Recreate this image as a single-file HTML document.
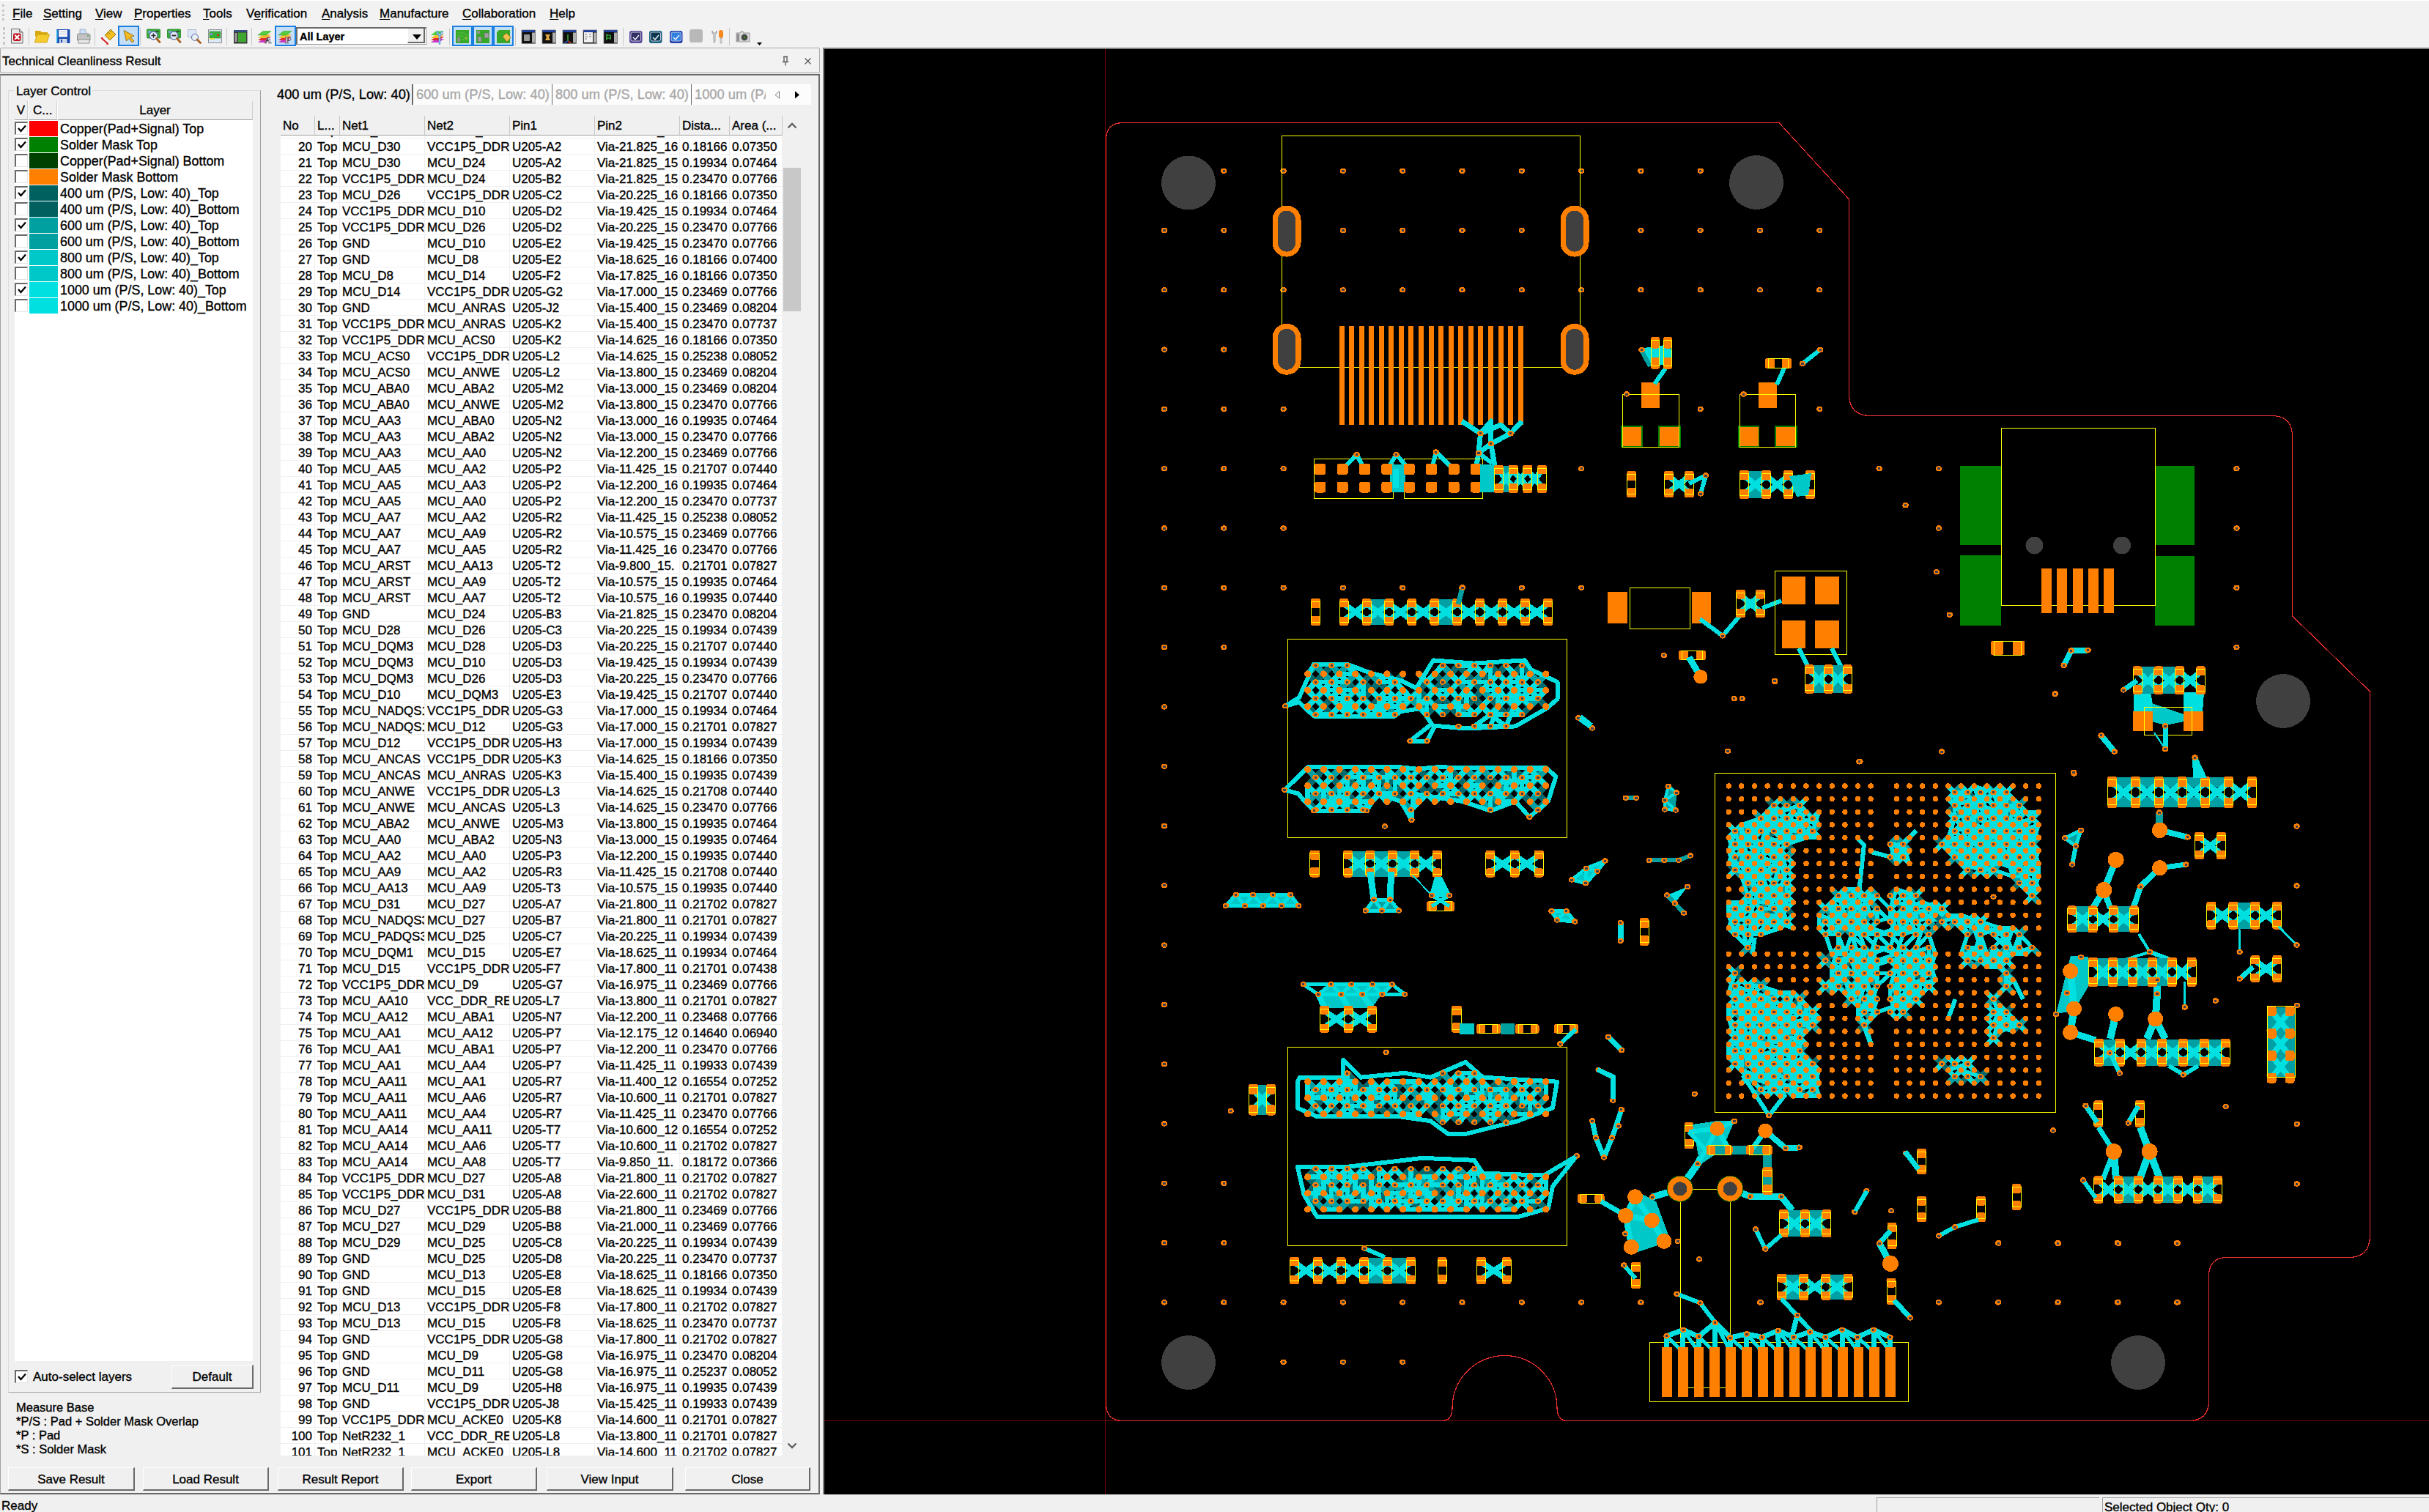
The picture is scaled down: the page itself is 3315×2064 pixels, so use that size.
<!DOCTYPE html>
<html><head><meta charset="utf-8"><style>
*{margin:0;padding:0}
html,body{width:3315px;height:2064px;overflow:hidden;background:#F0F0F0;font-family:"Liberation Sans",sans-serif;color:#000;position:relative;-webkit-text-stroke:0.35px currentColor}
#menubar{position:absolute;left:0;top:0;width:3315px;height:65px;background:#F2F2F2;border-top:1px solid #fff;box-sizing:border-box}
.menu{position:absolute;top:8px;font-size:17px;line-height:20px;white-space:nowrap}
.menu u{text-decoration:underline;text-underline-offset:2px}
.grip{position:absolute;width:3px;border-left:3px dotted #c8c8c8}
#toolbar{position:absolute;left:0;top:0;width:1120px;height:65px}
.tsep{position:absolute;top:38px;width:1px;height:24px;background:#c8c8c8}
.tsel{position:absolute;top:35px;height:24px;background:#C4DEF6;border:2px solid #1A7FE0}
svg text{-webkit-text-stroke:0}
#combo{position:absolute;left:404px;top:37px;width:175px;height:21px;background:#fff;border:1px solid #A0A0A0;border-top:2px solid #696969;border-left:2px solid #696969;font-weight:bold;font-size:14.5px;line-height:18px}
#cbtn{position:absolute;left:150px;top:0px;width:24px;height:20px;background:#F0F0F0;border-right:2px solid #696969;border-bottom:2px solid #696969;box-sizing:border-box;border-left:1px solid #fff}
#docktitle{position:absolute;left:0;top:65px;width:1117px;height:33px;border:1px solid #A8A8A8;border-radius:2px;font-size:17px;line-height:20px;background:#F2F2F2}
#dockbody{position:absolute;left:0;top:101px;width:1119px;height:1939px;border:1px solid #A0A0A0;border-top:2px solid #696969;box-sizing:border-box;border-bottom:2px solid #696969;border-right:2px solid #696969}
#grp{position:absolute;left:11px;top:123px;width:345px;height:1778px;border:1px solid #DCDCDC;box-sizing:border-box;border-right:1px solid #A0A0A0;border-bottom:1px solid #A0A0A0}
#grplabel{position:absolute;left:19px;top:115px;padding:0 3px;background:#F0F0F0;font-size:17px;line-height:20px}
#ltable{position:absolute;left:20px;top:138px;width:325px;height:1720px;background:#fff;font-size:17.5px}
.lhdr{position:absolute;top:0;height:26px;line-height:26px;background:#F0F0F0;border-right:1px solid #D0D0D0;border-bottom:1px solid #A0A0A0;box-sizing:border-box;font-size:17px}
.lcb{position:absolute;left:0;width:18px;height:18px;box-sizing:border-box;border:1px solid #fff;border-top:2px solid #696969;border-left:2px solid #696969;border-right:1px solid #E3E3E3;border-bottom:1px solid #E3E3E3;background:#fff}
#ltable .lcb{left:0}
.lsw{position:absolute;left:20px;width:39px;height:21px}
.ltx{position:absolute;left:62px;height:22px;line-height:22px;white-space:nowrap;font-size:17.9px}
.txt{position:absolute;font-size:17px;line-height:20px;white-space:nowrap}
.mb{font-size:16.5px}
.btn{position:absolute;box-sizing:border-box;border:1px solid #fff;border-right:2px solid #696969;border-bottom:2px solid #696969;background:#F0F0F0;text-align:center;font-size:17px}
#tabs{position:absolute;left:375px;top:115px;width:731px;height:28px;background:#FCFCFC;font-size:18.3px}
.tab{position:absolute;top:0;height:28px;line-height:28px;white-space:nowrap;color:#A8A8A8;padding-left:3px;box-sizing:border-box;border-right:1px solid #6A6A6A}
.tab.act{color:#000;background:#F0F0F0;border-right:2px solid #6A6A6A}
.tab:nth-child(4){border-right:none}
#mtable{position:absolute;left:382px;top:158px;width:686px;height:1829px;overflow:hidden}
.mh{position:absolute;top:0;height:27px;line-height:28px;background:#F0F0F0;border-right:1px solid #C8C8C8;border-bottom:1px solid #A0A0A0;font-size:17px;padding-left:3px;box-sizing:border-box;z-index:2;white-space:nowrap;overflow:hidden}
#mbody{position:absolute;left:0;top:27px;width:686px;height:1802px;overflow:hidden}
.mr{position:absolute;left:0;width:686px;height:22px}
.mc{position:absolute;top:0;height:22px;line-height:24px;white-space:nowrap;overflow:hidden;background:#fff;border-right:1px solid #F0F0F0;border-bottom:1px solid #F0F0F0;box-sizing:content-box;font-size:17px;padding-left:3px;box-sizing:border-box}
.mc.r{text-align:right;padding-right:3px;padding-left:0}
#sbar{position:absolute;left:1069px;top:158px;width:24px;height:1829px;background:#F0F0F0}
#sthumb{position:absolute;left:0;top:71px;width:24px;height:196px;background:#C8C8C8}
#status{position:absolute;left:0;top:2040px;width:3315px;height:24px;background:#F0F0F0;font-size:17px;line-height:24px}
.spanel{position:absolute;top:4px;height:20px;border-top:1px solid #A0A0A0;border-left:1px solid #A0A0A0;box-sizing:border-box}
#canvas{position:absolute;left:1123px;top:65px;width:2192px;height:1975px;background:#000;border-left:2px solid #808080;border-top:2px solid #808080;box-sizing:border-box;overflow:hidden}
</style></head><body>
<div id="menubar">
<div class="grip" style="left:3px;top:5px;height:22px"></div>
<span class="menu" style="left:17px"><u>F</u>ile</span>
<span class="menu" style="left:59px"><u>S</u>etting</span>
<span class="menu" style="left:130px"><u>V</u>iew</span>
<span class="menu" style="left:183px"><u>P</u>roperties</span>
<span class="menu" style="left:277px"><u>T</u>ools</span>
<span class="menu" style="left:336px">V<u>e</u>rification</span>
<span class="menu" style="left:439px"><u>A</u>nalysis</span>
<span class="menu" style="left:518px"><u>M</u>anufacture</span>
<span class="menu" style="left:631px"><u>C</u>ollaboration</span>
<span class="menu" style="left:750px"><u>H</u>elp</span>
</div>
<div id="toolbar">
<div class="grip" style="left:4px;top:37px;height:24px"></div>
<div class="tsel" style="left:161px;width:25px"></div>
<div class="tsel" style="left:375px;width:25px"></div>
<div class="tsel" style="left:617px;width:24px"></div>
<div class="tsel" style="left:645px;width:24px"></div>
<div class="tsel" style="left:673px;width:24px"></div>
<div class="tsep" style="left:39px"></div>
<div class="tsep" style="left:129px"></div>
<div class="tsep" style="left:191px"></div>
<div class="tsep" style="left:309px"></div>
<div class="tsep" style="left:343px"></div>
<div class="tsep" style="left:613px"></div>
<div class="tsep" style="left:703px"></div>
<div class="tsep" style="left:850px"></div>
<div class="tsep" style="left:995px"></div>
<svg style="position:absolute;left:0;top:0" width="1120" height="66"><g transform="translate(15,39)"><path d="M0.5 0.5h11l4.5 4.5v15h-15.5z" fill="#e8e8e8" stroke="#6a6a6a"/><path d="M11.5 0.5v4.5h4.5" fill="#c8c8c8" stroke="#6a6a6a"/><rect x="3" y="6.5" width="10.5" height="10.5" rx="2" fill="#c0101c"/><path d="M5.3 8.8l6 6M11.3 8.8l-6 6" stroke="#fff" stroke-width="2.2"/></g><g transform="translate(47,40)"><path d="M1 2h7l2 2h8v6h-17z" fill="#d8a810"/><path d="M0.5 18 L3.5 7h17l-3.5 11z" fill="#f4cc30" stroke="#c89808" stroke-width="0.8"/></g><g transform="translate(77,40)"><rect x="0" y="0" width="18.5" height="19" rx="1" fill="#1848b0"/><rect x="3" y="1" width="12" height="9.5" fill="#f4f4f8"/><path d="M4 3.5h10M4 6h10" stroke="#c0c8e0" stroke-width="0.8"/><rect x="4" y="13" width="10.5" height="6" fill="#d0d8e8"/><rect x="6" y="14" width="2" height="4" fill="#1848b0"/><rect x="0" y="1" width="1.5" height="17" fill="#30c0f0"/></g><g transform="translate(105,39)"><path d="M4 1h7l3 7h-10z" fill="#c8e0f8" stroke="#8090a0" stroke-width="0.6"/><path d="M0.5 9 Q0.5 7 3 7 h12 q3 0 3 2 v7 h-17.5z" fill="#c4c4c4" stroke="#7a7a7a" stroke-width="0.8"/><rect x="2" y="15" width="15" height="5" fill="#e8e8e8" stroke="#7a7a7a" stroke-width="0.8"/><circle cx="15" cy="10" r="0.9" fill="#30a030"/></g><g transform="translate(138,40)"><path d="M5 8 L13 0 L20 7 L12 15 Z" fill="#f0c020" stroke="#806010" stroke-width="0.8"/><path d="M8 6l2 2M10 4l2 2M12 2l2 2" stroke="#806010" stroke-width="0.8"/><path d="M0.5 12 L9.5 20" stroke="#d81818" stroke-width="1.8"/><path d="M0 11l3 0.5l-1.5 2.5zM10 21l-3-0.5l1.5-2.5z" fill="#d81818"/></g><g transform="translate(168,41)"><path d="M1 0.5 L15 8 L10 9.5 L15 15 L12.5 17 L8 11.5 L4.5 15 Z" fill="#f4b820" stroke="#806010" stroke-width="0.8"/></g><g transform="translate(200,39)"><rect x="0.5" y="1" width="18" height="12" rx="1" fill="#38b038" stroke="#208020" stroke-width="0.8"/><rect x="2" y="3" width="4" height="3" fill="#80a0e0"/><path d="M12 4h5" stroke="#303030" stroke-width="1.5"/><circle cx="9.5" cy="9.5" r="5.5" fill="#e4ecfc" stroke="#6070b0" stroke-width="1.3"/><path d="M6.5 9.5h6M9.5 6.5v6" stroke="#303030" stroke-width="1.6"/><path d="M13.5 13.5 L18 18.5" stroke="#a86020" stroke-width="2.8" stroke-linecap="round"/></g><g transform="translate(228,39)"><rect x="0.5" y="1" width="18" height="12" rx="1" fill="#38b038" stroke="#208020" stroke-width="0.8"/><rect x="2" y="3" width="4" height="3" fill="#80a0e0"/><path d="M12 4h5" stroke="#303030" stroke-width="1.5"/><circle cx="9.5" cy="9.5" r="5.5" fill="#e4ecfc" stroke="#6070b0" stroke-width="1.3"/><path d="M6.5 9.5h6" stroke="#303030" stroke-width="2"/><path d="M13.5 13.5 L18 18.5" stroke="#a86020" stroke-width="2.8" stroke-linecap="round"/></g><g transform="translate(256,40)"><rect x="0.5" y="0.5" width="11" height="10" fill="#dce8f8" stroke="#8898b0" stroke-dasharray="1.2 0.8"/><circle cx="10" cy="11" r="4.5" fill="#e8f0fc" stroke="#6878a8" stroke-width="1.2"/><path d="M13 14 L17.5 18.5" stroke="#a86020" stroke-width="2.8" stroke-linecap="round"/></g><g transform="translate(284,40)"><rect x="0.5" y="0.5" width="18" height="18" fill="#dce8f8" stroke="#505050" stroke-dasharray="1.2 0.8"/><rect x="2" y="3" width="15" height="9" fill="#38b038" stroke="#208020" stroke-width="0.6"/><rect x="3" y="5" width="3" height="3" fill="#8090d0"/><rect x="12" y="7" width="3" height="2" fill="#e02020"/><rect x="2" y="12" width="7" height="2" fill="#e0e040"/></g><g transform="translate(319,41)"><rect x="0" y="0" width="18.5" height="18.5" fill="#3a3a3a"/><rect x="0.5" y="0.5" width="17.5" height="1.5" fill="#3060c0"/><rect x="1.5" y="4" width="3" height="12" fill="#a0a0a0"/><rect x="6" y="3.5" width="11" height="13" fill="#40a830"/></g><g transform="translate(352,42)"><path d="M0 16 L11 16 L18 11 L7 11Z" fill="#c838c8"/><path d="M0 13 L11 13 L18 8 L7 8Z" fill="#e03030"/><path d="M0 10 L11 10 L18 5 L7 5Z" fill="#f0c030"/><path d="M0 6 L11 6 L18 0.5 L7 0.5Z" fill="#50d040" stroke="#309020" stroke-width="0.5"/><text x="9" y="17" font-family="Liberation Serif" font-weight="bold" font-size="13" fill="#fff" stroke="#404040" stroke-width="0.6">A</text></g><g transform="translate(380,42)"><path d="M0 16 L11 16 L18 11 L7 11Z" fill="#c838c8"/><path d="M0 13 L11 13 L18 8 L7 8Z" fill="#e03030"/><path d="M0 10 L11 10 L18 5 L7 5Z" fill="#f0c030"/><path d="M0 6 L11 6 L18 0.5 L7 0.5Z" fill="#50d040" stroke="#309020" stroke-width="0.5"/><text x="9" y="17" font-family="Liberation Serif" font-weight="bold" font-size="13" fill="#fff" stroke="#404040" stroke-width="0.6">P</text></g><g transform="translate(588,42)"><path d="M0 16 L11 16 L18 11 L7 11Z" fill="#c838c8"/><path d="M0 13 L11 13 L18 8 L7 8Z" fill="#e03030"/><path d="M0 10 L11 10 L18 5 L7 5Z" fill="#f0c030"/><path d="M0 6 L11 6 L18 0.5 L7 0.5Z" fill="#50d040"/><path d="M9 1.5 q0 4 3 4 q3 0 3 -4 M12 5.5 v12" stroke="#3a90e0" stroke-width="2.5" fill="none" stroke-linecap="round"/><path d="M9 1.5 q0 4 3 4 q3 0 3 -4 M12 5.5 v12" stroke="#e8f4ff" stroke-width="0.8" fill="none"/></g><g transform="translate(622,41)"><rect x="0" y="0" width="18" height="18" fill="#38a828"/><path d="M2 4h9l3 3h4M2 8h7l2 2h7M6 13h12" stroke="#70d060" stroke-width="0.6" fill="none"/><rect x="2" y="10" width="4" height="6" fill="#909090"/><circle cx="14" cy="11" r="1" fill="#f0c030"/></g><g transform="translate(650,41)"><rect x="0" y="0" width="18" height="18" fill="#38a828"/><rect x="1" y="1" width="4" height="4" fill="#909090"/><rect x="11" y="4" width="6" height="7" fill="#a0a0a0" stroke="#606060" stroke-width="0.5"/><rect x="2" y="9" width="5" height="7" fill="#a0a0a0" stroke="#606060" stroke-width="0.5"/></g><g transform="translate(678,41)"><path d="M3 0h15v18h-18v-15z" fill="#38a828"/><path d="M8 9 L13 4 L19 10 L14 16 Z" fill="#f0c050" stroke="#a07010" stroke-width="0.8"/></g><g transform="translate(712,41)"><rect x="0" y="0" width="18.5" height="18.5" fill="#101010" stroke="#808080" stroke-width="0.8"/><rect x="0.5" y="0.5" width="17.5" height="2" fill="#2050d0"/><rect x="3" y="6" width="8" height="9" rx="1" fill="#9a9a9a"/><rect x="14" y="3.5" width="4" height="14" fill="#b0b0b0"/></g><g transform="translate(740,41)"><rect x="0" y="0" width="18.5" height="18.5" fill="#101010" stroke="#808080" stroke-width="0.8"/><rect x="0.5" y="0.5" width="17.5" height="2" fill="#2050d0"/><path d="M4 6h7l-2 4l2 4h-7l2-4z" fill="#e0a840"/><rect x="14" y="3.5" width="4" height="14" fill="#b0b0b0"/></g><g transform="translate(768,41)"><rect x="0" y="0" width="18.5" height="18.5" fill="#101010" stroke="#808080" stroke-width="0.8"/><rect x="0.5" y="0.5" width="17.5" height="2" fill="#2050d0"/><path d="M7 15V6M7 15L2 18M7 15L12 18" stroke="#40c040" stroke-width="1.3"/><path d="M7 15L2 18" stroke="#2040e0" stroke-width="1.3"/><path d="M7 15L12 18" stroke="#e02020" stroke-width="1.3"/><rect x="14" y="3.5" width="4" height="14" fill="#b0b0b0"/></g><g transform="translate(796,41)"><rect x="0" y="0" width="18.5" height="18.5" fill="#101010" stroke="#808080" stroke-width="0.8"/><rect x="0.5" y="0.5" width="17.5" height="2" fill="#2050d0"/><rect x="1" y="3" width="12" height="14" fill="#f0f0f0"/><path d="M2 6h3M2 9h4M2 12h3M8 6h3M8 9h3" stroke="#606060" stroke-width="0.8"/><rect x="14" y="3.5" width="4" height="14" fill="#b0b0b0"/></g><g transform="translate(824,41)"><rect x="0" y="0" width="18.5" height="18.5" fill="#101010" stroke="#808080" stroke-width="0.8"/><rect x="0.5" y="0.5" width="17.5" height="2" fill="#2050d0"/><path d="M4 5v9M4 7h5M4 11h5M9 7v6" stroke="#40d040" stroke-width="1.2" fill="none"/><rect x="14" y="3.5" width="4" height="14" fill="#b0b0b0"/></g><g transform="translate(859,42)"><rect x="0" y="0" width="17.5" height="17" rx="3" fill="#5a4898"/><rect x="2" y="2" width="13.5" height="12" rx="2" fill="#303068" stroke="#d8d8e8" stroke-width="0.9"/><path d="M5 9l3 3l5-6" stroke="#fff" stroke-width="1.3" fill="none"/></g><g transform="translate(886,42)"><rect x="0" y="0" width="17.5" height="17" rx="3" fill="#1a6080"/><rect x="2" y="2" width="13.5" height="12" rx="2" fill="#0a3850" stroke="#d8d8e8" stroke-width="0.9"/><path d="M5 9l3 3l5-6" stroke="#fff" stroke-width="1.3" fill="none"/></g><g transform="translate(914,42)"><rect x="0" y="0" width="17.5" height="17" rx="3" fill="#2040b0"/><rect x="2" y="2" width="13.5" height="12" rx="2" fill="#3080e0" stroke="#d8d8e8" stroke-width="0.9"/><path d="M5 9l3 3l5-6" stroke="#fff" stroke-width="1.3" fill="none"/></g><g transform="translate(941,40)"><rect x="0" y="0" width="18" height="18" rx="3" fill="#b8b8b8"/></g><g transform="translate(970,41)"><path d="M2 1 q-1 4 2 5 v10 q0 3 2 0 v-10 q3 -1 2 -5 l-1 3 h-4z" fill="#e0e0e0" stroke="#909090" stroke-width="0.8"/><rect x="11" y="0" width="6" height="11" rx="3" fill="#f88820"/><rect x="13" y="11" width="2" height="7" fill="#e0e0e0" stroke="#909090" stroke-width="0.6"/></g><g transform="translate(1004,41)"><path d="M1 4 h5 l1-2 h3 l1 2 h8 v12 h-18z" fill="#d8d8d8" stroke="#808080" stroke-width="0.8"/><rect x="1.5" y="5" width="3.5" height="10" fill="#909090"/><circle cx="12" cy="10" r="4.5" fill="#404040" stroke="#b0b0b0" stroke-width="1.2"/><circle cx="12" cy="10" r="1.6" fill="#3a8a20"/></g><path d="M1033 58 h7 l-3.5 4z" fill="#000"/></svg>
<div id="combo"><span style="position:absolute;left:3px;top:2px">All Layer</span><div id="cbtn"><svg width="12" height="7" style="position:absolute;left:6px;top:8px"><path d="M0 0h12l-6 7z" fill="#000"/></svg></div></div>
</div>
<div id="docktitle"><span style="position:absolute;left:2px;top:8px">Technical Cleanliness Result</span>
<svg style="position:absolute;left:1064px;top:10px" width="14" height="14" viewBox="0 0 14 14"><path d="M4 1.5h6M5 1.5v7M9 1.5v7M3 8.5h8M7 8.5v5" stroke="#555" stroke-width="1.3" fill="none"/></svg>
<svg style="position:absolute;left:1097px;top:13px" width="9" height="9" viewBox="0 0 9 9"><path d="M0.5 0.5L8.5 8.5M8.5 0.5L0.5 8.5" stroke="#555" stroke-width="1.2"/></svg>
</div>
<div id="dockbody"></div>
<div id="grp"></div><div id="grplabel">Layer Control</div>
<div id="ltable">
<div class="lhdr" style="left:0;width:18px;text-align:center">V</div>
<div class="lhdr" style="left:19px;width:39px;padding-left:6px;box-sizing:border-box">C...</div>
<div class="lhdr" style="left:59px;width:266px;text-align:center">Layer</div>
<div class="lcb" style="top:28px"><svg width="12" height="11" viewBox="0 0 12 11" style="position:absolute;left:2px;top:2px"><path d="M1 5 L4.5 9 L11 1.5" stroke="#000" stroke-width="2.2" fill="none"/></svg></div>
<div class="lsw" style="top:27px;background:#FF0000"></div>
<div class="ltx" style="top:27px">Copper(Pad+Signal) Top</div>
<div class="lcb" style="top:50px"><svg width="12" height="11" viewBox="0 0 12 11" style="position:absolute;left:2px;top:2px"><path d="M1 5 L4.5 9 L11 1.5" stroke="#000" stroke-width="2.2" fill="none"/></svg></div>
<div class="lsw" style="top:49px;background:#008000"></div>
<div class="ltx" style="top:49px">Solder Mask Top</div>
<div class="lcb" style="top:72px"></div>
<div class="lsw" style="top:71px;background:#004000"></div>
<div class="ltx" style="top:71px">Copper(Pad+Signal) Bottom</div>
<div class="lcb" style="top:94px"></div>
<div class="lsw" style="top:93px;background:#FF8000"></div>
<div class="ltx" style="top:93px">Solder Mask Bottom</div>
<div class="lcb" style="top:116px"><svg width="12" height="11" viewBox="0 0 12 11" style="position:absolute;left:2px;top:2px"><path d="M1 5 L4.5 9 L11 1.5" stroke="#000" stroke-width="2.2" fill="none"/></svg></div>
<div class="lsw" style="top:115px;background:#006060"></div>
<div class="ltx" style="top:115px">400 um (P/S, Low: 40)_Top</div>
<div class="lcb" style="top:138px"></div>
<div class="lsw" style="top:137px;background:#006060"></div>
<div class="ltx" style="top:137px">400 um (P/S, Low: 40)_Bottom</div>
<div class="lcb" style="top:160px"><svg width="12" height="11" viewBox="0 0 12 11" style="position:absolute;left:2px;top:2px"><path d="M1 5 L4.5 9 L11 1.5" stroke="#000" stroke-width="2.2" fill="none"/></svg></div>
<div class="lsw" style="top:159px;background:#00A0A0"></div>
<div class="ltx" style="top:159px">600 um (P/S, Low: 40)_Top</div>
<div class="lcb" style="top:182px"></div>
<div class="lsw" style="top:181px;background:#00A0A0"></div>
<div class="ltx" style="top:181px">600 um (P/S, Low: 40)_Bottom</div>
<div class="lcb" style="top:204px"><svg width="12" height="11" viewBox="0 0 12 11" style="position:absolute;left:2px;top:2px"><path d="M1 5 L4.5 9 L11 1.5" stroke="#000" stroke-width="2.2" fill="none"/></svg></div>
<div class="lsw" style="top:203px;background:#00C8C8"></div>
<div class="ltx" style="top:203px">800 um (P/S, Low: 40)_Top</div>
<div class="lcb" style="top:226px"></div>
<div class="lsw" style="top:225px;background:#00C8C8"></div>
<div class="ltx" style="top:225px">800 um (P/S, Low: 40)_Bottom</div>
<div class="lcb" style="top:248px"><svg width="12" height="11" viewBox="0 0 12 11" style="position:absolute;left:2px;top:2px"><path d="M1 5 L4.5 9 L11 1.5" stroke="#000" stroke-width="2.2" fill="none"/></svg></div>
<div class="lsw" style="top:247px;background:#00E0E0"></div>
<div class="ltx" style="top:247px">1000 um (P/S, Low: 40)_Top</div>
<div class="lcb" style="top:270px"></div>
<div class="lsw" style="top:269px;background:#00E0E0"></div>
<div class="ltx" style="top:269px">1000 um (P/S, Low: 40)_Bottom</div>
</div>
<div class="lcb" style="left:20px;top:1870px"><svg width="12" height="11" viewBox="0 0 12 11" style="position:absolute;left:2px;top:2px"><path d="M1 5 L4.5 9 L11 1.5" stroke="#000" stroke-width="2.2" fill="none"/></svg></div>
<div class="txt" style="left:45px;top:1870px">Auto-select layers</div>
<div class="btn" style="left:234px;top:1863px;width:112px;height:33px;line-height:31px">Default</div>
<div class="txt mb" style="left:22px;top:1911px">Measure Base</div>
<div class="txt mb" style="left:22px;top:1930px">*P/S : Pad + Solder Mask Overlap</div>
<div class="txt mb" style="left:22px;top:1949px">*P : Pad</div>
<div class="txt mb" style="left:22px;top:1968px">*S : Solder Mask</div>
<div id="tabs">
<div class="tab act" style="left:0px;width:189px">400 um (P/S, Low: 40)</div>
<div class="tab" style="left:190px;width:189px">600 um (P/S, Low: 40)</div>
<div class="tab" style="left:380px;width:189px">800 um (P/S, Low: 40)</div>
<div class="tab" style="left:570px;width:100px;overflow:hidden">1000 um (P/S, Low: 40)</div>
<div style="position:absolute;left:675px;top:0;width:57px;height:28px;background:#FCFCFC"></div>
<svg style="position:absolute;left:682px;top:9px" width="8" height="11"><path d="M6.5 0.8 L1 5.5 L6.5 10.2 Z" fill="none" stroke="#777" stroke-width="1"/></svg>
<svg style="position:absolute;left:709px;top:9px" width="8" height="11"><path d="M1 0.5 L7 5.5 L1 10.5 Z" fill="#000"/></svg>
</div>
<div id="mtable">
<div class="mh" style="left:1px;width:47px">No</div>
<div class="mh" style="left:48px;width:34px">L...</div>
<div class="mh" style="left:82px;width:116px">Net1</div>
<div class="mh" style="left:198px;width:116px">Net2</div>
<div class="mh" style="left:314px;width:116px">Pin1</div>
<div class="mh" style="left:430px;width:116px">Pin2</div>
<div class="mh" style="left:546px;width:68px">Dista...</div>
<div class="mh" style="left:614px;width:72px">Area (...</div>
<div id="mbody">
<div class="mr" style="top:-18.5px">
<div class="mc r" style="left:1px;width:47px">19</div>
<div class="mc" style="left:48px;width:34px">Top</div>
<div class="mc" style="left:82px;width:116px">MCU_D28</div>
<div class="mc" style="left:198px;width:116px">VCC1P5_DDR</div>
<div class="mc" style="left:314px;width:116px">U205-A1</div>
<div class="mc" style="left:430px;width:116px">Via-21.825_16</div>
<div class="mc" style="left:546px;width:68px">0.18166</div>
<div class="mc" style="left:614px;width:72px">0.07350</div>
</div>
<div class="mr" style="top:3.5px">
<div class="mc r" style="left:1px;width:47px">20</div>
<div class="mc" style="left:48px;width:34px">Top</div>
<div class="mc" style="left:82px;width:116px">MCU_D30</div>
<div class="mc" style="left:198px;width:116px">VCC1P5_DDR</div>
<div class="mc" style="left:314px;width:116px">U205-A2</div>
<div class="mc" style="left:430px;width:116px">Via-21.825_16</div>
<div class="mc" style="left:546px;width:68px">0.18166</div>
<div class="mc" style="left:614px;width:72px">0.07350</div>
</div>
<div class="mr" style="top:25.5px">
<div class="mc r" style="left:1px;width:47px">21</div>
<div class="mc" style="left:48px;width:34px">Top</div>
<div class="mc" style="left:82px;width:116px">MCU_D30</div>
<div class="mc" style="left:198px;width:116px">MCU_D24</div>
<div class="mc" style="left:314px;width:116px">U205-A2</div>
<div class="mc" style="left:430px;width:116px">Via-21.825_15</div>
<div class="mc" style="left:546px;width:68px">0.19934</div>
<div class="mc" style="left:614px;width:72px">0.07464</div>
</div>
<div class="mr" style="top:47.5px">
<div class="mc r" style="left:1px;width:47px">22</div>
<div class="mc" style="left:48px;width:34px">Top</div>
<div class="mc" style="left:82px;width:116px">VCC1P5_DDR</div>
<div class="mc" style="left:198px;width:116px">MCU_D24</div>
<div class="mc" style="left:314px;width:116px">U205-B2</div>
<div class="mc" style="left:430px;width:116px">Via-21.825_15</div>
<div class="mc" style="left:546px;width:68px">0.23470</div>
<div class="mc" style="left:614px;width:72px">0.07766</div>
</div>
<div class="mr" style="top:69.5px">
<div class="mc r" style="left:1px;width:47px">23</div>
<div class="mc" style="left:48px;width:34px">Top</div>
<div class="mc" style="left:82px;width:116px">MCU_D26</div>
<div class="mc" style="left:198px;width:116px">VCC1P5_DDR</div>
<div class="mc" style="left:314px;width:116px">U205-C2</div>
<div class="mc" style="left:430px;width:116px">Via-20.225_16</div>
<div class="mc" style="left:546px;width:68px">0.18166</div>
<div class="mc" style="left:614px;width:72px">0.07350</div>
</div>
<div class="mr" style="top:91.5px">
<div class="mc r" style="left:1px;width:47px">24</div>
<div class="mc" style="left:48px;width:34px">Top</div>
<div class="mc" style="left:82px;width:116px">VCC1P5_DDR</div>
<div class="mc" style="left:198px;width:116px">MCU_D10</div>
<div class="mc" style="left:314px;width:116px">U205-D2</div>
<div class="mc" style="left:430px;width:116px">Via-19.425_15</div>
<div class="mc" style="left:546px;width:68px">0.19934</div>
<div class="mc" style="left:614px;width:72px">0.07464</div>
</div>
<div class="mr" style="top:113.5px">
<div class="mc r" style="left:1px;width:47px">25</div>
<div class="mc" style="left:48px;width:34px">Top</div>
<div class="mc" style="left:82px;width:116px">VCC1P5_DDR</div>
<div class="mc" style="left:198px;width:116px">MCU_D26</div>
<div class="mc" style="left:314px;width:116px">U205-D2</div>
<div class="mc" style="left:430px;width:116px">Via-20.225_15</div>
<div class="mc" style="left:546px;width:68px">0.23470</div>
<div class="mc" style="left:614px;width:72px">0.07766</div>
</div>
<div class="mr" style="top:135.5px">
<div class="mc r" style="left:1px;width:47px">26</div>
<div class="mc" style="left:48px;width:34px">Top</div>
<div class="mc" style="left:82px;width:116px">GND</div>
<div class="mc" style="left:198px;width:116px">MCU_D10</div>
<div class="mc" style="left:314px;width:116px">U205-E2</div>
<div class="mc" style="left:430px;width:116px">Via-19.425_15</div>
<div class="mc" style="left:546px;width:68px">0.23470</div>
<div class="mc" style="left:614px;width:72px">0.07766</div>
</div>
<div class="mr" style="top:157.5px">
<div class="mc r" style="left:1px;width:47px">27</div>
<div class="mc" style="left:48px;width:34px">Top</div>
<div class="mc" style="left:82px;width:116px">GND</div>
<div class="mc" style="left:198px;width:116px">MCU_D8</div>
<div class="mc" style="left:314px;width:116px">U205-E2</div>
<div class="mc" style="left:430px;width:116px">Via-18.625_16</div>
<div class="mc" style="left:546px;width:68px">0.18166</div>
<div class="mc" style="left:614px;width:72px">0.07400</div>
</div>
<div class="mr" style="top:179.5px">
<div class="mc r" style="left:1px;width:47px">28</div>
<div class="mc" style="left:48px;width:34px">Top</div>
<div class="mc" style="left:82px;width:116px">MCU_D8</div>
<div class="mc" style="left:198px;width:116px">MCU_D14</div>
<div class="mc" style="left:314px;width:116px">U205-F2</div>
<div class="mc" style="left:430px;width:116px">Via-17.825_16</div>
<div class="mc" style="left:546px;width:68px">0.18166</div>
<div class="mc" style="left:614px;width:72px">0.07350</div>
</div>
<div class="mr" style="top:201.5px">
<div class="mc r" style="left:1px;width:47px">29</div>
<div class="mc" style="left:48px;width:34px">Top</div>
<div class="mc" style="left:82px;width:116px">MCU_D14</div>
<div class="mc" style="left:198px;width:116px">VCC1P5_DDR</div>
<div class="mc" style="left:314px;width:116px">U205-G2</div>
<div class="mc" style="left:430px;width:116px">Via-17.000_15</div>
<div class="mc" style="left:546px;width:68px">0.23469</div>
<div class="mc" style="left:614px;width:72px">0.07766</div>
</div>
<div class="mr" style="top:223.5px">
<div class="mc r" style="left:1px;width:47px">30</div>
<div class="mc" style="left:48px;width:34px">Top</div>
<div class="mc" style="left:82px;width:116px">GND</div>
<div class="mc" style="left:198px;width:116px">MCU_ANRAS</div>
<div class="mc" style="left:314px;width:116px">U205-J2</div>
<div class="mc" style="left:430px;width:116px">Via-15.400_15</div>
<div class="mc" style="left:546px;width:68px">0.23469</div>
<div class="mc" style="left:614px;width:72px">0.08204</div>
</div>
<div class="mr" style="top:245.5px">
<div class="mc r" style="left:1px;width:47px">31</div>
<div class="mc" style="left:48px;width:34px">Top</div>
<div class="mc" style="left:82px;width:116px">VCC1P5_DDR</div>
<div class="mc" style="left:198px;width:116px">MCU_ANRAS</div>
<div class="mc" style="left:314px;width:116px">U205-K2</div>
<div class="mc" style="left:430px;width:116px">Via-15.400_15</div>
<div class="mc" style="left:546px;width:68px">0.23470</div>
<div class="mc" style="left:614px;width:72px">0.07737</div>
</div>
<div class="mr" style="top:267.5px">
<div class="mc r" style="left:1px;width:47px">32</div>
<div class="mc" style="left:48px;width:34px">Top</div>
<div class="mc" style="left:82px;width:116px">VCC1P5_DDR</div>
<div class="mc" style="left:198px;width:116px">MCU_ACS0</div>
<div class="mc" style="left:314px;width:116px">U205-K2</div>
<div class="mc" style="left:430px;width:116px">Via-14.625_16</div>
<div class="mc" style="left:546px;width:68px">0.18166</div>
<div class="mc" style="left:614px;width:72px">0.07350</div>
</div>
<div class="mr" style="top:289.5px">
<div class="mc r" style="left:1px;width:47px">33</div>
<div class="mc" style="left:48px;width:34px">Top</div>
<div class="mc" style="left:82px;width:116px">MCU_ACS0</div>
<div class="mc" style="left:198px;width:116px">VCC1P5_DDR</div>
<div class="mc" style="left:314px;width:116px">U205-L2</div>
<div class="mc" style="left:430px;width:116px">Via-14.625_15</div>
<div class="mc" style="left:546px;width:68px">0.25238</div>
<div class="mc" style="left:614px;width:72px">0.08052</div>
</div>
<div class="mr" style="top:311.5px">
<div class="mc r" style="left:1px;width:47px">34</div>
<div class="mc" style="left:48px;width:34px">Top</div>
<div class="mc" style="left:82px;width:116px">MCU_ACS0</div>
<div class="mc" style="left:198px;width:116px">MCU_ANWE</div>
<div class="mc" style="left:314px;width:116px">U205-L2</div>
<div class="mc" style="left:430px;width:116px">Via-13.800_15</div>
<div class="mc" style="left:546px;width:68px">0.23469</div>
<div class="mc" style="left:614px;width:72px">0.08204</div>
</div>
<div class="mr" style="top:333.5px">
<div class="mc r" style="left:1px;width:47px">35</div>
<div class="mc" style="left:48px;width:34px">Top</div>
<div class="mc" style="left:82px;width:116px">MCU_ABA0</div>
<div class="mc" style="left:198px;width:116px">MCU_ABA2</div>
<div class="mc" style="left:314px;width:116px">U205-M2</div>
<div class="mc" style="left:430px;width:116px">Via-13.000_15</div>
<div class="mc" style="left:546px;width:68px">0.23469</div>
<div class="mc" style="left:614px;width:72px">0.08204</div>
</div>
<div class="mr" style="top:355.5px">
<div class="mc r" style="left:1px;width:47px">36</div>
<div class="mc" style="left:48px;width:34px">Top</div>
<div class="mc" style="left:82px;width:116px">MCU_ABA0</div>
<div class="mc" style="left:198px;width:116px">MCU_ANWE</div>
<div class="mc" style="left:314px;width:116px">U205-M2</div>
<div class="mc" style="left:430px;width:116px">Via-13.800_15</div>
<div class="mc" style="left:546px;width:68px">0.23470</div>
<div class="mc" style="left:614px;width:72px">0.07766</div>
</div>
<div class="mr" style="top:377.5px">
<div class="mc r" style="left:1px;width:47px">37</div>
<div class="mc" style="left:48px;width:34px">Top</div>
<div class="mc" style="left:82px;width:116px">MCU_AA3</div>
<div class="mc" style="left:198px;width:116px">MCU_ABA0</div>
<div class="mc" style="left:314px;width:116px">U205-N2</div>
<div class="mc" style="left:430px;width:116px">Via-13.000_16</div>
<div class="mc" style="left:546px;width:68px">0.19935</div>
<div class="mc" style="left:614px;width:72px">0.07464</div>
</div>
<div class="mr" style="top:399.5px">
<div class="mc r" style="left:1px;width:47px">38</div>
<div class="mc" style="left:48px;width:34px">Top</div>
<div class="mc" style="left:82px;width:116px">MCU_AA3</div>
<div class="mc" style="left:198px;width:116px">MCU_ABA2</div>
<div class="mc" style="left:314px;width:116px">U205-N2</div>
<div class="mc" style="left:430px;width:116px">Via-13.000_15</div>
<div class="mc" style="left:546px;width:68px">0.23470</div>
<div class="mc" style="left:614px;width:72px">0.07766</div>
</div>
<div class="mr" style="top:421.5px">
<div class="mc r" style="left:1px;width:47px">39</div>
<div class="mc" style="left:48px;width:34px">Top</div>
<div class="mc" style="left:82px;width:116px">MCU_AA3</div>
<div class="mc" style="left:198px;width:116px">MCU_AA0</div>
<div class="mc" style="left:314px;width:116px">U205-N2</div>
<div class="mc" style="left:430px;width:116px">Via-12.200_15</div>
<div class="mc" style="left:546px;width:68px">0.23469</div>
<div class="mc" style="left:614px;width:72px">0.07766</div>
</div>
<div class="mr" style="top:443.5px">
<div class="mc r" style="left:1px;width:47px">40</div>
<div class="mc" style="left:48px;width:34px">Top</div>
<div class="mc" style="left:82px;width:116px">MCU_AA5</div>
<div class="mc" style="left:198px;width:116px">MCU_AA2</div>
<div class="mc" style="left:314px;width:116px">U205-P2</div>
<div class="mc" style="left:430px;width:116px">Via-11.425_15</div>
<div class="mc" style="left:546px;width:68px">0.21707</div>
<div class="mc" style="left:614px;width:72px">0.07440</div>
</div>
<div class="mr" style="top:465.5px">
<div class="mc r" style="left:1px;width:47px">41</div>
<div class="mc" style="left:48px;width:34px">Top</div>
<div class="mc" style="left:82px;width:116px">MCU_AA5</div>
<div class="mc" style="left:198px;width:116px">MCU_AA3</div>
<div class="mc" style="left:314px;width:116px">U205-P2</div>
<div class="mc" style="left:430px;width:116px">Via-12.200_16</div>
<div class="mc" style="left:546px;width:68px">0.19935</div>
<div class="mc" style="left:614px;width:72px">0.07464</div>
</div>
<div class="mr" style="top:487.5px">
<div class="mc r" style="left:1px;width:47px">42</div>
<div class="mc" style="left:48px;width:34px">Top</div>
<div class="mc" style="left:82px;width:116px">MCU_AA5</div>
<div class="mc" style="left:198px;width:116px">MCU_AA0</div>
<div class="mc" style="left:314px;width:116px">U205-P2</div>
<div class="mc" style="left:430px;width:116px">Via-12.200_15</div>
<div class="mc" style="left:546px;width:68px">0.23470</div>
<div class="mc" style="left:614px;width:72px">0.07737</div>
</div>
<div class="mr" style="top:509.5px">
<div class="mc r" style="left:1px;width:47px">43</div>
<div class="mc" style="left:48px;width:34px">Top</div>
<div class="mc" style="left:82px;width:116px">MCU_AA7</div>
<div class="mc" style="left:198px;width:116px">MCU_AA2</div>
<div class="mc" style="left:314px;width:116px">U205-R2</div>
<div class="mc" style="left:430px;width:116px">Via-11.425_15</div>
<div class="mc" style="left:546px;width:68px">0.25238</div>
<div class="mc" style="left:614px;width:72px">0.08052</div>
</div>
<div class="mr" style="top:531.5px">
<div class="mc r" style="left:1px;width:47px">44</div>
<div class="mc" style="left:48px;width:34px">Top</div>
<div class="mc" style="left:82px;width:116px">MCU_AA7</div>
<div class="mc" style="left:198px;width:116px">MCU_AA9</div>
<div class="mc" style="left:314px;width:116px">U205-R2</div>
<div class="mc" style="left:430px;width:116px">Via-10.575_15</div>
<div class="mc" style="left:546px;width:68px">0.23469</div>
<div class="mc" style="left:614px;width:72px">0.07766</div>
</div>
<div class="mr" style="top:553.5px">
<div class="mc r" style="left:1px;width:47px">45</div>
<div class="mc" style="left:48px;width:34px">Top</div>
<div class="mc" style="left:82px;width:116px">MCU_AA7</div>
<div class="mc" style="left:198px;width:116px">MCU_AA5</div>
<div class="mc" style="left:314px;width:116px">U205-R2</div>
<div class="mc" style="left:430px;width:116px">Via-11.425_16</div>
<div class="mc" style="left:546px;width:68px">0.23470</div>
<div class="mc" style="left:614px;width:72px">0.07766</div>
</div>
<div class="mr" style="top:575.5px">
<div class="mc r" style="left:1px;width:47px">46</div>
<div class="mc" style="left:48px;width:34px">Top</div>
<div class="mc" style="left:82px;width:116px">MCU_ARST</div>
<div class="mc" style="left:198px;width:116px">MCU_AA13</div>
<div class="mc" style="left:314px;width:116px">U205-T2</div>
<div class="mc" style="left:430px;width:116px">Via-9.800_15.</div>
<div class="mc" style="left:546px;width:68px">0.21701</div>
<div class="mc" style="left:614px;width:72px">0.07827</div>
</div>
<div class="mr" style="top:597.5px">
<div class="mc r" style="left:1px;width:47px">47</div>
<div class="mc" style="left:48px;width:34px">Top</div>
<div class="mc" style="left:82px;width:116px">MCU_ARST</div>
<div class="mc" style="left:198px;width:116px">MCU_AA9</div>
<div class="mc" style="left:314px;width:116px">U205-T2</div>
<div class="mc" style="left:430px;width:116px">Via-10.575_15</div>
<div class="mc" style="left:546px;width:68px">0.19935</div>
<div class="mc" style="left:614px;width:72px">0.07464</div>
</div>
<div class="mr" style="top:619.5px">
<div class="mc r" style="left:1px;width:47px">48</div>
<div class="mc" style="left:48px;width:34px">Top</div>
<div class="mc" style="left:82px;width:116px">MCU_ARST</div>
<div class="mc" style="left:198px;width:116px">MCU_AA7</div>
<div class="mc" style="left:314px;width:116px">U205-T2</div>
<div class="mc" style="left:430px;width:116px">Via-10.575_16</div>
<div class="mc" style="left:546px;width:68px">0.19935</div>
<div class="mc" style="left:614px;width:72px">0.07440</div>
</div>
<div class="mr" style="top:641.5px">
<div class="mc r" style="left:1px;width:47px">49</div>
<div class="mc" style="left:48px;width:34px">Top</div>
<div class="mc" style="left:82px;width:116px">GND</div>
<div class="mc" style="left:198px;width:116px">MCU_D24</div>
<div class="mc" style="left:314px;width:116px">U205-B3</div>
<div class="mc" style="left:430px;width:116px">Via-21.825_15</div>
<div class="mc" style="left:546px;width:68px">0.23470</div>
<div class="mc" style="left:614px;width:72px">0.08204</div>
</div>
<div class="mr" style="top:663.5px">
<div class="mc r" style="left:1px;width:47px">50</div>
<div class="mc" style="left:48px;width:34px">Top</div>
<div class="mc" style="left:82px;width:116px">MCU_D28</div>
<div class="mc" style="left:198px;width:116px">MCU_D26</div>
<div class="mc" style="left:314px;width:116px">U205-C3</div>
<div class="mc" style="left:430px;width:116px">Via-20.225_15</div>
<div class="mc" style="left:546px;width:68px">0.19934</div>
<div class="mc" style="left:614px;width:72px">0.07439</div>
</div>
<div class="mr" style="top:685.5px">
<div class="mc r" style="left:1px;width:47px">51</div>
<div class="mc" style="left:48px;width:34px">Top</div>
<div class="mc" style="left:82px;width:116px">MCU_DQM3</div>
<div class="mc" style="left:198px;width:116px">MCU_D28</div>
<div class="mc" style="left:314px;width:116px">U205-D3</div>
<div class="mc" style="left:430px;width:116px">Via-20.225_15</div>
<div class="mc" style="left:546px;width:68px">0.21707</div>
<div class="mc" style="left:614px;width:72px">0.07440</div>
</div>
<div class="mr" style="top:707.5px">
<div class="mc r" style="left:1px;width:47px">52</div>
<div class="mc" style="left:48px;width:34px">Top</div>
<div class="mc" style="left:82px;width:116px">MCU_DQM3</div>
<div class="mc" style="left:198px;width:116px">MCU_D10</div>
<div class="mc" style="left:314px;width:116px">U205-D3</div>
<div class="mc" style="left:430px;width:116px">Via-19.425_15</div>
<div class="mc" style="left:546px;width:68px">0.19934</div>
<div class="mc" style="left:614px;width:72px">0.07439</div>
</div>
<div class="mr" style="top:729.5px">
<div class="mc r" style="left:1px;width:47px">53</div>
<div class="mc" style="left:48px;width:34px">Top</div>
<div class="mc" style="left:82px;width:116px">MCU_DQM3</div>
<div class="mc" style="left:198px;width:116px">MCU_D26</div>
<div class="mc" style="left:314px;width:116px">U205-D3</div>
<div class="mc" style="left:430px;width:116px">Via-20.225_15</div>
<div class="mc" style="left:546px;width:68px">0.23470</div>
<div class="mc" style="left:614px;width:72px">0.07766</div>
</div>
<div class="mr" style="top:751.5px">
<div class="mc r" style="left:1px;width:47px">54</div>
<div class="mc" style="left:48px;width:34px">Top</div>
<div class="mc" style="left:82px;width:116px">MCU_D10</div>
<div class="mc" style="left:198px;width:116px">MCU_DQM3</div>
<div class="mc" style="left:314px;width:116px">U205-E3</div>
<div class="mc" style="left:430px;width:116px">Via-19.425_15</div>
<div class="mc" style="left:546px;width:68px">0.21707</div>
<div class="mc" style="left:614px;width:72px">0.07440</div>
</div>
<div class="mr" style="top:773.5px">
<div class="mc r" style="left:1px;width:47px">55</div>
<div class="mc" style="left:48px;width:34px">Top</div>
<div class="mc" style="left:82px;width:116px">MCU_NADQS1</div>
<div class="mc" style="left:198px;width:116px">VCC1P5_DDR</div>
<div class="mc" style="left:314px;width:116px">U205-G3</div>
<div class="mc" style="left:430px;width:116px">Via-17.000_15</div>
<div class="mc" style="left:546px;width:68px">0.19934</div>
<div class="mc" style="left:614px;width:72px">0.07464</div>
</div>
<div class="mr" style="top:795.5px">
<div class="mc r" style="left:1px;width:47px">56</div>
<div class="mc" style="left:48px;width:34px">Top</div>
<div class="mc" style="left:82px;width:116px">MCU_NADQS1</div>
<div class="mc" style="left:198px;width:116px">MCU_D12</div>
<div class="mc" style="left:314px;width:116px">U205-G3</div>
<div class="mc" style="left:430px;width:116px">Via-17.000_15</div>
<div class="mc" style="left:546px;width:68px">0.21701</div>
<div class="mc" style="left:614px;width:72px">0.07827</div>
</div>
<div class="mr" style="top:817.5px">
<div class="mc r" style="left:1px;width:47px">57</div>
<div class="mc" style="left:48px;width:34px">Top</div>
<div class="mc" style="left:82px;width:116px">MCU_D12</div>
<div class="mc" style="left:198px;width:116px">VCC1P5_DDR</div>
<div class="mc" style="left:314px;width:116px">U205-H3</div>
<div class="mc" style="left:430px;width:116px">Via-17.000_15</div>
<div class="mc" style="left:546px;width:68px">0.19934</div>
<div class="mc" style="left:614px;width:72px">0.07439</div>
</div>
<div class="mr" style="top:839.5px">
<div class="mc r" style="left:1px;width:47px">58</div>
<div class="mc" style="left:48px;width:34px">Top</div>
<div class="mc" style="left:82px;width:116px">MCU_ANCAS</div>
<div class="mc" style="left:198px;width:116px">VCC1P5_DDR</div>
<div class="mc" style="left:314px;width:116px">U205-K3</div>
<div class="mc" style="left:430px;width:116px">Via-14.625_15</div>
<div class="mc" style="left:546px;width:68px">0.18166</div>
<div class="mc" style="left:614px;width:72px">0.07350</div>
</div>
<div class="mr" style="top:861.5px">
<div class="mc r" style="left:1px;width:47px">59</div>
<div class="mc" style="left:48px;width:34px">Top</div>
<div class="mc" style="left:82px;width:116px">MCU_ANCAS</div>
<div class="mc" style="left:198px;width:116px">MCU_ANRAS</div>
<div class="mc" style="left:314px;width:116px">U205-K3</div>
<div class="mc" style="left:430px;width:116px">Via-15.400_15</div>
<div class="mc" style="left:546px;width:68px">0.19935</div>
<div class="mc" style="left:614px;width:72px">0.07439</div>
</div>
<div class="mr" style="top:883.5px">
<div class="mc r" style="left:1px;width:47px">60</div>
<div class="mc" style="left:48px;width:34px">Top</div>
<div class="mc" style="left:82px;width:116px">MCU_ANWE</div>
<div class="mc" style="left:198px;width:116px">VCC1P5_DDR</div>
<div class="mc" style="left:314px;width:116px">U205-L3</div>
<div class="mc" style="left:430px;width:116px">Via-14.625_15</div>
<div class="mc" style="left:546px;width:68px">0.21708</div>
<div class="mc" style="left:614px;width:72px">0.07440</div>
</div>
<div class="mr" style="top:905.5px">
<div class="mc r" style="left:1px;width:47px">61</div>
<div class="mc" style="left:48px;width:34px">Top</div>
<div class="mc" style="left:82px;width:116px">MCU_ANWE</div>
<div class="mc" style="left:198px;width:116px">MCU_ANCAS</div>
<div class="mc" style="left:314px;width:116px">U205-L3</div>
<div class="mc" style="left:430px;width:116px">Via-14.625_15</div>
<div class="mc" style="left:546px;width:68px">0.23470</div>
<div class="mc" style="left:614px;width:72px">0.07766</div>
</div>
<div class="mr" style="top:927.5px">
<div class="mc r" style="left:1px;width:47px">62</div>
<div class="mc" style="left:48px;width:34px">Top</div>
<div class="mc" style="left:82px;width:116px">MCU_ABA2</div>
<div class="mc" style="left:198px;width:116px">MCU_ANWE</div>
<div class="mc" style="left:314px;width:116px">U205-M3</div>
<div class="mc" style="left:430px;width:116px">Via-13.800_15</div>
<div class="mc" style="left:546px;width:68px">0.19935</div>
<div class="mc" style="left:614px;width:72px">0.07464</div>
</div>
<div class="mr" style="top:949.5px">
<div class="mc r" style="left:1px;width:47px">63</div>
<div class="mc" style="left:48px;width:34px">Top</div>
<div class="mc" style="left:82px;width:116px">MCU_AA0</div>
<div class="mc" style="left:198px;width:116px">MCU_ABA2</div>
<div class="mc" style="left:314px;width:116px">U205-N3</div>
<div class="mc" style="left:430px;width:116px">Via-13.000_15</div>
<div class="mc" style="left:546px;width:68px">0.19935</div>
<div class="mc" style="left:614px;width:72px">0.07464</div>
</div>
<div class="mr" style="top:971.5px">
<div class="mc r" style="left:1px;width:47px">64</div>
<div class="mc" style="left:48px;width:34px">Top</div>
<div class="mc" style="left:82px;width:116px">MCU_AA2</div>
<div class="mc" style="left:198px;width:116px">MCU_AA0</div>
<div class="mc" style="left:314px;width:116px">U205-P3</div>
<div class="mc" style="left:430px;width:116px">Via-12.200_15</div>
<div class="mc" style="left:546px;width:68px">0.19935</div>
<div class="mc" style="left:614px;width:72px">0.07440</div>
</div>
<div class="mr" style="top:993.5px">
<div class="mc r" style="left:1px;width:47px">65</div>
<div class="mc" style="left:48px;width:34px">Top</div>
<div class="mc" style="left:82px;width:116px">MCU_AA9</div>
<div class="mc" style="left:198px;width:116px">MCU_AA2</div>
<div class="mc" style="left:314px;width:116px">U205-R3</div>
<div class="mc" style="left:430px;width:116px">Via-11.425_15</div>
<div class="mc" style="left:546px;width:68px">0.21708</div>
<div class="mc" style="left:614px;width:72px">0.07440</div>
</div>
<div class="mr" style="top:1015.5px">
<div class="mc r" style="left:1px;width:47px">66</div>
<div class="mc" style="left:48px;width:34px">Top</div>
<div class="mc" style="left:82px;width:116px">MCU_AA13</div>
<div class="mc" style="left:198px;width:116px">MCU_AA9</div>
<div class="mc" style="left:314px;width:116px">U205-T3</div>
<div class="mc" style="left:430px;width:116px">Via-10.575_15</div>
<div class="mc" style="left:546px;width:68px">0.19935</div>
<div class="mc" style="left:614px;width:72px">0.07440</div>
</div>
<div class="mr" style="top:1037.5px">
<div class="mc r" style="left:1px;width:47px">67</div>
<div class="mc" style="left:48px;width:34px">Top</div>
<div class="mc" style="left:82px;width:116px">MCU_D31</div>
<div class="mc" style="left:198px;width:116px">MCU_D27</div>
<div class="mc" style="left:314px;width:116px">U205-A7</div>
<div class="mc" style="left:430px;width:116px">Via-21.800_11</div>
<div class="mc" style="left:546px;width:68px">0.21702</div>
<div class="mc" style="left:614px;width:72px">0.07827</div>
</div>
<div class="mr" style="top:1059.5px">
<div class="mc r" style="left:1px;width:47px">68</div>
<div class="mc" style="left:48px;width:34px">Top</div>
<div class="mc" style="left:82px;width:116px">MCU_NADQS3</div>
<div class="mc" style="left:198px;width:116px">MCU_D27</div>
<div class="mc" style="left:314px;width:116px">U205-B7</div>
<div class="mc" style="left:430px;width:116px">Via-21.800_11</div>
<div class="mc" style="left:546px;width:68px">0.21701</div>
<div class="mc" style="left:614px;width:72px">0.07827</div>
</div>
<div class="mr" style="top:1081.5px">
<div class="mc r" style="left:1px;width:47px">69</div>
<div class="mc" style="left:48px;width:34px">Top</div>
<div class="mc" style="left:82px;width:116px">MCU_PADQS3</div>
<div class="mc" style="left:198px;width:116px">MCU_D25</div>
<div class="mc" style="left:314px;width:116px">U205-C7</div>
<div class="mc" style="left:430px;width:116px">Via-20.225_11</div>
<div class="mc" style="left:546px;width:68px">0.19934</div>
<div class="mc" style="left:614px;width:72px">0.07439</div>
</div>
<div class="mr" style="top:1103.5px">
<div class="mc r" style="left:1px;width:47px">70</div>
<div class="mc" style="left:48px;width:34px">Top</div>
<div class="mc" style="left:82px;width:116px">MCU_DQM1</div>
<div class="mc" style="left:198px;width:116px">MCU_D15</div>
<div class="mc" style="left:314px;width:116px">U205-E7</div>
<div class="mc" style="left:430px;width:116px">Via-18.625_11</div>
<div class="mc" style="left:546px;width:68px">0.19934</div>
<div class="mc" style="left:614px;width:72px">0.07464</div>
</div>
<div class="mr" style="top:1125.5px">
<div class="mc r" style="left:1px;width:47px">71</div>
<div class="mc" style="left:48px;width:34px">Top</div>
<div class="mc" style="left:82px;width:116px">MCU_D15</div>
<div class="mc" style="left:198px;width:116px">VCC1P5_DDR</div>
<div class="mc" style="left:314px;width:116px">U205-F7</div>
<div class="mc" style="left:430px;width:116px">Via-17.800_11</div>
<div class="mc" style="left:546px;width:68px">0.21701</div>
<div class="mc" style="left:614px;width:72px">0.07438</div>
</div>
<div class="mr" style="top:1147.5px">
<div class="mc r" style="left:1px;width:47px">72</div>
<div class="mc" style="left:48px;width:34px">Top</div>
<div class="mc" style="left:82px;width:116px">VCC1P5_DDR</div>
<div class="mc" style="left:198px;width:116px">MCU_D9</div>
<div class="mc" style="left:314px;width:116px">U205-G7</div>
<div class="mc" style="left:430px;width:116px">Via-16.975_11</div>
<div class="mc" style="left:546px;width:68px">0.23469</div>
<div class="mc" style="left:614px;width:72px">0.07766</div>
</div>
<div class="mr" style="top:1169.5px">
<div class="mc r" style="left:1px;width:47px">73</div>
<div class="mc" style="left:48px;width:34px">Top</div>
<div class="mc" style="left:82px;width:116px">MCU_AA10</div>
<div class="mc" style="left:198px;width:116px">VCC_DDR_REF</div>
<div class="mc" style="left:314px;width:116px">U205-L7</div>
<div class="mc" style="left:430px;width:116px">Via-13.800_11</div>
<div class="mc" style="left:546px;width:68px">0.21701</div>
<div class="mc" style="left:614px;width:72px">0.07827</div>
</div>
<div class="mr" style="top:1191.5px">
<div class="mc r" style="left:1px;width:47px">74</div>
<div class="mc" style="left:48px;width:34px">Top</div>
<div class="mc" style="left:82px;width:116px">MCU_AA12</div>
<div class="mc" style="left:198px;width:116px">MCU_ABA1</div>
<div class="mc" style="left:314px;width:116px">U205-N7</div>
<div class="mc" style="left:430px;width:116px">Via-12.200_11</div>
<div class="mc" style="left:546px;width:68px">0.23468</div>
<div class="mc" style="left:614px;width:72px">0.07766</div>
</div>
<div class="mr" style="top:1213.5px">
<div class="mc r" style="left:1px;width:47px">75</div>
<div class="mc" style="left:48px;width:34px">Top</div>
<div class="mc" style="left:82px;width:116px">MCU_AA1</div>
<div class="mc" style="left:198px;width:116px">MCU_AA12</div>
<div class="mc" style="left:314px;width:116px">U205-P7</div>
<div class="mc" style="left:430px;width:116px">Via-12.175_12</div>
<div class="mc" style="left:546px;width:68px">0.14640</div>
<div class="mc" style="left:614px;width:72px">0.06940</div>
</div>
<div class="mr" style="top:1235.5px">
<div class="mc r" style="left:1px;width:47px">76</div>
<div class="mc" style="left:48px;width:34px">Top</div>
<div class="mc" style="left:82px;width:116px">MCU_AA1</div>
<div class="mc" style="left:198px;width:116px">MCU_ABA1</div>
<div class="mc" style="left:314px;width:116px">U205-P7</div>
<div class="mc" style="left:430px;width:116px">Via-12.200_11</div>
<div class="mc" style="left:546px;width:68px">0.23470</div>
<div class="mc" style="left:614px;width:72px">0.07766</div>
</div>
<div class="mr" style="top:1257.5px">
<div class="mc r" style="left:1px;width:47px">77</div>
<div class="mc" style="left:48px;width:34px">Top</div>
<div class="mc" style="left:82px;width:116px">MCU_AA1</div>
<div class="mc" style="left:198px;width:116px">MCU_AA4</div>
<div class="mc" style="left:314px;width:116px">U205-P7</div>
<div class="mc" style="left:430px;width:116px">Via-11.425_11</div>
<div class="mc" style="left:546px;width:68px">0.19933</div>
<div class="mc" style="left:614px;width:72px">0.07439</div>
</div>
<div class="mr" style="top:1279.5px">
<div class="mc r" style="left:1px;width:47px">78</div>
<div class="mc" style="left:48px;width:34px">Top</div>
<div class="mc" style="left:82px;width:116px">MCU_AA11</div>
<div class="mc" style="left:198px;width:116px">MCU_AA1</div>
<div class="mc" style="left:314px;width:116px">U205-R7</div>
<div class="mc" style="left:430px;width:116px">Via-11.400_12</div>
<div class="mc" style="left:546px;width:68px">0.16554</div>
<div class="mc" style="left:614px;width:72px">0.07252</div>
</div>
<div class="mr" style="top:1301.5px">
<div class="mc r" style="left:1px;width:47px">79</div>
<div class="mc" style="left:48px;width:34px">Top</div>
<div class="mc" style="left:82px;width:116px">MCU_AA11</div>
<div class="mc" style="left:198px;width:116px">MCU_AA6</div>
<div class="mc" style="left:314px;width:116px">U205-R7</div>
<div class="mc" style="left:430px;width:116px">Via-10.600_11</div>
<div class="mc" style="left:546px;width:68px">0.21701</div>
<div class="mc" style="left:614px;width:72px">0.07827</div>
</div>
<div class="mr" style="top:1323.5px">
<div class="mc r" style="left:1px;width:47px">80</div>
<div class="mc" style="left:48px;width:34px">Top</div>
<div class="mc" style="left:82px;width:116px">MCU_AA11</div>
<div class="mc" style="left:198px;width:116px">MCU_AA4</div>
<div class="mc" style="left:314px;width:116px">U205-R7</div>
<div class="mc" style="left:430px;width:116px">Via-11.425_11</div>
<div class="mc" style="left:546px;width:68px">0.23470</div>
<div class="mc" style="left:614px;width:72px">0.07766</div>
</div>
<div class="mr" style="top:1345.5px">
<div class="mc r" style="left:1px;width:47px">81</div>
<div class="mc" style="left:48px;width:34px">Top</div>
<div class="mc" style="left:82px;width:116px">MCU_AA14</div>
<div class="mc" style="left:198px;width:116px">MCU_AA11</div>
<div class="mc" style="left:314px;width:116px">U205-T7</div>
<div class="mc" style="left:430px;width:116px">Via-10.600_12</div>
<div class="mc" style="left:546px;width:68px">0.16554</div>
<div class="mc" style="left:614px;width:72px">0.07252</div>
</div>
<div class="mr" style="top:1367.5px">
<div class="mc r" style="left:1px;width:47px">82</div>
<div class="mc" style="left:48px;width:34px">Top</div>
<div class="mc" style="left:82px;width:116px">MCU_AA14</div>
<div class="mc" style="left:198px;width:116px">MCU_AA6</div>
<div class="mc" style="left:314px;width:116px">U205-T7</div>
<div class="mc" style="left:430px;width:116px">Via-10.600_11</div>
<div class="mc" style="left:546px;width:68px">0.21702</div>
<div class="mc" style="left:614px;width:72px">0.07827</div>
</div>
<div class="mr" style="top:1389.5px">
<div class="mc r" style="left:1px;width:47px">83</div>
<div class="mc" style="left:48px;width:34px">Top</div>
<div class="mc" style="left:82px;width:116px">MCU_AA14</div>
<div class="mc" style="left:198px;width:116px">MCU_AA8</div>
<div class="mc" style="left:314px;width:116px">U205-T7</div>
<div class="mc" style="left:430px;width:116px">Via-9.850_11.</div>
<div class="mc" style="left:546px;width:68px">0.18172</div>
<div class="mc" style="left:614px;width:72px">0.07366</div>
</div>
<div class="mr" style="top:1411.5px">
<div class="mc r" style="left:1px;width:47px">84</div>
<div class="mc" style="left:48px;width:34px">Top</div>
<div class="mc" style="left:82px;width:116px">VCC1P5_DDR</div>
<div class="mc" style="left:198px;width:116px">MCU_D27</div>
<div class="mc" style="left:314px;width:116px">U205-A8</div>
<div class="mc" style="left:430px;width:116px">Via-21.800_11</div>
<div class="mc" style="left:546px;width:68px">0.21702</div>
<div class="mc" style="left:614px;width:72px">0.07827</div>
</div>
<div class="mr" style="top:1433.5px">
<div class="mc r" style="left:1px;width:47px">85</div>
<div class="mc" style="left:48px;width:34px">Top</div>
<div class="mc" style="left:82px;width:116px">VCC1P5_DDR</div>
<div class="mc" style="left:198px;width:116px">MCU_D31</div>
<div class="mc" style="left:314px;width:116px">U205-A8</div>
<div class="mc" style="left:430px;width:116px">Via-22.600_11</div>
<div class="mc" style="left:546px;width:68px">0.21702</div>
<div class="mc" style="left:614px;width:72px">0.07827</div>
</div>
<div class="mr" style="top:1455.5px">
<div class="mc r" style="left:1px;width:47px">86</div>
<div class="mc" style="left:48px;width:34px">Top</div>
<div class="mc" style="left:82px;width:116px">MCU_D27</div>
<div class="mc" style="left:198px;width:116px">VCC1P5_DDR</div>
<div class="mc" style="left:314px;width:116px">U205-B8</div>
<div class="mc" style="left:430px;width:116px">Via-21.800_11</div>
<div class="mc" style="left:546px;width:68px">0.23469</div>
<div class="mc" style="left:614px;width:72px">0.07766</div>
</div>
<div class="mr" style="top:1477.5px">
<div class="mc r" style="left:1px;width:47px">87</div>
<div class="mc" style="left:48px;width:34px">Top</div>
<div class="mc" style="left:82px;width:116px">MCU_D27</div>
<div class="mc" style="left:198px;width:116px">MCU_D29</div>
<div class="mc" style="left:314px;width:116px">U205-B8</div>
<div class="mc" style="left:430px;width:116px">Via-21.000_11</div>
<div class="mc" style="left:546px;width:68px">0.23469</div>
<div class="mc" style="left:614px;width:72px">0.07766</div>
</div>
<div class="mr" style="top:1499.5px">
<div class="mc r" style="left:1px;width:47px">88</div>
<div class="mc" style="left:48px;width:34px">Top</div>
<div class="mc" style="left:82px;width:116px">MCU_D29</div>
<div class="mc" style="left:198px;width:116px">MCU_D25</div>
<div class="mc" style="left:314px;width:116px">U205-C8</div>
<div class="mc" style="left:430px;width:116px">Via-20.225_11</div>
<div class="mc" style="left:546px;width:68px">0.19934</div>
<div class="mc" style="left:614px;width:72px">0.07439</div>
</div>
<div class="mr" style="top:1521.5px">
<div class="mc r" style="left:1px;width:47px">89</div>
<div class="mc" style="left:48px;width:34px">Top</div>
<div class="mc" style="left:82px;width:116px">GND</div>
<div class="mc" style="left:198px;width:116px">MCU_D25</div>
<div class="mc" style="left:314px;width:116px">U205-D8</div>
<div class="mc" style="left:430px;width:116px">Via-20.225_11</div>
<div class="mc" style="left:546px;width:68px">0.23470</div>
<div class="mc" style="left:614px;width:72px">0.07737</div>
</div>
<div class="mr" style="top:1543.5px">
<div class="mc r" style="left:1px;width:47px">90</div>
<div class="mc" style="left:48px;width:34px">Top</div>
<div class="mc" style="left:82px;width:116px">GND</div>
<div class="mc" style="left:198px;width:116px">MCU_D13</div>
<div class="mc" style="left:314px;width:116px">U205-E8</div>
<div class="mc" style="left:430px;width:116px">Via-18.625_11</div>
<div class="mc" style="left:546px;width:68px">0.18166</div>
<div class="mc" style="left:614px;width:72px">0.07350</div>
</div>
<div class="mr" style="top:1565.5px">
<div class="mc r" style="left:1px;width:47px">91</div>
<div class="mc" style="left:48px;width:34px">Top</div>
<div class="mc" style="left:82px;width:116px">GND</div>
<div class="mc" style="left:198px;width:116px">MCU_D15</div>
<div class="mc" style="left:314px;width:116px">U205-E8</div>
<div class="mc" style="left:430px;width:116px">Via-18.625_11</div>
<div class="mc" style="left:546px;width:68px">0.19934</div>
<div class="mc" style="left:614px;width:72px">0.07439</div>
</div>
<div class="mr" style="top:1587.5px">
<div class="mc r" style="left:1px;width:47px">92</div>
<div class="mc" style="left:48px;width:34px">Top</div>
<div class="mc" style="left:82px;width:116px">MCU_D13</div>
<div class="mc" style="left:198px;width:116px">VCC1P5_DDR</div>
<div class="mc" style="left:314px;width:116px">U205-F8</div>
<div class="mc" style="left:430px;width:116px">Via-17.800_11</div>
<div class="mc" style="left:546px;width:68px">0.21702</div>
<div class="mc" style="left:614px;width:72px">0.07827</div>
</div>
<div class="mr" style="top:1609.5px">
<div class="mc r" style="left:1px;width:47px">93</div>
<div class="mc" style="left:48px;width:34px">Top</div>
<div class="mc" style="left:82px;width:116px">MCU_D13</div>
<div class="mc" style="left:198px;width:116px">MCU_D15</div>
<div class="mc" style="left:314px;width:116px">U205-F8</div>
<div class="mc" style="left:430px;width:116px">Via-18.625_11</div>
<div class="mc" style="left:546px;width:68px">0.23470</div>
<div class="mc" style="left:614px;width:72px">0.07737</div>
</div>
<div class="mr" style="top:1631.5px">
<div class="mc r" style="left:1px;width:47px">94</div>
<div class="mc" style="left:48px;width:34px">Top</div>
<div class="mc" style="left:82px;width:116px">GND</div>
<div class="mc" style="left:198px;width:116px">VCC1P5_DDR</div>
<div class="mc" style="left:314px;width:116px">U205-G8</div>
<div class="mc" style="left:430px;width:116px">Via-17.800_11</div>
<div class="mc" style="left:546px;width:68px">0.21702</div>
<div class="mc" style="left:614px;width:72px">0.07827</div>
</div>
<div class="mr" style="top:1653.5px">
<div class="mc r" style="left:1px;width:47px">95</div>
<div class="mc" style="left:48px;width:34px">Top</div>
<div class="mc" style="left:82px;width:116px">GND</div>
<div class="mc" style="left:198px;width:116px">MCU_D9</div>
<div class="mc" style="left:314px;width:116px">U205-G8</div>
<div class="mc" style="left:430px;width:116px">Via-16.975_11</div>
<div class="mc" style="left:546px;width:68px">0.23470</div>
<div class="mc" style="left:614px;width:72px">0.08204</div>
</div>
<div class="mr" style="top:1675.5px">
<div class="mc r" style="left:1px;width:47px">96</div>
<div class="mc" style="left:48px;width:34px">Top</div>
<div class="mc" style="left:82px;width:116px">GND</div>
<div class="mc" style="left:198px;width:116px">MCU_D11</div>
<div class="mc" style="left:314px;width:116px">U205-G8</div>
<div class="mc" style="left:430px;width:116px">Via-16.975_11</div>
<div class="mc" style="left:546px;width:68px">0.25237</div>
<div class="mc" style="left:614px;width:72px">0.08052</div>
</div>
<div class="mr" style="top:1697.5px">
<div class="mc r" style="left:1px;width:47px">97</div>
<div class="mc" style="left:48px;width:34px">Top</div>
<div class="mc" style="left:82px;width:116px">MCU_D11</div>
<div class="mc" style="left:198px;width:116px">MCU_D9</div>
<div class="mc" style="left:314px;width:116px">U205-H8</div>
<div class="mc" style="left:430px;width:116px">Via-16.975_11</div>
<div class="mc" style="left:546px;width:68px">0.19935</div>
<div class="mc" style="left:614px;width:72px">0.07439</div>
</div>
<div class="mr" style="top:1719.5px">
<div class="mc r" style="left:1px;width:47px">98</div>
<div class="mc" style="left:48px;width:34px">Top</div>
<div class="mc" style="left:82px;width:116px">GND</div>
<div class="mc" style="left:198px;width:116px">VCC1P5_DDR</div>
<div class="mc" style="left:314px;width:116px">U205-J8</div>
<div class="mc" style="left:430px;width:116px">Via-15.425_11</div>
<div class="mc" style="left:546px;width:68px">0.19933</div>
<div class="mc" style="left:614px;width:72px">0.07439</div>
</div>
<div class="mr" style="top:1741.5px">
<div class="mc r" style="left:1px;width:47px">99</div>
<div class="mc" style="left:48px;width:34px">Top</div>
<div class="mc" style="left:82px;width:116px">VCC1P5_DDR</div>
<div class="mc" style="left:198px;width:116px">MCU_ACKE0</div>
<div class="mc" style="left:314px;width:116px">U205-K8</div>
<div class="mc" style="left:430px;width:116px">Via-14.600_11</div>
<div class="mc" style="left:546px;width:68px">0.21701</div>
<div class="mc" style="left:614px;width:72px">0.07827</div>
</div>
<div class="mr" style="top:1763.5px">
<div class="mc r" style="left:1px;width:47px">100</div>
<div class="mc" style="left:48px;width:34px">Top</div>
<div class="mc" style="left:82px;width:116px">NetR232_1</div>
<div class="mc" style="left:198px;width:116px">VCC_DDR_REF</div>
<div class="mc" style="left:314px;width:116px">U205-L8</div>
<div class="mc" style="left:430px;width:116px">Via-13.800_11</div>
<div class="mc" style="left:546px;width:68px">0.21701</div>
<div class="mc" style="left:614px;width:72px">0.07827</div>
</div>
<div class="mr" style="top:1785.5px">
<div class="mc r" style="left:1px;width:47px">101</div>
<div class="mc" style="left:48px;width:34px">Top</div>
<div class="mc" style="left:82px;width:116px">NetR232_1</div>
<div class="mc" style="left:198px;width:116px">MCU_ACKE0</div>
<div class="mc" style="left:314px;width:116px">U205-L8</div>
<div class="mc" style="left:430px;width:116px">Via-14.600_11</div>
<div class="mc" style="left:546px;width:68px">0.21702</div>
<div class="mc" style="left:614px;width:72px">0.07827</div>
</div>
<div class="mr" style="top:1807.5px">
<div class="mc r" style="left:1px;width:47px">102</div>
<div class="mc" style="left:48px;width:34px">Top</div>
<div class="mc" style="left:82px;width:116px">GND</div>
<div class="mc" style="left:198px;width:116px">MCU_D9</div>
<div class="mc" style="left:314px;width:116px">U205-L8</div>
<div class="mc" style="left:430px;width:116px">Via-14.600_11</div>
<div class="mc" style="left:546px;width:68px">0.21702</div>
<div class="mc" style="left:614px;width:72px">0.07827</div>
</div>
</div>
</div>
<div id="sbar"><div id="sthumb"></div>
<svg style="position:absolute;left:5px;top:9px" width="14" height="9"><path d="M1.5 7.5 L7 2 L12.5 7.5" stroke="#606060" stroke-width="2.4" fill="none"/></svg>
<svg style="position:absolute;left:5px;top:1811px" width="14" height="9"><path d="M1.5 1.5 L7 7 L12.5 1.5" stroke="#606060" stroke-width="2.4" fill="none"/></svg>
</div>
<div class="btn" style="left:11px;top:2003px;width:173px;height:32px;line-height:31px">Save Result</div>
<div class="btn" style="left:195px;top:2003px;width:172px;height:32px;line-height:31px">Load Result</div>
<div class="btn" style="left:379px;top:2003px;width:172px;height:32px;line-height:31px">Result Report</div>
<div class="btn" style="left:561px;top:2003px;width:172px;height:32px;line-height:31px">Export</div>
<div class="btn" style="left:746px;top:2003px;width:173px;height:32px;line-height:31px">View Input</div>
<div class="btn" style="left:935px;top:2003px;width:171px;height:32px;line-height:31px">Close</div>
<div id="status"><span style="position:absolute;left:2px;top:4px">Ready</span>
<div class="spanel" style="left:2561px;width:304px"></div><div class="spanel" style="left:2869px;width:446px"><span style="position:absolute;left:2px;top:1px">Selected Object Qty: 0</span></div>
</div>
<div id="canvas"><svg style="position:absolute;left:0;top:0" width="2190" height="1973" viewBox="1125 67 2190 1973" shape-rendering="crispEdges">
<path d="M1508.5 60 V2045 M1120 1939.5 H3320" stroke="#700000" stroke-width="1" fill="none"/>
<path d="M1509.5 191 Q1509.5 167.5 1533 167.5 L2428 167.5 L2523.5 272 L2523.5 538 Q2523.5 567.5 2553 567.5 L3100 567.5 Q3128.5 567.5 3128.5 596 L3128.5 841 L3234.5 944 L3234.5 1686 Q3234.5 1716.5 3206 1716.5 L3040 1716.5 Q3014.5 1716.5 3014.5 1742 L3014.5 1912 Q3014.5 1939.5 2987 1939.5 L2140 1939.5 Q2125 1939.5 2125 1922 A71.5 71.5 0 0 0 1982 1922 Q1982 1939.5 1967 1939.5 L1533 1939.5 Q1509.5 1939.5 1509.5 1916 Z" fill="none" stroke="#F03030" stroke-width="1.2"/>
<circle cx="1622.0" cy="249.5" r="37.0" fill="#404040"/>
<circle cx="2397.0" cy="249.0" r="37.0" fill="#404040"/>
<circle cx="3116.0" cy="957.0" r="37.0" fill="#404040"/>
<circle cx="1622.0" cy="1860.0" r="37.0" fill="#404040"/>
<circle cx="2918.0" cy="1860.0" r="37.0" fill="#404040"/>
<ellipse cx="1670.3" cy="233.2" rx="4.2" ry="3.7" fill="#FF8000"/><rect x="1668.7" y="231.7" width="3.2" height="3" fill="#3a4050"/>
<ellipse cx="1751.6" cy="233.2" rx="4.2" ry="3.7" fill="#FF8000"/><rect x="1750.0" y="231.7" width="3.2" height="3" fill="#3a4050"/>
<ellipse cx="1832.9" cy="233.2" rx="4.2" ry="3.7" fill="#FF8000"/><rect x="1831.3" y="231.7" width="3.2" height="3" fill="#3a4050"/>
<ellipse cx="1914.2" cy="233.2" rx="4.2" ry="3.7" fill="#FF8000"/><rect x="1912.6" y="231.7" width="3.2" height="3" fill="#3a4050"/>
<ellipse cx="1995.5" cy="233.2" rx="4.2" ry="3.7" fill="#FF8000"/><rect x="1993.9" y="231.7" width="3.2" height="3" fill="#3a4050"/>
<ellipse cx="2076.8" cy="233.2" rx="4.2" ry="3.7" fill="#FF8000"/><rect x="2075.2" y="231.7" width="3.2" height="3" fill="#3a4050"/>
<ellipse cx="2158.1" cy="233.2" rx="4.2" ry="3.7" fill="#FF8000"/><rect x="2156.5" y="231.7" width="3.2" height="3" fill="#3a4050"/>
<ellipse cx="2239.4" cy="233.2" rx="4.2" ry="3.7" fill="#FF8000"/><rect x="2237.8" y="231.7" width="3.2" height="3" fill="#3a4050"/>
<ellipse cx="2320.7" cy="233.2" rx="4.2" ry="3.7" fill="#FF8000"/><rect x="2319.1" y="231.7" width="3.2" height="3" fill="#3a4050"/>
<ellipse cx="1589.0" cy="314.5" rx="4.2" ry="3.7" fill="#FF8000"/><rect x="1587.4" y="313.0" width="3.2" height="3" fill="#3a4050"/>
<ellipse cx="1670.3" cy="314.5" rx="4.2" ry="3.7" fill="#FF8000"/><rect x="1668.7" y="313.0" width="3.2" height="3" fill="#3a4050"/>
<ellipse cx="1832.9" cy="314.5" rx="4.2" ry="3.7" fill="#FF8000"/><rect x="1831.3" y="313.0" width="3.2" height="3" fill="#3a4050"/>
<ellipse cx="1914.2" cy="314.5" rx="4.2" ry="3.7" fill="#FF8000"/><rect x="1912.6" y="313.0" width="3.2" height="3" fill="#3a4050"/>
<ellipse cx="1995.5" cy="314.5" rx="4.2" ry="3.7" fill="#FF8000"/><rect x="1993.9" y="313.0" width="3.2" height="3" fill="#3a4050"/>
<ellipse cx="2076.8" cy="314.5" rx="4.2" ry="3.7" fill="#FF8000"/><rect x="2075.2" y="313.0" width="3.2" height="3" fill="#3a4050"/>
<ellipse cx="2239.4" cy="314.5" rx="4.2" ry="3.7" fill="#FF8000"/><rect x="2237.8" y="313.0" width="3.2" height="3" fill="#3a4050"/>
<ellipse cx="2320.7" cy="314.5" rx="4.2" ry="3.7" fill="#FF8000"/><rect x="2319.1" y="313.0" width="3.2" height="3" fill="#3a4050"/>
<ellipse cx="2402.0" cy="314.5" rx="4.2" ry="3.7" fill="#FF8000"/><rect x="2400.4" y="313.0" width="3.2" height="3" fill="#3a4050"/>
<ellipse cx="2483.3" cy="314.5" rx="4.2" ry="3.7" fill="#FF8000"/><rect x="2481.7" y="313.0" width="3.2" height="3" fill="#3a4050"/>
<ellipse cx="1589.0" cy="395.8" rx="4.2" ry="3.7" fill="#FF8000"/><rect x="1587.4" y="394.3" width="3.2" height="3" fill="#3a4050"/>
<ellipse cx="1670.3" cy="395.8" rx="4.2" ry="3.7" fill="#FF8000"/><rect x="1668.7" y="394.3" width="3.2" height="3" fill="#3a4050"/>
<ellipse cx="1751.6" cy="395.8" rx="4.2" ry="3.7" fill="#FF8000"/><rect x="1750.0" y="394.3" width="3.2" height="3" fill="#3a4050"/>
<ellipse cx="1832.9" cy="395.8" rx="4.2" ry="3.7" fill="#FF8000"/><rect x="1831.3" y="394.3" width="3.2" height="3" fill="#3a4050"/>
<ellipse cx="1914.2" cy="395.8" rx="4.2" ry="3.7" fill="#FF8000"/><rect x="1912.6" y="394.3" width="3.2" height="3" fill="#3a4050"/>
<ellipse cx="1995.5" cy="395.8" rx="4.2" ry="3.7" fill="#FF8000"/><rect x="1993.9" y="394.3" width="3.2" height="3" fill="#3a4050"/>
<ellipse cx="2076.8" cy="395.8" rx="4.2" ry="3.7" fill="#FF8000"/><rect x="2075.2" y="394.3" width="3.2" height="3" fill="#3a4050"/>
<ellipse cx="2158.1" cy="395.8" rx="4.2" ry="3.7" fill="#FF8000"/><rect x="2156.5" y="394.3" width="3.2" height="3" fill="#3a4050"/>
<ellipse cx="2239.4" cy="395.8" rx="4.2" ry="3.7" fill="#FF8000"/><rect x="2237.8" y="394.3" width="3.2" height="3" fill="#3a4050"/>
<ellipse cx="2320.7" cy="395.8" rx="4.2" ry="3.7" fill="#FF8000"/><rect x="2319.1" y="394.3" width="3.2" height="3" fill="#3a4050"/>
<ellipse cx="2402.0" cy="395.8" rx="4.2" ry="3.7" fill="#FF8000"/><rect x="2400.4" y="394.3" width="3.2" height="3" fill="#3a4050"/>
<ellipse cx="2483.3" cy="395.8" rx="4.2" ry="3.7" fill="#FF8000"/><rect x="2481.7" y="394.3" width="3.2" height="3" fill="#3a4050"/>
<ellipse cx="1589.0" cy="477.1" rx="4.2" ry="3.7" fill="#FF8000"/><rect x="1587.4" y="475.6" width="3.2" height="3" fill="#3a4050"/>
<ellipse cx="1670.3" cy="477.1" rx="4.2" ry="3.7" fill="#FF8000"/><rect x="1668.7" y="475.6" width="3.2" height="3" fill="#3a4050"/>
<ellipse cx="1589.0" cy="558.4" rx="4.2" ry="3.7" fill="#FF8000"/><rect x="1587.4" y="556.9" width="3.2" height="3" fill="#3a4050"/>
<ellipse cx="1670.3" cy="558.4" rx="4.2" ry="3.7" fill="#FF8000"/><rect x="1668.7" y="556.9" width="3.2" height="3" fill="#3a4050"/>
<ellipse cx="1751.6" cy="558.4" rx="4.2" ry="3.7" fill="#FF8000"/><rect x="1750.0" y="556.9" width="3.2" height="3" fill="#3a4050"/>
<ellipse cx="2320.7" cy="558.4" rx="4.2" ry="3.7" fill="#FF8000"/><rect x="2319.1" y="556.9" width="3.2" height="3" fill="#3a4050"/>
<ellipse cx="2483.3" cy="558.4" rx="4.2" ry="3.7" fill="#FF8000"/><rect x="2481.7" y="556.9" width="3.2" height="3" fill="#3a4050"/>
<ellipse cx="1589.0" cy="639.7" rx="4.2" ry="3.7" fill="#FF8000"/><rect x="1587.4" y="638.2" width="3.2" height="3" fill="#3a4050"/>
<ellipse cx="1670.3" cy="639.7" rx="4.2" ry="3.7" fill="#FF8000"/><rect x="1668.7" y="638.2" width="3.2" height="3" fill="#3a4050"/>
<ellipse cx="1751.6" cy="639.7" rx="4.2" ry="3.7" fill="#FF8000"/><rect x="1750.0" y="638.2" width="3.2" height="3" fill="#3a4050"/>
<ellipse cx="2158.1" cy="639.7" rx="4.2" ry="3.7" fill="#FF8000"/><rect x="2156.5" y="638.2" width="3.2" height="3" fill="#3a4050"/>
<ellipse cx="2564.6" cy="639.7" rx="4.2" ry="3.7" fill="#FF8000"/><rect x="2563.0" y="638.2" width="3.2" height="3" fill="#3a4050"/>
<ellipse cx="2645.9" cy="639.7" rx="4.2" ry="3.7" fill="#FF8000"/><rect x="2644.3" y="638.2" width="3.2" height="3" fill="#3a4050"/>
<ellipse cx="3052.4" cy="639.7" rx="4.2" ry="3.7" fill="#FF8000"/><rect x="3050.8" y="638.2" width="3.2" height="3" fill="#3a4050"/>
<ellipse cx="1589.0" cy="721.0" rx="4.2" ry="3.7" fill="#FF8000"/><rect x="1587.4" y="719.5" width="3.2" height="3" fill="#3a4050"/>
<ellipse cx="1670.3" cy="721.0" rx="4.2" ry="3.7" fill="#FF8000"/><rect x="1668.7" y="719.5" width="3.2" height="3" fill="#3a4050"/>
<ellipse cx="1751.6" cy="721.0" rx="4.2" ry="3.7" fill="#FF8000"/><rect x="1750.0" y="719.5" width="3.2" height="3" fill="#3a4050"/>
<ellipse cx="2645.9" cy="721.0" rx="4.2" ry="3.7" fill="#FF8000"/><rect x="2644.3" y="719.5" width="3.2" height="3" fill="#3a4050"/>
<ellipse cx="3052.4" cy="721.0" rx="4.2" ry="3.7" fill="#FF8000"/><rect x="3050.8" y="719.5" width="3.2" height="3" fill="#3a4050"/>
<ellipse cx="1589.0" cy="802.3" rx="4.2" ry="3.7" fill="#FF8000"/><rect x="1587.4" y="800.8" width="3.2" height="3" fill="#3a4050"/>
<ellipse cx="1670.3" cy="802.3" rx="4.2" ry="3.7" fill="#FF8000"/><rect x="1668.7" y="800.8" width="3.2" height="3" fill="#3a4050"/>
<ellipse cx="1751.6" cy="802.3" rx="4.2" ry="3.7" fill="#FF8000"/><rect x="1750.0" y="800.8" width="3.2" height="3" fill="#3a4050"/>
<ellipse cx="1832.9" cy="802.3" rx="4.2" ry="3.7" fill="#FF8000"/><rect x="1831.3" y="800.8" width="3.2" height="3" fill="#3a4050"/>
<ellipse cx="1914.2" cy="802.3" rx="4.2" ry="3.7" fill="#FF8000"/><rect x="1912.6" y="800.8" width="3.2" height="3" fill="#3a4050"/>
<ellipse cx="1995.5" cy="802.3" rx="4.2" ry="3.7" fill="#FF8000"/><rect x="1993.9" y="800.8" width="3.2" height="3" fill="#3a4050"/>
<ellipse cx="2076.8" cy="802.3" rx="4.2" ry="3.7" fill="#FF8000"/><rect x="2075.2" y="800.8" width="3.2" height="3" fill="#3a4050"/>
<ellipse cx="2158.1" cy="802.3" rx="4.2" ry="3.7" fill="#FF8000"/><rect x="2156.5" y="800.8" width="3.2" height="3" fill="#3a4050"/>
<ellipse cx="3052.4" cy="802.3" rx="4.2" ry="3.7" fill="#FF8000"/><rect x="3050.8" y="800.8" width="3.2" height="3" fill="#3a4050"/>
<ellipse cx="1589.0" cy="883.6" rx="4.2" ry="3.7" fill="#FF8000"/><rect x="1587.4" y="882.1" width="3.2" height="3" fill="#3a4050"/>
<ellipse cx="1670.3" cy="883.6" rx="4.2" ry="3.7" fill="#FF8000"/><rect x="1668.7" y="882.1" width="3.2" height="3" fill="#3a4050"/>
<ellipse cx="3052.4" cy="883.6" rx="4.2" ry="3.7" fill="#FF8000"/><rect x="3050.8" y="882.1" width="3.2" height="3" fill="#3a4050"/>
<ellipse cx="1589.0" cy="964.9" rx="4.2" ry="3.7" fill="#FF8000"/><rect x="1587.4" y="963.4" width="3.2" height="3" fill="#3a4050"/>
<ellipse cx="1589.0" cy="1046.2" rx="4.2" ry="3.7" fill="#FF8000"/><rect x="1587.4" y="1044.7" width="3.2" height="3" fill="#3a4050"/>
<ellipse cx="1589.0" cy="1127.5" rx="4.2" ry="3.7" fill="#FF8000"/><rect x="1587.4" y="1126.0" width="3.2" height="3" fill="#3a4050"/>
<ellipse cx="1589.0" cy="1208.8" rx="4.2" ry="3.7" fill="#FF8000"/><rect x="1587.4" y="1207.3" width="3.2" height="3" fill="#3a4050"/>
<ellipse cx="1589.0" cy="1290.1" rx="4.2" ry="3.7" fill="#FF8000"/><rect x="1587.4" y="1288.6" width="3.2" height="3" fill="#3a4050"/>
<ellipse cx="1589.0" cy="1371.4" rx="4.2" ry="3.7" fill="#FF8000"/><rect x="1587.4" y="1369.9" width="3.2" height="3" fill="#3a4050"/>
<ellipse cx="1589.0" cy="1452.7" rx="4.2" ry="3.7" fill="#FF8000"/><rect x="1587.4" y="1451.2" width="3.2" height="3" fill="#3a4050"/>
<ellipse cx="1589.0" cy="1534.0" rx="4.2" ry="3.7" fill="#FF8000"/><rect x="1587.4" y="1532.5" width="3.2" height="3" fill="#3a4050"/>
<ellipse cx="1589.0" cy="1615.3" rx="4.2" ry="3.7" fill="#FF8000"/><rect x="1587.4" y="1613.8" width="3.2" height="3" fill="#3a4050"/>
<ellipse cx="1670.3" cy="1615.3" rx="4.2" ry="3.7" fill="#FF8000"/><rect x="1668.7" y="1613.8" width="3.2" height="3" fill="#3a4050"/>
<ellipse cx="1589.0" cy="1696.6" rx="4.2" ry="3.7" fill="#FF8000"/><rect x="1587.4" y="1695.1" width="3.2" height="3" fill="#3a4050"/>
<ellipse cx="1670.3" cy="1696.6" rx="4.2" ry="3.7" fill="#FF8000"/><rect x="1668.7" y="1695.1" width="3.2" height="3" fill="#3a4050"/>
<ellipse cx="2727.2" cy="1696.6" rx="4.2" ry="3.7" fill="#FF8000"/><rect x="2725.6" y="1695.1" width="3.2" height="3" fill="#3a4050"/>
<ellipse cx="2808.5" cy="1696.6" rx="4.2" ry="3.7" fill="#FF8000"/><rect x="2806.9" y="1695.1" width="3.2" height="3" fill="#3a4050"/>
<ellipse cx="2889.8" cy="1696.6" rx="4.2" ry="3.7" fill="#FF8000"/><rect x="2888.2" y="1695.1" width="3.2" height="3" fill="#3a4050"/>
<ellipse cx="2971.1" cy="1696.6" rx="4.2" ry="3.7" fill="#FF8000"/><rect x="2969.5" y="1695.1" width="3.2" height="3" fill="#3a4050"/>
<ellipse cx="1589.0" cy="1777.9" rx="4.2" ry="3.7" fill="#FF8000"/><rect x="1587.4" y="1776.4" width="3.2" height="3" fill="#3a4050"/>
<ellipse cx="1670.3" cy="1777.9" rx="4.2" ry="3.7" fill="#FF8000"/><rect x="1668.7" y="1776.4" width="3.2" height="3" fill="#3a4050"/>
<ellipse cx="1751.6" cy="1777.9" rx="4.2" ry="3.7" fill="#FF8000"/><rect x="1750.0" y="1776.4" width="3.2" height="3" fill="#3a4050"/>
<ellipse cx="1832.9" cy="1777.9" rx="4.2" ry="3.7" fill="#FF8000"/><rect x="1831.3" y="1776.4" width="3.2" height="3" fill="#3a4050"/>
<ellipse cx="1914.2" cy="1777.9" rx="4.2" ry="3.7" fill="#FF8000"/><rect x="1912.6" y="1776.4" width="3.2" height="3" fill="#3a4050"/>
<ellipse cx="1995.5" cy="1777.9" rx="4.2" ry="3.7" fill="#FF8000"/><rect x="1993.9" y="1776.4" width="3.2" height="3" fill="#3a4050"/>
<ellipse cx="2076.8" cy="1777.9" rx="4.2" ry="3.7" fill="#FF8000"/><rect x="2075.2" y="1776.4" width="3.2" height="3" fill="#3a4050"/>
<ellipse cx="2158.1" cy="1777.9" rx="4.2" ry="3.7" fill="#FF8000"/><rect x="2156.5" y="1776.4" width="3.2" height="3" fill="#3a4050"/>
<ellipse cx="2239.4" cy="1777.9" rx="4.2" ry="3.7" fill="#FF8000"/><rect x="2237.8" y="1776.4" width="3.2" height="3" fill="#3a4050"/>
<ellipse cx="2402.0" cy="1777.9" rx="4.2" ry="3.7" fill="#FF8000"/><rect x="2400.4" y="1776.4" width="3.2" height="3" fill="#3a4050"/>
<ellipse cx="2645.9" cy="1777.9" rx="4.2" ry="3.7" fill="#FF8000"/><rect x="2644.3" y="1776.4" width="3.2" height="3" fill="#3a4050"/>
<ellipse cx="2727.2" cy="1777.9" rx="4.2" ry="3.7" fill="#FF8000"/><rect x="2725.6" y="1776.4" width="3.2" height="3" fill="#3a4050"/>
<ellipse cx="2808.5" cy="1777.9" rx="4.2" ry="3.7" fill="#FF8000"/><rect x="2806.9" y="1776.4" width="3.2" height="3" fill="#3a4050"/>
<ellipse cx="2889.8" cy="1777.9" rx="4.2" ry="3.7" fill="#FF8000"/><rect x="2888.2" y="1776.4" width="3.2" height="3" fill="#3a4050"/>
<ellipse cx="2971.1" cy="1777.9" rx="4.2" ry="3.7" fill="#FF8000"/><rect x="2969.5" y="1776.4" width="3.2" height="3" fill="#3a4050"/>
<ellipse cx="1751.6" cy="1859.2" rx="4.2" ry="3.7" fill="#FF8000"/><rect x="1750.0" y="1857.7" width="3.2" height="3" fill="#3a4050"/>
<ellipse cx="1832.9" cy="1859.2" rx="4.2" ry="3.7" fill="#FF8000"/><rect x="1831.3" y="1857.7" width="3.2" height="3" fill="#3a4050"/>
<ellipse cx="1914.2" cy="1859.2" rx="4.2" ry="3.7" fill="#FF8000"/><rect x="1912.6" y="1857.7" width="3.2" height="3" fill="#3a4050"/>
<rect x="1749.5" y="185.1" width="407.0" height="316.7" fill="none" stroke="#FFFF00" stroke-width="1"/>
<rect x="1736.5" y="280.6" width="39.0" height="70.0" rx="19.5" fill="#FF8000"/>
<rect x="1744.0" y="287.6" width="24.0" height="56.0" rx="12.0" fill="#404040"/>
<rect x="1736.5" y="441.7" width="39.0" height="70.0" rx="19.5" fill="#FF8000"/>
<rect x="1744.0" y="448.7" width="24.0" height="56.0" rx="12.0" fill="#404040"/>
<rect x="2129.5" y="280.6" width="39.0" height="70.0" rx="19.5" fill="#FF8000"/>
<rect x="2137.0" y="287.6" width="24.0" height="56.0" rx="12.0" fill="#404040"/>
<rect x="2129.5" y="441.7" width="39.0" height="70.0" rx="19.5" fill="#FF8000"/>
<rect x="2137.0" y="448.7" width="24.0" height="56.0" rx="12.0" fill="#404040"/>
<rect x="1827.5" y="445.0" width="7.0" height="135.0" fill="#FF8000"/>
<rect x="1841.1" y="445.0" width="7.0" height="135.0" fill="#FF8000"/>
<rect x="1854.6" y="445.0" width="7.0" height="135.0" fill="#FF8000"/>
<rect x="1868.2" y="445.0" width="7.0" height="135.0" fill="#FF8000"/>
<rect x="1881.7" y="445.0" width="7.0" height="135.0" fill="#FF8000"/>
<rect x="1895.3" y="445.0" width="7.0" height="135.0" fill="#FF8000"/>
<rect x="1908.9" y="445.0" width="7.0" height="135.0" fill="#FF8000"/>
<rect x="1922.4" y="445.0" width="7.0" height="135.0" fill="#FF8000"/>
<rect x="1936.0" y="445.0" width="7.0" height="135.0" fill="#FF8000"/>
<rect x="1949.5" y="445.0" width="7.0" height="135.0" fill="#FF8000"/>
<rect x="1963.1" y="445.0" width="7.0" height="135.0" fill="#FF8000"/>
<rect x="1976.7" y="445.0" width="7.0" height="135.0" fill="#FF8000"/>
<rect x="1990.2" y="445.0" width="7.0" height="135.0" fill="#FF8000"/>
<rect x="2003.8" y="445.0" width="7.0" height="135.0" fill="#FF8000"/>
<rect x="2017.3" y="445.0" width="7.0" height="135.0" fill="#FF8000"/>
<rect x="2030.9" y="445.0" width="7.0" height="135.0" fill="#FF8000"/>
<rect x="2044.5" y="445.0" width="7.0" height="135.0" fill="#FF8000"/>
<rect x="2058.0" y="445.0" width="7.0" height="135.0" fill="#FF8000"/>
<rect x="2071.6" y="445.0" width="7.0" height="135.0" fill="#FF8000"/>
<path d="M1995.0 575.0 L2020.5 591.7" stroke="#00E0E0" stroke-width="7" fill="none" stroke-linecap="butt" stroke-linejoin="round"/>
<path d="M2020.5 591.7 L2035.0 575.0 L2034.8 605.8" stroke="#00E0E0" stroke-width="7" fill="none" stroke-linecap="butt" stroke-linejoin="round"/>
<path d="M2020.5 591.7 L2048.0 580.0 L2061.6 591.7 L2077.0 575.0" stroke="#00E0E0" stroke-width="7" fill="none" stroke-linecap="butt" stroke-linejoin="round"/>
<path d="M2034.8 605.8 L2061.6 591.7" stroke="#00E0E0" stroke-width="7" fill="none" stroke-linecap="butt" stroke-linejoin="round"/>
<path d="M2020.5 591.7 L2018.0 618.6 L2034.8 605.8 L2042.0 648.0" stroke="#00E0E0" stroke-width="7" fill="none" stroke-linecap="butt" stroke-linejoin="round"/>
<path d="M2018.0 618.6 L2014.0 640.0" stroke="#00E0E0" stroke-width="7" fill="none" stroke-linecap="butt" stroke-linejoin="round"/>
<path d="M2018.0 618.6 L2036.0 632.0" stroke="#00E0E0" stroke-width="6" fill="none" stroke-linecap="butt" stroke-linejoin="round"/>
<ellipse cx="2020.5" cy="591.7" rx="4.2" ry="3.7" fill="#FF8000"/><rect x="2018.9" y="590.2" width="3.2" height="3" fill="#3a4050"/>
<ellipse cx="2061.6" cy="591.7" rx="4.2" ry="3.7" fill="#FF8000"/><rect x="2060.0" y="590.2" width="3.2" height="3" fill="#3a4050"/>
<ellipse cx="2034.8" cy="605.8" rx="4.2" ry="3.7" fill="#FF8000"/><rect x="2033.2" y="604.3" width="3.2" height="3" fill="#3a4050"/>
<ellipse cx="2018.0" cy="618.6" rx="4.2" ry="3.7" fill="#FF8000"/><rect x="2016.4" y="617.1" width="3.2" height="3" fill="#3a4050"/>
<rect x="1793.9" y="626.5" width="107.5" height="54.4" fill="none" stroke="#FFFF00" stroke-width="1"/>
<rect x="1916.2" y="626.5" width="107.3" height="54.4" fill="none" stroke="#FFFF00" stroke-width="1"/>
<path d="M1832.1 641.0 L1851.5 620.5 L1862.5 641.0" stroke="#00E0E0" stroke-width="6" fill="none" stroke-linecap="butt" stroke-linejoin="round"/>
<path d="M1892.9 641.0 L1905.7 620.5 L1923.3 641.0" stroke="#00E0E0" stroke-width="6" fill="none" stroke-linecap="butt" stroke-linejoin="round"/>
<path d="M1953.7 641.0 L1959.8 617.0 L1984.1 641.0" stroke="#00E0E0" stroke-width="6" fill="none" stroke-linecap="butt" stroke-linejoin="round"/>
<rect x="1897.0" y="634.0" width="21.0" height="38.0" fill="#00C8C8"/>
<path d="M1905.0 640.0 L1905.0 666.0" stroke="#00E0E0" stroke-width="8" fill="none" stroke-linecap="butt" stroke-linejoin="round"/>
<rect x="1794.2" y="633.0" width="15" height="15" rx="3" fill="#FF8000"/>
<rect x="1794.2" y="657.5" width="15" height="15" rx="3" fill="#FF8000"/>
<rect x="1824.6" y="633.0" width="15" height="15" rx="3" fill="#FF8000"/>
<rect x="1824.6" y="657.5" width="15" height="15" rx="3" fill="#FF8000"/>
<rect x="1855.0" y="633.0" width="15" height="15" rx="3" fill="#FF8000"/>
<rect x="1855.0" y="657.5" width="15" height="15" rx="3" fill="#FF8000"/>
<rect x="1885.4" y="633.0" width="15" height="15" rx="3" fill="#FF8000"/>
<rect x="1885.4" y="657.5" width="15" height="15" rx="3" fill="#FF8000"/>
<rect x="1915.8" y="633.0" width="15" height="15" rx="3" fill="#FF8000"/>
<rect x="1915.8" y="657.5" width="15" height="15" rx="3" fill="#FF8000"/>
<rect x="1946.2" y="633.0" width="15" height="15" rx="3" fill="#FF8000"/>
<rect x="1946.2" y="657.5" width="15" height="15" rx="3" fill="#FF8000"/>
<rect x="1976.6" y="633.0" width="15" height="15" rx="3" fill="#FF8000"/>
<rect x="1976.6" y="657.5" width="15" height="15" rx="3" fill="#FF8000"/>
<rect x="2007.0" y="633.0" width="15" height="15" rx="3" fill="#FF8000"/>
<rect x="2007.0" y="657.5" width="15" height="15" rx="3" fill="#FF8000"/>
<ellipse cx="1851.5" cy="620.5" rx="4.2" ry="3.7" fill="#FF8000"/><rect x="1849.9" y="619.0" width="3.2" height="3" fill="#3a4050"/>
<ellipse cx="1905.7" cy="620.5" rx="4.2" ry="3.7" fill="#FF8000"/><rect x="1904.1" y="619.0" width="3.2" height="3" fill="#3a4050"/>
<ellipse cx="1959.8" cy="617.0" rx="4.2" ry="3.7" fill="#FF8000"/><rect x="1958.2" y="615.5" width="3.2" height="3" fill="#3a4050"/>
<rect x="2020.0" y="634.0" width="20.0" height="38.0" fill="#00C8C8"/>
<rect x="2045.5" y="635.5" width="19.7" height="12.7" fill="#00A0A4"/>
<rect x="2045.5" y="659.3" width="19.7" height="12.7" fill="#00A0A4"/>
<path d="M2045.5 642.1L2065.2 665.4M2045.5 665.4L2065.2 642.1" stroke="#00E0E0" stroke-width="8" fill="none"/>
<path d="M2065.2 642.1L2084.8 665.4M2065.2 665.4L2084.8 642.1" stroke="#00E0E0" stroke-width="8" fill="none"/>
<path d="M2084.8 642.1L2104.5 665.4M2084.8 665.4L2104.5 642.1" stroke="#00E0E0" stroke-width="8" fill="none"/>
<rect x="2039.0" y="634.5" width="13" height="12.7" rx="3" fill="#FF8000"/>
<rect x="2039.0" y="660.3" width="13" height="12.7" rx="3" fill="#FF8000"/>
<rect x="2039.5" y="639.0" width="12.0" height="29.5" fill="none" stroke="#FFFF00" stroke-width="1"/>
<rect x="2058.7" y="634.5" width="13" height="12.7" rx="3" fill="#FF8000"/>
<rect x="2058.7" y="660.3" width="13" height="12.7" rx="3" fill="#FF8000"/>
<rect x="2059.2" y="639.0" width="12.0" height="29.5" fill="none" stroke="#FFFF00" stroke-width="1"/>
<rect x="2078.3" y="634.5" width="13" height="12.7" rx="3" fill="#FF8000"/>
<rect x="2078.3" y="660.3" width="13" height="12.7" rx="3" fill="#FF8000"/>
<rect x="2078.8" y="639.0" width="12.0" height="29.5" fill="none" stroke="#FFFF00" stroke-width="1"/>
<rect x="2098.0" y="634.5" width="13" height="12.7" rx="3" fill="#FF8000"/>
<rect x="2098.0" y="660.3" width="13" height="12.7" rx="3" fill="#FF8000"/>
<rect x="2098.5" y="639.0" width="12.0" height="29.5" fill="none" stroke="#FFFF00" stroke-width="1"/>
<rect x="2214.9" y="538.7" width="76.3" height="71.6" fill="none" stroke="#FFFF00" stroke-width="1"/>
<rect x="2240.4" y="522.0" width="24.5" height="35.0" fill="#FF8000"/>
<rect x="2212.0" y="581.0" width="29.5" height="30.0" fill="#008000"/>
<rect x="2262.5" y="581.0" width="31.0" height="30.0" fill="#008000"/>
<rect x="2214.0" y="583.0" width="26.0" height="26.0" fill="#FF8000"/>
<rect x="2264.5" y="583.0" width="27.0" height="26.0" fill="#FF8000"/>
<rect x="2214.9" y="538.7" width="76.3" height="71.6" fill="none" stroke="#FFFF00" stroke-width="1"/>
<ellipse cx="2220.0" cy="538.0" rx="4.2" ry="3.7" fill="#FF8000"/><rect x="2218.4" y="536.5" width="3.2" height="3" fill="#3a4050"/>
<rect x="2374.5" y="538.7" width="76.3" height="71.6" fill="none" stroke="#FFFF00" stroke-width="1"/>
<rect x="2400.0" y="522.0" width="24.5" height="35.0" fill="#FF8000"/>
<rect x="2371.6" y="581.0" width="29.5" height="30.0" fill="#008000"/>
<rect x="2422.1" y="581.0" width="31.0" height="30.0" fill="#008000"/>
<rect x="2373.6" y="583.0" width="26.0" height="26.0" fill="#FF8000"/>
<rect x="2424.1" y="583.0" width="27.0" height="26.0" fill="#FF8000"/>
<rect x="2374.5" y="538.7" width="76.3" height="71.6" fill="none" stroke="#FFFF00" stroke-width="1"/>
<ellipse cx="2379.6" cy="538.0" rx="4.2" ry="3.7" fill="#FF8000"/><rect x="2378.0" y="536.5" width="3.2" height="3" fill="#3a4050"/>
<path d="M2275.0 500.0 L2258.0 524.0" stroke="#00E0E0" stroke-width="6" fill="none" stroke-linecap="butt" stroke-linejoin="round"/>
<path d="M2243.0 475.0 L2280.0 470.0 L2282.0 497.0 L2250.0 500.0Z" fill="#00E0E0"/>
<path d="M2240.0 478.0 L2252.0 500.0" stroke="#00A0A0" stroke-width="6" fill="none" stroke-linecap="butt" stroke-linejoin="round"/>
<rect x="2253.0" y="459.6" width="12.0" height="15.9" rx="3" fill="#FF8000"/>
<rect x="2253.0" y="487.9" width="12.0" height="15.9" rx="3" fill="#FF8000"/>
<rect x="2253.5" y="464.1" width="11.0" height="35.2" fill="none" stroke="#FFFF00" stroke-width="1"/>
<rect x="2270.0" y="459.6" width="12.0" height="15.9" rx="3" fill="#FF8000"/>
<rect x="2270.0" y="487.9" width="12.0" height="15.9" rx="3" fill="#FF8000"/>
<rect x="2270.5" y="464.1" width="11.0" height="35.2" fill="none" stroke="#FFFF00" stroke-width="1"/>
<ellipse cx="2240.5" cy="477.5" rx="4.2" ry="3.7" fill="#FF8000"/><rect x="2238.9" y="476.0" width="3.2" height="3" fill="#3a4050"/>
<path d="M2436.0 500.0 L2425.0 525.0" stroke="#00E0E0" stroke-width="6" fill="none" stroke-linecap="butt" stroke-linejoin="round"/>
<rect x="2409.0" y="489.0" width="13.0" height="14.0" rx="3" fill="#FF8000"/>
<rect x="2432.0" y="489.0" width="13.0" height="14.0" rx="3" fill="#FF8000"/>
<rect x="2413.5" y="489.5" width="27.0" height="13.0" fill="none" stroke="#FFFF00" stroke-width="1"/>
<path d="M2460.0 496.3 L2484.3 477.3" stroke="#00E0E0" stroke-width="6" fill="none" stroke-linecap="butt" stroke-linejoin="round"/>
<ellipse cx="2460.0" cy="496.3" rx="4.2" ry="3.7" fill="#FF8000"/><rect x="2458.4" y="494.8" width="3.2" height="3" fill="#3a4050"/>
<ellipse cx="2484.3" cy="477.3" rx="4.2" ry="3.7" fill="#FF8000"/><rect x="2482.7" y="475.8" width="3.2" height="3" fill="#3a4050"/>
<rect x="2220.3" y="643.0" width="13.0" height="13.1" rx="3" fill="#FF8000"/>
<rect x="2220.3" y="666.2" width="13.0" height="13.1" rx="3" fill="#FF8000"/>
<rect x="2220.8" y="647.5" width="12.0" height="27.3" fill="none" stroke="#FFFF00" stroke-width="1"/>
<path d="M2277.5 650.2L2305.2 672.1M2277.5 672.1L2305.2 650.2" stroke="#00E0E0" stroke-width="8" fill="none"/>
<rect x="2271.0" y="643.0" width="13" height="12.0" rx="3" fill="#FF8000"/>
<rect x="2271.0" y="667.3" width="13" height="12.0" rx="3" fill="#FF8000"/>
<rect x="2271.5" y="647.5" width="12.0" height="27.3" fill="none" stroke="#FFFF00" stroke-width="1"/>
<rect x="2298.7" y="643.0" width="13" height="12.0" rx="3" fill="#FF8000"/>
<rect x="2298.7" y="667.3" width="13" height="12.0" rx="3" fill="#FF8000"/>
<rect x="2299.2" y="647.5" width="12.0" height="27.3" fill="none" stroke="#FFFF00" stroke-width="1"/>
<path d="M2305.0 660.0 L2328.0 649.0 L2321.0 674.0" stroke="#00E0E0" stroke-width="6" fill="none" stroke-linecap="butt" stroke-linejoin="round"/>
<ellipse cx="2328.0" cy="649.0" rx="4.2" ry="3.7" fill="#FF8000"/><rect x="2326.4" y="647.5" width="3.2" height="3" fill="#3a4050"/>
<ellipse cx="2321.0" cy="674.0" rx="4.2" ry="3.7" fill="#FF8000"/><rect x="2319.4" y="672.5" width="3.2" height="3" fill="#3a4050"/>
<rect x="2380.5" y="643.0" width="30.0" height="12.9" fill="#00A0A4"/>
<rect x="2380.5" y="667.1" width="30.0" height="12.9" fill="#00A0A4"/>
<path d="M2380.5 649.7L2410.5 673.3M2380.5 673.3L2410.5 649.7" stroke="#00E0E0" stroke-width="8" fill="none"/>
<path d="M2410.5 649.7L2440.5 673.3M2410.5 673.3L2440.5 649.7" stroke="#00E0E0" stroke-width="8" fill="none"/>
<path d="M2440.5 649.7L2470.5 673.3M2440.5 673.3L2470.5 649.7" stroke="#00E0E0" stroke-width="8" fill="none"/>
<rect x="2374.0" y="642.0" width="13" height="12.9" rx="3" fill="#FF8000"/>
<rect x="2374.0" y="668.1" width="13" height="12.9" rx="3" fill="#FF8000"/>
<rect x="2374.5" y="646.5" width="12.0" height="30.0" fill="none" stroke="#FFFF00" stroke-width="1"/>
<rect x="2404.0" y="642.0" width="13" height="12.9" rx="3" fill="#FF8000"/>
<rect x="2404.0" y="668.1" width="13" height="12.9" rx="3" fill="#FF8000"/>
<rect x="2404.5" y="646.5" width="12.0" height="30.0" fill="none" stroke="#FFFF00" stroke-width="1"/>
<rect x="2434.0" y="642.0" width="13" height="12.9" rx="3" fill="#FF8000"/>
<rect x="2434.0" y="668.1" width="13" height="12.9" rx="3" fill="#FF8000"/>
<rect x="2434.5" y="646.5" width="12.0" height="30.0" fill="none" stroke="#FFFF00" stroke-width="1"/>
<rect x="2464.0" y="642.0" width="13" height="12.9" rx="3" fill="#FF8000"/>
<rect x="2464.0" y="668.1" width="13" height="12.9" rx="3" fill="#FF8000"/>
<rect x="2464.5" y="646.5" width="12.0" height="30.0" fill="none" stroke="#FFFF00" stroke-width="1"/>
<path d="M2442.0 650.0 L2472.0 646.0 L2468.0 676.0 L2452.0 678.0Z" fill="#00C8C8"/>
<rect x="1789.1" y="817.0" width="13.0" height="13.3" rx="3" fill="#FF8000"/>
<rect x="1789.1" y="840.7" width="13.0" height="13.3" rx="3" fill="#FF8000"/>
<rect x="1789.6" y="821.5" width="12.0" height="28.0" fill="none" stroke="#FFFF00" stroke-width="1"/>
<rect x="1865.0" y="818.0" width="31.0" height="12.2" fill="#00A0A4"/>
<rect x="1865.0" y="840.8" width="31.0" height="12.2" fill="#00A0A4"/>
<rect x="1957.9" y="818.0" width="31.0" height="12.2" fill="#00A0A4"/>
<rect x="1957.9" y="840.8" width="31.0" height="12.2" fill="#00A0A4"/>
<path d="M1834.0 824.3L1865.0 846.7M1834.0 846.7L1865.0 824.3" stroke="#00E0E0" stroke-width="8" fill="none"/>
<path d="M1865.0 824.3L1895.9 846.7M1865.0 846.7L1895.9 824.3" stroke="#00E0E0" stroke-width="8" fill="none"/>
<path d="M1895.9 824.3L1926.9 846.7M1895.9 846.7L1926.9 824.3" stroke="#00E0E0" stroke-width="8" fill="none"/>
<path d="M1926.9 824.3L1957.9 846.7M1926.9 846.7L1957.9 824.3" stroke="#00E0E0" stroke-width="8" fill="none"/>
<path d="M1957.9 824.3L1988.8 846.7M1957.9 846.7L1988.8 824.3" stroke="#00E0E0" stroke-width="8" fill="none"/>
<path d="M1988.8 824.3L2019.8 846.7M1988.8 846.7L2019.8 824.3" stroke="#00E0E0" stroke-width="8" fill="none"/>
<path d="M2019.8 824.3L2050.8 846.7M2019.8 846.7L2050.8 824.3" stroke="#00E0E0" stroke-width="8" fill="none"/>
<path d="M2050.8 824.3L2081.7 846.7M2050.8 846.7L2081.7 824.3" stroke="#00E0E0" stroke-width="8" fill="none"/>
<path d="M2081.7 824.3L2112.7 846.7M2081.7 846.7L2112.7 824.3" stroke="#00E0E0" stroke-width="8" fill="none"/>
<rect x="1827.5" y="817.0" width="13" height="12.2" rx="3" fill="#FF8000"/>
<rect x="1827.5" y="841.8" width="13" height="12.2" rx="3" fill="#FF8000"/>
<rect x="1828.0" y="821.5" width="12.0" height="28.0" fill="none" stroke="#FFFF00" stroke-width="1"/>
<rect x="1858.5" y="817.0" width="13" height="12.2" rx="3" fill="#FF8000"/>
<rect x="1858.5" y="841.8" width="13" height="12.2" rx="3" fill="#FF8000"/>
<rect x="1859.0" y="821.5" width="12.0" height="28.0" fill="none" stroke="#FFFF00" stroke-width="1"/>
<rect x="1889.4" y="817.0" width="13" height="12.2" rx="3" fill="#FF8000"/>
<rect x="1889.4" y="841.8" width="13" height="12.2" rx="3" fill="#FF8000"/>
<rect x="1889.9" y="821.5" width="12.0" height="28.0" fill="none" stroke="#FFFF00" stroke-width="1"/>
<rect x="1920.4" y="817.0" width="13" height="12.2" rx="3" fill="#FF8000"/>
<rect x="1920.4" y="841.8" width="13" height="12.2" rx="3" fill="#FF8000"/>
<rect x="1920.9" y="821.5" width="12.0" height="28.0" fill="none" stroke="#FFFF00" stroke-width="1"/>
<rect x="1951.4" y="817.0" width="13" height="12.2" rx="3" fill="#FF8000"/>
<rect x="1951.4" y="841.8" width="13" height="12.2" rx="3" fill="#FF8000"/>
<rect x="1951.9" y="821.5" width="12.0" height="28.0" fill="none" stroke="#FFFF00" stroke-width="1"/>
<rect x="1982.3" y="817.0" width="13" height="12.2" rx="3" fill="#FF8000"/>
<rect x="1982.3" y="841.8" width="13" height="12.2" rx="3" fill="#FF8000"/>
<rect x="1982.8" y="821.5" width="12.0" height="28.0" fill="none" stroke="#FFFF00" stroke-width="1"/>
<rect x="2013.3" y="817.0" width="13" height="12.2" rx="3" fill="#FF8000"/>
<rect x="2013.3" y="841.8" width="13" height="12.2" rx="3" fill="#FF8000"/>
<rect x="2013.8" y="821.5" width="12.0" height="28.0" fill="none" stroke="#FFFF00" stroke-width="1"/>
<rect x="2044.3" y="817.0" width="13" height="12.2" rx="3" fill="#FF8000"/>
<rect x="2044.3" y="841.8" width="13" height="12.2" rx="3" fill="#FF8000"/>
<rect x="2044.8" y="821.5" width="12.0" height="28.0" fill="none" stroke="#FFFF00" stroke-width="1"/>
<rect x="2075.2" y="817.0" width="13" height="12.2" rx="3" fill="#FF8000"/>
<rect x="2075.2" y="841.8" width="13" height="12.2" rx="3" fill="#FF8000"/>
<rect x="2075.7" y="821.5" width="12.0" height="28.0" fill="none" stroke="#FFFF00" stroke-width="1"/>
<rect x="2106.2" y="817.0" width="13" height="12.2" rx="3" fill="#FF8000"/>
<rect x="2106.2" y="841.8" width="13" height="12.2" rx="3" fill="#FF8000"/>
<rect x="2106.7" y="821.5" width="12.0" height="28.0" fill="none" stroke="#FFFF00" stroke-width="1"/>
<path d="M1996.0 802.0 L1990.0 825.0" stroke="#00A0A0" stroke-width="7" fill="none" stroke-linecap="butt" stroke-linejoin="round"/>
<ellipse cx="1996.0" cy="802.0" rx="4.2" ry="3.7" fill="#FF8000"/><rect x="1994.4" y="800.5" width="3.2" height="3" fill="#3a4050"/>
<rect x="2194.0" y="808.0" width="26.5" height="42.7" fill="#FF8000"/>
<rect x="2308.7" y="808.0" width="26.3" height="42.7" fill="#FF8000"/>
<rect x="2224.5" y="802.5" width="81.7" height="55.6" fill="none" stroke="#FFFF00" stroke-width="1"/>
<path d="M2320.0 845.0 L2351.0 868.0 L2375.0 840.0" stroke="#00E0E0" stroke-width="6" fill="none" stroke-linecap="butt" stroke-linejoin="round"/>
<ellipse cx="2351.0" cy="868.0" rx="4.2" ry="3.7" fill="#FF8000"/><rect x="2349.4" y="866.5" width="3.2" height="3" fill="#3a4050"/>
<path d="M2375.5 812.5L2402.5 835.5M2375.5 835.5L2402.5 812.5" stroke="#00E0E0" stroke-width="8" fill="none"/>
<rect x="2369.0" y="805.0" width="13" height="12.5" rx="3" fill="#FF8000"/>
<rect x="2369.0" y="830.5" width="13" height="12.5" rx="3" fill="#FF8000"/>
<rect x="2369.5" y="809.5" width="12.0" height="29.0" fill="none" stroke="#FFFF00" stroke-width="1"/>
<rect x="2396.0" y="805.0" width="13" height="12.5" rx="3" fill="#FF8000"/>
<rect x="2396.0" y="830.5" width="13" height="12.5" rx="3" fill="#FF8000"/>
<rect x="2396.5" y="809.5" width="12.0" height="29.0" fill="none" stroke="#FFFF00" stroke-width="1"/>
<path d="M2405.0 830.0 L2431.0 820.0" stroke="#00E0E0" stroke-width="6" fill="none" stroke-linecap="butt" stroke-linejoin="round"/>
<rect x="2422.5" y="779.5" width="97.6" height="114.4" fill="none" stroke="#FFFF00" stroke-width="1"/>
<rect x="2431.5" y="787.0" width="32.5" height="37.5" fill="#FF8000"/>
<rect x="2431.5" y="846.7" width="32.5" height="38.0" fill="#FF8000"/>
<rect x="2477.0" y="787.0" width="33.0" height="37.5" fill="#FF8000"/>
<rect x="2477.0" y="846.7" width="33.0" height="38.0" fill="#FF8000"/>
<path d="M2455.0 885.0 L2470.0 915.0" stroke="#00E0E0" stroke-width="6" fill="none" stroke-linecap="butt" stroke-linejoin="round"/>
<path d="M2500.0 885.0 L2515.0 915.0" stroke="#00E0E0" stroke-width="6" fill="none" stroke-linecap="butt" stroke-linejoin="round"/>
<rect x="2469.5" y="908.4" width="26.0" height="13.0" fill="#00A0A4"/>
<rect x="2469.5" y="932.7" width="26.0" height="13.0" fill="#00A0A4"/>
<rect x="2495.5" y="908.4" width="26.0" height="13.0" fill="#00A0A4"/>
<rect x="2495.5" y="932.7" width="26.0" height="13.0" fill="#00A0A4"/>
<path d="M2469.5 915.2L2495.5 938.9M2469.5 938.9L2495.5 915.2" stroke="#00E0E0" stroke-width="8" fill="none"/>
<path d="M2495.5 915.2L2521.5 938.9M2495.5 938.9L2521.5 915.2" stroke="#00E0E0" stroke-width="8" fill="none"/>
<rect x="2463.0" y="907.4" width="13" height="13.0" rx="3" fill="#FF8000"/>
<rect x="2463.0" y="933.7" width="13" height="13.0" rx="3" fill="#FF8000"/>
<rect x="2463.5" y="911.9" width="12.0" height="30.3" fill="none" stroke="#FFFF00" stroke-width="1"/>
<rect x="2489.0" y="907.4" width="13" height="13.0" rx="3" fill="#FF8000"/>
<rect x="2489.0" y="933.7" width="13" height="13.0" rx="3" fill="#FF8000"/>
<rect x="2489.5" y="911.9" width="12.0" height="30.3" fill="none" stroke="#FFFF00" stroke-width="1"/>
<rect x="2515.0" y="907.4" width="13" height="13.0" rx="3" fill="#FF8000"/>
<rect x="2515.0" y="933.7" width="13" height="13.0" rx="3" fill="#FF8000"/>
<rect x="2515.5" y="911.9" width="12.0" height="30.3" fill="none" stroke="#FFFF00" stroke-width="1"/>
<rect x="2291.0" y="888.0" width="13.3" height="13.0" rx="3" fill="#FF8000"/>
<rect x="2314.7" y="888.0" width="13.3" height="13.0" rx="3" fill="#FF8000"/>
<rect x="2295.5" y="888.5" width="28.0" height="12.0" fill="none" stroke="#FFFF00" stroke-width="1"/>
<path d="M2305.0 897.0 L2321.0 924.0" stroke="#00E0E0" stroke-width="9" fill="none" stroke-linecap="butt" stroke-linejoin="round"/>
<circle cx="2321.0" cy="924.0" r="9.6" fill="#FF8000"/>
<ellipse cx="2270.7" cy="894.8" rx="4.2" ry="3.7" fill="#FF8000"/><rect x="2269.1" y="893.3" width="3.2" height="3" fill="#3a4050"/>
<ellipse cx="2422.3" cy="930.6" rx="4.2" ry="3.7" fill="#FF8000"/><rect x="2420.7" y="929.1" width="3.2" height="3" fill="#3a4050"/>
<ellipse cx="2366.8" cy="953.7" rx="4.2" ry="3.7" fill="#FF8000"/><rect x="2365.2" y="952.2" width="3.2" height="3" fill="#3a4050"/>
<ellipse cx="2377.7" cy="953.7" rx="4.2" ry="3.7" fill="#FF8000"/><rect x="2376.1" y="952.2" width="3.2" height="3" fill="#3a4050"/>
<ellipse cx="2358.0" cy="1025.3" rx="4.2" ry="3.7" fill="#FF8000"/><rect x="2356.4" y="1023.8" width="3.2" height="3" fill="#3a4050"/>
<ellipse cx="2538.4" cy="1039.7" rx="4.2" ry="3.7" fill="#FF8000"/><rect x="2536.8" y="1038.2" width="3.2" height="3" fill="#3a4050"/>
<path d="M2154.0 980.0 L2173.0 994.0" stroke="#00E0E0" stroke-width="6" fill="none" stroke-linecap="butt" stroke-linejoin="round"/>
<ellipse cx="2154.0" cy="980.0" rx="4.2" ry="3.7" fill="#FF8000"/><rect x="2152.4" y="978.5" width="3.2" height="3" fill="#3a4050"/>
<ellipse cx="2173.0" cy="994.0" rx="4.2" ry="3.7" fill="#FF8000"/><rect x="2171.4" y="992.5" width="3.2" height="3" fill="#3a4050"/>
<rect x="1757.5" y="872.5" width="381.0" height="271.0" fill="none" stroke="#FFFF00" stroke-width="1"/>
<path d="M1817.2 908.5L1806.4 920.0M1990.5 908.5L1979.7 920.0M1990.5 908.5L2001.4 920.0M2033.9 908.5L2044.7 920.0M2055.5 908.5L2044.7 920.0M2077.2 908.5L2066.4 920.0M2077.2 908.5L2088.1 920.0M1795.5 931.0L1784.7 920.0M1795.5 931.0L1806.4 920.0M1838.8 931.0L1849.7 942.2M1860.5 931.0L1871.4 920.0M1860.5 931.0L1871.4 942.2M1882.2 931.0L1871.4 942.2M1882.2 931.0L1893.0 942.2M1903.8 931.0L1893.0 920.0M1903.8 931.0L1914.7 920.0M1947.2 931.0L1936.4 942.2M1968.9 931.0L1958.1 920.0M1968.9 931.0L1958.1 942.2M1968.9 931.0L1979.7 942.2M1990.5 931.0L1979.7 942.2M2012.2 931.0L2001.4 920.0M2012.2 931.0L2023.1 942.2M2033.9 931.0L2023.1 920.0M2055.5 931.0L2044.7 920.0M2055.5 931.0L2066.4 920.0M2077.2 931.0L2066.4 942.2M2098.9 931.0L2109.8 942.2M1795.5 953.3L1806.4 942.2M1817.2 953.3L1806.4 964.3M1817.2 953.3L1828.0 964.3M1838.8 953.3L1849.7 942.2M1860.5 953.3L1849.7 942.2M1860.5 953.3L1871.4 942.2M1860.5 953.3L1871.4 964.3M1882.2 953.3L1871.4 964.3M1925.5 953.3L1936.4 942.2M1947.2 953.3L1936.4 942.2M1947.2 953.3L1958.1 964.3M1968.9 953.3L1958.1 964.3M1968.9 953.3L1979.7 964.3M1990.5 953.3L1979.7 964.3M1990.5 953.3L2001.4 964.3M2012.2 953.3L2023.1 942.2M2012.2 953.3L2001.4 964.3M2012.2 953.3L2023.1 964.3M2033.9 953.3L2044.7 964.3M2055.5 953.3L2066.4 942.2M2055.5 953.3L2066.4 964.3M2077.2 953.3L2088.1 964.3M2098.9 953.3L2109.8 964.3M1795.5 975.5L1784.7 964.3M1817.2 975.5L1806.4 964.3M1947.2 975.5L1958.1 964.3M1968.9 975.5L1958.1 964.3M1968.9 975.5L1979.7 964.3M1990.5 975.5L1979.7 964.3M2033.9 975.5L2044.7 964.3M2055.5 975.5L2044.7 964.3M2055.5 975.5L2066.4 964.3M2077.2 975.5L2088.1 964.3" stroke="#006A6E" stroke-width="9" fill="none"/>
<path d="M1795.5 908.5L1784.7 920.0M1795.5 908.5L1806.4 920.0M1817.2 908.5L1828.0 920.0M1838.8 908.5L1828.0 920.0M1838.8 908.5L1849.7 920.0M1968.9 908.5L1979.7 920.0M1817.2 931.0L1806.4 920.0M1838.8 931.0L1849.7 920.0M1838.8 931.0L1828.0 942.2M1860.5 931.0L1849.7 920.0M1860.5 931.0L1849.7 942.2M1882.2 931.0L1871.4 920.0M1947.2 931.0L1958.1 942.2M1968.9 931.0L1979.7 920.0M1990.5 931.0L2001.4 942.2M2012.2 931.0L2023.1 920.0M2098.9 931.0L2088.1 920.0M2098.9 931.0L2109.8 920.0M1795.5 953.3L1806.4 964.3M1838.8 953.3L1849.7 964.3M1903.8 953.3L1914.7 964.3M1925.5 953.3L1914.7 964.3M1925.5 953.3L1936.4 964.3M1947.2 953.3L1958.1 942.2M1947.2 953.3L1936.4 964.3M2033.9 953.3L2023.1 942.2M2077.2 953.3L2066.4 942.2M2098.9 953.3L2088.1 964.3M1860.5 975.5L1849.7 964.3M1882.2 975.5L1893.0 964.3M1903.8 975.5L1893.0 964.3M1947.2 975.5L1936.4 964.3M1990.5 975.5L2001.4 964.3" stroke="#00A0A4" stroke-width="9" fill="none"/>
<path d="M1828.0 920.0L1849.7 920.0M2001.4 920.0L1979.7 942.2M2044.7 920.0L2066.4 942.2M2066.4 920.0L2044.7 942.2M2088.1 920.0L2066.4 942.2M1784.7 942.2L1806.4 964.3M1806.4 942.2L1828.0 942.2M1806.4 942.2L1828.0 964.3M1828.0 942.2L1849.7 942.2M1849.7 942.2L1871.4 964.3M1893.0 942.2L1914.7 964.3M1936.4 942.2L1914.7 964.3M1936.4 942.2L1936.4 964.3M1958.1 942.2L1979.7 942.2M1958.1 942.2L1936.4 964.3M2001.4 942.2L1979.7 964.3M2001.4 942.2L2001.4 964.3M2023.1 942.2L2044.7 942.2M2044.7 942.2L2023.1 964.3M2044.7 942.2L2044.7 964.3M2066.4 942.2L2088.1 942.2M2066.4 942.2L2066.4 964.3M2066.4 942.2L2088.1 964.3M2088.1 942.2L2109.8 942.2M1828.0 964.3L1849.7 964.3M1871.4 964.3L1893.0 964.3M1893.0 964.3L1914.7 964.3M1958.1 964.3L1979.7 964.3M1979.7 964.3L2001.4 964.3M2044.7 964.3L2033.9 991.4M2066.4 964.3L2055.5 991.4M1838.8 908.5L1860.5 931.0M1990.5 908.5L2012.2 908.5M2033.9 908.5L2033.9 931.0M2055.5 908.5L2077.2 931.0M2077.2 908.5L2077.2 931.0M1795.5 931.0L1817.2 931.0M1817.2 931.0L1838.8 931.0M1817.2 931.0L1795.5 953.3M1860.5 931.0L1838.8 953.3M1860.5 931.0L1860.5 953.3M1882.2 931.0L1903.8 931.0M1947.2 931.0L1968.9 953.3M1990.5 931.0L2012.2 931.0M2012.2 931.0L2033.9 931.0M2055.5 931.0L2077.2 931.0M2077.2 931.0L2055.5 953.3M2077.2 931.0L2098.9 953.3M1817.2 953.3L1838.8 953.3M1817.2 953.3L1838.8 975.5M1838.8 953.3L1817.2 975.5M1838.8 953.3L1838.8 975.5M1838.8 953.3L1860.5 975.5M1882.2 953.3L1903.8 953.3M1882.2 953.3L1882.2 975.5M1903.8 953.3L1925.5 953.3M1903.8 953.3L1882.2 975.5M1947.2 953.3L1947.2 975.5M1947.2 953.3L1968.9 975.5M1990.5 953.3L1990.5 975.5M2033.9 953.3L2012.2 975.5M2055.5 953.3L2077.2 953.3M2055.5 953.3L2033.9 975.5M2055.5 953.3L2077.2 975.5M2077.2 953.3L2098.9 953.3M1795.5 975.5L1817.2 975.5M1860.5 975.5L1882.2 975.5M1882.2 975.5L1903.8 975.5M1990.5 975.5L2012.2 975.5M2033.9 975.5L2055.5 975.5M2033.9 975.5L2012.2 991.4M2033.9 975.5L2055.5 991.4M2055.5 975.5L2077.2 975.5M2012.2 991.4L2033.9 991.4M2033.9 991.4L2055.5 991.4" stroke="#00E0E0" stroke-width="6.5" fill="none"/>
<path d="M1968.9 908.5L1958.1 920.0M2012.2 908.5L2001.4 920.0M2012.2 908.5L2023.1 920.0M2033.9 908.5L2023.1 920.0M2055.5 908.5L2066.4 920.0M1795.5 931.0L1784.7 942.2M1795.5 931.0L1806.4 942.2M1817.2 931.0L1828.0 920.0M1817.2 931.0L1806.4 942.2M1817.2 931.0L1828.0 942.2M1838.8 931.0L1828.0 920.0M1882.2 931.0L1893.0 920.0M1903.8 931.0L1893.0 942.2M1903.8 931.0L1914.7 942.2M1947.2 931.0L1936.4 920.0M1947.2 931.0L1958.1 920.0M1990.5 931.0L1979.7 920.0M1990.5 931.0L2001.4 920.0M2012.2 931.0L2001.4 942.2M2033.9 931.0L2044.7 920.0M2033.9 931.0L2023.1 942.2M2033.9 931.0L2044.7 942.2M2055.5 931.0L2044.7 942.2M2055.5 931.0L2066.4 942.2M2077.2 931.0L2066.4 920.0M2077.2 931.0L2088.1 920.0M2077.2 931.0L2088.1 942.2M2098.9 931.0L2088.1 942.2M1795.5 953.3L1784.7 942.2M1795.5 953.3L1784.7 964.3M1817.2 953.3L1806.4 942.2M1817.2 953.3L1828.0 942.2M1838.8 953.3L1828.0 942.2M1838.8 953.3L1828.0 964.3M1860.5 953.3L1849.7 964.3M1882.2 953.3L1871.4 942.2M1882.2 953.3L1893.0 942.2M1882.2 953.3L1893.0 964.3M1903.8 953.3L1893.0 942.2M1903.8 953.3L1914.7 942.2M1903.8 953.3L1893.0 964.3M1925.5 953.3L1914.7 942.2M1968.9 953.3L1958.1 942.2M1968.9 953.3L1979.7 942.2M1990.5 953.3L1979.7 942.2M1990.5 953.3L2001.4 942.2M2012.2 953.3L2001.4 942.2M2033.9 953.3L2044.7 942.2M2033.9 953.3L2023.1 964.3M2055.5 953.3L2044.7 942.2M2055.5 953.3L2044.7 964.3M2077.2 953.3L2088.1 942.2M2077.2 953.3L2066.4 964.3M2098.9 953.3L2088.1 942.2M2098.9 953.3L2109.8 942.2M1795.5 975.5L1806.4 964.3M1817.2 975.5L1828.0 964.3M1838.8 975.5L1828.0 964.3M1838.8 975.5L1849.7 964.3M1860.5 975.5L1871.4 964.3M1882.2 975.5L1871.4 964.3M1903.8 975.5L1914.7 964.3M2012.2 975.5L2001.4 964.3M2012.2 975.5L2023.1 964.3M2033.9 975.5L2023.1 964.3M2077.2 975.5L2066.4 964.3" stroke="#00E0E0" stroke-width="8" fill="none"/>
<path d="M1754.0 963.8 L1773.0 952.2 L1793.1 906.7 L1838.7 906.7 L1869.3 918.3 L1911.7 928.9 L1932.9 939.5 L1956.1 901.4 L2011.2 905.6 L2081.0 901.4 L2089.5 914.1 L2125.5 931.0 L2125.5 954.3 L2110.7 967.0 L2068.3 991.4 L2000.6 994.5 L1958.3 990.7 L1947.7 1011.5 L1924.4 1011.5 L1954.0 988.2 L1939.2 967.0 L1911.7 971.2 L1903.2 977.6 L1793.1 977.6 L1773.0 958.5Z" stroke="#00E0E0" stroke-width="6" fill="none" stroke-linejoin="round"/>
<path d="M1795.5 1061.2L1806.4 1050.2M1795.5 1061.2L1784.7 1072.4M1817.2 1061.2L1828.0 1072.4M1838.8 1061.2L1828.0 1050.2M1838.8 1061.2L1849.7 1050.2M1838.8 1061.2L1849.7 1072.4M1860.5 1061.2L1871.4 1072.4M1882.2 1061.2L1893.0 1050.2M1882.2 1061.2L1893.0 1072.4M1903.8 1061.2L1893.0 1072.4M1925.5 1061.2L1936.4 1050.2M1947.2 1061.2L1936.4 1050.2M1947.2 1061.2L1958.1 1050.2M1968.9 1061.2L1958.1 1072.4M1990.5 1061.2L1979.7 1050.2M1990.5 1061.2L2001.4 1072.4M2033.9 1061.2L2023.1 1072.4M2033.9 1061.2L2044.7 1072.4M2055.5 1061.2L2044.7 1050.2M2055.5 1061.2L2066.4 1050.2M2077.2 1061.2L2066.4 1050.2M2077.2 1061.2L2088.1 1050.2M2098.9 1061.2L2088.1 1072.4M1795.5 1083.4L1806.4 1072.4M1817.2 1083.4L1828.0 1094.4M1838.8 1083.4L1849.7 1094.4M1860.5 1083.4L1871.4 1094.4M1903.8 1083.4L1914.7 1072.4M1903.8 1083.4L1914.7 1094.4M1925.5 1083.4L1936.4 1072.4M1947.2 1083.4L1936.4 1072.4M1947.2 1083.4L1958.1 1072.4M1968.9 1083.4L1958.1 1072.4M1990.5 1083.4L2001.4 1072.4M1990.5 1083.4L1979.7 1094.4M1990.5 1083.4L2001.4 1094.4M2012.2 1083.4L2023.1 1094.4M2033.9 1083.4L2023.1 1072.4M2033.9 1083.4L2044.7 1072.4M2055.5 1083.4L2066.4 1072.4M2055.5 1083.4L2066.4 1094.4M2077.2 1083.4L2066.4 1072.4M2077.2 1083.4L2088.1 1094.4M2098.9 1083.4L2109.8 1072.4M2098.9 1083.4L2109.8 1094.4M1795.5 1105.5L1784.7 1094.4M1838.8 1105.5L1828.0 1094.4M1838.8 1105.5L1849.7 1094.4M1860.5 1105.5L1871.4 1094.4M2033.9 1105.5L2044.7 1094.4M2098.9 1105.5L2109.8 1094.4" stroke="#006A6E" stroke-width="9" fill="none"/>
<path d="M1795.5 1061.2L1784.7 1050.2M1817.2 1061.2L1828.0 1050.2M1838.8 1061.2L1828.0 1072.4M1860.5 1061.2L1871.4 1050.2M1903.8 1061.2L1914.7 1050.2M1925.5 1061.2L1914.7 1072.4M1947.2 1061.2L1958.1 1072.4M2012.2 1061.2L2001.4 1050.2M2012.2 1061.2L2023.1 1050.2M2012.2 1061.2L2001.4 1072.4M2012.2 1061.2L2023.1 1072.4M2033.9 1061.2L2023.1 1050.2M2055.5 1061.2L2044.7 1072.4M2055.5 1061.2L2066.4 1072.4M2098.9 1061.2L2088.1 1050.2M2098.9 1061.2L2109.8 1050.2M2098.9 1061.2L2109.8 1072.4M1795.5 1083.4L1784.7 1094.4M1795.5 1083.4L1806.4 1094.4M1817.2 1083.4L1828.0 1072.4M1817.2 1083.4L1806.4 1094.4M1838.8 1083.4L1849.7 1072.4M1882.2 1083.4L1893.0 1072.4M1903.8 1083.4L1893.0 1072.4M1903.8 1083.4L1893.0 1094.4M1925.5 1083.4L1914.7 1094.4M2012.2 1083.4L2001.4 1072.4M2033.9 1083.4L2044.7 1094.4M2055.5 1083.4L2044.7 1072.4M2098.9 1083.4L2088.1 1094.4M1925.5 1105.5L1914.7 1094.4M2033.9 1105.5L2023.1 1094.4M2098.9 1105.5L2088.1 1094.4" stroke="#00A0A4" stroke-width="9" fill="none"/>
<path d="M1849.7 1050.2L1828.0 1072.4M1893.0 1050.2L1893.0 1072.4M1936.4 1050.2L1914.7 1072.4M1958.1 1050.2L1936.4 1072.4M1979.7 1050.2L1958.1 1072.4M1979.7 1050.2L1979.7 1072.4M2023.1 1050.2L2001.4 1072.4M2044.7 1050.2L2066.4 1050.2M2044.7 1050.2L2066.4 1072.4M2066.4 1050.2L2066.4 1072.4M2088.1 1050.2L2109.8 1050.2M2088.1 1050.2L2066.4 1072.4M2088.1 1050.2L2109.8 1072.4M1784.7 1072.4L1784.7 1094.4M1806.4 1072.4L1806.4 1094.4M1828.0 1072.4L1828.0 1094.4M1936.4 1072.4L1914.7 1094.4M1958.1 1072.4L1979.7 1072.4M1979.7 1072.4L2001.4 1094.4M2001.4 1072.4L2023.1 1072.4M2001.4 1072.4L2023.1 1094.4M2044.7 1072.4L2044.7 1094.4M2088.1 1072.4L2066.4 1094.4M1806.4 1094.4L1828.0 1094.4M1828.0 1094.4L1849.7 1094.4M1849.7 1094.4L1871.4 1094.4M2044.7 1094.4L2066.4 1094.4M1817.2 1061.2L1795.5 1083.4M1838.8 1061.2L1860.5 1061.2M1838.8 1061.2L1838.8 1083.4M1860.5 1061.2L1882.2 1061.2M1860.5 1061.2L1838.8 1083.4M1860.5 1061.2L1860.5 1083.4M1882.2 1061.2L1903.8 1061.2M1882.2 1061.2L1860.5 1083.4M1882.2 1061.2L1882.2 1083.4M1903.8 1061.2L1903.8 1083.4M1990.5 1061.2L1968.9 1083.4M2055.5 1061.2L2033.9 1083.4M2055.5 1061.2L2055.5 1083.4M2055.5 1061.2L2077.2 1083.4M2077.2 1061.2L2098.9 1061.2M2077.2 1061.2L2055.5 1083.4M2077.2 1061.2L2077.2 1083.4M2077.2 1061.2L2098.9 1083.4M2098.9 1061.2L2077.2 1083.4M1817.2 1083.4L1817.2 1105.5M1817.2 1083.4L1838.8 1105.5M1838.8 1083.4L1838.8 1105.5M1882.2 1083.4L1903.8 1083.4M1882.2 1083.4L1860.5 1105.5M1968.9 1083.4L1990.5 1083.4M2033.9 1083.4L2055.5 1083.4M2033.9 1083.4L2033.9 1105.5" stroke="#00E0E0" stroke-width="6.5" fill="none"/>
<path d="M1795.5 1061.2L1806.4 1072.4M1817.2 1061.2L1806.4 1050.2M1817.2 1061.2L1806.4 1072.4M1860.5 1061.2L1849.7 1050.2M1860.5 1061.2L1849.7 1072.4M1882.2 1061.2L1871.4 1050.2M1882.2 1061.2L1871.4 1072.4M1903.8 1061.2L1893.0 1050.2M1903.8 1061.2L1914.7 1072.4M1925.5 1061.2L1914.7 1050.2M1925.5 1061.2L1936.4 1072.4M1947.2 1061.2L1936.4 1072.4M1968.9 1061.2L1958.1 1050.2M1968.9 1061.2L1979.7 1050.2M1968.9 1061.2L1979.7 1072.4M1990.5 1061.2L2001.4 1050.2M1990.5 1061.2L1979.7 1072.4M2033.9 1061.2L2044.7 1050.2M2077.2 1061.2L2066.4 1072.4M2077.2 1061.2L2088.1 1072.4M1795.5 1083.4L1784.7 1072.4M1817.2 1083.4L1806.4 1072.4M1838.8 1083.4L1828.0 1072.4M1838.8 1083.4L1828.0 1094.4M1860.5 1083.4L1849.7 1072.4M1860.5 1083.4L1871.4 1072.4M1860.5 1083.4L1849.7 1094.4M1882.2 1083.4L1871.4 1072.4M1882.2 1083.4L1871.4 1094.4M1882.2 1083.4L1893.0 1094.4M1925.5 1083.4L1914.7 1072.4M1925.5 1083.4L1936.4 1094.4M1947.2 1083.4L1936.4 1094.4M1947.2 1083.4L1958.1 1094.4M1968.9 1083.4L1979.7 1072.4M1968.9 1083.4L1958.1 1094.4M1968.9 1083.4L1979.7 1094.4M1990.5 1083.4L1979.7 1072.4M2012.2 1083.4L2023.1 1072.4M2012.2 1083.4L2001.4 1094.4M2033.9 1083.4L2023.1 1094.4M2055.5 1083.4L2044.7 1094.4M2077.2 1083.4L2088.1 1072.4M2077.2 1083.4L2066.4 1094.4M2098.9 1083.4L2088.1 1072.4M1795.5 1105.5L1806.4 1094.4M1817.2 1105.5L1806.4 1094.4M1817.2 1105.5L1828.0 1094.4M1860.5 1105.5L1849.7 1094.4M1925.5 1105.5L1936.4 1094.4" stroke="#00E0E0" stroke-width="8" fill="none"/>
<path d="M1753.0 1078.2 L1772.0 1060.2 L1784.7 1047.4 L1911.7 1047.4 L1932.9 1049.6 L1960.4 1047.4 L2110.7 1048.5 L2123.4 1060.2 L2112.8 1094.0 L2087.4 1115.2 L2068.3 1094.0 L2034.5 1106.7 L1996.4 1094.0 L1928.6 1083.4 L1926.5 1119.4 L1911.7 1094.0 L1879.9 1083.4 L1865.1 1106.7 L1793.1 1106.7 L1780.4 1094.0 L1772.0 1083.4Z" stroke="#00E0E0" stroke-width="6" fill="none" stroke-linejoin="round"/>
<circle cx="1784.7" cy="920.0" r="4.6" fill="#FF8000"/>
<circle cx="1806.4" cy="920.0" r="4.6" fill="#FF8000"/>
<circle cx="1828.0" cy="920.0" r="4.6" fill="#FF8000"/>
<circle cx="1849.7" cy="920.0" r="4.6" fill="#FF8000"/>
<circle cx="1871.4" cy="920.0" r="4.6" fill="#FF8000"/>
<circle cx="1893.0" cy="920.0" r="4.6" fill="#FF8000"/>
<circle cx="1914.7" cy="920.0" r="4.6" fill="#FF8000"/>
<circle cx="1936.4" cy="920.0" r="4.6" fill="#FF8000"/>
<circle cx="1958.1" cy="920.0" r="4.6" fill="#FF8000"/>
<circle cx="1979.7" cy="920.0" r="4.6" fill="#FF8000"/>
<circle cx="2001.4" cy="920.0" r="4.6" fill="#FF8000"/>
<circle cx="2023.1" cy="920.0" r="4.6" fill="#FF8000"/>
<circle cx="2044.7" cy="920.0" r="4.6" fill="#FF8000"/>
<circle cx="2066.4" cy="920.0" r="4.6" fill="#FF8000"/>
<circle cx="2088.1" cy="920.0" r="4.6" fill="#FF8000"/>
<circle cx="2109.8" cy="920.0" r="4.6" fill="#FF8000"/>
<circle cx="1784.7" cy="942.2" r="4.6" fill="#FF8000"/>
<circle cx="1806.4" cy="942.2" r="4.6" fill="#FF8000"/>
<circle cx="1828.0" cy="942.2" r="4.6" fill="#FF8000"/>
<circle cx="1849.7" cy="942.2" r="4.6" fill="#FF8000"/>
<circle cx="1871.4" cy="942.2" r="4.6" fill="#FF8000"/>
<circle cx="1893.0" cy="942.2" r="4.6" fill="#FF8000"/>
<circle cx="1914.7" cy="942.2" r="4.6" fill="#FF8000"/>
<circle cx="1936.4" cy="942.2" r="4.6" fill="#FF8000"/>
<circle cx="1958.1" cy="942.2" r="4.6" fill="#FF8000"/>
<circle cx="1979.7" cy="942.2" r="4.6" fill="#FF8000"/>
<circle cx="2001.4" cy="942.2" r="4.6" fill="#FF8000"/>
<circle cx="2023.1" cy="942.2" r="4.6" fill="#FF8000"/>
<circle cx="2044.7" cy="942.2" r="4.6" fill="#FF8000"/>
<circle cx="2066.4" cy="942.2" r="4.6" fill="#FF8000"/>
<circle cx="2088.1" cy="942.2" r="4.6" fill="#FF8000"/>
<circle cx="2109.8" cy="942.2" r="4.6" fill="#FF8000"/>
<circle cx="1784.7" cy="964.3" r="4.6" fill="#FF8000"/>
<circle cx="1806.4" cy="964.3" r="4.6" fill="#FF8000"/>
<circle cx="1828.0" cy="964.3" r="4.6" fill="#FF8000"/>
<circle cx="1849.7" cy="964.3" r="4.6" fill="#FF8000"/>
<circle cx="1871.4" cy="964.3" r="4.6" fill="#FF8000"/>
<circle cx="1893.0" cy="964.3" r="4.6" fill="#FF8000"/>
<circle cx="1914.7" cy="964.3" r="4.6" fill="#FF8000"/>
<circle cx="1936.4" cy="964.3" r="4.6" fill="#FF8000"/>
<circle cx="1958.1" cy="964.3" r="4.6" fill="#FF8000"/>
<circle cx="1979.7" cy="964.3" r="4.6" fill="#FF8000"/>
<circle cx="2001.4" cy="964.3" r="4.6" fill="#FF8000"/>
<circle cx="2023.1" cy="964.3" r="4.6" fill="#FF8000"/>
<circle cx="2044.7" cy="964.3" r="4.6" fill="#FF8000"/>
<circle cx="2066.4" cy="964.3" r="4.6" fill="#FF8000"/>
<circle cx="2088.1" cy="964.3" r="4.6" fill="#FF8000"/>
<circle cx="2109.8" cy="964.3" r="4.6" fill="#FF8000"/>
<circle cx="1784.7" cy="1050.2" r="4.6" fill="#FF8000"/>
<circle cx="1806.4" cy="1050.2" r="4.6" fill="#FF8000"/>
<circle cx="1828.0" cy="1050.2" r="4.6" fill="#FF8000"/>
<circle cx="1849.7" cy="1050.2" r="4.6" fill="#FF8000"/>
<circle cx="1871.4" cy="1050.2" r="4.6" fill="#FF8000"/>
<circle cx="1893.0" cy="1050.2" r="4.6" fill="#FF8000"/>
<circle cx="1914.7" cy="1050.2" r="4.6" fill="#FF8000"/>
<circle cx="1936.4" cy="1050.2" r="4.6" fill="#FF8000"/>
<circle cx="1958.1" cy="1050.2" r="4.6" fill="#FF8000"/>
<circle cx="1979.7" cy="1050.2" r="4.6" fill="#FF8000"/>
<circle cx="2001.4" cy="1050.2" r="4.6" fill="#FF8000"/>
<circle cx="2023.1" cy="1050.2" r="4.6" fill="#FF8000"/>
<circle cx="2044.7" cy="1050.2" r="4.6" fill="#FF8000"/>
<circle cx="2066.4" cy="1050.2" r="4.6" fill="#FF8000"/>
<circle cx="2088.1" cy="1050.2" r="4.6" fill="#FF8000"/>
<circle cx="2109.8" cy="1050.2" r="4.6" fill="#FF8000"/>
<circle cx="1784.7" cy="1072.4" r="4.6" fill="#FF8000"/>
<circle cx="1806.4" cy="1072.4" r="4.6" fill="#FF8000"/>
<circle cx="1828.0" cy="1072.4" r="4.6" fill="#FF8000"/>
<circle cx="1849.7" cy="1072.4" r="4.6" fill="#FF8000"/>
<circle cx="1871.4" cy="1072.4" r="4.6" fill="#FF8000"/>
<circle cx="1893.0" cy="1072.4" r="4.6" fill="#FF8000"/>
<circle cx="1914.7" cy="1072.4" r="4.6" fill="#FF8000"/>
<circle cx="1936.4" cy="1072.4" r="4.6" fill="#FF8000"/>
<circle cx="1958.1" cy="1072.4" r="4.6" fill="#FF8000"/>
<circle cx="1979.7" cy="1072.4" r="4.6" fill="#FF8000"/>
<circle cx="2001.4" cy="1072.4" r="4.6" fill="#FF8000"/>
<circle cx="2023.1" cy="1072.4" r="4.6" fill="#FF8000"/>
<circle cx="2044.7" cy="1072.4" r="4.6" fill="#FF8000"/>
<circle cx="2066.4" cy="1072.4" r="4.6" fill="#FF8000"/>
<circle cx="2088.1" cy="1072.4" r="4.6" fill="#FF8000"/>
<circle cx="2109.8" cy="1072.4" r="4.6" fill="#FF8000"/>
<circle cx="1784.7" cy="1094.4" r="4.6" fill="#FF8000"/>
<circle cx="1806.4" cy="1094.4" r="4.6" fill="#FF8000"/>
<circle cx="1828.0" cy="1094.4" r="4.6" fill="#FF8000"/>
<circle cx="1849.7" cy="1094.4" r="4.6" fill="#FF8000"/>
<circle cx="1871.4" cy="1094.4" r="4.6" fill="#FF8000"/>
<circle cx="1893.0" cy="1094.4" r="4.6" fill="#FF8000"/>
<circle cx="1914.7" cy="1094.4" r="4.6" fill="#FF8000"/>
<circle cx="1936.4" cy="1094.4" r="4.6" fill="#FF8000"/>
<circle cx="1958.1" cy="1094.4" r="4.6" fill="#FF8000"/>
<circle cx="1979.7" cy="1094.4" r="4.6" fill="#FF8000"/>
<circle cx="2001.4" cy="1094.4" r="4.6" fill="#FF8000"/>
<circle cx="2023.1" cy="1094.4" r="4.6" fill="#FF8000"/>
<circle cx="2044.7" cy="1094.4" r="4.6" fill="#FF8000"/>
<circle cx="2066.4" cy="1094.4" r="4.6" fill="#FF8000"/>
<circle cx="2088.1" cy="1094.4" r="4.6" fill="#FF8000"/>
<circle cx="2109.8" cy="1094.4" r="4.6" fill="#FF8000"/>
<ellipse cx="1795.5" cy="908.5" rx="4.2" ry="3.7" fill="#FF8000"/><rect x="1793.9" y="907.0" width="3.2" height="3" fill="#3a4050"/>
<ellipse cx="1817.2" cy="908.5" rx="4.2" ry="3.7" fill="#FF8000"/><rect x="1815.6" y="907.0" width="3.2" height="3" fill="#3a4050"/>
<ellipse cx="1838.8" cy="908.5" rx="4.2" ry="3.7" fill="#FF8000"/><rect x="1837.2" y="907.0" width="3.2" height="3" fill="#3a4050"/>
<ellipse cx="1968.9" cy="908.5" rx="4.2" ry="3.7" fill="#FF8000"/><rect x="1967.3" y="907.0" width="3.2" height="3" fill="#3a4050"/>
<ellipse cx="1990.5" cy="908.5" rx="4.2" ry="3.7" fill="#FF8000"/><rect x="1988.9" y="907.0" width="3.2" height="3" fill="#3a4050"/>
<ellipse cx="2012.2" cy="908.5" rx="4.2" ry="3.7" fill="#FF8000"/><rect x="2010.6" y="907.0" width="3.2" height="3" fill="#3a4050"/>
<ellipse cx="2033.9" cy="908.5" rx="4.2" ry="3.7" fill="#FF8000"/><rect x="2032.3" y="907.0" width="3.2" height="3" fill="#3a4050"/>
<ellipse cx="2055.5" cy="908.5" rx="4.2" ry="3.7" fill="#FF8000"/><rect x="2053.9" y="907.0" width="3.2" height="3" fill="#3a4050"/>
<ellipse cx="2077.2" cy="908.5" rx="4.2" ry="3.7" fill="#FF8000"/><rect x="2075.6" y="907.0" width="3.2" height="3" fill="#3a4050"/>
<ellipse cx="1795.5" cy="931.0" rx="4.2" ry="3.7" fill="#FF8000"/><rect x="1793.9" y="929.5" width="3.2" height="3" fill="#3a4050"/>
<ellipse cx="1817.2" cy="931.0" rx="4.2" ry="3.7" fill="#FF8000"/><rect x="1815.6" y="929.5" width="3.2" height="3" fill="#3a4050"/>
<ellipse cx="1838.8" cy="931.0" rx="4.2" ry="3.7" fill="#FF8000"/><rect x="1837.2" y="929.5" width="3.2" height="3" fill="#3a4050"/>
<ellipse cx="1860.5" cy="931.0" rx="4.2" ry="3.7" fill="#FF8000"/><rect x="1858.9" y="929.5" width="3.2" height="3" fill="#3a4050"/>
<ellipse cx="1882.2" cy="931.0" rx="4.2" ry="3.7" fill="#FF8000"/><rect x="1880.6" y="929.5" width="3.2" height="3" fill="#3a4050"/>
<ellipse cx="1903.8" cy="931.0" rx="4.2" ry="3.7" fill="#FF8000"/><rect x="1902.2" y="929.5" width="3.2" height="3" fill="#3a4050"/>
<ellipse cx="1947.2" cy="931.0" rx="4.2" ry="3.7" fill="#FF8000"/><rect x="1945.6" y="929.5" width="3.2" height="3" fill="#3a4050"/>
<ellipse cx="1968.9" cy="931.0" rx="4.2" ry="3.7" fill="#FF8000"/><rect x="1967.3" y="929.5" width="3.2" height="3" fill="#3a4050"/>
<ellipse cx="1990.5" cy="931.0" rx="4.2" ry="3.7" fill="#FF8000"/><rect x="1988.9" y="929.5" width="3.2" height="3" fill="#3a4050"/>
<ellipse cx="2012.2" cy="931.0" rx="4.2" ry="3.7" fill="#FF8000"/><rect x="2010.6" y="929.5" width="3.2" height="3" fill="#3a4050"/>
<ellipse cx="2033.9" cy="931.0" rx="4.2" ry="3.7" fill="#FF8000"/><rect x="2032.3" y="929.5" width="3.2" height="3" fill="#3a4050"/>
<ellipse cx="2055.5" cy="931.0" rx="4.2" ry="3.7" fill="#FF8000"/><rect x="2053.9" y="929.5" width="3.2" height="3" fill="#3a4050"/>
<ellipse cx="2077.2" cy="931.0" rx="4.2" ry="3.7" fill="#FF8000"/><rect x="2075.6" y="929.5" width="3.2" height="3" fill="#3a4050"/>
<ellipse cx="2098.9" cy="931.0" rx="4.2" ry="3.7" fill="#FF8000"/><rect x="2097.3" y="929.5" width="3.2" height="3" fill="#3a4050"/>
<ellipse cx="1795.5" cy="953.3" rx="4.2" ry="3.7" fill="#FF8000"/><rect x="1793.9" y="951.8" width="3.2" height="3" fill="#3a4050"/>
<ellipse cx="1817.2" cy="953.3" rx="4.2" ry="3.7" fill="#FF8000"/><rect x="1815.6" y="951.8" width="3.2" height="3" fill="#3a4050"/>
<ellipse cx="1838.8" cy="953.3" rx="4.2" ry="3.7" fill="#FF8000"/><rect x="1837.2" y="951.8" width="3.2" height="3" fill="#3a4050"/>
<ellipse cx="1860.5" cy="953.3" rx="4.2" ry="3.7" fill="#FF8000"/><rect x="1858.9" y="951.8" width="3.2" height="3" fill="#3a4050"/>
<ellipse cx="1882.2" cy="953.3" rx="4.2" ry="3.7" fill="#FF8000"/><rect x="1880.6" y="951.8" width="3.2" height="3" fill="#3a4050"/>
<ellipse cx="1903.8" cy="953.3" rx="4.2" ry="3.7" fill="#FF8000"/><rect x="1902.2" y="951.8" width="3.2" height="3" fill="#3a4050"/>
<ellipse cx="1925.5" cy="953.3" rx="4.2" ry="3.7" fill="#FF8000"/><rect x="1923.9" y="951.8" width="3.2" height="3" fill="#3a4050"/>
<ellipse cx="1947.2" cy="953.3" rx="4.2" ry="3.7" fill="#FF8000"/><rect x="1945.6" y="951.8" width="3.2" height="3" fill="#3a4050"/>
<ellipse cx="1968.9" cy="953.3" rx="4.2" ry="3.7" fill="#FF8000"/><rect x="1967.3" y="951.8" width="3.2" height="3" fill="#3a4050"/>
<ellipse cx="1990.5" cy="953.3" rx="4.2" ry="3.7" fill="#FF8000"/><rect x="1988.9" y="951.8" width="3.2" height="3" fill="#3a4050"/>
<ellipse cx="2012.2" cy="953.3" rx="4.2" ry="3.7" fill="#FF8000"/><rect x="2010.6" y="951.8" width="3.2" height="3" fill="#3a4050"/>
<ellipse cx="2033.9" cy="953.3" rx="4.2" ry="3.7" fill="#FF8000"/><rect x="2032.3" y="951.8" width="3.2" height="3" fill="#3a4050"/>
<ellipse cx="2055.5" cy="953.3" rx="4.2" ry="3.7" fill="#FF8000"/><rect x="2053.9" y="951.8" width="3.2" height="3" fill="#3a4050"/>
<ellipse cx="2077.2" cy="953.3" rx="4.2" ry="3.7" fill="#FF8000"/><rect x="2075.6" y="951.8" width="3.2" height="3" fill="#3a4050"/>
<ellipse cx="2098.9" cy="953.3" rx="4.2" ry="3.7" fill="#FF8000"/><rect x="2097.3" y="951.8" width="3.2" height="3" fill="#3a4050"/>
<ellipse cx="1795.5" cy="975.5" rx="4.2" ry="3.7" fill="#FF8000"/><rect x="1793.9" y="974.0" width="3.2" height="3" fill="#3a4050"/>
<ellipse cx="1817.2" cy="975.5" rx="4.2" ry="3.7" fill="#FF8000"/><rect x="1815.6" y="974.0" width="3.2" height="3" fill="#3a4050"/>
<ellipse cx="1838.8" cy="975.5" rx="4.2" ry="3.7" fill="#FF8000"/><rect x="1837.2" y="974.0" width="3.2" height="3" fill="#3a4050"/>
<ellipse cx="1860.5" cy="975.5" rx="4.2" ry="3.7" fill="#FF8000"/><rect x="1858.9" y="974.0" width="3.2" height="3" fill="#3a4050"/>
<ellipse cx="1882.2" cy="975.5" rx="4.2" ry="3.7" fill="#FF8000"/><rect x="1880.6" y="974.0" width="3.2" height="3" fill="#3a4050"/>
<ellipse cx="1903.8" cy="975.5" rx="4.2" ry="3.7" fill="#FF8000"/><rect x="1902.2" y="974.0" width="3.2" height="3" fill="#3a4050"/>
<ellipse cx="1947.2" cy="975.5" rx="4.2" ry="3.7" fill="#FF8000"/><rect x="1945.6" y="974.0" width="3.2" height="3" fill="#3a4050"/>
<ellipse cx="1968.9" cy="975.5" rx="4.2" ry="3.7" fill="#FF8000"/><rect x="1967.3" y="974.0" width="3.2" height="3" fill="#3a4050"/>
<ellipse cx="1990.5" cy="975.5" rx="4.2" ry="3.7" fill="#FF8000"/><rect x="1988.9" y="974.0" width="3.2" height="3" fill="#3a4050"/>
<ellipse cx="2012.2" cy="975.5" rx="4.2" ry="3.7" fill="#FF8000"/><rect x="2010.6" y="974.0" width="3.2" height="3" fill="#3a4050"/>
<ellipse cx="2033.9" cy="975.5" rx="4.2" ry="3.7" fill="#FF8000"/><rect x="2032.3" y="974.0" width="3.2" height="3" fill="#3a4050"/>
<ellipse cx="2055.5" cy="975.5" rx="4.2" ry="3.7" fill="#FF8000"/><rect x="2053.9" y="974.0" width="3.2" height="3" fill="#3a4050"/>
<ellipse cx="2077.2" cy="975.5" rx="4.2" ry="3.7" fill="#FF8000"/><rect x="2075.6" y="974.0" width="3.2" height="3" fill="#3a4050"/>
<ellipse cx="1990.5" cy="991.4" rx="4.2" ry="3.7" fill="#FF8000"/><rect x="1988.9" y="989.9" width="3.2" height="3" fill="#3a4050"/>
<ellipse cx="2012.2" cy="991.4" rx="4.2" ry="3.7" fill="#FF8000"/><rect x="2010.6" y="989.9" width="3.2" height="3" fill="#3a4050"/>
<ellipse cx="2033.9" cy="991.4" rx="4.2" ry="3.7" fill="#FF8000"/><rect x="2032.3" y="989.9" width="3.2" height="3" fill="#3a4050"/>
<ellipse cx="2055.5" cy="991.4" rx="4.2" ry="3.7" fill="#FF8000"/><rect x="2053.9" y="989.9" width="3.2" height="3" fill="#3a4050"/>
<ellipse cx="1795.5" cy="1061.2" rx="4.2" ry="3.7" fill="#FF8000"/><rect x="1793.9" y="1059.7" width="3.2" height="3" fill="#3a4050"/>
<ellipse cx="1817.2" cy="1061.2" rx="4.2" ry="3.7" fill="#FF8000"/><rect x="1815.6" y="1059.7" width="3.2" height="3" fill="#3a4050"/>
<ellipse cx="1838.8" cy="1061.2" rx="4.2" ry="3.7" fill="#FF8000"/><rect x="1837.2" y="1059.7" width="3.2" height="3" fill="#3a4050"/>
<ellipse cx="1860.5" cy="1061.2" rx="4.2" ry="3.7" fill="#FF8000"/><rect x="1858.9" y="1059.7" width="3.2" height="3" fill="#3a4050"/>
<ellipse cx="1882.2" cy="1061.2" rx="4.2" ry="3.7" fill="#FF8000"/><rect x="1880.6" y="1059.7" width="3.2" height="3" fill="#3a4050"/>
<ellipse cx="1903.8" cy="1061.2" rx="4.2" ry="3.7" fill="#FF8000"/><rect x="1902.2" y="1059.7" width="3.2" height="3" fill="#3a4050"/>
<ellipse cx="1925.5" cy="1061.2" rx="4.2" ry="3.7" fill="#FF8000"/><rect x="1923.9" y="1059.7" width="3.2" height="3" fill="#3a4050"/>
<ellipse cx="1947.2" cy="1061.2" rx="4.2" ry="3.7" fill="#FF8000"/><rect x="1945.6" y="1059.7" width="3.2" height="3" fill="#3a4050"/>
<ellipse cx="1968.9" cy="1061.2" rx="4.2" ry="3.7" fill="#FF8000"/><rect x="1967.3" y="1059.7" width="3.2" height="3" fill="#3a4050"/>
<ellipse cx="1990.5" cy="1061.2" rx="4.2" ry="3.7" fill="#FF8000"/><rect x="1988.9" y="1059.7" width="3.2" height="3" fill="#3a4050"/>
<ellipse cx="2012.2" cy="1061.2" rx="4.2" ry="3.7" fill="#FF8000"/><rect x="2010.6" y="1059.7" width="3.2" height="3" fill="#3a4050"/>
<ellipse cx="2033.9" cy="1061.2" rx="4.2" ry="3.7" fill="#FF8000"/><rect x="2032.3" y="1059.7" width="3.2" height="3" fill="#3a4050"/>
<ellipse cx="2055.5" cy="1061.2" rx="4.2" ry="3.7" fill="#FF8000"/><rect x="2053.9" y="1059.7" width="3.2" height="3" fill="#3a4050"/>
<ellipse cx="2077.2" cy="1061.2" rx="4.2" ry="3.7" fill="#FF8000"/><rect x="2075.6" y="1059.7" width="3.2" height="3" fill="#3a4050"/>
<ellipse cx="2098.9" cy="1061.2" rx="4.2" ry="3.7" fill="#FF8000"/><rect x="2097.3" y="1059.7" width="3.2" height="3" fill="#3a4050"/>
<ellipse cx="1795.5" cy="1083.4" rx="4.2" ry="3.7" fill="#FF8000"/><rect x="1793.9" y="1081.9" width="3.2" height="3" fill="#3a4050"/>
<ellipse cx="1817.2" cy="1083.4" rx="4.2" ry="3.7" fill="#FF8000"/><rect x="1815.6" y="1081.9" width="3.2" height="3" fill="#3a4050"/>
<ellipse cx="1838.8" cy="1083.4" rx="4.2" ry="3.7" fill="#FF8000"/><rect x="1837.2" y="1081.9" width="3.2" height="3" fill="#3a4050"/>
<ellipse cx="1860.5" cy="1083.4" rx="4.2" ry="3.7" fill="#FF8000"/><rect x="1858.9" y="1081.9" width="3.2" height="3" fill="#3a4050"/>
<ellipse cx="1882.2" cy="1083.4" rx="4.2" ry="3.7" fill="#FF8000"/><rect x="1880.6" y="1081.9" width="3.2" height="3" fill="#3a4050"/>
<ellipse cx="1903.8" cy="1083.4" rx="4.2" ry="3.7" fill="#FF8000"/><rect x="1902.2" y="1081.9" width="3.2" height="3" fill="#3a4050"/>
<ellipse cx="1925.5" cy="1083.4" rx="4.2" ry="3.7" fill="#FF8000"/><rect x="1923.9" y="1081.9" width="3.2" height="3" fill="#3a4050"/>
<ellipse cx="1947.2" cy="1083.4" rx="4.2" ry="3.7" fill="#FF8000"/><rect x="1945.6" y="1081.9" width="3.2" height="3" fill="#3a4050"/>
<ellipse cx="1968.9" cy="1083.4" rx="4.2" ry="3.7" fill="#FF8000"/><rect x="1967.3" y="1081.9" width="3.2" height="3" fill="#3a4050"/>
<ellipse cx="1990.5" cy="1083.4" rx="4.2" ry="3.7" fill="#FF8000"/><rect x="1988.9" y="1081.9" width="3.2" height="3" fill="#3a4050"/>
<ellipse cx="2012.2" cy="1083.4" rx="4.2" ry="3.7" fill="#FF8000"/><rect x="2010.6" y="1081.9" width="3.2" height="3" fill="#3a4050"/>
<ellipse cx="2033.9" cy="1083.4" rx="4.2" ry="3.7" fill="#FF8000"/><rect x="2032.3" y="1081.9" width="3.2" height="3" fill="#3a4050"/>
<ellipse cx="2055.5" cy="1083.4" rx="4.2" ry="3.7" fill="#FF8000"/><rect x="2053.9" y="1081.9" width="3.2" height="3" fill="#3a4050"/>
<ellipse cx="2077.2" cy="1083.4" rx="4.2" ry="3.7" fill="#FF8000"/><rect x="2075.6" y="1081.9" width="3.2" height="3" fill="#3a4050"/>
<ellipse cx="2098.9" cy="1083.4" rx="4.2" ry="3.7" fill="#FF8000"/><rect x="2097.3" y="1081.9" width="3.2" height="3" fill="#3a4050"/>
<ellipse cx="1795.5" cy="1105.5" rx="4.2" ry="3.7" fill="#FF8000"/><rect x="1793.9" y="1104.0" width="3.2" height="3" fill="#3a4050"/>
<ellipse cx="1817.2" cy="1105.5" rx="4.2" ry="3.7" fill="#FF8000"/><rect x="1815.6" y="1104.0" width="3.2" height="3" fill="#3a4050"/>
<ellipse cx="1838.8" cy="1105.5" rx="4.2" ry="3.7" fill="#FF8000"/><rect x="1837.2" y="1104.0" width="3.2" height="3" fill="#3a4050"/>
<ellipse cx="1860.5" cy="1105.5" rx="4.2" ry="3.7" fill="#FF8000"/><rect x="1858.9" y="1104.0" width="3.2" height="3" fill="#3a4050"/>
<ellipse cx="1925.5" cy="1105.5" rx="4.2" ry="3.7" fill="#FF8000"/><rect x="1923.9" y="1104.0" width="3.2" height="3" fill="#3a4050"/>
<ellipse cx="2033.9" cy="1105.5" rx="4.2" ry="3.7" fill="#FF8000"/><rect x="2032.3" y="1104.0" width="3.2" height="3" fill="#3a4050"/>
<ellipse cx="2098.9" cy="1105.5" rx="4.2" ry="3.7" fill="#FF8000"/><rect x="2097.3" y="1104.0" width="3.2" height="3" fill="#3a4050"/>
<ellipse cx="1754.0" cy="963.8" rx="4.2" ry="3.7" fill="#FF8000"/><rect x="1752.4" y="962.3" width="3.2" height="3" fill="#3a4050"/>
<ellipse cx="1753.0" cy="1078.2" rx="4.2" ry="3.7" fill="#FF8000"/><rect x="1751.4" y="1076.7" width="3.2" height="3" fill="#3a4050"/>
<ellipse cx="1924.4" cy="1011.5" rx="4.2" ry="3.7" fill="#FF8000"/><rect x="1922.8" y="1010.0" width="3.2" height="3" fill="#3a4050"/>
<ellipse cx="1947.7" cy="1011.5" rx="4.2" ry="3.7" fill="#FF8000"/><rect x="1946.1" y="1010.0" width="3.2" height="3" fill="#3a4050"/>
<ellipse cx="1926.5" cy="1119.4" rx="4.2" ry="3.7" fill="#FF8000"/><rect x="1924.9" y="1117.9" width="3.2" height="3" fill="#3a4050"/>
<ellipse cx="2087.4" cy="1115.2" rx="4.2" ry="3.7" fill="#FF8000"/><rect x="2085.8" y="1113.7" width="3.2" height="3" fill="#3a4050"/>
<ellipse cx="1865.1" cy="1106.7" rx="4.2" ry="3.7" fill="#FF8000"/><rect x="1863.5" y="1105.2" width="3.2" height="3" fill="#3a4050"/>
<ellipse cx="1793.1" cy="1106.7" rx="4.2" ry="3.7" fill="#FF8000"/><rect x="1791.5" y="1105.2" width="3.2" height="3" fill="#3a4050"/>
<ellipse cx="1890.0" cy="1128.0" rx="4.2" ry="3.7" fill="#FF8000"/><rect x="1888.4" y="1126.5" width="3.2" height="3" fill="#3a4050"/>
<path d="M2157.0 978.0 L2172.0 990.0" stroke="#00E0E0" stroke-width="6" fill="none" stroke-linecap="butt" stroke-linejoin="round"/>
<rect x="1787.4" y="1160.6" width="14.0" height="13.3" rx="3" fill="#FF8000"/>
<rect x="1787.4" y="1184.3" width="14.0" height="13.3" rx="3" fill="#FF8000"/>
<rect x="1787.9" y="1165.1" width="13.0" height="28.0" fill="none" stroke="#FFFF00" stroke-width="1"/>
<rect x="1839.5" y="1161.6" width="30.4" height="12.2" fill="#00A0A4"/>
<rect x="1839.5" y="1184.4" width="30.4" height="12.2" fill="#00A0A4"/>
<rect x="1869.9" y="1161.6" width="30.4" height="12.2" fill="#00A0A4"/>
<rect x="1869.9" y="1184.4" width="30.4" height="12.2" fill="#00A0A4"/>
<rect x="1900.3" y="1161.6" width="30.4" height="12.2" fill="#00A0A4"/>
<rect x="1900.3" y="1184.4" width="30.4" height="12.2" fill="#00A0A4"/>
<path d="M1839.5 1167.9L1869.9 1190.3M1839.5 1190.3L1869.9 1167.9" stroke="#00E0E0" stroke-width="8" fill="none"/>
<path d="M1869.9 1167.9L1900.3 1190.3M1869.9 1190.3L1900.3 1167.9" stroke="#00E0E0" stroke-width="8" fill="none"/>
<path d="M1900.3 1167.9L1930.8 1190.3M1900.3 1190.3L1930.8 1167.9" stroke="#00E0E0" stroke-width="8" fill="none"/>
<path d="M1930.8 1167.9L1961.2 1190.3M1930.8 1190.3L1961.2 1167.9" stroke="#00E0E0" stroke-width="8" fill="none"/>
<rect x="1833.0" y="1160.6" width="13" height="12.2" rx="3" fill="#FF8000"/>
<rect x="1833.0" y="1185.4" width="13" height="12.2" rx="3" fill="#FF8000"/>
<rect x="1833.5" y="1165.1" width="12.0" height="28.0" fill="none" stroke="#FFFF00" stroke-width="1"/>
<rect x="1863.4" y="1160.6" width="13" height="12.2" rx="3" fill="#FF8000"/>
<rect x="1863.4" y="1185.4" width="13" height="12.2" rx="3" fill="#FF8000"/>
<rect x="1863.9" y="1165.1" width="12.0" height="28.0" fill="none" stroke="#FFFF00" stroke-width="1"/>
<rect x="1893.8" y="1160.6" width="13" height="12.2" rx="3" fill="#FF8000"/>
<rect x="1893.8" y="1185.4" width="13" height="12.2" rx="3" fill="#FF8000"/>
<rect x="1894.3" y="1165.1" width="12.0" height="28.0" fill="none" stroke="#FFFF00" stroke-width="1"/>
<rect x="1924.3" y="1160.6" width="13" height="12.2" rx="3" fill="#FF8000"/>
<rect x="1924.3" y="1185.4" width="13" height="12.2" rx="3" fill="#FF8000"/>
<rect x="1924.8" y="1165.1" width="12.0" height="28.0" fill="none" stroke="#FFFF00" stroke-width="1"/>
<rect x="1954.7" y="1160.6" width="13" height="12.2" rx="3" fill="#FF8000"/>
<rect x="1954.7" y="1185.4" width="13" height="12.2" rx="3" fill="#FF8000"/>
<rect x="1955.2" y="1165.1" width="12.0" height="28.0" fill="none" stroke="#FFFF00" stroke-width="1"/>
<path d="M1870.0 1190.0 L1875.0 1228.0" stroke="#00E0E0" stroke-width="9" fill="none" stroke-linecap="butt" stroke-linejoin="round"/>
<path d="M1898.8 1190.0 L1897.0 1228.0" stroke="#00E0E0" stroke-width="9" fill="none" stroke-linecap="butt" stroke-linejoin="round"/>
<path d="M1928.0 1195.0 L1954.0 1222.0" stroke="#00E0E0" stroke-width="2" fill="none" stroke-linecap="butt" stroke-linejoin="round"/>
<path d="M1958.0 1197.0 L1968.0 1197.0 L1982.0 1225.0 L1950.0 1225.0Z" fill="#00E0E0"/>
<path d="M2033.9 1167.9L2067.1 1190.3M2033.9 1190.3L2067.1 1167.9" stroke="#00E0E0" stroke-width="8" fill="none"/>
<path d="M2067.1 1167.9L2100.2 1190.3M2067.1 1190.3L2100.2 1167.9" stroke="#00E0E0" stroke-width="8" fill="none"/>
<rect x="2027.4" y="1160.6" width="13" height="12.2" rx="3" fill="#FF8000"/>
<rect x="2027.4" y="1185.4" width="13" height="12.2" rx="3" fill="#FF8000"/>
<rect x="2027.9" y="1165.1" width="12.0" height="28.0" fill="none" stroke="#FFFF00" stroke-width="1"/>
<rect x="2060.6" y="1160.6" width="13" height="12.2" rx="3" fill="#FF8000"/>
<rect x="2060.6" y="1185.4" width="13" height="12.2" rx="3" fill="#FF8000"/>
<rect x="2061.1" y="1165.1" width="12.0" height="28.0" fill="none" stroke="#FFFF00" stroke-width="1"/>
<rect x="2093.7" y="1160.6" width="13" height="12.2" rx="3" fill="#FF8000"/>
<rect x="2093.7" y="1185.4" width="13" height="12.2" rx="3" fill="#FF8000"/>
<rect x="2094.2" y="1165.1" width="12.0" height="28.0" fill="none" stroke="#FFFF00" stroke-width="1"/>
<path d="M1686.8 1219.0 L1761.3 1219.0 L1775.0 1239.0 L1670.0 1239.0Z" fill="#00C8C8"/>
<path d="M1686.8 1221.3L1710.0 1221.3M1686.8 1221.3L1672.8 1236.3M1686.8 1221.3L1699.0 1236.3M1710.0 1221.3L1699.0 1236.3M1710.0 1221.3L1723.8 1236.3M1737.2 1221.3L1761.3 1221.3M1737.2 1221.3L1723.8 1236.3M1737.2 1221.3L1749.0 1236.3M1761.3 1221.3L1749.0 1236.3M1761.3 1221.3L1772.2 1236.3M1672.8 1236.3L1699.0 1236.3M1699.0 1236.3L1723.8 1236.3M1723.8 1236.3L1749.0 1236.3M1749.0 1236.3L1772.2 1236.3" stroke="#00E0E0" stroke-width="5" fill="none"/>
<ellipse cx="1686.8" cy="1221.3" rx="4.2" ry="3.7" fill="#FF8000"/><rect x="1685.2" y="1219.8" width="3.2" height="3" fill="#3a4050"/>
<ellipse cx="1710.0" cy="1221.3" rx="4.2" ry="3.7" fill="#FF8000"/><rect x="1708.4" y="1219.8" width="3.2" height="3" fill="#3a4050"/>
<ellipse cx="1737.2" cy="1221.3" rx="4.2" ry="3.7" fill="#FF8000"/><rect x="1735.6" y="1219.8" width="3.2" height="3" fill="#3a4050"/>
<ellipse cx="1761.3" cy="1221.3" rx="4.2" ry="3.7" fill="#FF8000"/><rect x="1759.7" y="1219.8" width="3.2" height="3" fill="#3a4050"/>
<ellipse cx="1672.8" cy="1236.3" rx="4.2" ry="3.7" fill="#FF8000"/><rect x="1671.2" y="1234.8" width="3.2" height="3" fill="#3a4050"/>
<ellipse cx="1699.0" cy="1236.3" rx="4.2" ry="3.7" fill="#FF8000"/><rect x="1697.4" y="1234.8" width="3.2" height="3" fill="#3a4050"/>
<ellipse cx="1723.8" cy="1236.3" rx="4.2" ry="3.7" fill="#FF8000"/><rect x="1722.2" y="1234.8" width="3.2" height="3" fill="#3a4050"/>
<ellipse cx="1749.0" cy="1236.3" rx="4.2" ry="3.7" fill="#FF8000"/><rect x="1747.4" y="1234.8" width="3.2" height="3" fill="#3a4050"/>
<ellipse cx="1772.2" cy="1236.3" rx="4.2" ry="3.7" fill="#FF8000"/><rect x="1770.6" y="1234.8" width="3.2" height="3" fill="#3a4050"/>
<path d="M1875.0 1226.0 L1897.0 1226.0 L1911.0 1245.0 L1862.0 1245.0Z" fill="#00A0A0"/>
<path d="M1875.0 1228.0L1897.1 1228.0M1875.0 1228.0L1863.8 1243.0M1875.0 1228.0L1886.0 1243.0M1897.1 1228.0L1886.0 1243.0M1897.1 1228.0L1909.0 1243.0M1863.8 1243.0L1886.0 1243.0M1886.0 1243.0L1909.0 1243.0" stroke="#00E0E0" stroke-width="5" fill="none"/>
<ellipse cx="1875.0" cy="1228.0" rx="4.2" ry="3.7" fill="#FF8000"/><rect x="1873.4" y="1226.5" width="3.2" height="3" fill="#3a4050"/>
<ellipse cx="1897.1" cy="1228.0" rx="4.2" ry="3.7" fill="#FF8000"/><rect x="1895.5" y="1226.5" width="3.2" height="3" fill="#3a4050"/>
<ellipse cx="1863.8" cy="1243.0" rx="4.2" ry="3.7" fill="#FF8000"/><rect x="1862.2" y="1241.5" width="3.2" height="3" fill="#3a4050"/>
<ellipse cx="1886.0" cy="1243.0" rx="4.2" ry="3.7" fill="#FF8000"/><rect x="1884.4" y="1241.5" width="3.2" height="3" fill="#3a4050"/>
<ellipse cx="1909.0" cy="1243.0" rx="4.2" ry="3.7" fill="#FF8000"/><rect x="1907.4" y="1241.5" width="3.2" height="3" fill="#3a4050"/>
<rect x="1947.0" y="1230.3" width="13.6" height="14.0" rx="3" fill="#FF8000"/>
<rect x="1971.2" y="1230.3" width="13.6" height="14.0" rx="3" fill="#FF8000"/>
<rect x="1951.5" y="1230.8" width="28.8" height="13.0" fill="none" stroke="#FFFF00" stroke-width="1"/>
<path d="M1954.0 1222.3 L1978.0 1237.0" stroke="#00E0E0" stroke-width="5" fill="none" stroke-linecap="butt" stroke-linejoin="round"/>
<path d="M1978.0 1222.3 L1954.0 1237.0" stroke="#00E0E0" stroke-width="5" fill="none" stroke-linecap="butt" stroke-linejoin="round"/>
<ellipse cx="1954.0" cy="1222.3" rx="4.2" ry="3.7" fill="#FF8000"/><rect x="1952.4" y="1220.8" width="3.2" height="3" fill="#3a4050"/>
<ellipse cx="1978.0" cy="1222.3" rx="4.2" ry="3.7" fill="#FF8000"/><rect x="1976.4" y="1220.8" width="3.2" height="3" fill="#3a4050"/>
<path d="M1799.0 1357.0 L1816.0 1343.0 L1900.0 1343.0 L1886.0 1357.0 L1872.0 1376.0 L1808.0 1376.0Z" fill="#00C8C8"/>
<path d="M1778.8 1343.8L1816.4 1343.8M1778.8 1343.8L1799.0 1357.2M1816.4 1343.8L1844.2 1343.8M1816.4 1343.8L1799.0 1357.2M1816.4 1343.8L1830.4 1357.2M1844.2 1343.8L1873.0 1343.8M1844.2 1343.8L1830.4 1357.2M1844.2 1343.8L1859.3 1357.2M1873.0 1343.8L1899.8 1343.8M1873.0 1343.8L1859.3 1357.2M1873.0 1343.8L1886.4 1357.2M1899.8 1343.8L1886.4 1357.2M1899.8 1343.8L1917.3 1357.2M1799.0 1357.2L1830.4 1357.2M1830.4 1357.2L1859.3 1357.2M1859.3 1357.2L1886.4 1357.2M1886.4 1357.2L1917.3 1357.2" stroke="#00E0E0" stroke-width="5" fill="none"/>
<path d="M1799.0 1357.0 L1808.0 1376.0" stroke="#00E0E0" stroke-width="8" fill="none" stroke-linecap="butt" stroke-linejoin="round"/>
<path d="M1830.0 1357.0 L1840.0 1376.0" stroke="#00E0E0" stroke-width="8" fill="none" stroke-linecap="butt" stroke-linejoin="round"/>
<path d="M1859.0 1357.0 L1872.0 1376.0" stroke="#00E0E0" stroke-width="8" fill="none" stroke-linecap="butt" stroke-linejoin="round"/>
<path d="M1807.5 1379.9L1840.0 1402.4M1807.5 1402.4L1840.0 1379.9" stroke="#00E0E0" stroke-width="8" fill="none"/>
<path d="M1840.0 1379.9L1872.5 1402.4M1840.0 1402.4L1872.5 1379.9" stroke="#00E0E0" stroke-width="8" fill="none"/>
<rect x="1801.0" y="1372.6" width="13" height="12.2" rx="3" fill="#FF8000"/>
<rect x="1801.0" y="1397.5" width="13" height="12.2" rx="3" fill="#FF8000"/>
<rect x="1801.5" y="1377.1" width="12.0" height="28.1" fill="none" stroke="#FFFF00" stroke-width="1"/>
<rect x="1833.5" y="1372.6" width="13" height="12.2" rx="3" fill="#FF8000"/>
<rect x="1833.5" y="1397.5" width="13" height="12.2" rx="3" fill="#FF8000"/>
<rect x="1834.0" y="1377.1" width="12.0" height="28.1" fill="none" stroke="#FFFF00" stroke-width="1"/>
<rect x="1866.0" y="1372.6" width="13" height="12.2" rx="3" fill="#FF8000"/>
<rect x="1866.0" y="1397.5" width="13" height="12.2" rx="3" fill="#FF8000"/>
<rect x="1866.5" y="1377.1" width="12.0" height="28.1" fill="none" stroke="#FFFF00" stroke-width="1"/>
<ellipse cx="1778.8" cy="1343.8" rx="4.2" ry="3.7" fill="#FF8000"/><rect x="1777.2" y="1342.3" width="3.2" height="3" fill="#3a4050"/>
<ellipse cx="1816.4" cy="1343.8" rx="4.2" ry="3.7" fill="#FF8000"/><rect x="1814.8" y="1342.3" width="3.2" height="3" fill="#3a4050"/>
<ellipse cx="1844.2" cy="1343.8" rx="4.2" ry="3.7" fill="#FF8000"/><rect x="1842.6" y="1342.3" width="3.2" height="3" fill="#3a4050"/>
<ellipse cx="1873.0" cy="1343.8" rx="4.2" ry="3.7" fill="#FF8000"/><rect x="1871.4" y="1342.3" width="3.2" height="3" fill="#3a4050"/>
<ellipse cx="1899.8" cy="1343.8" rx="4.2" ry="3.7" fill="#FF8000"/><rect x="1898.2" y="1342.3" width="3.2" height="3" fill="#3a4050"/>
<ellipse cx="1799.0" cy="1357.2" rx="4.2" ry="3.7" fill="#FF8000"/><rect x="1797.4" y="1355.7" width="3.2" height="3" fill="#3a4050"/>
<ellipse cx="1830.4" cy="1357.2" rx="4.2" ry="3.7" fill="#FF8000"/><rect x="1828.8" y="1355.7" width="3.2" height="3" fill="#3a4050"/>
<ellipse cx="1859.3" cy="1357.2" rx="4.2" ry="3.7" fill="#FF8000"/><rect x="1857.7" y="1355.7" width="3.2" height="3" fill="#3a4050"/>
<ellipse cx="1886.4" cy="1357.2" rx="4.2" ry="3.7" fill="#FF8000"/><rect x="1884.8" y="1355.7" width="3.2" height="3" fill="#3a4050"/>
<ellipse cx="1917.3" cy="1357.2" rx="4.2" ry="3.7" fill="#FF8000"/><rect x="1915.7" y="1355.7" width="3.2" height="3" fill="#3a4050"/>
<rect x="1981.0" y="1372.6" width="14.0" height="13.4" rx="3" fill="#FF8000"/>
<rect x="1981.0" y="1396.3" width="14.0" height="13.4" rx="3" fill="#FF8000"/>
<rect x="1981.5" y="1377.1" width="13.0" height="28.1" fill="none" stroke="#FFFF00" stroke-width="1"/>
<rect x="1992.0" y="1397.0" width="20.0" height="15.0" fill="#00C8C8"/>
<rect x="2015.0" y="1398.0" width="11.9" height="13.0" rx="3" fill="#FF8000"/>
<rect x="2036.1" y="1398.0" width="11.9" height="13.0" rx="3" fill="#FF8000"/>
<rect x="2019.5" y="1398.5" width="24.0" height="12.0" fill="none" stroke="#FFFF00" stroke-width="1"/>
<rect x="2048.0" y="1397.0" width="19.0" height="15.0" fill="#00A0A0"/>
<rect x="2067.6" y="1398.0" width="11.8" height="13.0" rx="3" fill="#FF8000"/>
<rect x="2088.7" y="1398.0" width="11.8" height="13.0" rx="3" fill="#FF8000"/>
<rect x="2072.1" y="1398.5" width="23.9" height="12.0" fill="none" stroke="#FFFF00" stroke-width="1"/>
<rect x="2121.0" y="1397.8" width="11.9" height="13.0" rx="3" fill="#FF8000"/>
<rect x="2142.1" y="1397.8" width="11.9" height="13.0" rx="3" fill="#FF8000"/>
<rect x="2125.5" y="1398.3" width="24.0" height="12.0" fill="none" stroke="#FFFF00" stroke-width="1"/>
<path d="M2150.5 1405.0 L2129.2 1425.0" stroke="#00E0E0" stroke-width="6" fill="none" stroke-linecap="butt" stroke-linejoin="round"/>
<ellipse cx="2129.2" cy="1425.0" rx="4.2" ry="3.7" fill="#FF8000"/><rect x="2127.6" y="1423.5" width="3.2" height="3" fill="#3a4050"/>
<path d="M2117.5 1243.8 L2137.8 1243.8 L2149.2 1258.0 L2125.0 1256.0Z" fill="#00C8C8"/>
<path d="M2117.5 1243.8L2137.8 1243.8M2117.5 1243.8L2125.0 1256.0M2137.8 1243.8L2125.0 1256.0M2137.8 1243.8L2149.2 1258.0M2125.0 1256.0L2149.2 1258.0" stroke="#00E0E0" stroke-width="5" fill="none"/>
<ellipse cx="2117.5" cy="1243.8" rx="4.2" ry="3.7" fill="#FF8000"/><rect x="2115.9" y="1242.3" width="3.2" height="3" fill="#3a4050"/>
<ellipse cx="2137.8" cy="1243.8" rx="4.2" ry="3.7" fill="#FF8000"/><rect x="2136.2" y="1242.3" width="3.2" height="3" fill="#3a4050"/>
<ellipse cx="2125.0" cy="1256.0" rx="4.2" ry="3.7" fill="#FF8000"/><rect x="2123.4" y="1254.5" width="3.2" height="3" fill="#3a4050"/>
<ellipse cx="2149.2" cy="1258.0" rx="4.2" ry="3.7" fill="#FF8000"/><rect x="2147.6" y="1256.5" width="3.2" height="3" fill="#3a4050"/>
<path d="M2145.0 1201.0 L2190.5 1175.0 L2180.0 1189.2 L2164.0 1205.7Z" fill="#00C8C8"/>
<path d="M2145.0 1201.0L2165.0 1185.4M2145.0 1201.0L2164.0 1205.7M2165.0 1185.4L2180.0 1189.2M2165.0 1185.4L2190.5 1175.0M2165.0 1185.4L2164.0 1205.7M2180.0 1189.2L2190.5 1175.0M2180.0 1189.2L2164.0 1205.7" stroke="#00E0E0" stroke-width="5" fill="none"/>
<ellipse cx="2145.0" cy="1201.0" rx="4.2" ry="3.7" fill="#FF8000"/><rect x="2143.4" y="1199.5" width="3.2" height="3" fill="#3a4050"/>
<ellipse cx="2165.0" cy="1185.4" rx="4.2" ry="3.7" fill="#FF8000"/><rect x="2163.4" y="1183.9" width="3.2" height="3" fill="#3a4050"/>
<ellipse cx="2180.0" cy="1189.2" rx="4.2" ry="3.7" fill="#FF8000"/><rect x="2178.4" y="1187.7" width="3.2" height="3" fill="#3a4050"/>
<ellipse cx="2190.5" cy="1175.0" rx="4.2" ry="3.7" fill="#FF8000"/><rect x="2188.9" y="1173.5" width="3.2" height="3" fill="#3a4050"/>
<ellipse cx="2164.0" cy="1205.7" rx="4.2" ry="3.7" fill="#FF8000"/><rect x="2162.4" y="1204.2" width="3.2" height="3" fill="#3a4050"/>
<path d="M2218.7 1089.2 L2233.0 1089.2" stroke="#00A0A0" stroke-width="6" fill="none" stroke-linecap="butt" stroke-linejoin="round"/>
<ellipse cx="2218.7" cy="1089.2" rx="4.2" ry="3.7" fill="#FF8000"/><rect x="2217.1" y="1087.7" width="3.2" height="3" fill="#3a4050"/>
<ellipse cx="2233.0" cy="1089.2" rx="4.2" ry="3.7" fill="#FF8000"/><rect x="2231.4" y="1087.7" width="3.2" height="3" fill="#3a4050"/>
<path d="M2276.8 1073.3 L2288.0 1082.0 L2287.0 1106.0 L2272.0 1105.0 L2272.0 1092.4Z" fill="#00A0A0"/>
<path d="M2276.8 1073.3L2288.0 1082.0M2276.8 1073.3L2272.0 1092.4M2288.0 1082.0L2272.0 1092.4M2272.0 1092.4L2272.0 1105.0M2272.0 1092.4L2287.0 1106.0M2272.0 1105.0L2287.0 1106.0" stroke="#00E0E0" stroke-width="4" fill="none"/>
<ellipse cx="2276.8" cy="1073.3" rx="4.2" ry="3.7" fill="#FF8000"/><rect x="2275.2" y="1071.8" width="3.2" height="3" fill="#3a4050"/>
<ellipse cx="2288.0" cy="1082.0" rx="4.2" ry="3.7" fill="#FF8000"/><rect x="2286.4" y="1080.5" width="3.2" height="3" fill="#3a4050"/>
<ellipse cx="2272.0" cy="1092.4" rx="4.2" ry="3.7" fill="#FF8000"/><rect x="2270.4" y="1090.9" width="3.2" height="3" fill="#3a4050"/>
<ellipse cx="2272.0" cy="1105.0" rx="4.2" ry="3.7" fill="#FF8000"/><rect x="2270.4" y="1103.5" width="3.2" height="3" fill="#3a4050"/>
<ellipse cx="2287.0" cy="1106.0" rx="4.2" ry="3.7" fill="#FF8000"/><rect x="2285.4" y="1104.5" width="3.2" height="3" fill="#3a4050"/>
<path d="M2250.8 1174.3 L2271.4 1174.3 L2291.0 1174.3 L2307.0 1168.0" stroke="#00A0A0" stroke-width="6" fill="none" stroke-linecap="butt" stroke-linejoin="round"/>
<ellipse cx="2250.8" cy="1174.3" rx="4.2" ry="3.7" fill="#FF8000"/><rect x="2249.2" y="1172.8" width="3.2" height="3" fill="#3a4050"/>
<ellipse cx="2271.4" cy="1174.3" rx="4.2" ry="3.7" fill="#FF8000"/><rect x="2269.8" y="1172.8" width="3.2" height="3" fill="#3a4050"/>
<ellipse cx="2291.0" cy="1174.3" rx="4.2" ry="3.7" fill="#FF8000"/><rect x="2289.4" y="1172.8" width="3.2" height="3" fill="#3a4050"/>
<ellipse cx="2307.0" cy="1168.0" rx="4.2" ry="3.7" fill="#FF8000"/><rect x="2305.4" y="1166.5" width="3.2" height="3" fill="#3a4050"/>
<path d="M2303.0 1210.5 L2275.0 1222.0 L2285.7 1233.0Z" fill="#00E0E0"/>
<path d="M2275.0 1222.0 L2285.7 1233.0 L2298.0 1246.3" stroke="#00A0A0" stroke-width="6" fill="none" stroke-linecap="butt" stroke-linejoin="round"/>
<ellipse cx="2303.0" cy="1210.5" rx="4.2" ry="3.7" fill="#FF8000"/><rect x="2301.4" y="1209.0" width="3.2" height="3" fill="#3a4050"/>
<ellipse cx="2275.0" cy="1222.0" rx="4.2" ry="3.7" fill="#FF8000"/><rect x="2273.4" y="1220.5" width="3.2" height="3" fill="#3a4050"/>
<ellipse cx="2285.7" cy="1233.0" rx="4.2" ry="3.7" fill="#FF8000"/><rect x="2284.1" y="1231.5" width="3.2" height="3" fill="#3a4050"/>
<ellipse cx="2298.0" cy="1246.3" rx="4.2" ry="3.7" fill="#FF8000"/><rect x="2296.4" y="1244.8" width="3.2" height="3" fill="#3a4050"/>
<path d="M2211.7 1259.7 L2211.7 1284.4" stroke="#00E0E0" stroke-width="8" fill="none" stroke-linecap="butt" stroke-linejoin="round"/>
<ellipse cx="2211.7" cy="1259.7" rx="4.2" ry="3.7" fill="#FF8000"/><rect x="2210.1" y="1258.2" width="3.2" height="3" fill="#3a4050"/>
<ellipse cx="2211.7" cy="1284.4" rx="4.2" ry="3.7" fill="#FF8000"/><rect x="2210.1" y="1282.9" width="3.2" height="3" fill="#3a4050"/>
<rect x="2237.5" y="1253.3" width="13.0" height="13.5" rx="3" fill="#FF8000"/>
<rect x="2237.5" y="1277.3" width="13.0" height="13.5" rx="3" fill="#FF8000"/>
<rect x="2238.0" y="1257.8" width="12.0" height="28.5" fill="none" stroke="#FFFF00" stroke-width="1"/>
<path d="M2195.0 1415.6 L2213.3 1433.7" stroke="#00E0E0" stroke-width="7" fill="none" stroke-linecap="butt" stroke-linejoin="round"/>
<ellipse cx="2195.0" cy="1415.6" rx="4.2" ry="3.7" fill="#FF8000"/><rect x="2193.4" y="1414.1" width="3.2" height="3" fill="#3a4050"/>
<ellipse cx="2213.3" cy="1433.7" rx="4.2" ry="3.7" fill="#FF8000"/><rect x="2211.7" y="1432.2" width="3.2" height="3" fill="#3a4050"/>
<path d="M2181.6 1460.6 L2201.3 1470.2 L2201.3 1502.0" stroke="#00E0E0" stroke-width="7" fill="none" stroke-linecap="butt" stroke-linejoin="round"/>
<ellipse cx="2181.6" cy="1460.6" rx="4.2" ry="3.7" fill="#FF8000"/><rect x="2180.0" y="1459.1" width="3.2" height="3" fill="#3a4050"/>
<ellipse cx="2201.3" cy="1470.2" rx="4.2" ry="3.7" fill="#FF8000"/><rect x="2199.7" y="1468.7" width="3.2" height="3" fill="#3a4050"/>
<ellipse cx="2201.3" cy="1502.0" rx="4.2" ry="3.7" fill="#FF8000"/><rect x="2199.7" y="1500.5" width="3.2" height="3" fill="#3a4050"/>
<ellipse cx="2213.3" cy="1515.0" rx="4.2" ry="3.7" fill="#FF8000"/><rect x="2211.7" y="1513.5" width="3.2" height="3" fill="#3a4050"/>
<ellipse cx="2312.7" cy="1493.3" rx="4.2" ry="3.7" fill="#FF8000"/><rect x="2311.1" y="1491.8" width="3.2" height="3" fill="#3a4050"/>
<rect x="1757.5" y="1429.0" width="381.0" height="271.0" fill="none" stroke="#FFFF00" stroke-width="1"/>
<path d="M1838.8 1465.0L1849.7 1476.5M1968.9 1465.0L1958.1 1476.5M1990.5 1465.0L2001.4 1476.5M2012.2 1465.0L2001.4 1476.5M1817.2 1487.5L1806.4 1498.7M1838.8 1487.5L1828.0 1498.7M1838.8 1487.5L1849.7 1498.7M1860.5 1487.5L1849.7 1476.5M1860.5 1487.5L1871.4 1476.5M1882.2 1487.5L1871.4 1498.7M1903.8 1487.5L1914.7 1476.5M1903.8 1487.5L1914.7 1498.7M1947.2 1487.5L1936.4 1498.7M1968.9 1487.5L1958.1 1476.5M1968.9 1487.5L1958.1 1498.7M1968.9 1487.5L1979.7 1498.7M1990.5 1487.5L1979.7 1476.5M1990.5 1487.5L2001.4 1476.5M1990.5 1487.5L2001.4 1498.7M2012.2 1487.5L2001.4 1498.7M2033.9 1487.5L2023.1 1476.5M2033.9 1487.5L2044.7 1476.5M2055.5 1487.5L2044.7 1498.7M2077.2 1487.5L2066.4 1498.7M2077.2 1487.5L2088.1 1498.7M2098.9 1487.5L2109.8 1498.7M1795.5 1509.8L1806.4 1498.7M1795.5 1509.8L1806.4 1520.8M1817.2 1509.8L1828.0 1520.8M1860.5 1509.8L1871.4 1498.7M1860.5 1509.8L1849.7 1520.8M1882.2 1509.8L1871.4 1498.7M1882.2 1509.8L1893.0 1498.7M1882.2 1509.8L1871.4 1520.8M1882.2 1509.8L1893.0 1520.8M1903.8 1509.8L1914.7 1498.7M1903.8 1509.8L1893.0 1520.8M1925.5 1509.8L1914.7 1498.7M1947.2 1509.8L1936.4 1498.7M1947.2 1509.8L1958.1 1520.8M1968.9 1509.8L1958.1 1498.7M1968.9 1509.8L1958.1 1520.8M2012.2 1509.8L2001.4 1520.8M2012.2 1509.8L2023.1 1520.8M2033.9 1509.8L2023.1 1498.7M2033.9 1509.8L2044.7 1520.8M2055.5 1509.8L2066.4 1498.7M2077.2 1509.8L2066.4 1498.7M2077.2 1509.8L2088.1 1498.7M2077.2 1509.8L2066.4 1520.8M2077.2 1509.8L2088.1 1520.8M2098.9 1509.8L2088.1 1520.8M1990.5 1532.0L1979.7 1520.8M2012.2 1532.0L2001.4 1520.8M2012.2 1532.0L2023.1 1520.8M2055.5 1532.0L2044.7 1520.8M2055.5 1532.0L2066.4 1520.8" stroke="#006A6E" stroke-width="9" fill="none"/>
<path d="M1968.9 1465.0L1979.7 1476.5M2012.2 1465.0L2023.1 1476.5M1795.5 1487.5L1784.7 1476.5M1795.5 1487.5L1806.4 1498.7M1817.2 1487.5L1806.4 1476.5M1882.2 1487.5L1871.4 1476.5M1882.2 1487.5L1893.0 1498.7M1925.5 1487.5L1914.7 1476.5M1925.5 1487.5L1936.4 1476.5M1925.5 1487.5L1936.4 1498.7M1990.5 1487.5L1979.7 1498.7M2012.2 1487.5L2023.1 1476.5M2033.9 1487.5L2023.1 1498.7M2033.9 1487.5L2044.7 1498.7M2055.5 1487.5L2044.7 1476.5M2055.5 1487.5L2066.4 1476.5M2055.5 1487.5L2066.4 1498.7M2098.9 1487.5L2088.1 1476.5M2098.9 1487.5L2109.8 1476.5M2098.9 1487.5L2088.1 1498.7M1795.5 1509.8L1784.7 1520.8M1838.8 1509.8L1849.7 1498.7M1860.5 1509.8L1871.4 1520.8M1903.8 1509.8L1893.0 1498.7M1903.8 1509.8L1914.7 1520.8M1925.5 1509.8L1936.4 1498.7M1925.5 1509.8L1914.7 1520.8M1968.9 1509.8L1979.7 1498.7M1990.5 1509.8L1979.7 1520.8M2033.9 1509.8L2044.7 1498.7M2055.5 1509.8L2044.7 1498.7M2098.9 1509.8L2088.1 1498.7M2098.9 1509.8L2109.8 1498.7M1968.9 1532.0L1958.1 1520.8M2033.9 1532.0L2044.7 1520.8" stroke="#00A0A4" stroke-width="9" fill="none"/>
<path d="M1784.7 1476.5L1784.7 1498.7M1806.4 1476.5L1806.4 1498.7M1806.4 1476.5L1828.0 1498.7M1828.0 1476.5L1849.7 1476.5M1828.0 1476.5L1806.4 1498.7M1828.0 1476.5L1849.7 1498.7M1849.7 1476.5L1849.7 1498.7M1871.4 1476.5L1871.4 1498.7M1871.4 1476.5L1893.0 1498.7M1893.0 1476.5L1914.7 1476.5M1914.7 1476.5L1936.4 1476.5M1936.4 1476.5L1914.7 1498.7M1936.4 1476.5L1958.1 1498.7M1958.1 1476.5L1936.4 1498.7M1958.1 1476.5L1979.7 1498.7M1979.7 1476.5L1979.7 1498.7M2001.4 1476.5L2001.4 1498.7M2023.1 1476.5L2023.1 1498.7M2066.4 1476.5L2088.1 1498.7M2109.8 1476.5L2109.8 1498.7M1784.7 1498.7L1806.4 1498.7M1784.7 1498.7L1806.4 1520.8M1828.0 1498.7L1806.4 1520.8M1849.7 1498.7L1871.4 1520.8M1871.4 1498.7L1893.0 1498.7M1871.4 1498.7L1871.4 1520.8M1893.0 1498.7L1914.7 1520.8M1936.4 1498.7L1958.1 1498.7M2001.4 1498.7L2023.1 1498.7M2023.1 1498.7L2044.7 1520.8M2044.7 1498.7L2066.4 1520.8M2066.4 1498.7L2044.7 1520.8M2088.1 1498.7L2088.1 1520.8M1828.0 1520.8L1849.7 1520.8M1914.7 1520.8L1936.4 1520.8M1979.7 1520.8L2001.4 1520.8M2023.1 1520.8L2044.7 1520.8M2066.4 1520.8L2088.1 1520.8M1838.8 1465.0L1838.8 1487.5M1990.5 1465.0L2012.2 1465.0M1990.5 1465.0L1968.9 1487.5M1990.5 1465.0L2012.2 1487.5M2012.2 1465.0L1990.5 1487.5M2012.2 1465.0L2033.9 1487.5M1817.2 1487.5L1838.8 1487.5M1817.2 1487.5L1817.2 1509.8M1838.8 1487.5L1817.2 1509.8M1838.8 1487.5L1838.8 1509.8M1860.5 1487.5L1882.2 1487.5M1882.2 1487.5L1860.5 1509.8M1903.8 1487.5L1882.2 1509.8M1903.8 1487.5L1903.8 1509.8M1925.5 1487.5L1903.8 1509.8M1947.2 1487.5L1947.2 1509.8M1968.9 1487.5L1990.5 1487.5M1990.5 1487.5L2012.2 1487.5M1990.5 1487.5L1968.9 1509.8M2033.9 1487.5L2055.5 1487.5M2033.9 1487.5L2033.9 1509.8M2055.5 1487.5L2033.9 1509.8M2055.5 1487.5L2055.5 1509.8M2077.2 1487.5L2055.5 1509.8M2077.2 1487.5L2077.2 1509.8M2077.2 1487.5L2098.9 1509.8M2098.9 1487.5L2077.2 1509.8M1838.8 1509.8L1860.5 1509.8M1860.5 1509.8L1882.2 1509.8M1968.9 1509.8L1968.9 1532.0M1990.5 1509.8L2012.2 1509.8M1990.5 1509.8L1968.9 1532.0M2012.2 1509.8L1990.5 1532.0M2033.9 1509.8L2055.5 1509.8M2055.5 1509.8L2033.9 1532.0" stroke="#00E0E0" stroke-width="6.5" fill="none"/>
<path d="M1838.8 1465.0L1828.0 1476.5M1990.5 1465.0L1979.7 1476.5M1795.5 1487.5L1806.4 1476.5M1795.5 1487.5L1784.7 1498.7M1817.2 1487.5L1828.0 1476.5M1817.2 1487.5L1828.0 1498.7M1838.8 1487.5L1828.0 1476.5M1838.8 1487.5L1849.7 1476.5M1860.5 1487.5L1849.7 1498.7M1860.5 1487.5L1871.4 1498.7M1882.2 1487.5L1893.0 1476.5M1903.8 1487.5L1893.0 1476.5M1903.8 1487.5L1893.0 1498.7M1925.5 1487.5L1914.7 1498.7M1947.2 1487.5L1936.4 1476.5M1947.2 1487.5L1958.1 1476.5M1947.2 1487.5L1958.1 1498.7M1968.9 1487.5L1979.7 1476.5M2012.2 1487.5L2001.4 1476.5M2012.2 1487.5L2023.1 1498.7M2077.2 1487.5L2066.4 1476.5M2077.2 1487.5L2088.1 1476.5M1795.5 1509.8L1784.7 1498.7M1817.2 1509.8L1806.4 1498.7M1817.2 1509.8L1828.0 1498.7M1817.2 1509.8L1806.4 1520.8M1838.8 1509.8L1828.0 1498.7M1838.8 1509.8L1828.0 1520.8M1838.8 1509.8L1849.7 1520.8M1860.5 1509.8L1849.7 1498.7M1925.5 1509.8L1936.4 1520.8M1947.2 1509.8L1958.1 1498.7M1947.2 1509.8L1936.4 1520.8M1968.9 1509.8L1979.7 1520.8M1990.5 1509.8L1979.7 1498.7M1990.5 1509.8L2001.4 1498.7M1990.5 1509.8L2001.4 1520.8M2012.2 1509.8L2001.4 1498.7M2012.2 1509.8L2023.1 1498.7M2033.9 1509.8L2023.1 1520.8M2055.5 1509.8L2044.7 1520.8M2055.5 1509.8L2066.4 1520.8M2098.9 1509.8L2109.8 1520.8M1968.9 1532.0L1979.7 1520.8M1990.5 1532.0L2001.4 1520.8M2033.9 1532.0L2023.1 1520.8" stroke="#00E0E0" stroke-width="8" fill="none"/>
<path d="M1770.8 1476.7 L1773.8 1470.7 L1833.3 1470.7 L1833.3 1446.9 L1857.1 1470.7 L1916.7 1464.8 L1952.4 1470.7 L2000.0 1449.9 L2023.8 1470.7 L2125.0 1476.7 L2119.0 1512.4 L2071.4 1530.2 L2000.0 1548.0 L1976.2 1548.0 L1952.4 1530.2 L1910.7 1524.3 L1797.6 1524.3 L1770.8 1512.4Z" stroke="#00E0E0" stroke-width="6" fill="none" stroke-linejoin="round"/>
<path d="M1795.5 1595.5L1784.7 1606.7M1817.2 1595.5L1828.0 1606.7M1860.5 1595.5L1849.7 1606.7M1882.2 1595.5L1871.4 1606.7M1903.8 1595.5L1893.0 1606.7M1925.5 1595.5L1914.7 1606.7M1925.5 1595.5L1936.4 1606.7M1947.2 1595.5L1936.4 1606.7M1947.2 1595.5L1958.1 1606.7M1968.9 1595.5L1958.1 1606.7M1990.5 1595.5L1979.7 1606.7M1795.5 1617.7L1784.7 1606.7M1795.5 1617.7L1784.7 1628.9M1795.5 1617.7L1806.4 1628.9M1817.2 1617.7L1806.4 1606.7M1817.2 1617.7L1806.4 1628.9M1817.2 1617.7L1828.0 1628.9M1838.8 1617.7L1849.7 1606.7M1838.8 1617.7L1849.7 1628.9M1860.5 1617.7L1849.7 1606.7M1860.5 1617.7L1871.4 1606.7M1860.5 1617.7L1871.4 1628.9M1882.2 1617.7L1871.4 1606.7M1903.8 1617.7L1914.7 1606.7M1925.5 1617.7L1936.4 1606.7M1925.5 1617.7L1914.7 1628.9M1968.9 1617.7L1958.1 1628.9M1990.5 1617.7L2001.4 1606.7M2012.2 1617.7L2023.1 1606.7M2012.2 1617.7L2001.4 1628.9M2033.9 1617.7L2023.1 1628.9M2077.2 1617.7L2088.1 1628.9M2098.9 1617.7L2088.1 1606.7M2098.9 1617.7L2088.1 1628.9M1795.5 1639.9L1806.4 1628.9M1795.5 1639.9L1784.7 1650.9M1817.2 1639.9L1806.4 1628.9M1838.8 1639.9L1828.0 1628.9M1838.8 1639.9L1849.7 1628.9M1838.8 1639.9L1849.7 1650.9M1860.5 1639.9L1849.7 1628.9M1860.5 1639.9L1849.7 1650.9M1860.5 1639.9L1871.4 1650.9M1882.2 1639.9L1871.4 1628.9M1882.2 1639.9L1893.0 1628.9M1903.8 1639.9L1893.0 1628.9M1903.8 1639.9L1914.7 1650.9M1925.5 1639.9L1936.4 1650.9M1968.9 1639.9L1958.1 1628.9M1990.5 1639.9L2001.4 1650.9M2012.2 1639.9L2001.4 1628.9M2012.2 1639.9L2023.1 1628.9M2033.9 1639.9L2023.1 1628.9M2055.5 1639.9L2066.4 1628.9M2055.5 1639.9L2044.7 1650.9M2098.9 1639.9L2088.1 1628.9M2098.9 1639.9L2088.1 1650.9M2098.9 1639.9L2109.8 1650.9" stroke="#006A6E" stroke-width="9" fill="none"/>
<path d="M1990.5 1595.5L2001.4 1606.7M1795.5 1617.7L1806.4 1606.7M1817.2 1617.7L1828.0 1606.7M1882.2 1617.7L1893.0 1628.9M1903.8 1617.7L1893.0 1628.9M1903.8 1617.7L1914.7 1628.9M1925.5 1617.7L1914.7 1606.7M1947.2 1617.7L1936.4 1606.7M1947.2 1617.7L1958.1 1606.7M1947.2 1617.7L1958.1 1628.9M1968.9 1617.7L1958.1 1606.7M1968.9 1617.7L1979.7 1606.7M1968.9 1617.7L1979.7 1628.9M1990.5 1617.7L1979.7 1628.9M1990.5 1617.7L2001.4 1628.9M2012.2 1617.7L2001.4 1606.7M2012.2 1617.7L2023.1 1628.9M2033.9 1617.7L2023.1 1606.7M2055.5 1617.7L2044.7 1606.7M2055.5 1617.7L2066.4 1628.9M2077.2 1617.7L2066.4 1628.9M1795.5 1639.9L1784.7 1628.9M1795.5 1639.9L1806.4 1650.9M1817.2 1639.9L1828.0 1628.9M1817.2 1639.9L1806.4 1650.9M1817.2 1639.9L1828.0 1650.9M1838.8 1639.9L1828.0 1650.9M1860.5 1639.9L1871.4 1628.9M1882.2 1639.9L1893.0 1650.9M1925.5 1639.9L1914.7 1628.9M1947.2 1639.9L1936.4 1628.9M1990.5 1639.9L1979.7 1628.9M2012.2 1639.9L2023.1 1650.9M2033.9 1639.9L2044.7 1650.9M2055.5 1639.9L2044.7 1628.9M2055.5 1639.9L2066.4 1650.9" stroke="#00A0A4" stroke-width="9" fill="none"/>
<path d="M1784.7 1606.7L1806.4 1606.7M1806.4 1606.7L1828.0 1606.7M1806.4 1606.7L1806.4 1628.9M1828.0 1606.7L1849.7 1606.7M1849.7 1606.7L1871.4 1606.7M1849.7 1606.7L1849.7 1628.9M1871.4 1606.7L1871.4 1628.9M1893.0 1606.7L1871.4 1628.9M1936.4 1606.7L1958.1 1606.7M1936.4 1606.7L1914.7 1628.9M1936.4 1606.7L1936.4 1628.9M1979.7 1606.7L2001.4 1606.7M2001.4 1606.7L2001.4 1628.9M2001.4 1606.7L2023.1 1628.9M2023.1 1606.7L2044.7 1606.7M2023.1 1606.7L2023.1 1628.9M2044.7 1606.7L2023.1 1628.9M2066.4 1606.7L2088.1 1628.9M2109.8 1606.7L2088.1 1628.9M2109.8 1606.7L2109.8 1628.9M1784.7 1628.9L1806.4 1628.9M1871.4 1628.9L1871.4 1650.9M1871.4 1628.9L1893.0 1650.9M1893.0 1628.9L1914.7 1628.9M1893.0 1628.9L1893.0 1650.9M1893.0 1628.9L1914.7 1650.9M1914.7 1628.9L1893.0 1650.9M1936.4 1628.9L1958.1 1628.9M1979.7 1628.9L1979.7 1650.9M2001.4 1628.9L1979.7 1650.9M2001.4 1628.9L2001.4 1650.9M2001.4 1628.9L2023.1 1650.9M2023.1 1628.9L2001.4 1650.9M2023.1 1628.9L2023.1 1650.9M2044.7 1628.9L2023.1 1650.9M2066.4 1628.9L2044.7 1650.9M1806.4 1650.9L1828.0 1650.9M1914.7 1650.9L1936.4 1650.9M1936.4 1650.9L1958.1 1650.9M1958.1 1650.9L1979.7 1650.9M1979.7 1650.9L2001.4 1650.9M2044.7 1650.9L2066.4 1650.9M1795.5 1595.5L1817.2 1617.7M1817.2 1595.5L1838.8 1617.7M1860.5 1595.5L1838.8 1617.7M1882.2 1595.5L1882.2 1617.7M1903.8 1595.5L1882.2 1617.7M1925.5 1595.5L1925.5 1617.7M1968.9 1595.5L1947.2 1617.7M1968.9 1595.5L1990.5 1617.7M1990.5 1595.5L1968.9 1617.7M2012.2 1595.5L2012.2 1617.7M1795.5 1617.7L1795.5 1639.9M1795.5 1617.7L1817.2 1639.9M1817.2 1617.7L1817.2 1639.9M1817.2 1617.7L1838.8 1639.9M1838.8 1617.7L1838.8 1639.9M1860.5 1617.7L1838.8 1639.9M1860.5 1617.7L1860.5 1639.9M1882.2 1617.7L1860.5 1639.9M1882.2 1617.7L1882.2 1639.9M1903.8 1617.7L1925.5 1617.7M1925.5 1617.7L1903.8 1639.9M1925.5 1617.7L1925.5 1639.9M1947.2 1617.7L1968.9 1617.7M1947.2 1617.7L1925.5 1639.9M1947.2 1617.7L1947.2 1639.9M1990.5 1617.7L1990.5 1639.9M2012.2 1617.7L1990.5 1639.9M2033.9 1617.7L2055.5 1617.7M2055.5 1617.7L2077.2 1639.9M2098.9 1617.7L2077.2 1639.9M1838.8 1639.9L1860.5 1639.9M1903.8 1639.9L1925.5 1639.9M1925.5 1639.9L1947.2 1639.9M1968.9 1639.9L1990.5 1639.9M2077.2 1639.9L2098.9 1639.9" stroke="#00E0E0" stroke-width="6.5" fill="none"/>
<path d="M1795.5 1595.5L1806.4 1606.7M1817.2 1595.5L1806.4 1606.7M1838.8 1595.5L1828.0 1606.7M1838.8 1595.5L1849.7 1606.7M1860.5 1595.5L1871.4 1606.7M1882.2 1595.5L1893.0 1606.7M1903.8 1595.5L1914.7 1606.7M1968.9 1595.5L1979.7 1606.7M2012.2 1595.5L2001.4 1606.7M2012.2 1595.5L2023.1 1606.7M1838.8 1617.7L1828.0 1606.7M1838.8 1617.7L1828.0 1628.9M1860.5 1617.7L1849.7 1628.9M1882.2 1617.7L1893.0 1606.7M1882.2 1617.7L1871.4 1628.9M1903.8 1617.7L1893.0 1606.7M1925.5 1617.7L1936.4 1628.9M1947.2 1617.7L1936.4 1628.9M1990.5 1617.7L1979.7 1606.7M2033.9 1617.7L2044.7 1606.7M2033.9 1617.7L2044.7 1628.9M2055.5 1617.7L2066.4 1606.7M2055.5 1617.7L2044.7 1628.9M2077.2 1617.7L2066.4 1606.7M2077.2 1617.7L2088.1 1606.7M2098.9 1617.7L2109.8 1606.7M2098.9 1617.7L2109.8 1628.9M1882.2 1639.9L1871.4 1650.9M1903.8 1639.9L1914.7 1628.9M1903.8 1639.9L1893.0 1650.9M1925.5 1639.9L1936.4 1628.9M1925.5 1639.9L1914.7 1650.9M1947.2 1639.9L1958.1 1628.9M1947.2 1639.9L1936.4 1650.9M1947.2 1639.9L1958.1 1650.9M1968.9 1639.9L1979.7 1628.9M1968.9 1639.9L1958.1 1650.9M1968.9 1639.9L1979.7 1650.9M1990.5 1639.9L2001.4 1628.9M1990.5 1639.9L1979.7 1650.9M2012.2 1639.9L2001.4 1650.9M2033.9 1639.9L2044.7 1628.9M2033.9 1639.9L2023.1 1650.9M2077.2 1639.9L2066.4 1628.9M2077.2 1639.9L2088.1 1628.9M2077.2 1639.9L2066.4 1650.9M2077.2 1639.9L2088.1 1650.9M2098.9 1639.9L2109.8 1628.9" stroke="#00E0E0" stroke-width="8" fill="none"/>
<path d="M1770.8 1592.7 L1839.3 1592.7 L1916.7 1583.8 L1940.5 1580.8 L2011.9 1583.8 L2023.8 1601.7 L2107.1 1604.6 L2151.8 1577.9 L2119.0 1619.5 L2113.1 1649.3 L2071.4 1661.2 L1928.6 1661.2 L1797.6 1661.2 L1779.8 1631.4Z" stroke="#00E0E0" stroke-width="6" fill="none" stroke-linejoin="round"/>
<circle cx="1784.7" cy="1476.5" r="4.6" fill="#FF8000"/>
<circle cx="1806.4" cy="1476.5" r="4.6" fill="#FF8000"/>
<circle cx="1828.0" cy="1476.5" r="4.6" fill="#FF8000"/>
<circle cx="1849.7" cy="1476.5" r="4.6" fill="#FF8000"/>
<circle cx="1871.4" cy="1476.5" r="4.6" fill="#FF8000"/>
<circle cx="1893.0" cy="1476.5" r="4.6" fill="#FF8000"/>
<circle cx="1914.7" cy="1476.5" r="4.6" fill="#FF8000"/>
<circle cx="1936.4" cy="1476.5" r="4.6" fill="#FF8000"/>
<circle cx="1958.1" cy="1476.5" r="4.6" fill="#FF8000"/>
<circle cx="1979.7" cy="1476.5" r="4.6" fill="#FF8000"/>
<circle cx="2001.4" cy="1476.5" r="4.6" fill="#FF8000"/>
<circle cx="2023.1" cy="1476.5" r="4.6" fill="#FF8000"/>
<circle cx="2044.7" cy="1476.5" r="4.6" fill="#FF8000"/>
<circle cx="2066.4" cy="1476.5" r="4.6" fill="#FF8000"/>
<circle cx="2088.1" cy="1476.5" r="4.6" fill="#FF8000"/>
<circle cx="2109.8" cy="1476.5" r="4.6" fill="#FF8000"/>
<circle cx="1784.7" cy="1498.7" r="4.6" fill="#FF8000"/>
<circle cx="1806.4" cy="1498.7" r="4.6" fill="#FF8000"/>
<circle cx="1828.0" cy="1498.7" r="4.6" fill="#FF8000"/>
<circle cx="1849.7" cy="1498.7" r="4.6" fill="#FF8000"/>
<circle cx="1871.4" cy="1498.7" r="4.6" fill="#FF8000"/>
<circle cx="1893.0" cy="1498.7" r="4.6" fill="#FF8000"/>
<circle cx="1914.7" cy="1498.7" r="4.6" fill="#FF8000"/>
<circle cx="1936.4" cy="1498.7" r="4.6" fill="#FF8000"/>
<circle cx="1958.1" cy="1498.7" r="4.6" fill="#FF8000"/>
<circle cx="1979.7" cy="1498.7" r="4.6" fill="#FF8000"/>
<circle cx="2001.4" cy="1498.7" r="4.6" fill="#FF8000"/>
<circle cx="2023.1" cy="1498.7" r="4.6" fill="#FF8000"/>
<circle cx="2044.7" cy="1498.7" r="4.6" fill="#FF8000"/>
<circle cx="2066.4" cy="1498.7" r="4.6" fill="#FF8000"/>
<circle cx="2088.1" cy="1498.7" r="4.6" fill="#FF8000"/>
<circle cx="2109.8" cy="1498.7" r="4.6" fill="#FF8000"/>
<circle cx="1784.7" cy="1520.8" r="4.6" fill="#FF8000"/>
<circle cx="1806.4" cy="1520.8" r="4.6" fill="#FF8000"/>
<circle cx="1828.0" cy="1520.8" r="4.6" fill="#FF8000"/>
<circle cx="1849.7" cy="1520.8" r="4.6" fill="#FF8000"/>
<circle cx="1871.4" cy="1520.8" r="4.6" fill="#FF8000"/>
<circle cx="1893.0" cy="1520.8" r="4.6" fill="#FF8000"/>
<circle cx="1914.7" cy="1520.8" r="4.6" fill="#FF8000"/>
<circle cx="1936.4" cy="1520.8" r="4.6" fill="#FF8000"/>
<circle cx="1958.1" cy="1520.8" r="4.6" fill="#FF8000"/>
<circle cx="1979.7" cy="1520.8" r="4.6" fill="#FF8000"/>
<circle cx="2001.4" cy="1520.8" r="4.6" fill="#FF8000"/>
<circle cx="2023.1" cy="1520.8" r="4.6" fill="#FF8000"/>
<circle cx="2044.7" cy="1520.8" r="4.6" fill="#FF8000"/>
<circle cx="2066.4" cy="1520.8" r="4.6" fill="#FF8000"/>
<circle cx="2088.1" cy="1520.8" r="4.6" fill="#FF8000"/>
<circle cx="2109.8" cy="1520.8" r="4.6" fill="#FF8000"/>
<circle cx="1784.7" cy="1606.7" r="4.6" fill="#FF8000"/>
<circle cx="1806.4" cy="1606.7" r="4.6" fill="#FF8000"/>
<circle cx="1828.0" cy="1606.7" r="4.6" fill="#FF8000"/>
<circle cx="1849.7" cy="1606.7" r="4.6" fill="#FF8000"/>
<circle cx="1871.4" cy="1606.7" r="4.6" fill="#FF8000"/>
<circle cx="1893.0" cy="1606.7" r="4.6" fill="#FF8000"/>
<circle cx="1914.7" cy="1606.7" r="4.6" fill="#FF8000"/>
<circle cx="1936.4" cy="1606.7" r="4.6" fill="#FF8000"/>
<circle cx="1958.1" cy="1606.7" r="4.6" fill="#FF8000"/>
<circle cx="1979.7" cy="1606.7" r="4.6" fill="#FF8000"/>
<circle cx="2001.4" cy="1606.7" r="4.6" fill="#FF8000"/>
<circle cx="2023.1" cy="1606.7" r="4.6" fill="#FF8000"/>
<circle cx="2044.7" cy="1606.7" r="4.6" fill="#FF8000"/>
<circle cx="2066.4" cy="1606.7" r="4.6" fill="#FF8000"/>
<circle cx="2088.1" cy="1606.7" r="4.6" fill="#FF8000"/>
<circle cx="2109.8" cy="1606.7" r="4.6" fill="#FF8000"/>
<circle cx="1784.7" cy="1628.9" r="4.6" fill="#FF8000"/>
<circle cx="1806.4" cy="1628.9" r="4.6" fill="#FF8000"/>
<circle cx="1828.0" cy="1628.9" r="4.6" fill="#FF8000"/>
<circle cx="1849.7" cy="1628.9" r="4.6" fill="#FF8000"/>
<circle cx="1871.4" cy="1628.9" r="4.6" fill="#FF8000"/>
<circle cx="1893.0" cy="1628.9" r="4.6" fill="#FF8000"/>
<circle cx="1914.7" cy="1628.9" r="4.6" fill="#FF8000"/>
<circle cx="1936.4" cy="1628.9" r="4.6" fill="#FF8000"/>
<circle cx="1958.1" cy="1628.9" r="4.6" fill="#FF8000"/>
<circle cx="1979.7" cy="1628.9" r="4.6" fill="#FF8000"/>
<circle cx="2001.4" cy="1628.9" r="4.6" fill="#FF8000"/>
<circle cx="2023.1" cy="1628.9" r="4.6" fill="#FF8000"/>
<circle cx="2044.7" cy="1628.9" r="4.6" fill="#FF8000"/>
<circle cx="2066.4" cy="1628.9" r="4.6" fill="#FF8000"/>
<circle cx="2088.1" cy="1628.9" r="4.6" fill="#FF8000"/>
<circle cx="2109.8" cy="1628.9" r="4.6" fill="#FF8000"/>
<circle cx="1784.7" cy="1650.9" r="4.6" fill="#FF8000"/>
<circle cx="1806.4" cy="1650.9" r="4.6" fill="#FF8000"/>
<circle cx="1828.0" cy="1650.9" r="4.6" fill="#FF8000"/>
<circle cx="1849.7" cy="1650.9" r="4.6" fill="#FF8000"/>
<circle cx="1871.4" cy="1650.9" r="4.6" fill="#FF8000"/>
<circle cx="1893.0" cy="1650.9" r="4.6" fill="#FF8000"/>
<circle cx="1914.7" cy="1650.9" r="4.6" fill="#FF8000"/>
<circle cx="1936.4" cy="1650.9" r="4.6" fill="#FF8000"/>
<circle cx="1958.1" cy="1650.9" r="4.6" fill="#FF8000"/>
<circle cx="1979.7" cy="1650.9" r="4.6" fill="#FF8000"/>
<circle cx="2001.4" cy="1650.9" r="4.6" fill="#FF8000"/>
<circle cx="2023.1" cy="1650.9" r="4.6" fill="#FF8000"/>
<circle cx="2044.7" cy="1650.9" r="4.6" fill="#FF8000"/>
<circle cx="2066.4" cy="1650.9" r="4.6" fill="#FF8000"/>
<circle cx="2088.1" cy="1650.9" r="4.6" fill="#FF8000"/>
<circle cx="2109.8" cy="1650.9" r="4.6" fill="#FF8000"/>
<ellipse cx="1838.8" cy="1465.0" rx="4.2" ry="3.7" fill="#FF8000"/><rect x="1837.2" y="1463.5" width="3.2" height="3" fill="#3a4050"/>
<ellipse cx="1968.9" cy="1465.0" rx="4.2" ry="3.7" fill="#FF8000"/><rect x="1967.3" y="1463.5" width="3.2" height="3" fill="#3a4050"/>
<ellipse cx="1990.5" cy="1465.0" rx="4.2" ry="3.7" fill="#FF8000"/><rect x="1988.9" y="1463.5" width="3.2" height="3" fill="#3a4050"/>
<ellipse cx="2012.2" cy="1465.0" rx="4.2" ry="3.7" fill="#FF8000"/><rect x="2010.6" y="1463.5" width="3.2" height="3" fill="#3a4050"/>
<ellipse cx="1795.5" cy="1487.5" rx="4.2" ry="3.7" fill="#FF8000"/><rect x="1793.9" y="1486.0" width="3.2" height="3" fill="#3a4050"/>
<ellipse cx="1817.2" cy="1487.5" rx="4.2" ry="3.7" fill="#FF8000"/><rect x="1815.6" y="1486.0" width="3.2" height="3" fill="#3a4050"/>
<ellipse cx="1838.8" cy="1487.5" rx="4.2" ry="3.7" fill="#FF8000"/><rect x="1837.2" y="1486.0" width="3.2" height="3" fill="#3a4050"/>
<ellipse cx="1860.5" cy="1487.5" rx="4.2" ry="3.7" fill="#FF8000"/><rect x="1858.9" y="1486.0" width="3.2" height="3" fill="#3a4050"/>
<ellipse cx="1882.2" cy="1487.5" rx="4.2" ry="3.7" fill="#FF8000"/><rect x="1880.6" y="1486.0" width="3.2" height="3" fill="#3a4050"/>
<ellipse cx="1903.8" cy="1487.5" rx="4.2" ry="3.7" fill="#FF8000"/><rect x="1902.2" y="1486.0" width="3.2" height="3" fill="#3a4050"/>
<ellipse cx="1925.5" cy="1487.5" rx="4.2" ry="3.7" fill="#FF8000"/><rect x="1923.9" y="1486.0" width="3.2" height="3" fill="#3a4050"/>
<ellipse cx="1947.2" cy="1487.5" rx="4.2" ry="3.7" fill="#FF8000"/><rect x="1945.6" y="1486.0" width="3.2" height="3" fill="#3a4050"/>
<ellipse cx="1968.9" cy="1487.5" rx="4.2" ry="3.7" fill="#FF8000"/><rect x="1967.3" y="1486.0" width="3.2" height="3" fill="#3a4050"/>
<ellipse cx="1990.5" cy="1487.5" rx="4.2" ry="3.7" fill="#FF8000"/><rect x="1988.9" y="1486.0" width="3.2" height="3" fill="#3a4050"/>
<ellipse cx="2012.2" cy="1487.5" rx="4.2" ry="3.7" fill="#FF8000"/><rect x="2010.6" y="1486.0" width="3.2" height="3" fill="#3a4050"/>
<ellipse cx="2033.9" cy="1487.5" rx="4.2" ry="3.7" fill="#FF8000"/><rect x="2032.3" y="1486.0" width="3.2" height="3" fill="#3a4050"/>
<ellipse cx="2055.5" cy="1487.5" rx="4.2" ry="3.7" fill="#FF8000"/><rect x="2053.9" y="1486.0" width="3.2" height="3" fill="#3a4050"/>
<ellipse cx="2077.2" cy="1487.5" rx="4.2" ry="3.7" fill="#FF8000"/><rect x="2075.6" y="1486.0" width="3.2" height="3" fill="#3a4050"/>
<ellipse cx="2098.9" cy="1487.5" rx="4.2" ry="3.7" fill="#FF8000"/><rect x="2097.3" y="1486.0" width="3.2" height="3" fill="#3a4050"/>
<ellipse cx="1795.5" cy="1509.8" rx="4.2" ry="3.7" fill="#FF8000"/><rect x="1793.9" y="1508.3" width="3.2" height="3" fill="#3a4050"/>
<ellipse cx="1817.2" cy="1509.8" rx="4.2" ry="3.7" fill="#FF8000"/><rect x="1815.6" y="1508.3" width="3.2" height="3" fill="#3a4050"/>
<ellipse cx="1838.8" cy="1509.8" rx="4.2" ry="3.7" fill="#FF8000"/><rect x="1837.2" y="1508.3" width="3.2" height="3" fill="#3a4050"/>
<ellipse cx="1860.5" cy="1509.8" rx="4.2" ry="3.7" fill="#FF8000"/><rect x="1858.9" y="1508.3" width="3.2" height="3" fill="#3a4050"/>
<ellipse cx="1882.2" cy="1509.8" rx="4.2" ry="3.7" fill="#FF8000"/><rect x="1880.6" y="1508.3" width="3.2" height="3" fill="#3a4050"/>
<ellipse cx="1903.8" cy="1509.8" rx="4.2" ry="3.7" fill="#FF8000"/><rect x="1902.2" y="1508.3" width="3.2" height="3" fill="#3a4050"/>
<ellipse cx="1925.5" cy="1509.8" rx="4.2" ry="3.7" fill="#FF8000"/><rect x="1923.9" y="1508.3" width="3.2" height="3" fill="#3a4050"/>
<ellipse cx="1947.2" cy="1509.8" rx="4.2" ry="3.7" fill="#FF8000"/><rect x="1945.6" y="1508.3" width="3.2" height="3" fill="#3a4050"/>
<ellipse cx="1968.9" cy="1509.8" rx="4.2" ry="3.7" fill="#FF8000"/><rect x="1967.3" y="1508.3" width="3.2" height="3" fill="#3a4050"/>
<ellipse cx="1990.5" cy="1509.8" rx="4.2" ry="3.7" fill="#FF8000"/><rect x="1988.9" y="1508.3" width="3.2" height="3" fill="#3a4050"/>
<ellipse cx="2012.2" cy="1509.8" rx="4.2" ry="3.7" fill="#FF8000"/><rect x="2010.6" y="1508.3" width="3.2" height="3" fill="#3a4050"/>
<ellipse cx="2033.9" cy="1509.8" rx="4.2" ry="3.7" fill="#FF8000"/><rect x="2032.3" y="1508.3" width="3.2" height="3" fill="#3a4050"/>
<ellipse cx="2055.5" cy="1509.8" rx="4.2" ry="3.7" fill="#FF8000"/><rect x="2053.9" y="1508.3" width="3.2" height="3" fill="#3a4050"/>
<ellipse cx="2077.2" cy="1509.8" rx="4.2" ry="3.7" fill="#FF8000"/><rect x="2075.6" y="1508.3" width="3.2" height="3" fill="#3a4050"/>
<ellipse cx="2098.9" cy="1509.8" rx="4.2" ry="3.7" fill="#FF8000"/><rect x="2097.3" y="1508.3" width="3.2" height="3" fill="#3a4050"/>
<ellipse cx="1968.9" cy="1532.0" rx="4.2" ry="3.7" fill="#FF8000"/><rect x="1967.3" y="1530.5" width="3.2" height="3" fill="#3a4050"/>
<ellipse cx="1990.5" cy="1532.0" rx="4.2" ry="3.7" fill="#FF8000"/><rect x="1988.9" y="1530.5" width="3.2" height="3" fill="#3a4050"/>
<ellipse cx="2012.2" cy="1532.0" rx="4.2" ry="3.7" fill="#FF8000"/><rect x="2010.6" y="1530.5" width="3.2" height="3" fill="#3a4050"/>
<ellipse cx="2033.9" cy="1532.0" rx="4.2" ry="3.7" fill="#FF8000"/><rect x="2032.3" y="1530.5" width="3.2" height="3" fill="#3a4050"/>
<ellipse cx="2055.5" cy="1532.0" rx="4.2" ry="3.7" fill="#FF8000"/><rect x="2053.9" y="1530.5" width="3.2" height="3" fill="#3a4050"/>
<ellipse cx="1795.5" cy="1595.5" rx="4.2" ry="3.7" fill="#FF8000"/><rect x="1793.9" y="1594.0" width="3.2" height="3" fill="#3a4050"/>
<ellipse cx="1817.2" cy="1595.5" rx="4.2" ry="3.7" fill="#FF8000"/><rect x="1815.6" y="1594.0" width="3.2" height="3" fill="#3a4050"/>
<ellipse cx="1838.8" cy="1595.5" rx="4.2" ry="3.7" fill="#FF8000"/><rect x="1837.2" y="1594.0" width="3.2" height="3" fill="#3a4050"/>
<ellipse cx="1860.5" cy="1595.5" rx="4.2" ry="3.7" fill="#FF8000"/><rect x="1858.9" y="1594.0" width="3.2" height="3" fill="#3a4050"/>
<ellipse cx="1882.2" cy="1595.5" rx="4.2" ry="3.7" fill="#FF8000"/><rect x="1880.6" y="1594.0" width="3.2" height="3" fill="#3a4050"/>
<ellipse cx="1903.8" cy="1595.5" rx="4.2" ry="3.7" fill="#FF8000"/><rect x="1902.2" y="1594.0" width="3.2" height="3" fill="#3a4050"/>
<ellipse cx="1925.5" cy="1595.5" rx="4.2" ry="3.7" fill="#FF8000"/><rect x="1923.9" y="1594.0" width="3.2" height="3" fill="#3a4050"/>
<ellipse cx="1947.2" cy="1595.5" rx="4.2" ry="3.7" fill="#FF8000"/><rect x="1945.6" y="1594.0" width="3.2" height="3" fill="#3a4050"/>
<ellipse cx="1968.9" cy="1595.5" rx="4.2" ry="3.7" fill="#FF8000"/><rect x="1967.3" y="1594.0" width="3.2" height="3" fill="#3a4050"/>
<ellipse cx="1990.5" cy="1595.5" rx="4.2" ry="3.7" fill="#FF8000"/><rect x="1988.9" y="1594.0" width="3.2" height="3" fill="#3a4050"/>
<ellipse cx="2012.2" cy="1595.5" rx="4.2" ry="3.7" fill="#FF8000"/><rect x="2010.6" y="1594.0" width="3.2" height="3" fill="#3a4050"/>
<ellipse cx="1795.5" cy="1617.7" rx="4.2" ry="3.7" fill="#FF8000"/><rect x="1793.9" y="1616.2" width="3.2" height="3" fill="#3a4050"/>
<ellipse cx="1817.2" cy="1617.7" rx="4.2" ry="3.7" fill="#FF8000"/><rect x="1815.6" y="1616.2" width="3.2" height="3" fill="#3a4050"/>
<ellipse cx="1838.8" cy="1617.7" rx="4.2" ry="3.7" fill="#FF8000"/><rect x="1837.2" y="1616.2" width="3.2" height="3" fill="#3a4050"/>
<ellipse cx="1860.5" cy="1617.7" rx="4.2" ry="3.7" fill="#FF8000"/><rect x="1858.9" y="1616.2" width="3.2" height="3" fill="#3a4050"/>
<ellipse cx="1882.2" cy="1617.7" rx="4.2" ry="3.7" fill="#FF8000"/><rect x="1880.6" y="1616.2" width="3.2" height="3" fill="#3a4050"/>
<ellipse cx="1903.8" cy="1617.7" rx="4.2" ry="3.7" fill="#FF8000"/><rect x="1902.2" y="1616.2" width="3.2" height="3" fill="#3a4050"/>
<ellipse cx="1925.5" cy="1617.7" rx="4.2" ry="3.7" fill="#FF8000"/><rect x="1923.9" y="1616.2" width="3.2" height="3" fill="#3a4050"/>
<ellipse cx="1947.2" cy="1617.7" rx="4.2" ry="3.7" fill="#FF8000"/><rect x="1945.6" y="1616.2" width="3.2" height="3" fill="#3a4050"/>
<ellipse cx="1968.9" cy="1617.7" rx="4.2" ry="3.7" fill="#FF8000"/><rect x="1967.3" y="1616.2" width="3.2" height="3" fill="#3a4050"/>
<ellipse cx="1990.5" cy="1617.7" rx="4.2" ry="3.7" fill="#FF8000"/><rect x="1988.9" y="1616.2" width="3.2" height="3" fill="#3a4050"/>
<ellipse cx="2012.2" cy="1617.7" rx="4.2" ry="3.7" fill="#FF8000"/><rect x="2010.6" y="1616.2" width="3.2" height="3" fill="#3a4050"/>
<ellipse cx="2033.9" cy="1617.7" rx="4.2" ry="3.7" fill="#FF8000"/><rect x="2032.3" y="1616.2" width="3.2" height="3" fill="#3a4050"/>
<ellipse cx="2055.5" cy="1617.7" rx="4.2" ry="3.7" fill="#FF8000"/><rect x="2053.9" y="1616.2" width="3.2" height="3" fill="#3a4050"/>
<ellipse cx="2077.2" cy="1617.7" rx="4.2" ry="3.7" fill="#FF8000"/><rect x="2075.6" y="1616.2" width="3.2" height="3" fill="#3a4050"/>
<ellipse cx="2098.9" cy="1617.7" rx="4.2" ry="3.7" fill="#FF8000"/><rect x="2097.3" y="1616.2" width="3.2" height="3" fill="#3a4050"/>
<ellipse cx="1795.5" cy="1639.9" rx="4.2" ry="3.7" fill="#FF8000"/><rect x="1793.9" y="1638.4" width="3.2" height="3" fill="#3a4050"/>
<ellipse cx="1817.2" cy="1639.9" rx="4.2" ry="3.7" fill="#FF8000"/><rect x="1815.6" y="1638.4" width="3.2" height="3" fill="#3a4050"/>
<ellipse cx="1838.8" cy="1639.9" rx="4.2" ry="3.7" fill="#FF8000"/><rect x="1837.2" y="1638.4" width="3.2" height="3" fill="#3a4050"/>
<ellipse cx="1860.5" cy="1639.9" rx="4.2" ry="3.7" fill="#FF8000"/><rect x="1858.9" y="1638.4" width="3.2" height="3" fill="#3a4050"/>
<ellipse cx="1882.2" cy="1639.9" rx="4.2" ry="3.7" fill="#FF8000"/><rect x="1880.6" y="1638.4" width="3.2" height="3" fill="#3a4050"/>
<ellipse cx="1903.8" cy="1639.9" rx="4.2" ry="3.7" fill="#FF8000"/><rect x="1902.2" y="1638.4" width="3.2" height="3" fill="#3a4050"/>
<ellipse cx="1925.5" cy="1639.9" rx="4.2" ry="3.7" fill="#FF8000"/><rect x="1923.9" y="1638.4" width="3.2" height="3" fill="#3a4050"/>
<ellipse cx="1947.2" cy="1639.9" rx="4.2" ry="3.7" fill="#FF8000"/><rect x="1945.6" y="1638.4" width="3.2" height="3" fill="#3a4050"/>
<ellipse cx="1968.9" cy="1639.9" rx="4.2" ry="3.7" fill="#FF8000"/><rect x="1967.3" y="1638.4" width="3.2" height="3" fill="#3a4050"/>
<ellipse cx="1990.5" cy="1639.9" rx="4.2" ry="3.7" fill="#FF8000"/><rect x="1988.9" y="1638.4" width="3.2" height="3" fill="#3a4050"/>
<ellipse cx="2012.2" cy="1639.9" rx="4.2" ry="3.7" fill="#FF8000"/><rect x="2010.6" y="1638.4" width="3.2" height="3" fill="#3a4050"/>
<ellipse cx="2033.9" cy="1639.9" rx="4.2" ry="3.7" fill="#FF8000"/><rect x="2032.3" y="1638.4" width="3.2" height="3" fill="#3a4050"/>
<ellipse cx="2055.5" cy="1639.9" rx="4.2" ry="3.7" fill="#FF8000"/><rect x="2053.9" y="1638.4" width="3.2" height="3" fill="#3a4050"/>
<ellipse cx="2077.2" cy="1639.9" rx="4.2" ry="3.7" fill="#FF8000"/><rect x="2075.6" y="1638.4" width="3.2" height="3" fill="#3a4050"/>
<ellipse cx="2098.9" cy="1639.9" rx="4.2" ry="3.7" fill="#FF8000"/><rect x="2097.3" y="1638.4" width="3.2" height="3" fill="#3a4050"/>
<ellipse cx="1891.6" cy="1436.4" rx="4.2" ry="3.7" fill="#FF8000"/><rect x="1890.0" y="1434.9" width="3.2" height="3" fill="#3a4050"/>
<ellipse cx="2151.8" cy="1577.9" rx="4.2" ry="3.7" fill="#FF8000"/><rect x="2150.2" y="1576.4" width="3.2" height="3" fill="#3a4050"/>
<rect x="1710.5" y="1480.6" width="24.0" height="14.2" fill="#00A0A4"/>
<rect x="1710.5" y="1507.3" width="24.0" height="14.2" fill="#00A0A4"/>
<path d="M1710.5 1488.1L1734.5 1514.0M1710.5 1514.0L1734.5 1488.1" stroke="#00E0E0" stroke-width="8" fill="none"/>
<rect x="1704.0" y="1479.6" width="13" height="14.2" rx="3" fill="#FF8000"/>
<rect x="1704.0" y="1508.3" width="13" height="14.2" rx="3" fill="#FF8000"/>
<rect x="1704.5" y="1484.1" width="12.0" height="33.9" fill="none" stroke="#FFFF00" stroke-width="1"/>
<rect x="1728.0" y="1479.6" width="13" height="14.2" rx="3" fill="#FF8000"/>
<rect x="1728.0" y="1508.3" width="13" height="14.2" rx="3" fill="#FF8000"/>
<rect x="1728.5" y="1484.1" width="12.0" height="33.9" fill="none" stroke="#FFFF00" stroke-width="1"/>
<ellipse cx="1679.8" cy="1516.5" rx="4.2" ry="3.7" fill="#FF8000"/><rect x="1678.2" y="1515.0" width="3.2" height="3" fill="#3a4050"/>
<rect x="1861.9" y="1717.0" width="31.8" height="12.2" fill="#00A0A4"/>
<rect x="1861.9" y="1739.8" width="31.8" height="12.2" fill="#00A0A4"/>
<rect x="1893.7" y="1717.0" width="31.8" height="12.2" fill="#00A0A4"/>
<rect x="1893.7" y="1739.8" width="31.8" height="12.2" fill="#00A0A4"/>
<path d="M1766.5 1723.3L1798.3 1745.7M1766.5 1745.7L1798.3 1723.3" stroke="#00E0E0" stroke-width="8" fill="none"/>
<path d="M1798.3 1723.3L1830.1 1745.7M1798.3 1745.7L1830.1 1723.3" stroke="#00E0E0" stroke-width="8" fill="none"/>
<path d="M1830.1 1723.3L1861.9 1745.7M1830.1 1745.7L1861.9 1723.3" stroke="#00E0E0" stroke-width="8" fill="none"/>
<path d="M1861.9 1723.3L1893.7 1745.7M1861.9 1745.7L1893.7 1723.3" stroke="#00E0E0" stroke-width="8" fill="none"/>
<path d="M1893.7 1723.3L1925.5 1745.7M1893.7 1745.7L1925.5 1723.3" stroke="#00E0E0" stroke-width="8" fill="none"/>
<rect x="1760.0" y="1716.0" width="13" height="12.2" rx="3" fill="#FF8000"/>
<rect x="1760.0" y="1740.8" width="13" height="12.2" rx="3" fill="#FF8000"/>
<rect x="1760.5" y="1720.5" width="12.0" height="28.0" fill="none" stroke="#FFFF00" stroke-width="1"/>
<rect x="1791.8" y="1716.0" width="13" height="12.2" rx="3" fill="#FF8000"/>
<rect x="1791.8" y="1740.8" width="13" height="12.2" rx="3" fill="#FF8000"/>
<rect x="1792.3" y="1720.5" width="12.0" height="28.0" fill="none" stroke="#FFFF00" stroke-width="1"/>
<rect x="1823.6" y="1716.0" width="13" height="12.2" rx="3" fill="#FF8000"/>
<rect x="1823.6" y="1740.8" width="13" height="12.2" rx="3" fill="#FF8000"/>
<rect x="1824.1" y="1720.5" width="12.0" height="28.0" fill="none" stroke="#FFFF00" stroke-width="1"/>
<rect x="1855.4" y="1716.0" width="13" height="12.2" rx="3" fill="#FF8000"/>
<rect x="1855.4" y="1740.8" width="13" height="12.2" rx="3" fill="#FF8000"/>
<rect x="1855.9" y="1720.5" width="12.0" height="28.0" fill="none" stroke="#FFFF00" stroke-width="1"/>
<rect x="1887.2" y="1716.0" width="13" height="12.2" rx="3" fill="#FF8000"/>
<rect x="1887.2" y="1740.8" width="13" height="12.2" rx="3" fill="#FF8000"/>
<rect x="1887.7" y="1720.5" width="12.0" height="28.0" fill="none" stroke="#FFFF00" stroke-width="1"/>
<rect x="1919.0" y="1716.0" width="13" height="12.2" rx="3" fill="#FF8000"/>
<rect x="1919.0" y="1740.8" width="13" height="12.2" rx="3" fill="#FF8000"/>
<rect x="1919.5" y="1720.5" width="12.0" height="28.0" fill="none" stroke="#FFFF00" stroke-width="1"/>
<path d="M1862.0 1704.0 L1890.0 1716.0" stroke="#00E0E0" stroke-width="6" fill="none" stroke-linecap="butt" stroke-linejoin="round"/>
<ellipse cx="1862.0" cy="1704.0" rx="4.2" ry="3.7" fill="#FF8000"/><rect x="1860.4" y="1702.5" width="3.2" height="3" fill="#3a4050"/>
<rect x="1961.5" y="1716.0" width="13.0" height="13.3" rx="3" fill="#FF8000"/>
<rect x="1961.5" y="1739.7" width="13.0" height="13.3" rx="3" fill="#FF8000"/>
<rect x="1962.0" y="1720.5" width="12.0" height="28.0" fill="none" stroke="#FFFF00" stroke-width="1"/>
<path d="M2021.5 1723.3L2056.0 1745.7M2021.5 1745.7L2056.0 1723.3" stroke="#00E0E0" stroke-width="8" fill="none"/>
<rect x="2015.0" y="1716.0" width="13" height="12.2" rx="3" fill="#FF8000"/>
<rect x="2015.0" y="1740.8" width="13" height="12.2" rx="3" fill="#FF8000"/>
<rect x="2015.5" y="1720.5" width="12.0" height="28.0" fill="none" stroke="#FFFF00" stroke-width="1"/>
<rect x="2049.5" y="1716.0" width="13" height="12.2" rx="3" fill="#FF8000"/>
<rect x="2049.5" y="1740.8" width="13" height="12.2" rx="3" fill="#FF8000"/>
<rect x="2050.0" y="1720.5" width="12.0" height="28.0" fill="none" stroke="#FFFF00" stroke-width="1"/>
<path d="M2180.0 1460.0 L2202.0 1470.0 L2202.0 1500.0" stroke="#00E0E0" stroke-width="6" fill="none" stroke-linecap="butt" stroke-linejoin="round"/>
<path d="M2173.0 1530.0 L2178.0 1553.0 L2189.0 1580.0 L2200.0 1553.0 L2213.0 1515.0" stroke="#00E0E0" stroke-width="7" fill="none" stroke-linecap="butt" stroke-linejoin="round"/>
<ellipse cx="2173.0" cy="1530.0" rx="4.2" ry="3.7" fill="#FF8000"/><rect x="2171.4" y="1528.5" width="3.2" height="3" fill="#3a4050"/>
<ellipse cx="2178.0" cy="1553.0" rx="4.2" ry="3.7" fill="#FF8000"/><rect x="2176.4" y="1551.5" width="3.2" height="3" fill="#3a4050"/>
<ellipse cx="2189.0" cy="1580.0" rx="4.2" ry="3.7" fill="#FF8000"/><rect x="2187.4" y="1578.5" width="3.2" height="3" fill="#3a4050"/>
<ellipse cx="2200.0" cy="1553.0" rx="4.2" ry="3.7" fill="#FF8000"/><rect x="2198.4" y="1551.5" width="3.2" height="3" fill="#3a4050"/>
<ellipse cx="2209.0" cy="1537.0" rx="4.2" ry="3.7" fill="#FF8000"/><rect x="2207.4" y="1535.5" width="3.2" height="3" fill="#3a4050"/>
<ellipse cx="2212.8" cy="1514.6" rx="4.2" ry="3.7" fill="#FF8000"/><rect x="2211.2" y="1513.1" width="3.2" height="3" fill="#3a4050"/>
<path d="M2150.0 1578.6 L2140.0 1588.8" stroke="#00E0E0" stroke-width="6" fill="none" stroke-linecap="butt" stroke-linejoin="round"/>
<rect x="2153.0" y="1629.5" width="13.1" height="13.0" rx="3" fill="#FF8000"/>
<rect x="2176.4" y="1629.5" width="13.1" height="13.0" rx="3" fill="#FF8000"/>
<rect x="2157.5" y="1630.0" width="27.5" height="12.0" fill="none" stroke="#FFFF00" stroke-width="1"/>
<path d="M2185.0 1640.0 L2220.0 1660.0" stroke="#00E0E0" stroke-width="7" fill="none" stroke-linecap="butt" stroke-linejoin="round"/>
<path d="M2231.7 1625.0 L2260.0 1640.0 L2280.0 1694.0 L2226.0 1712.0 L2215.0 1660.0Z" fill="#00C8C8"/>
<path d="M2231.7 1633.9L2218.6 1659.5M2231.7 1633.9L2254.4 1666.0M2218.6 1659.5L2254.4 1666.0M2218.6 1659.5L2226.4 1702.3M2254.4 1666.0L2271.0 1694.4" stroke="#00E0E0" stroke-width="8" fill="none"/>
<path d="M2255.0 1634.0 L2292.8 1622.8" stroke="#00E0E0" stroke-width="9" fill="none" stroke-linecap="butt" stroke-linejoin="round"/>
<circle cx="2231.7" cy="1633.9" r="10.5" fill="#FF8000"/>
<circle cx="2218.6" cy="1659.5" r="10.5" fill="#FF8000"/>
<circle cx="2254.4" cy="1666.0" r="10.5" fill="#FF8000"/>
<circle cx="2271.0" cy="1694.4" r="10.5" fill="#FF8000"/>
<circle cx="2226.4" cy="1702.3" r="10.5" fill="#FF8000"/>
<ellipse cx="2255.0" cy="1634.0" rx="4.2" ry="3.7" fill="#FF8000"/><rect x="2253.4" y="1632.5" width="3.2" height="3" fill="#3a4050"/>
<ellipse cx="2218.0" cy="1684.0" rx="4.2" ry="3.7" fill="#FF8000"/><rect x="2216.4" y="1682.5" width="3.2" height="3" fill="#3a4050"/>
<rect x="2226.2" y="1722.6" width="13.0" height="13.1" rx="3" fill="#FF8000"/>
<rect x="2226.2" y="1745.9" width="13.0" height="13.1" rx="3" fill="#FF8000"/>
<rect x="2226.7" y="1727.1" width="12.0" height="27.4" fill="none" stroke="#FFFF00" stroke-width="1"/>
<path d="M2216.3 1727.0 L2232.0 1745.0" stroke="#00E0E0" stroke-width="6" fill="none" stroke-linecap="butt" stroke-linejoin="round"/>
<ellipse cx="2216.3" cy="1727.0" rx="4.2" ry="3.7" fill="#FF8000"/><rect x="2214.7" y="1725.5" width="3.2" height="3" fill="#3a4050"/>
<ellipse cx="2290.0" cy="1694.4" rx="4.2" ry="3.7" fill="#FF8000"/><rect x="2288.4" y="1692.9" width="3.2" height="3" fill="#3a4050"/>
<ellipse cx="2319.0" cy="1718.9" rx="4.2" ry="3.7" fill="#FF8000"/><rect x="2317.4" y="1717.4" width="3.2" height="3" fill="#3a4050"/>
<rect x="2293.3" y="1623.3" width="68.4" height="271.6" fill="none" stroke="#FFFF00" stroke-width="1"/>
<path d="M2292.8 1622.8 L2317.0 1588.8 L2343.7 1540.7" stroke="#00E0E0" stroke-width="10" fill="none" stroke-linecap="butt" stroke-linejoin="round"/>
<path d="M2361.2 1622.8 L2388.8 1633.3 L2431.0 1633.3 L2446.0 1652.0" stroke="#00E0E0" stroke-width="9" fill="none" stroke-linecap="butt" stroke-linejoin="round"/>
<circle cx="2292.8" cy="1622.8" r="17.5" fill="#FF8000" stroke="#006000" stroke-width="1"/>
<circle cx="2292.8" cy="1622.8" r="9.6" fill="#404040"/>
<circle cx="2361.2" cy="1622.8" r="17.5" fill="#FF8000" stroke="#006000" stroke-width="1"/>
<circle cx="2361.2" cy="1622.8" r="9.6" fill="#404040"/>
<rect x="2298.5" y="1532.0" width="13.0" height="13.1" rx="3" fill="#FF8000"/>
<rect x="2298.5" y="1555.3" width="13.0" height="13.1" rx="3" fill="#FF8000"/>
<rect x="2299.0" y="1536.5" width="12.0" height="27.4" fill="none" stroke="#FFFF00" stroke-width="1"/>
<path d="M2310.0 1535.0 L2343.7 1530.0 L2367.0 1530.6 L2350.0 1570.0 L2320.0 1590.0Z" fill="#00C8C8"/>
<path d="M2305.0 1545.0L2343.7 1540.7M2305.0 1545.0L2328.0 1570.0M2343.7 1540.7L2367.0 1530.6M2343.7 1540.7L2328.0 1570.0M2317.0 1588.8L2328.0 1570.0" stroke="#00E0E0" stroke-width="6" fill="none"/>
<path d="M2409.2 1543.7 L2436.9 1567.5 L2455.8 1566.4" stroke="#00E0E0" stroke-width="8" fill="none" stroke-linecap="butt" stroke-linejoin="round"/>
<path d="M2412.0 1570.0 L2412.0 1630.0" stroke="#00A0A0" stroke-width="12" fill="none" stroke-linecap="butt" stroke-linejoin="round"/>
<rect x="2334.0" y="1564.0" width="78.0" height="12.0" fill="#00A0A0"/>
<path d="M2343.7 1540.7 L2360.0 1570.0" stroke="#00E0E0" stroke-width="7" fill="none" stroke-linecap="butt" stroke-linejoin="round"/>
<path d="M2409.2 1543.7 L2390.0 1570.0" stroke="#00E0E0" stroke-width="7" fill="none" stroke-linecap="butt" stroke-linejoin="round"/>
<rect x="2328.6" y="1563.4" width="12.400000000000091" height="13" rx="3" fill="#FF8000"/>
<rect x="2354" y="1563.4" width="10.5" height="13" rx="3" fill="#FF8000"/>
<rect x="2383" y="1563.4" width="10.5" height="13" rx="3" fill="#FF8000"/>
<rect x="2405.4" y="1563.4" width="13.599999999999909" height="13" rx="3" fill="#FF8000"/>
<rect x="2332.5" y="1563.9" width="29.0" height="12.6" fill="none" stroke="#FFFF00" stroke-width="1"/>
<rect x="2387.5" y="1563.9" width="28.0" height="12.6" fill="none" stroke="#FFFF00" stroke-width="1"/>
<rect x="2405.4" y="1593.0" width="14.0" height="13.7" rx="3" fill="#FF8000"/>
<rect x="2405.4" y="1617.3" width="14.0" height="13.7" rx="3" fill="#FF8000"/>
<rect x="2405.9" y="1597.5" width="13.0" height="29.0" fill="none" stroke="#FFFF00" stroke-width="1"/>
<circle cx="2343.7" cy="1540.7" r="10" fill="#FF8000"/>
<circle cx="2409.2" cy="1543.7" r="10" fill="#FF8000"/>
<ellipse cx="2367.0" cy="1530.6" rx="4.2" ry="3.7" fill="#FF8000"/><rect x="2365.4" y="1529.1" width="3.2" height="3" fill="#3a4050"/>
<ellipse cx="2317.0" cy="1588.8" rx="4.2" ry="3.7" fill="#FF8000"/><rect x="2315.4" y="1587.3" width="3.2" height="3" fill="#3a4050"/>
<ellipse cx="2436.9" cy="1567.5" rx="4.2" ry="3.7" fill="#FF8000"/><rect x="2435.3" y="1566.0" width="3.2" height="3" fill="#3a4050"/>
<ellipse cx="2455.8" cy="1566.4" rx="4.2" ry="3.7" fill="#FF8000"/><rect x="2454.2" y="1564.9" width="3.2" height="3" fill="#3a4050"/>
<ellipse cx="2388.8" cy="1633.3" rx="4.2" ry="3.7" fill="#FF8000"/><rect x="2387.2" y="1631.8" width="3.2" height="3" fill="#3a4050"/>
<ellipse cx="2431.0" cy="1633.3" rx="4.2" ry="3.7" fill="#FF8000"/><rect x="2429.4" y="1631.8" width="3.2" height="3" fill="#3a4050"/>
<rect x="2434.0" y="1652.3" width="29.4" height="12.5" fill="#00A0A4"/>
<rect x="2434.0" y="1675.7" width="29.4" height="12.5" fill="#00A0A4"/>
<rect x="2463.4" y="1652.3" width="29.5" height="12.5" fill="#00A0A4"/>
<rect x="2463.4" y="1675.7" width="29.5" height="12.5" fill="#00A0A4"/>
<path d="M2434.0 1658.8L2463.4 1681.7M2434.0 1681.7L2463.4 1658.8" stroke="#00E0E0" stroke-width="8" fill="none"/>
<path d="M2463.4 1658.8L2492.9 1681.7M2463.4 1681.7L2492.9 1658.8" stroke="#00E0E0" stroke-width="8" fill="none"/>
<rect x="2427.5" y="1651.3" width="13" height="12.5" rx="3" fill="#FF8000"/>
<rect x="2427.5" y="1676.7" width="13" height="12.5" rx="3" fill="#FF8000"/>
<rect x="2428.0" y="1655.8" width="12.0" height="28.9" fill="none" stroke="#FFFF00" stroke-width="1"/>
<rect x="2456.9" y="1651.3" width="13" height="12.5" rx="3" fill="#FF8000"/>
<rect x="2456.9" y="1676.7" width="13" height="12.5" rx="3" fill="#FF8000"/>
<rect x="2457.4" y="1655.8" width="12.0" height="28.9" fill="none" stroke="#FFFF00" stroke-width="1"/>
<rect x="2486.4" y="1651.3" width="13" height="12.5" rx="3" fill="#FF8000"/>
<rect x="2486.4" y="1676.7" width="13" height="12.5" rx="3" fill="#FF8000"/>
<rect x="2486.9" y="1655.8" width="12.0" height="28.9" fill="none" stroke="#FFFF00" stroke-width="1"/>
<path d="M2396.0 1678.0 L2409.2 1705.0 L2431.0 1686.0" stroke="#00E0E0" stroke-width="6" fill="none" stroke-linecap="butt" stroke-linejoin="round"/>
<ellipse cx="2396.0" cy="1678.0" rx="4.2" ry="3.7" fill="#FF8000"/><rect x="2394.4" y="1676.5" width="3.2" height="3" fill="#3a4050"/>
<ellipse cx="2409.2" cy="1705.0" rx="4.2" ry="3.7" fill="#FF8000"/><rect x="2407.6" y="1703.5" width="3.2" height="3" fill="#3a4050"/>
<rect x="2431.7" y="1739.6" width="30.1" height="12.0" fill="#00A0A4"/>
<rect x="2431.7" y="1762.0" width="30.1" height="12.0" fill="#00A0A4"/>
<rect x="2491.9" y="1739.6" width="30.1" height="12.0" fill="#00A0A4"/>
<rect x="2491.9" y="1762.0" width="30.1" height="12.0" fill="#00A0A4"/>
<path d="M2431.7 1745.8L2461.8 1767.8M2431.7 1767.8L2461.8 1745.8" stroke="#00E0E0" stroke-width="8" fill="none"/>
<path d="M2461.8 1745.8L2491.9 1767.8M2461.8 1767.8L2491.9 1745.8" stroke="#00E0E0" stroke-width="8" fill="none"/>
<path d="M2491.9 1745.8L2522.0 1767.8M2491.9 1767.8L2522.0 1745.8" stroke="#00E0E0" stroke-width="8" fill="none"/>
<rect x="2425.2" y="1738.6" width="13" height="12.0" rx="3" fill="#FF8000"/>
<rect x="2425.2" y="1763.0" width="13" height="12.0" rx="3" fill="#FF8000"/>
<rect x="2425.7" y="1743.1" width="12.0" height="27.4" fill="none" stroke="#FFFF00" stroke-width="1"/>
<rect x="2455.3" y="1738.6" width="13" height="12.0" rx="3" fill="#FF8000"/>
<rect x="2455.3" y="1763.0" width="13" height="12.0" rx="3" fill="#FF8000"/>
<rect x="2455.8" y="1743.1" width="12.0" height="27.4" fill="none" stroke="#FFFF00" stroke-width="1"/>
<rect x="2485.4" y="1738.6" width="13" height="12.0" rx="3" fill="#FF8000"/>
<rect x="2485.4" y="1763.0" width="13" height="12.0" rx="3" fill="#FF8000"/>
<rect x="2485.9" y="1743.1" width="12.0" height="27.4" fill="none" stroke="#FFFF00" stroke-width="1"/>
<rect x="2515.5" y="1738.6" width="13" height="12.0" rx="3" fill="#FF8000"/>
<rect x="2515.5" y="1763.0" width="13" height="12.0" rx="3" fill="#FF8000"/>
<rect x="2516.0" y="1743.1" width="12.0" height="27.4" fill="none" stroke="#FFFF00" stroke-width="1"/>
<rect x="2251.7" y="1832.3" width="352.4" height="81.5" fill="none" stroke="#FFFF00" stroke-width="1"/>
<path d="M2274.5 1823.9 L2297.2 1815.2 L2318.1 1824.5 L2340.8 1805.6 L2361.2 1826.0 L2383.9 1821.0 L2404.8 1825.4 L2426.7 1816.4 L2447.9 1825.4 L2470.3 1818.1 L2491.3 1825.4 L2514.0 1815.2 L2534.9 1825.4 L2556.8 1815.2 L2579.5 1825.4" stroke="#00E0E0" stroke-width="7" fill="none" stroke-linecap="butt" stroke-linejoin="round"/>
<path d="M2274.5 1823.9 L2274.8 1846.0" stroke="#00E0E0" stroke-width="7" fill="none" stroke-linecap="butt" stroke-linejoin="round"/>
<path d="M2274.5 1823.9 L2296.7 1846.0" stroke="#00E0E0" stroke-width="5" fill="none" stroke-linecap="butt" stroke-linejoin="round"/>
<path d="M2297.2 1815.2 L2296.7 1846.0" stroke="#00E0E0" stroke-width="7" fill="none" stroke-linecap="butt" stroke-linejoin="round"/>
<path d="M2297.2 1815.2 L2318.5 1846.0" stroke="#00E0E0" stroke-width="5" fill="none" stroke-linecap="butt" stroke-linejoin="round"/>
<path d="M2318.1 1824.5 L2318.4 1846.0" stroke="#00E0E0" stroke-width="7" fill="none" stroke-linecap="butt" stroke-linejoin="round"/>
<path d="M2318.1 1824.5 L2340.2 1846.0" stroke="#00E0E0" stroke-width="5" fill="none" stroke-linecap="butt" stroke-linejoin="round"/>
<path d="M2340.8 1805.6 L2340.2 1846.0" stroke="#00E0E0" stroke-width="7" fill="none" stroke-linecap="butt" stroke-linejoin="round"/>
<path d="M2340.8 1805.6 L2362.1 1846.0" stroke="#00E0E0" stroke-width="5" fill="none" stroke-linecap="butt" stroke-linejoin="round"/>
<path d="M2361.2 1826.0 L2362.0 1846.0" stroke="#00E0E0" stroke-width="7" fill="none" stroke-linecap="butt" stroke-linejoin="round"/>
<path d="M2361.2 1826.0 L2383.8 1846.0" stroke="#00E0E0" stroke-width="5" fill="none" stroke-linecap="butt" stroke-linejoin="round"/>
<path d="M2383.9 1821.0 L2383.8 1846.0" stroke="#00E0E0" stroke-width="7" fill="none" stroke-linecap="butt" stroke-linejoin="round"/>
<path d="M2383.9 1821.0 L2405.7 1846.0" stroke="#00E0E0" stroke-width="5" fill="none" stroke-linecap="butt" stroke-linejoin="round"/>
<path d="M2404.8 1825.4 L2405.7 1846.0" stroke="#00E0E0" stroke-width="7" fill="none" stroke-linecap="butt" stroke-linejoin="round"/>
<path d="M2404.8 1825.4 L2427.5 1846.0" stroke="#00E0E0" stroke-width="5" fill="none" stroke-linecap="butt" stroke-linejoin="round"/>
<path d="M2426.7 1816.4 L2427.4 1846.0" stroke="#00E0E0" stroke-width="7" fill="none" stroke-linecap="butt" stroke-linejoin="round"/>
<path d="M2426.7 1816.4 L2449.2 1846.0" stroke="#00E0E0" stroke-width="5" fill="none" stroke-linecap="butt" stroke-linejoin="round"/>
<path d="M2447.9 1825.4 L2449.2 1846.0" stroke="#00E0E0" stroke-width="7" fill="none" stroke-linecap="butt" stroke-linejoin="round"/>
<path d="M2447.9 1825.4 L2471.1 1846.0" stroke="#00E0E0" stroke-width="5" fill="none" stroke-linecap="butt" stroke-linejoin="round"/>
<path d="M2470.3 1818.1 L2471.0 1846.0" stroke="#00E0E0" stroke-width="7" fill="none" stroke-linecap="butt" stroke-linejoin="round"/>
<path d="M2470.3 1818.1 L2492.8 1846.0" stroke="#00E0E0" stroke-width="5" fill="none" stroke-linecap="butt" stroke-linejoin="round"/>
<path d="M2491.3 1825.4 L2492.8 1846.0" stroke="#00E0E0" stroke-width="7" fill="none" stroke-linecap="butt" stroke-linejoin="round"/>
<path d="M2491.3 1825.4 L2514.7 1846.0" stroke="#00E0E0" stroke-width="5" fill="none" stroke-linecap="butt" stroke-linejoin="round"/>
<path d="M2514.0 1815.2 L2514.7 1846.0" stroke="#00E0E0" stroke-width="7" fill="none" stroke-linecap="butt" stroke-linejoin="round"/>
<path d="M2514.0 1815.2 L2536.5 1846.0" stroke="#00E0E0" stroke-width="5" fill="none" stroke-linecap="butt" stroke-linejoin="round"/>
<path d="M2534.9 1825.4 L2536.4 1846.0" stroke="#00E0E0" stroke-width="7" fill="none" stroke-linecap="butt" stroke-linejoin="round"/>
<path d="M2534.9 1825.4 L2558.2 1846.0" stroke="#00E0E0" stroke-width="5" fill="none" stroke-linecap="butt" stroke-linejoin="round"/>
<path d="M2556.8 1815.2 L2558.2 1846.0" stroke="#00E0E0" stroke-width="7" fill="none" stroke-linecap="butt" stroke-linejoin="round"/>
<path d="M2556.8 1815.2 L2580.1 1846.0" stroke="#00E0E0" stroke-width="5" fill="none" stroke-linecap="butt" stroke-linejoin="round"/>
<path d="M2579.5 1825.4 L2580.0 1846.0" stroke="#00E0E0" stroke-width="7" fill="none" stroke-linecap="butt" stroke-linejoin="round"/>
<path d="M2288.4 1766.3 L2320.4 1778.5 L2340.8 1805.5 L2361.0 1826.0" stroke="#00E0E0" stroke-width="6" fill="none" stroke-linecap="butt" stroke-linejoin="round"/>
<path d="M2452.9 1795.4 L2447.0 1818.0 L2445.0 1830.0" stroke="#00E0E0" stroke-width="7" fill="none" stroke-linecap="butt" stroke-linejoin="round"/>
<path d="M2452.9 1795.4 L2433.0 1775.0 L2475.0 1820.0" stroke="#00E0E0" stroke-width="6" fill="none" stroke-linecap="butt" stroke-linejoin="round"/>
<rect x="2268.0" y="1839.0" width="13.7" height="67.6" fill="#FF8000"/>
<rect x="2289.8" y="1839.0" width="13.7" height="67.6" fill="#FF8000"/>
<rect x="2311.6" y="1839.0" width="13.7" height="67.6" fill="#FF8000"/>
<rect x="2333.4" y="1839.0" width="13.7" height="67.6" fill="#FF8000"/>
<rect x="2355.2" y="1839.0" width="13.7" height="67.6" fill="#FF8000"/>
<rect x="2377.0" y="1839.0" width="13.7" height="67.6" fill="#FF8000"/>
<rect x="2398.8" y="1839.0" width="13.7" height="67.6" fill="#FF8000"/>
<rect x="2420.6" y="1839.0" width="13.7" height="67.6" fill="#FF8000"/>
<rect x="2442.4" y="1839.0" width="13.7" height="67.6" fill="#FF8000"/>
<rect x="2464.2" y="1839.0" width="13.7" height="67.6" fill="#FF8000"/>
<rect x="2486.0" y="1839.0" width="13.7" height="67.6" fill="#FF8000"/>
<rect x="2507.8" y="1839.0" width="13.7" height="67.6" fill="#FF8000"/>
<rect x="2529.6" y="1839.0" width="13.7" height="67.6" fill="#FF8000"/>
<rect x="2551.4" y="1839.0" width="13.7" height="67.6" fill="#FF8000"/>
<rect x="2573.2" y="1839.0" width="13.7" height="67.6" fill="#FF8000"/>
<ellipse cx="2274.5" cy="1823.9" rx="4.2" ry="3.7" fill="#FF8000"/><rect x="2272.9" y="1822.4" width="3.2" height="3" fill="#3a4050"/>
<ellipse cx="2297.2" cy="1815.2" rx="4.2" ry="3.7" fill="#FF8000"/><rect x="2295.6" y="1813.7" width="3.2" height="3" fill="#3a4050"/>
<ellipse cx="2318.1" cy="1824.5" rx="4.2" ry="3.7" fill="#FF8000"/><rect x="2316.5" y="1823.0" width="3.2" height="3" fill="#3a4050"/>
<ellipse cx="2340.8" cy="1805.6" rx="4.2" ry="3.7" fill="#FF8000"/><rect x="2339.2" y="1804.1" width="3.2" height="3" fill="#3a4050"/>
<ellipse cx="2361.2" cy="1826.0" rx="4.2" ry="3.7" fill="#FF8000"/><rect x="2359.6" y="1824.5" width="3.2" height="3" fill="#3a4050"/>
<ellipse cx="2383.9" cy="1821.0" rx="4.2" ry="3.7" fill="#FF8000"/><rect x="2382.3" y="1819.5" width="3.2" height="3" fill="#3a4050"/>
<ellipse cx="2404.8" cy="1825.4" rx="4.2" ry="3.7" fill="#FF8000"/><rect x="2403.2" y="1823.9" width="3.2" height="3" fill="#3a4050"/>
<ellipse cx="2426.7" cy="1816.4" rx="4.2" ry="3.7" fill="#FF8000"/><rect x="2425.1" y="1814.9" width="3.2" height="3" fill="#3a4050"/>
<ellipse cx="2447.9" cy="1825.4" rx="4.2" ry="3.7" fill="#FF8000"/><rect x="2446.3" y="1823.9" width="3.2" height="3" fill="#3a4050"/>
<ellipse cx="2470.3" cy="1818.1" rx="4.2" ry="3.7" fill="#FF8000"/><rect x="2468.7" y="1816.6" width="3.2" height="3" fill="#3a4050"/>
<ellipse cx="2491.3" cy="1825.4" rx="4.2" ry="3.7" fill="#FF8000"/><rect x="2489.7" y="1823.9" width="3.2" height="3" fill="#3a4050"/>
<ellipse cx="2514.0" cy="1815.2" rx="4.2" ry="3.7" fill="#FF8000"/><rect x="2512.4" y="1813.7" width="3.2" height="3" fill="#3a4050"/>
<ellipse cx="2534.9" cy="1825.4" rx="4.2" ry="3.7" fill="#FF8000"/><rect x="2533.3" y="1823.9" width="3.2" height="3" fill="#3a4050"/>
<ellipse cx="2556.8" cy="1815.2" rx="4.2" ry="3.7" fill="#FF8000"/><rect x="2555.2" y="1813.7" width="3.2" height="3" fill="#3a4050"/>
<ellipse cx="2579.5" cy="1825.4" rx="4.2" ry="3.7" fill="#FF8000"/><rect x="2577.9" y="1823.9" width="3.2" height="3" fill="#3a4050"/>
<ellipse cx="2288.4" cy="1766.3" rx="4.2" ry="3.7" fill="#FF8000"/><rect x="2286.8" y="1764.8" width="3.2" height="3" fill="#3a4050"/>
<ellipse cx="2320.4" cy="1778.5" rx="4.2" ry="3.7" fill="#FF8000"/><rect x="2318.8" y="1777.0" width="3.2" height="3" fill="#3a4050"/>
<ellipse cx="2452.9" cy="1795.4" rx="4.2" ry="3.7" fill="#FF8000"/><rect x="2451.3" y="1793.9" width="3.2" height="3" fill="#3a4050"/>
<path d="M2531.4 1654.2 L2547.4 1625.7" stroke="#00E0E0" stroke-width="6" fill="none" stroke-linecap="butt" stroke-linejoin="round"/>
<ellipse cx="2531.4" cy="1654.2" rx="4.2" ry="3.7" fill="#FF8000"/><rect x="2529.8" y="1652.7" width="3.2" height="3" fill="#3a4050"/>
<ellipse cx="2547.4" cy="1625.7" rx="4.2" ry="3.7" fill="#FF8000"/><rect x="2545.8" y="1624.2" width="3.2" height="3" fill="#3a4050"/>
<rect x="2615.9" y="1568.4" width="13.0" height="12.6" rx="3" fill="#FF8000"/>
<rect x="2615.9" y="1590.7" width="13.0" height="12.6" rx="3" fill="#FF8000"/>
<rect x="2616.4" y="1572.9" width="12.0" height="25.9" fill="none" stroke="#FFFF00" stroke-width="1"/>
<path d="M2601.3 1574.2 L2620.0 1598.0" stroke="#00E0E0" stroke-width="7" fill="none" stroke-linecap="butt" stroke-linejoin="round"/>
<ellipse cx="2601.3" cy="1574.2" rx="4.2" ry="3.7" fill="#FF8000"/><rect x="2599.7" y="1572.7" width="3.2" height="3" fill="#3a4050"/>
<rect x="2575.5" y="1668.8" width="13.0" height="13.1" rx="3" fill="#FF8000"/>
<rect x="2575.5" y="1692.1" width="13.0" height="13.1" rx="3" fill="#FF8000"/>
<rect x="2576.0" y="1673.3" width="12.0" height="27.4" fill="none" stroke="#FFFF00" stroke-width="1"/>
<path d="M2565.0 1697.0 L2580.0 1680.0" stroke="#00E0E0" stroke-width="7" fill="none" stroke-linecap="butt" stroke-linejoin="round"/>
<path d="M2565.0 1697.0 L2580.0 1725.0" stroke="#00E0E0" stroke-width="9" fill="none" stroke-linecap="butt" stroke-linejoin="round"/>
<ellipse cx="2565.0" cy="1697.0" rx="4.2" ry="3.7" fill="#FF8000"/><rect x="2563.4" y="1695.5" width="3.2" height="3" fill="#3a4050"/>
<circle cx="2580.0" cy="1725.0" r="11" fill="#FF8000"/>
<rect x="2574.5" y="1744.5" width="13.0" height="13.1" rx="3" fill="#FF8000"/>
<rect x="2574.5" y="1767.7" width="13.0" height="13.1" rx="3" fill="#FF8000"/>
<rect x="2575.0" y="1749.0" width="12.0" height="27.3" fill="none" stroke="#FFFF00" stroke-width="1"/>
<path d="M2585.0 1775.0 L2607.0 1799.0" stroke="#00E0E0" stroke-width="7" fill="none" stroke-linecap="butt" stroke-linejoin="round"/>
<ellipse cx="2607.0" cy="1799.0" rx="4.2" ry="3.7" fill="#FF8000"/><rect x="2605.4" y="1797.5" width="3.2" height="3" fill="#3a4050"/>
<ellipse cx="2581.0" cy="1652.8" rx="4.2" ry="3.7" fill="#FF8000"/><rect x="2579.4" y="1651.3" width="3.2" height="3" fill="#3a4050"/>
<rect x="2615.9" y="1633.0" width="13.0" height="12.6" rx="3" fill="#FF8000"/>
<rect x="2615.9" y="1655.4" width="13.0" height="12.6" rx="3" fill="#FF8000"/>
<rect x="2616.4" y="1637.5" width="12.0" height="26.0" fill="none" stroke="#FFFF00" stroke-width="1"/>
<rect x="2697.0" y="1633.0" width="13.0" height="12.6" rx="3" fill="#FF8000"/>
<rect x="2697.0" y="1655.4" width="13.0" height="12.6" rx="3" fill="#FF8000"/>
<rect x="2697.5" y="1637.5" width="12.0" height="26.0" fill="none" stroke="#FFFF00" stroke-width="1"/>
<rect x="2745.5" y="1616.0" width="13.0" height="13.0" rx="3" fill="#FF8000"/>
<rect x="2745.5" y="1639.0" width="13.0" height="13.0" rx="3" fill="#FF8000"/>
<rect x="2746.0" y="1620.5" width="12.0" height="27.0" fill="none" stroke="#FFFF00" stroke-width="1"/>
<path d="M2646.0 1687.0 L2668.0 1675.0 L2700.0 1665.0" stroke="#00E0E0" stroke-width="6" fill="none" stroke-linecap="butt" stroke-linejoin="round"/>
<ellipse cx="2646.0" cy="1687.0" rx="4.2" ry="3.7" fill="#FF8000"/><rect x="2644.4" y="1685.5" width="3.2" height="3" fill="#3a4050"/>
<ellipse cx="2668.0" cy="1675.0" rx="4.2" ry="3.7" fill="#FF8000"/><rect x="2666.4" y="1673.5" width="3.2" height="3" fill="#3a4050"/>
<path d="M2532.0 1653.0 L2548.0 1626.0" stroke="#00E0E0" stroke-width="6" fill="none" stroke-linecap="butt" stroke-linejoin="round"/>
<rect x="2616.0" y="1568.0" width="13.0" height="12.6" rx="3" fill="#FF8000"/>
<rect x="2616.0" y="1590.4" width="13.0" height="12.6" rx="3" fill="#FF8000"/>
<rect x="2616.5" y="1572.5" width="12.0" height="26.0" fill="none" stroke="#FFFF00" stroke-width="1"/>
<path d="M2600.0 1572.0 L2618.0 1596.0" stroke="#00E0E0" stroke-width="7" fill="none" stroke-linecap="butt" stroke-linejoin="round"/>
<rect x="2340.9" y="1055.7" width="464.3" height="462.8" fill="none" stroke="#FFFF00" stroke-width="1"/>
<path d="M2368.0 1170.0L2376.8 1178.8M2368.0 1187.6L2359.2 1178.8M2368.0 1258.1L2359.2 1266.9M2368.0 1258.1L2376.8 1266.9M2368.0 1275.7L2376.8 1266.9M2385.6 1170.0L2394.5 1161.2M2385.6 1187.6L2394.5 1178.8M2385.6 1205.2L2376.8 1214.0M2385.6 1240.5L2394.5 1231.7M2385.6 1258.1L2394.5 1266.9M2385.6 1293.4L2394.5 1302.2M2403.3 1134.7L2412.1 1143.5M2403.3 1240.5L2394.5 1231.7M2420.9 1099.4L2412.1 1090.6M2420.9 1134.7L2412.1 1143.5M2420.9 1187.6L2412.1 1196.4M2420.9 1187.6L2429.7 1196.4M2420.9 1222.8L2412.1 1214.0M2420.9 1240.5L2412.1 1249.3M2420.9 1240.5L2429.7 1231.7M2438.5 1099.4L2447.3 1090.6M2438.5 1134.7L2429.7 1143.5M2438.5 1152.3L2447.3 1161.2M2438.5 1240.5L2447.3 1249.3M2456.2 1099.4L2447.3 1108.3M2473.8 1117.1L2465.0 1108.3M2473.8 1134.7L2465.0 1143.5" stroke="#006A6E" stroke-width="8" fill="none"/>
<path d="M2368.0 1134.7L2376.8 1125.9M2368.0 1134.7L2376.8 1143.5M2368.0 1152.3L2359.2 1143.5M2368.0 1152.3L2376.8 1143.5M2368.0 1187.6L2376.8 1196.4M2368.0 1258.1L2359.2 1249.3M2385.6 1134.7L2376.8 1125.9M2385.6 1134.7L2394.5 1125.9M2385.6 1152.3L2394.5 1143.5M2385.6 1170.0L2376.8 1178.8M2385.6 1187.6L2376.8 1196.4M2385.6 1205.2L2394.5 1196.4M2385.6 1205.2L2394.5 1214.0M2385.6 1222.8L2376.8 1214.0M2385.6 1258.1L2376.8 1266.9M2385.6 1258.1L2394.5 1249.3M2385.6 1275.7L2376.8 1266.9M2385.6 1293.4L2376.8 1302.2M2403.3 1117.1L2394.5 1108.3M2403.3 1117.1L2394.5 1125.9M2403.3 1134.7L2412.1 1125.9M2403.3 1152.3L2394.5 1161.2M2403.3 1152.3L2412.1 1143.5M2403.3 1187.6L2394.5 1178.8M2403.3 1187.6L2394.5 1196.4M2403.3 1187.6L2412.1 1178.8M2403.3 1222.8L2394.5 1231.7M2403.3 1240.5L2412.1 1231.7M2403.3 1240.5L2412.1 1249.3M2403.3 1258.1L2394.5 1249.3M2403.3 1258.1L2412.1 1266.9M2403.3 1275.7L2412.1 1266.9M2420.9 1117.1L2429.7 1108.3M2420.9 1205.2L2429.7 1196.4M2438.5 1099.4L2429.7 1090.6M2438.5 1099.4L2429.7 1108.3M2438.5 1099.4L2447.3 1108.3M2438.5 1117.1L2429.7 1125.9M2438.5 1117.1L2447.3 1125.9M2438.5 1134.7L2447.3 1143.5M2438.5 1152.3L2429.7 1161.2M2438.5 1170.0L2429.7 1178.8M2438.5 1170.0L2447.3 1161.2M2438.5 1205.2L2429.7 1214.0M2438.5 1222.8L2429.7 1214.0M2438.5 1222.8L2429.7 1231.7M2456.2 1099.4L2447.3 1090.6M2456.2 1134.7L2447.3 1143.5M2473.8 1117.1L2482.6 1108.3M2473.8 1134.7L2482.6 1125.9" stroke="#00A0A4" stroke-width="8" fill="none"/>
<path d="M2359.2 1143.5L2376.8 1125.9M2359.2 1143.5L2368.0 1170.0M2359.2 1161.2L2376.8 1143.5M2359.2 1161.2L2368.0 1134.7M2359.2 1161.2L2368.0 1187.6M2359.2 1161.2L2385.6 1152.3M2359.2 1178.8L2376.8 1178.8M2359.2 1178.8L2368.0 1152.3M2359.2 1231.7L2359.2 1249.3M2359.2 1231.7L2376.8 1231.7M2359.2 1231.7L2385.6 1240.5M2359.2 1249.3L2368.0 1275.7M2359.2 1249.3L2385.6 1258.1M2359.2 1266.9L2376.8 1266.9M2359.2 1266.9L2368.0 1240.5M2359.2 1266.9L2385.6 1275.7M2376.8 1125.9L2376.8 1143.5M2376.8 1125.9L2394.5 1125.9M2376.8 1125.9L2403.3 1117.1M2376.8 1125.9L2403.3 1134.7M2376.8 1143.5L2376.8 1161.2M2376.8 1143.5L2385.6 1170.0M2376.8 1143.5L2403.3 1134.7M2376.8 1143.5L2403.3 1152.3M2376.8 1161.2L2376.8 1178.8M2376.8 1161.2L2368.0 1134.7M2376.8 1161.2L2385.6 1134.7M2376.8 1161.2L2403.3 1170.0M2376.8 1178.8L2394.5 1178.8M2376.8 1178.8L2385.6 1205.2M2376.8 1178.8L2403.3 1170.0M2376.8 1178.8L2403.3 1187.6M2376.8 1196.4L2394.5 1178.8M2376.8 1196.4L2394.5 1196.4M2376.8 1196.4L2385.6 1170.0M2376.8 1196.4L2385.6 1222.8M2376.8 1196.4L2403.3 1187.6M2376.8 1231.7L2376.8 1249.3M2376.8 1231.7L2394.5 1231.7M2376.8 1231.7L2368.0 1258.1M2376.8 1249.3L2394.5 1231.7M2376.8 1249.3L2394.5 1266.9M2376.8 1266.9L2394.5 1249.3M2376.8 1266.9L2385.6 1293.4M2376.8 1266.9L2403.3 1275.7M2394.5 1125.9L2412.1 1125.9M2394.5 1125.9L2385.6 1152.3M2394.5 1125.9L2420.9 1117.1M2394.5 1125.9L2420.9 1134.7M2394.5 1143.5L2394.5 1161.2M2394.5 1143.5L2412.1 1125.9M2394.5 1143.5L2368.0 1152.3M2394.5 1143.5L2403.3 1117.1M2394.5 1161.2L2403.3 1187.6M2394.5 1178.8L2412.1 1196.4M2394.5 1178.8L2403.3 1152.3M2394.5 1196.4L2394.5 1214.0M2394.5 1196.4L2412.1 1214.0M2394.5 1196.4L2368.0 1187.6M2394.5 1196.4L2420.9 1187.6M2394.5 1214.0L2385.6 1187.6M2394.5 1231.7L2412.1 1231.7M2394.5 1231.7L2385.6 1258.1M2394.5 1231.7L2403.3 1205.2M2394.5 1249.3L2412.1 1249.3M2394.5 1249.3L2368.0 1258.1M2394.5 1249.3L2385.6 1275.7M2394.5 1266.9L2412.1 1249.3M2394.5 1266.9L2368.0 1275.7M2394.5 1266.9L2385.6 1293.4M2394.5 1266.9L2403.3 1240.5M2412.1 1108.3L2420.9 1134.7M2412.1 1125.9L2412.1 1143.5M2412.1 1125.9L2429.7 1125.9M2412.1 1125.9L2403.3 1152.3M2412.1 1125.9L2420.9 1099.4M2412.1 1125.9L2438.5 1117.1M2412.1 1143.5L2412.1 1161.2M2412.1 1143.5L2403.3 1170.0M2412.1 1143.5L2438.5 1152.3M2412.1 1161.2L2438.5 1170.0M2412.1 1178.8L2429.7 1196.4M2412.1 1178.8L2385.6 1170.0M2412.1 1178.8L2385.6 1187.6M2412.1 1196.4L2385.6 1187.6M2412.1 1214.0L2429.7 1196.4M2412.1 1214.0L2385.6 1205.2M2412.1 1214.0L2385.6 1222.8M2412.1 1214.0L2403.3 1187.6M2412.1 1214.0L2420.9 1240.5M2412.1 1214.0L2438.5 1205.2M2412.1 1214.0L2438.5 1222.8M2412.1 1231.7L2429.7 1214.0M2412.1 1231.7L2429.7 1249.3M2412.1 1231.7L2403.3 1205.2M2412.1 1231.7L2420.9 1205.2M2412.1 1231.7L2438.5 1222.8M2412.1 1249.3L2429.7 1249.3M2412.1 1249.3L2403.3 1275.7M2412.1 1266.9L2385.6 1275.7M2412.1 1266.9L2403.3 1240.5M2429.7 1108.3L2447.3 1125.9M2429.7 1108.3L2403.3 1117.1M2429.7 1108.3L2438.5 1134.7M2429.7 1108.3L2456.2 1099.4M2429.7 1125.9L2447.3 1143.5M2429.7 1125.9L2403.3 1134.7M2429.7 1125.9L2456.2 1134.7M2429.7 1143.5L2447.3 1143.5M2429.7 1143.5L2420.9 1170.0M2429.7 1143.5L2438.5 1117.1M2429.7 1161.2L2429.7 1178.8M2429.7 1161.2L2403.3 1152.3M2429.7 1161.2L2438.5 1187.6M2429.7 1178.8L2403.3 1170.0M2429.7 1178.8L2420.9 1152.3M2429.7 1178.8L2420.9 1205.2M2429.7 1178.8L2438.5 1205.2M2429.7 1214.0L2429.7 1231.7M2429.7 1214.0L2438.5 1187.6M2429.7 1214.0L2438.5 1240.5M2429.7 1231.7L2429.7 1249.3M2429.7 1231.7L2420.9 1205.2M2429.7 1231.7L2420.9 1258.1M2429.7 1231.7L2438.5 1258.1M2429.7 1249.3L2447.3 1266.9M2429.7 1249.3L2420.9 1222.8M2429.7 1249.3L2438.5 1222.8M2429.7 1266.9L2403.3 1258.1M2429.7 1266.9L2403.3 1275.7M2447.3 1108.3L2438.5 1134.7M2447.3 1125.9L2465.0 1108.3M2447.3 1125.9L2465.0 1125.9M2447.3 1125.9L2465.0 1143.5M2447.3 1125.9L2420.9 1117.1M2447.3 1125.9L2473.8 1117.1M2447.3 1143.5L2420.9 1134.7M2447.3 1143.5L2473.8 1134.7M2447.3 1266.9L2420.9 1258.1M2465.0 1125.9L2482.6 1108.3M2465.0 1125.9L2482.6 1143.5M2465.0 1125.9L2438.5 1117.1M2465.0 1143.5L2482.6 1143.5M2465.0 1143.5L2438.5 1152.3M2482.6 1108.3L2473.8 1134.7M2482.6 1125.9L2456.2 1117.1M2482.6 1143.5L2456.2 1134.7M2368.0 1152.3L2385.6 1152.3M2368.0 1170.0L2368.0 1187.6M2368.0 1187.6L2385.6 1170.0M2368.0 1240.5L2368.0 1258.1M2368.0 1240.5L2385.6 1222.8M2368.0 1258.1L2385.6 1275.7M2368.0 1275.7L2385.6 1293.4M2385.6 1134.7L2385.6 1152.3M2385.6 1152.3L2403.3 1134.7M2385.6 1170.0L2403.3 1152.3M2385.6 1170.0L2403.3 1170.0M2385.6 1187.6L2403.3 1170.0M2385.6 1187.6L2403.3 1187.6M2385.6 1222.8L2403.3 1240.5M2385.6 1240.5L2403.3 1222.8M2385.6 1258.1L2403.3 1275.7M2385.6 1275.7L2403.3 1275.7M2403.3 1117.1L2420.9 1099.4M2403.3 1134.7L2420.9 1117.1M2403.3 1152.3L2420.9 1152.3M2403.3 1152.3L2420.9 1170.0M2403.3 1187.6L2403.3 1205.2M2403.3 1187.6L2420.9 1170.0M2403.3 1187.6L2420.9 1187.6M2403.3 1187.6L2420.9 1205.2M2403.3 1205.2L2403.3 1222.8M2403.3 1205.2L2420.9 1187.6M2403.3 1240.5L2403.3 1258.1M2403.3 1240.5L2420.9 1240.5M2403.3 1258.1L2420.9 1258.1M2420.9 1099.4L2420.9 1117.1M2420.9 1117.1L2420.9 1134.7M2420.9 1117.1L2438.5 1099.4M2420.9 1117.1L2438.5 1134.7M2420.9 1134.7L2438.5 1117.1M2420.9 1134.7L2438.5 1134.7M2420.9 1134.7L2438.5 1152.3M2420.9 1170.0L2420.9 1187.6M2420.9 1170.0L2438.5 1152.3M2420.9 1187.6L2438.5 1205.2M2420.9 1205.2L2420.9 1222.8M2420.9 1258.1L2438.5 1258.1M2438.5 1117.1L2456.2 1134.7M2438.5 1134.7L2438.5 1152.3M2438.5 1134.7L2456.2 1117.1M2438.5 1134.7L2456.2 1134.7M2438.5 1205.2L2438.5 1222.8M2438.5 1222.8L2438.5 1240.5M2456.2 1099.4L2456.2 1117.1M2456.2 1099.4L2473.8 1117.1M2456.2 1117.1L2473.8 1134.7M2456.2 1134.7L2473.8 1117.1M2456.2 1134.7L2473.8 1134.7" stroke="#00E0E0" stroke-width="5.5" fill="none"/>
<path d="M2368.0 1134.7L2359.2 1125.9M2368.0 1134.7L2359.2 1143.5M2368.0 1152.3L2359.2 1161.2M2368.0 1152.3L2376.8 1161.2M2368.0 1170.0L2359.2 1161.2M2368.0 1170.0L2359.2 1178.8M2368.0 1170.0L2376.8 1161.2M2368.0 1187.6L2359.2 1196.4M2368.0 1187.6L2376.8 1178.8M2368.0 1240.5L2359.2 1231.7M2368.0 1240.5L2359.2 1249.3M2368.0 1240.5L2376.8 1231.7M2368.0 1240.5L2376.8 1249.3M2368.0 1258.1L2376.8 1249.3M2368.0 1275.7L2359.2 1266.9M2385.6 1134.7L2376.8 1143.5M2385.6 1134.7L2394.5 1143.5M2385.6 1152.3L2376.8 1143.5M2385.6 1152.3L2376.8 1161.2M2385.6 1152.3L2394.5 1161.2M2385.6 1170.0L2376.8 1161.2M2385.6 1170.0L2394.5 1178.8M2385.6 1187.6L2376.8 1178.8M2385.6 1187.6L2394.5 1196.4M2385.6 1205.2L2376.8 1196.4M2385.6 1222.8L2376.8 1231.7M2385.6 1222.8L2394.5 1214.0M2385.6 1222.8L2394.5 1231.7M2385.6 1240.5L2376.8 1231.7M2385.6 1240.5L2376.8 1249.3M2385.6 1240.5L2394.5 1249.3M2385.6 1258.1L2376.8 1249.3M2385.6 1275.7L2394.5 1266.9M2403.3 1117.1L2412.1 1108.3M2403.3 1117.1L2412.1 1125.9M2403.3 1134.7L2394.5 1125.9M2403.3 1134.7L2394.5 1143.5M2403.3 1152.3L2394.5 1143.5M2403.3 1152.3L2412.1 1161.2M2403.3 1170.0L2394.5 1161.2M2403.3 1170.0L2394.5 1178.8M2403.3 1170.0L2412.1 1161.2M2403.3 1170.0L2412.1 1178.8M2403.3 1187.6L2412.1 1196.4M2403.3 1205.2L2394.5 1196.4M2403.3 1205.2L2394.5 1214.0M2403.3 1205.2L2412.1 1196.4M2403.3 1205.2L2412.1 1214.0M2403.3 1222.8L2394.5 1214.0M2403.3 1222.8L2412.1 1214.0M2403.3 1222.8L2412.1 1231.7M2403.3 1240.5L2394.5 1249.3M2403.3 1258.1L2394.5 1266.9M2403.3 1258.1L2412.1 1249.3M2403.3 1275.7L2394.5 1266.9M2420.9 1099.4L2412.1 1108.3M2420.9 1099.4L2429.7 1090.6M2420.9 1099.4L2429.7 1108.3M2420.9 1117.1L2412.1 1108.3M2420.9 1117.1L2412.1 1125.9M2420.9 1117.1L2429.7 1125.9M2420.9 1134.7L2412.1 1125.9M2420.9 1134.7L2429.7 1125.9M2420.9 1134.7L2429.7 1143.5M2420.9 1152.3L2412.1 1143.5M2420.9 1152.3L2412.1 1161.2M2420.9 1152.3L2429.7 1143.5M2420.9 1152.3L2429.7 1161.2M2420.9 1170.0L2412.1 1161.2M2420.9 1170.0L2412.1 1178.8M2420.9 1170.0L2429.7 1161.2M2420.9 1170.0L2429.7 1178.8M2420.9 1187.6L2412.1 1178.8M2420.9 1187.6L2429.7 1178.8M2420.9 1205.2L2412.1 1196.4M2420.9 1205.2L2412.1 1214.0M2420.9 1205.2L2429.7 1214.0M2420.9 1222.8L2412.1 1231.7M2420.9 1222.8L2429.7 1214.0M2420.9 1222.8L2429.7 1231.7M2420.9 1240.5L2412.1 1231.7M2420.9 1240.5L2429.7 1249.3M2420.9 1258.1L2412.1 1249.3M2420.9 1258.1L2412.1 1266.9M2420.9 1258.1L2429.7 1249.3M2420.9 1258.1L2429.7 1266.9M2438.5 1117.1L2429.7 1108.3M2438.5 1117.1L2447.3 1108.3M2438.5 1134.7L2429.7 1125.9M2438.5 1134.7L2447.3 1125.9M2438.5 1152.3L2429.7 1143.5M2438.5 1152.3L2447.3 1143.5M2438.5 1170.0L2429.7 1161.2M2438.5 1170.0L2447.3 1178.8M2438.5 1187.6L2429.7 1178.8M2438.5 1187.6L2429.7 1196.4M2438.5 1187.6L2447.3 1178.8M2438.5 1187.6L2447.3 1196.4M2438.5 1205.2L2429.7 1196.4M2438.5 1205.2L2447.3 1196.4M2438.5 1205.2L2447.3 1214.0M2438.5 1222.8L2447.3 1214.0M2438.5 1222.8L2447.3 1231.7M2438.5 1240.5L2429.7 1231.7M2438.5 1240.5L2429.7 1249.3M2438.5 1240.5L2447.3 1231.7M2438.5 1258.1L2429.7 1249.3M2438.5 1258.1L2429.7 1266.9M2438.5 1258.1L2447.3 1249.3M2438.5 1258.1L2447.3 1266.9M2456.2 1099.4L2465.0 1090.6M2456.2 1099.4L2465.0 1108.3M2456.2 1117.1L2447.3 1108.3M2456.2 1117.1L2447.3 1125.9M2456.2 1117.1L2465.0 1108.3M2456.2 1117.1L2465.0 1125.9M2456.2 1134.7L2447.3 1125.9M2456.2 1134.7L2465.0 1125.9M2456.2 1134.7L2465.0 1143.5M2473.8 1117.1L2465.0 1125.9M2473.8 1117.1L2482.6 1125.9M2473.8 1134.7L2465.0 1125.9M2473.8 1134.7L2482.6 1143.5" stroke="#00E0E0" stroke-width="7" fill="none"/>
<path d="M2368.0 1328.6L2376.8 1319.8M2368.0 1328.6L2376.8 1337.5M2368.0 1363.9L2376.8 1372.7M2368.0 1452.0L2359.2 1443.2M2385.6 1434.4L2376.8 1443.2M2385.6 1434.4L2394.5 1443.2M2385.6 1469.7L2394.5 1460.9M2385.6 1469.7L2394.5 1478.5M2403.3 1381.5L2412.1 1372.7M2403.3 1399.1L2394.5 1390.3M2403.3 1399.1L2412.1 1390.3M2403.3 1399.1L2412.1 1408.0M2403.3 1452.0L2394.5 1460.9M2403.3 1469.7L2394.5 1478.5M2403.3 1469.7L2412.1 1460.9M2403.3 1487.3L2412.1 1478.5M2420.9 1363.9L2412.1 1372.7M2420.9 1399.1L2429.7 1408.0M2420.9 1416.8L2429.7 1408.0M2438.5 1399.1L2429.7 1408.0M2438.5 1416.8L2447.3 1425.6M2438.5 1434.4L2447.3 1425.6M2438.5 1434.4L2447.3 1443.2M2438.5 1469.7L2447.3 1478.5M2456.2 1363.9L2447.3 1372.7M2456.2 1434.4L2465.0 1443.2M2456.2 1469.7L2447.3 1478.5M2456.2 1487.3L2447.3 1496.1M2456.2 1487.3L2465.0 1496.1M2473.8 1381.5L2465.0 1372.7M2473.8 1452.0L2465.0 1443.2M2473.8 1452.0L2482.6 1443.2M2473.8 1487.3L2465.0 1478.5" stroke="#006A6E" stroke-width="8" fill="none"/>
<path d="M2368.0 1346.2L2359.2 1355.1M2368.0 1363.9L2359.2 1372.7M2368.0 1381.5L2376.8 1390.3M2368.0 1399.1L2376.8 1408.0M2368.0 1434.4L2359.2 1443.2M2368.0 1434.4L2376.8 1425.6M2368.0 1434.4L2376.8 1443.2M2385.6 1346.2L2376.8 1355.1M2385.6 1363.9L2394.5 1372.7M2385.6 1399.1L2394.5 1408.0M2385.6 1416.8L2376.8 1408.0M2385.6 1416.8L2394.5 1408.0M2385.6 1452.0L2376.8 1443.2M2385.6 1452.0L2376.8 1460.9M2403.3 1346.2L2394.5 1337.5M2403.3 1346.2L2412.1 1337.5M2403.3 1346.2L2412.1 1355.1M2403.3 1363.9L2394.5 1355.1M2403.3 1363.9L2394.5 1372.7M2403.3 1381.5L2394.5 1372.7M2403.3 1381.5L2394.5 1390.3M2403.3 1416.8L2412.1 1425.6M2403.3 1434.4L2412.1 1443.2M2403.3 1487.3L2394.5 1496.1M2420.9 1363.9L2412.1 1355.1M2420.9 1381.5L2412.1 1372.7M2420.9 1381.5L2429.7 1390.3M2420.9 1416.8L2412.1 1425.6M2420.9 1469.7L2412.1 1460.9M2420.9 1469.7L2412.1 1478.5M2420.9 1469.7L2429.7 1460.9M2420.9 1487.3L2412.1 1478.5M2438.5 1363.9L2429.7 1372.7M2438.5 1363.9L2447.3 1355.1M2438.5 1399.1L2447.3 1390.3M2438.5 1416.8L2429.7 1408.0M2438.5 1416.8L2447.3 1408.0M2438.5 1434.4L2429.7 1425.6M2438.5 1469.7L2429.7 1460.9M2438.5 1469.7L2447.3 1460.9M2438.5 1487.3L2429.7 1496.1M2438.5 1487.3L2447.3 1496.1M2456.2 1363.9L2447.3 1355.1M2456.2 1363.9L2465.0 1355.1M2456.2 1381.5L2447.3 1372.7M2456.2 1381.5L2465.0 1372.7M2456.2 1399.1L2465.0 1408.0M2456.2 1434.4L2447.3 1425.6M2456.2 1434.4L2465.0 1425.6M2456.2 1469.7L2447.3 1460.9M2473.8 1399.1L2482.6 1390.3M2473.8 1399.1L2482.6 1408.0M2473.8 1452.0L2465.0 1460.9M2473.8 1487.3L2482.6 1496.1" stroke="#00A0A4" stroke-width="8" fill="none"/>
<path d="M2359.2 1337.5L2376.8 1355.1M2359.2 1355.1L2376.8 1355.1M2359.2 1355.1L2376.8 1372.7M2359.2 1355.1L2368.0 1328.6M2359.2 1355.1L2385.6 1363.9M2359.2 1372.7L2359.2 1390.3M2359.2 1372.7L2376.8 1355.1M2359.2 1372.7L2385.6 1381.5M2359.2 1390.3L2376.8 1372.7M2359.2 1390.3L2376.8 1408.0M2359.2 1390.3L2368.0 1416.8M2359.2 1425.6L2359.2 1443.2M2359.2 1425.6L2376.8 1425.6M2359.2 1425.6L2385.6 1416.8M2359.2 1443.2L2376.8 1425.6M2359.2 1443.2L2376.8 1443.2M2359.2 1443.2L2376.8 1460.9M2359.2 1443.2L2368.0 1416.8M2376.8 1337.5L2394.5 1355.1M2376.8 1355.1L2376.8 1372.7M2376.8 1355.1L2368.0 1381.5M2376.8 1372.7L2368.0 1346.2M2376.8 1372.7L2385.6 1399.1M2376.8 1372.7L2403.3 1381.5M2376.8 1390.3L2394.5 1390.3M2376.8 1390.3L2368.0 1363.9M2376.8 1390.3L2368.0 1416.8M2376.8 1390.3L2385.6 1416.8M2376.8 1390.3L2403.3 1381.5M2376.8 1408.0L2376.8 1425.6M2376.8 1408.0L2385.6 1381.5M2376.8 1408.0L2385.6 1434.4M2376.8 1425.6L2385.6 1452.0M2376.8 1443.2L2376.8 1460.9M2376.8 1443.2L2394.5 1425.6M2376.8 1443.2L2385.6 1416.8M2376.8 1460.9L2394.5 1478.5M2376.8 1460.9L2368.0 1434.4M2376.8 1460.9L2403.3 1469.7M2394.5 1355.1L2394.5 1372.7M2394.5 1355.1L2412.1 1372.7M2394.5 1355.1L2368.0 1346.2M2394.5 1355.1L2368.0 1363.9M2394.5 1355.1L2420.9 1363.9M2394.5 1372.7L2412.1 1355.1M2394.5 1372.7L2412.1 1372.7M2394.5 1372.7L2368.0 1363.9M2394.5 1372.7L2368.0 1381.5M2394.5 1372.7L2385.6 1346.2M2394.5 1372.7L2385.6 1399.1M2394.5 1372.7L2403.3 1399.1M2394.5 1390.3L2394.5 1408.0M2394.5 1390.3L2412.1 1390.3M2394.5 1390.3L2403.3 1363.9M2394.5 1390.3L2420.9 1381.5M2394.5 1390.3L2420.9 1399.1M2394.5 1408.0L2412.1 1408.0M2394.5 1408.0L2368.0 1416.8M2394.5 1408.0L2385.6 1381.5M2394.5 1408.0L2420.9 1399.1M2394.5 1425.6L2412.1 1408.0M2394.5 1425.6L2412.1 1425.6M2394.5 1425.6L2385.6 1452.0M2394.5 1425.6L2403.3 1399.1M2394.5 1425.6L2403.3 1452.0M2394.5 1443.2L2368.0 1434.4M2394.5 1443.2L2403.3 1469.7M2394.5 1443.2L2420.9 1434.4M2394.5 1460.9L2412.1 1443.2M2394.5 1460.9L2403.3 1434.4M2394.5 1460.9L2420.9 1452.0M2394.5 1478.5L2412.1 1496.1M2394.5 1478.5L2403.3 1452.0M2412.1 1355.1L2429.7 1355.1M2412.1 1372.7L2412.1 1390.3M2412.1 1372.7L2429.7 1390.3M2412.1 1372.7L2385.6 1363.9M2412.1 1372.7L2385.6 1381.5M2412.1 1372.7L2403.3 1399.1M2412.1 1372.7L2438.5 1381.5M2412.1 1390.3L2429.7 1408.0M2412.1 1390.3L2385.6 1399.1M2412.1 1390.3L2403.3 1363.9M2412.1 1390.3L2420.9 1363.9M2412.1 1390.3L2420.9 1416.8M2412.1 1408.0L2429.7 1425.6M2412.1 1408.0L2385.6 1416.8M2412.1 1408.0L2420.9 1381.5M2412.1 1408.0L2420.9 1434.4M2412.1 1408.0L2438.5 1399.1M2412.1 1425.6L2429.7 1408.0M2412.1 1425.6L2429.7 1443.2M2412.1 1425.6L2385.6 1416.8M2412.1 1425.6L2385.6 1434.4M2412.1 1425.6L2420.9 1399.1M2412.1 1425.6L2438.5 1416.8M2412.1 1425.6L2438.5 1434.4M2412.1 1443.2L2412.1 1460.9M2412.1 1443.2L2385.6 1434.4M2412.1 1443.2L2403.3 1469.7M2412.1 1443.2L2438.5 1434.4M2412.1 1443.2L2438.5 1452.0M2412.1 1460.9L2412.1 1478.5M2412.1 1460.9L2429.7 1460.9M2412.1 1460.9L2385.6 1452.0M2412.1 1460.9L2403.3 1434.4M2412.1 1478.5L2429.7 1460.9M2412.1 1478.5L2385.6 1469.7M2412.1 1496.1L2429.7 1478.5M2412.1 1496.1L2420.9 1469.7M2429.7 1355.1L2447.3 1355.1M2429.7 1355.1L2447.3 1372.7M2429.7 1355.1L2403.3 1346.2M2429.7 1372.7L2429.7 1390.3M2429.7 1372.7L2447.3 1355.1M2429.7 1372.7L2447.3 1372.7M2429.7 1390.3L2438.5 1363.9M2429.7 1390.3L2456.2 1399.1M2429.7 1408.0L2429.7 1425.6M2429.7 1408.0L2403.3 1399.1M2429.7 1408.0L2438.5 1381.5M2429.7 1408.0L2438.5 1434.4M2429.7 1408.0L2456.2 1399.1M2429.7 1425.6L2429.7 1443.2M2429.7 1425.6L2420.9 1399.1M2429.7 1425.6L2456.2 1434.4M2429.7 1443.2L2429.7 1460.9M2429.7 1443.2L2447.3 1425.6M2429.7 1443.2L2438.5 1416.8M2429.7 1443.2L2438.5 1469.7M2429.7 1460.9L2403.3 1452.0M2429.7 1460.9L2403.3 1469.7M2429.7 1460.9L2420.9 1487.3M2429.7 1460.9L2456.2 1452.0M2429.7 1478.5L2429.7 1496.1M2429.7 1478.5L2447.3 1496.1M2429.7 1478.5L2403.3 1469.7M2429.7 1478.5L2403.3 1487.3M2429.7 1478.5L2456.2 1487.3M2429.7 1496.1L2447.3 1478.5M2447.3 1355.1L2465.0 1372.7M2447.3 1355.1L2438.5 1381.5M2447.3 1372.7L2465.0 1390.3M2447.3 1372.7L2420.9 1381.5M2447.3 1372.7L2438.5 1399.1M2447.3 1390.3L2447.3 1408.0M2447.3 1390.3L2420.9 1381.5M2447.3 1390.3L2420.9 1399.1M2447.3 1408.0L2465.0 1408.0M2447.3 1408.0L2420.9 1416.8M2447.3 1425.6L2447.3 1443.2M2447.3 1425.6L2465.0 1443.2M2447.3 1425.6L2420.9 1416.8M2447.3 1425.6L2420.9 1434.4M2447.3 1443.2L2465.0 1460.9M2447.3 1443.2L2420.9 1434.4M2447.3 1443.2L2420.9 1452.0M2447.3 1443.2L2438.5 1416.8M2447.3 1443.2L2456.2 1469.7M2447.3 1460.9L2447.3 1478.5M2447.3 1460.9L2465.0 1443.2M2447.3 1460.9L2465.0 1460.9M2447.3 1460.9L2465.0 1478.5M2447.3 1460.9L2438.5 1434.4M2447.3 1460.9L2473.8 1452.0M2447.3 1478.5L2447.3 1496.1M2447.3 1478.5L2438.5 1452.0M2447.3 1478.5L2473.8 1469.7M2447.3 1496.1L2465.0 1496.1M2465.0 1372.7L2465.0 1390.3M2465.0 1372.7L2482.6 1390.3M2465.0 1390.3L2438.5 1399.1M2465.0 1408.0L2482.6 1390.3M2465.0 1408.0L2438.5 1399.1M2465.0 1443.2L2438.5 1452.0M2465.0 1443.2L2456.2 1469.7M2465.0 1443.2L2473.8 1469.7M2465.0 1460.9L2465.0 1478.5M2465.0 1460.9L2456.2 1434.4M2465.0 1460.9L2473.8 1487.3M2465.0 1478.5L2438.5 1469.7M2465.0 1496.1L2482.6 1478.5M2465.0 1496.1L2482.6 1496.1M2465.0 1496.1L2438.5 1487.3M2482.6 1390.3L2456.2 1381.5M2482.6 1460.9L2456.2 1452.0M2482.6 1460.9L2456.2 1469.7M2482.6 1460.9L2473.8 1487.3M2482.6 1478.5L2456.2 1469.7M2482.6 1478.5L2456.2 1487.3M2482.6 1478.5L2473.8 1452.0M2482.6 1496.1L2473.8 1469.7M2368.0 1346.2L2368.0 1363.9M2368.0 1363.9L2385.6 1363.9M2368.0 1416.8L2385.6 1399.1M2368.0 1416.8L2385.6 1416.8M2368.0 1434.4L2368.0 1452.0M2368.0 1434.4L2385.6 1416.8M2385.6 1346.2L2403.3 1346.2M2385.6 1346.2L2403.3 1363.9M2385.6 1363.9L2385.6 1381.5M2385.6 1363.9L2403.3 1381.5M2385.6 1381.5L2403.3 1399.1M2385.6 1399.1L2403.3 1416.8M2385.6 1416.8L2385.6 1434.4M2385.6 1416.8L2403.3 1416.8M2385.6 1434.4L2403.3 1434.4M2385.6 1434.4L2403.3 1452.0M2385.6 1452.0L2403.3 1452.0M2385.6 1469.7L2403.3 1487.3M2403.3 1363.9L2403.3 1381.5M2403.3 1363.9L2420.9 1363.9M2403.3 1381.5L2403.3 1399.1M2403.3 1381.5L2420.9 1363.9M2403.3 1452.0L2403.3 1469.7M2403.3 1452.0L2420.9 1434.4M2403.3 1452.0L2420.9 1469.7M2403.3 1469.7L2420.9 1469.7M2403.3 1469.7L2420.9 1487.3M2420.9 1363.9L2420.9 1381.5M2420.9 1381.5L2420.9 1399.1M2420.9 1381.5L2438.5 1381.5M2420.9 1399.1L2420.9 1416.8M2420.9 1399.1L2438.5 1381.5M2420.9 1452.0L2438.5 1434.4M2420.9 1452.0L2438.5 1452.0M2420.9 1469.7L2438.5 1469.7M2420.9 1487.3L2438.5 1469.7M2438.5 1381.5L2438.5 1399.1M2438.5 1381.5L2456.2 1381.5M2438.5 1416.8L2456.2 1416.8M2438.5 1416.8L2456.2 1434.4M2438.5 1434.4L2456.2 1416.8M2438.5 1452.0L2456.2 1434.4M2438.5 1469.7L2456.2 1452.0M2438.5 1469.7L2456.2 1469.7M2456.2 1363.9L2456.2 1381.5M2456.2 1399.1L2473.8 1399.1M2456.2 1416.8L2456.2 1434.4M2456.2 1434.4L2473.8 1452.0M2456.2 1469.7L2473.8 1487.3M2456.2 1487.3L2473.8 1469.7M2473.8 1381.5L2473.8 1399.1" stroke="#00E0E0" stroke-width="5.5" fill="none"/>
<path d="M2368.0 1328.6L2359.2 1319.8M2368.0 1328.6L2359.2 1337.5M2368.0 1346.2L2359.2 1337.5M2368.0 1346.2L2376.8 1337.5M2368.0 1346.2L2376.8 1355.1M2368.0 1363.9L2359.2 1355.1M2368.0 1363.9L2376.8 1355.1M2368.0 1381.5L2359.2 1372.7M2368.0 1381.5L2359.2 1390.3M2368.0 1381.5L2376.8 1372.7M2368.0 1399.1L2359.2 1390.3M2368.0 1399.1L2359.2 1408.0M2368.0 1399.1L2376.8 1390.3M2368.0 1416.8L2359.2 1408.0M2368.0 1416.8L2359.2 1425.6M2368.0 1416.8L2376.8 1408.0M2368.0 1416.8L2376.8 1425.6M2368.0 1434.4L2359.2 1425.6M2368.0 1452.0L2359.2 1460.9M2368.0 1452.0L2376.8 1443.2M2368.0 1452.0L2376.8 1460.9M2385.6 1346.2L2376.8 1337.5M2385.6 1346.2L2394.5 1337.5M2385.6 1346.2L2394.5 1355.1M2385.6 1363.9L2376.8 1355.1M2385.6 1363.9L2376.8 1372.7M2385.6 1363.9L2394.5 1355.1M2385.6 1381.5L2376.8 1372.7M2385.6 1381.5L2376.8 1390.3M2385.6 1381.5L2394.5 1372.7M2385.6 1381.5L2394.5 1390.3M2385.6 1399.1L2376.8 1390.3M2385.6 1399.1L2376.8 1408.0M2385.6 1399.1L2394.5 1390.3M2385.6 1416.8L2376.8 1425.6M2385.6 1416.8L2394.5 1425.6M2385.6 1434.4L2376.8 1425.6M2385.6 1434.4L2394.5 1425.6M2385.6 1452.0L2394.5 1443.2M2385.6 1452.0L2394.5 1460.9M2385.6 1469.7L2376.8 1460.9M2385.6 1469.7L2376.8 1478.5M2403.3 1346.2L2394.5 1355.1M2403.3 1363.9L2412.1 1355.1M2403.3 1363.9L2412.1 1372.7M2403.3 1381.5L2412.1 1390.3M2403.3 1399.1L2394.5 1408.0M2403.3 1416.8L2394.5 1408.0M2403.3 1416.8L2394.5 1425.6M2403.3 1416.8L2412.1 1408.0M2403.3 1434.4L2394.5 1425.6M2403.3 1434.4L2394.5 1443.2M2403.3 1434.4L2412.1 1425.6M2403.3 1452.0L2394.5 1443.2M2403.3 1452.0L2412.1 1443.2M2403.3 1452.0L2412.1 1460.9M2403.3 1469.7L2394.5 1460.9M2403.3 1469.7L2412.1 1478.5M2403.3 1487.3L2394.5 1478.5M2403.3 1487.3L2412.1 1496.1M2420.9 1363.9L2429.7 1355.1M2420.9 1363.9L2429.7 1372.7M2420.9 1381.5L2412.1 1390.3M2420.9 1381.5L2429.7 1372.7M2420.9 1399.1L2412.1 1390.3M2420.9 1399.1L2412.1 1408.0M2420.9 1399.1L2429.7 1390.3M2420.9 1416.8L2412.1 1408.0M2420.9 1416.8L2429.7 1425.6M2420.9 1434.4L2412.1 1425.6M2420.9 1434.4L2412.1 1443.2M2420.9 1434.4L2429.7 1425.6M2420.9 1434.4L2429.7 1443.2M2420.9 1452.0L2412.1 1443.2M2420.9 1452.0L2412.1 1460.9M2420.9 1452.0L2429.7 1443.2M2420.9 1452.0L2429.7 1460.9M2420.9 1469.7L2429.7 1478.5M2420.9 1487.3L2412.1 1496.1M2420.9 1487.3L2429.7 1478.5M2420.9 1487.3L2429.7 1496.1M2438.5 1363.9L2429.7 1355.1M2438.5 1363.9L2447.3 1372.7M2438.5 1381.5L2429.7 1372.7M2438.5 1381.5L2429.7 1390.3M2438.5 1381.5L2447.3 1372.7M2438.5 1381.5L2447.3 1390.3M2438.5 1399.1L2429.7 1390.3M2438.5 1399.1L2447.3 1408.0M2438.5 1416.8L2429.7 1425.6M2438.5 1434.4L2429.7 1443.2M2438.5 1452.0L2429.7 1443.2M2438.5 1452.0L2429.7 1460.9M2438.5 1452.0L2447.3 1443.2M2438.5 1452.0L2447.3 1460.9M2438.5 1469.7L2429.7 1478.5M2438.5 1487.3L2429.7 1478.5M2438.5 1487.3L2447.3 1478.5M2456.2 1363.9L2465.0 1372.7M2456.2 1381.5L2447.3 1390.3M2456.2 1381.5L2465.0 1390.3M2456.2 1399.1L2447.3 1390.3M2456.2 1399.1L2447.3 1408.0M2456.2 1399.1L2465.0 1390.3M2456.2 1416.8L2447.3 1408.0M2456.2 1416.8L2447.3 1425.6M2456.2 1416.8L2465.0 1408.0M2456.2 1416.8L2465.0 1425.6M2456.2 1434.4L2447.3 1443.2M2456.2 1452.0L2447.3 1443.2M2456.2 1452.0L2447.3 1460.9M2456.2 1452.0L2465.0 1443.2M2456.2 1452.0L2465.0 1460.9M2456.2 1469.7L2465.0 1460.9M2456.2 1469.7L2465.0 1478.5M2456.2 1487.3L2447.3 1478.5M2456.2 1487.3L2465.0 1478.5M2473.8 1381.5L2465.0 1390.3M2473.8 1381.5L2482.6 1372.7M2473.8 1381.5L2482.6 1390.3M2473.8 1399.1L2465.0 1390.3M2473.8 1399.1L2465.0 1408.0M2473.8 1452.0L2482.6 1460.9M2473.8 1469.7L2465.0 1460.9M2473.8 1469.7L2465.0 1478.5M2473.8 1469.7L2482.6 1460.9M2473.8 1469.7L2482.6 1478.5M2473.8 1487.3L2465.0 1496.1M2473.8 1487.3L2482.6 1478.5" stroke="#00E0E0" stroke-width="7" fill="none"/>
<path d="M2491.4 1311.0L2500.2 1302.2M2509.0 1311.0L2517.9 1302.2M2509.0 1346.2L2517.9 1355.1M2526.7 1222.8L2535.5 1231.7M2526.7 1240.5L2535.5 1231.7M2526.7 1258.1L2535.5 1266.9M2526.7 1293.4L2517.9 1302.2M2526.7 1311.0L2517.9 1319.8M2526.7 1311.0L2535.5 1302.2M2526.7 1328.6L2517.9 1337.5M2526.7 1328.6L2535.5 1319.8M2526.7 1346.2L2535.5 1337.5M2544.3 1363.9L2535.5 1372.7M2544.3 1363.9L2553.1 1355.1M2544.3 1399.1L2535.5 1408.0M2544.3 1399.1L2553.1 1408.0M2561.9 1275.7L2553.1 1266.9M2561.9 1311.0L2553.1 1319.8M2561.9 1363.9L2553.1 1355.1M2561.9 1363.9L2553.1 1372.7M2579.6 1222.8L2588.4 1214.0M2579.6 1311.0L2588.4 1302.2M2579.6 1328.6L2588.4 1319.8M2579.6 1363.9L2588.4 1355.1M2597.2 1222.8L2606.0 1231.7M2597.2 1240.5L2588.4 1231.7M2597.2 1240.5L2606.0 1231.7M2597.2 1311.0L2588.4 1319.8M2597.2 1311.0L2606.0 1319.8M2597.2 1346.2L2588.4 1337.5M2614.8 1222.8L2606.0 1214.0M2614.8 1222.8L2623.6 1231.7M2614.8 1240.5L2606.0 1249.3M2614.8 1240.5L2623.6 1249.3M2614.8 1311.0L2606.0 1302.2M2614.8 1328.6L2623.6 1337.5M2614.8 1363.9L2606.0 1355.1M2614.8 1363.9L2606.0 1372.7M2614.8 1363.9L2623.6 1355.1M2632.4 1240.5L2623.6 1249.3M2632.4 1293.4L2623.6 1302.2M2632.4 1293.4L2641.3 1302.2M2632.4 1311.0L2623.6 1319.8" stroke="#006A6E" stroke-width="8" fill="none"/>
<path d="M2491.4 1240.5L2482.6 1249.3M2491.4 1240.5L2500.2 1249.3M2491.4 1258.1L2482.6 1249.3M2491.4 1258.1L2500.2 1249.3M2491.4 1311.0L2482.6 1302.2M2491.4 1311.0L2500.2 1319.8M2491.4 1346.2L2500.2 1355.1M2509.0 1222.8L2500.2 1214.0M2509.0 1222.8L2500.2 1231.7M2509.0 1240.5L2517.9 1249.3M2509.0 1258.1L2500.2 1249.3M2509.0 1258.1L2500.2 1266.9M2509.0 1275.7L2517.9 1266.9M2509.0 1293.4L2517.9 1302.2M2509.0 1328.6L2517.9 1319.8M2509.0 1346.2L2517.9 1337.5M2526.7 1222.8L2517.9 1214.0M2526.7 1222.8L2517.9 1231.7M2526.7 1240.5L2517.9 1249.3M2526.7 1240.5L2535.5 1249.3M2526.7 1258.1L2517.9 1266.9M2526.7 1258.1L2535.5 1249.3M2526.7 1275.7L2517.9 1266.9M2526.7 1346.2L2517.9 1355.1M2526.7 1363.9L2517.9 1372.7M2544.3 1258.1L2553.1 1249.3M2544.3 1293.4L2553.1 1302.2M2544.3 1311.0L2553.1 1302.2M2544.3 1311.0L2553.1 1319.8M2544.3 1328.6L2535.5 1337.5M2544.3 1328.6L2553.1 1319.8M2544.3 1346.2L2553.1 1337.5M2544.3 1363.9L2535.5 1355.1M2544.3 1381.5L2553.1 1390.3M2544.3 1399.1L2535.5 1390.3M2544.3 1399.1L2553.1 1390.3M2561.9 1222.8L2553.1 1214.0M2561.9 1240.5L2553.1 1231.7M2561.9 1258.1L2553.1 1249.3M2561.9 1258.1L2553.1 1266.9M2561.9 1346.2L2553.1 1337.5M2579.6 1346.2L2588.4 1337.5M2579.6 1346.2L2588.4 1355.1M2597.2 1240.5L2588.4 1249.3M2597.2 1258.1L2588.4 1266.9M2597.2 1258.1L2606.0 1266.9M2597.2 1275.7L2588.4 1266.9M2597.2 1363.9L2588.4 1372.7M2597.2 1381.5L2588.4 1372.7M2597.2 1381.5L2606.0 1390.3M2614.8 1240.5L2606.0 1231.7M2614.8 1258.1L2623.6 1249.3M2614.8 1293.4L2623.6 1302.2M2614.8 1311.0L2623.6 1319.8M2614.8 1328.6L2606.0 1319.8M2614.8 1328.6L2606.0 1337.5M2614.8 1328.6L2623.6 1319.8M2614.8 1346.2L2606.0 1337.5M2614.8 1346.2L2606.0 1355.1M2632.4 1240.5L2623.6 1231.7M2632.4 1258.1L2641.3 1249.3M2632.4 1258.1L2641.3 1266.9M2632.4 1275.7L2623.6 1266.9M2632.4 1275.7L2641.3 1266.9M2632.4 1311.0L2641.3 1302.2M2632.4 1328.6L2641.3 1337.5M2650.1 1258.1L2641.3 1266.9M2650.1 1258.1L2658.9 1266.9" stroke="#00A0A4" stroke-width="8" fill="none"/>
<path d="M2482.6 1249.3L2482.6 1266.9M2482.6 1249.3L2509.0 1258.1M2482.6 1266.9L2500.2 1249.3M2500.2 1231.7L2500.2 1249.3M2500.2 1231.7L2517.9 1249.3M2500.2 1231.7L2509.0 1258.1M2500.2 1231.7L2526.7 1222.8M2500.2 1249.3L2500.2 1266.9M2500.2 1249.3L2517.9 1266.9M2500.2 1266.9L2517.9 1266.9M2500.2 1266.9L2526.7 1258.1M2500.2 1302.2L2517.9 1302.2M2500.2 1302.2L2491.4 1275.7M2500.2 1302.2L2526.7 1293.4M2500.2 1319.8L2500.2 1337.5M2500.2 1319.8L2517.9 1319.8M2500.2 1319.8L2509.0 1293.4M2500.2 1337.5L2500.2 1355.1M2500.2 1337.5L2517.9 1319.8M2500.2 1337.5L2517.9 1355.1M2500.2 1337.5L2526.7 1328.6M2517.9 1214.0L2517.9 1231.7M2517.9 1214.0L2535.5 1214.0M2517.9 1231.7L2535.5 1214.0M2517.9 1249.3L2517.9 1266.9M2517.9 1249.3L2535.5 1249.3M2517.9 1249.3L2491.4 1258.1M2517.9 1249.3L2509.0 1222.8M2517.9 1249.3L2544.3 1258.1M2517.9 1266.9L2535.5 1249.3M2517.9 1266.9L2509.0 1240.5M2517.9 1266.9L2526.7 1240.5M2517.9 1266.9L2544.3 1275.7M2517.9 1302.2L2517.9 1319.8M2517.9 1302.2L2535.5 1319.8M2517.9 1302.2L2509.0 1275.7M2517.9 1302.2L2526.7 1275.7M2517.9 1302.2L2544.3 1311.0M2517.9 1319.8L2517.9 1337.5M2517.9 1319.8L2535.5 1337.5M2517.9 1337.5L2491.4 1346.2M2517.9 1337.5L2526.7 1363.9M2517.9 1355.1L2535.5 1355.1M2535.5 1214.0L2526.7 1240.5M2535.5 1231.7L2553.1 1249.3M2535.5 1231.7L2509.0 1240.5M2535.5 1231.7L2526.7 1258.1M2535.5 1231.7L2544.3 1258.1M2535.5 1249.3L2553.1 1231.7M2535.5 1249.3L2509.0 1258.1M2535.5 1249.3L2544.3 1275.7M2535.5 1266.9L2509.0 1258.1M2535.5 1266.9L2526.7 1240.5M2535.5 1266.9L2544.3 1293.4M2535.5 1266.9L2561.9 1275.7M2535.5 1302.2L2535.5 1319.8M2535.5 1302.2L2553.1 1319.8M2535.5 1302.2L2509.0 1311.0M2535.5 1302.2L2526.7 1275.7M2535.5 1319.8L2535.5 1337.5M2535.5 1319.8L2544.3 1293.4M2535.5 1319.8L2544.3 1346.2M2535.5 1319.8L2561.9 1311.0M2535.5 1337.5L2535.5 1355.1M2535.5 1337.5L2526.7 1311.0M2535.5 1337.5L2544.3 1311.0M2535.5 1355.1L2553.1 1372.7M2535.5 1355.1L2544.3 1328.6M2535.5 1372.7L2535.5 1390.3M2535.5 1372.7L2553.1 1372.7M2535.5 1372.7L2526.7 1346.2M2535.5 1372.7L2544.3 1346.2M2535.5 1372.7L2561.9 1381.5M2553.1 1214.0L2544.3 1240.5M2553.1 1249.3L2544.3 1222.8M2553.1 1266.9L2526.7 1258.1M2553.1 1266.9L2579.6 1275.7M2553.1 1302.2L2526.7 1293.4M2553.1 1302.2L2544.3 1328.6M2553.1 1302.2L2561.9 1275.7M2553.1 1302.2L2561.9 1328.6M2553.1 1302.2L2579.6 1293.4M2553.1 1319.8L2553.1 1337.5M2553.1 1319.8L2526.7 1311.0M2553.1 1319.8L2544.3 1346.2M2553.1 1319.8L2561.9 1293.4M2553.1 1319.8L2579.6 1311.0M2553.1 1355.1L2544.3 1328.6M2553.1 1355.1L2544.3 1381.5M2553.1 1372.7L2561.9 1346.2M2553.1 1390.3L2561.9 1363.9M2588.4 1214.0L2606.0 1231.7M2588.4 1214.0L2579.6 1240.5M2588.4 1214.0L2614.8 1222.8M2588.4 1231.7L2614.8 1240.5M2588.4 1249.3L2561.9 1258.1M2588.4 1249.3L2579.6 1275.7M2588.4 1249.3L2597.2 1275.7M2588.4 1249.3L2614.8 1240.5M2588.4 1249.3L2614.8 1258.1M2588.4 1266.9L2606.0 1266.9M2588.4 1266.9L2561.9 1275.7M2588.4 1266.9L2579.6 1293.4M2588.4 1302.2L2588.4 1319.8M2588.4 1302.2L2606.0 1319.8M2588.4 1302.2L2561.9 1293.4M2588.4 1302.2L2561.9 1311.0M2588.4 1302.2L2597.2 1275.7M2588.4 1302.2L2614.8 1311.0M2588.4 1319.8L2606.0 1302.2M2588.4 1319.8L2606.0 1319.8M2588.4 1319.8L2579.6 1346.2M2588.4 1319.8L2597.2 1346.2M2588.4 1337.5L2588.4 1355.1M2588.4 1337.5L2606.0 1355.1M2588.4 1337.5L2614.8 1328.6M2588.4 1355.1L2579.6 1381.5M2588.4 1355.1L2597.2 1328.6M2588.4 1355.1L2597.2 1381.5M2588.4 1372.7L2606.0 1355.1M2588.4 1372.7L2561.9 1381.5M2606.0 1214.0L2606.0 1231.7M2606.0 1214.0L2614.8 1240.5M2606.0 1231.7L2606.0 1249.3M2606.0 1231.7L2623.6 1249.3M2606.0 1231.7L2597.2 1258.1M2606.0 1231.7L2632.4 1240.5M2606.0 1249.3L2623.6 1266.9M2606.0 1249.3L2597.2 1222.8M2606.0 1249.3L2597.2 1275.7M2606.0 1249.3L2614.8 1275.7M2606.0 1249.3L2632.4 1240.5M2606.0 1302.2L2597.2 1328.6M2606.0 1302.2L2614.8 1328.6M2606.0 1302.2L2632.4 1293.4M2606.0 1319.8L2606.0 1337.5M2606.0 1319.8L2623.6 1302.2M2606.0 1319.8L2579.6 1328.6M2606.0 1319.8L2597.2 1293.4M2606.0 1319.8L2614.8 1293.4M2606.0 1319.8L2614.8 1346.2M2606.0 1319.8L2632.4 1311.0M2606.0 1337.5L2623.6 1355.1M2606.0 1337.5L2597.2 1363.9M2606.0 1337.5L2614.8 1311.0M2606.0 1337.5L2614.8 1363.9M2606.0 1337.5L2632.4 1346.2M2606.0 1355.1L2606.0 1372.7M2606.0 1355.1L2579.6 1363.9M2606.0 1355.1L2597.2 1328.6M2606.0 1372.7L2579.6 1363.9M2606.0 1372.7L2597.2 1346.2M2623.6 1231.7L2641.3 1249.3M2623.6 1231.7L2597.2 1240.5M2623.6 1231.7L2632.4 1258.1M2623.6 1231.7L2650.1 1240.5M2623.6 1249.3L2641.3 1249.3M2623.6 1249.3L2650.1 1258.1M2623.6 1266.9L2641.3 1249.3M2623.6 1266.9L2597.2 1275.7M2623.6 1266.9L2614.8 1293.4M2623.6 1302.2L2641.3 1319.8M2623.6 1302.2L2614.8 1328.6M2623.6 1319.8L2623.6 1337.5M2623.6 1319.8L2641.3 1302.2M2623.6 1337.5L2597.2 1346.2M2623.6 1337.5L2614.8 1363.9M2623.6 1337.5L2632.4 1311.0M2623.6 1355.1L2597.2 1346.2M2623.6 1355.1L2597.2 1363.9M2641.3 1249.3L2614.8 1258.1M2641.3 1302.2L2632.4 1275.7M2641.3 1302.2L2632.4 1328.6M2641.3 1319.8L2614.8 1328.6M2641.3 1337.5L2614.8 1346.2M2641.3 1337.5L2632.4 1311.0M2658.9 1249.3L2632.4 1240.5M2658.9 1249.3L2632.4 1258.1M2676.5 1249.3L2650.1 1258.1M2491.4 1240.5L2509.0 1222.8M2491.4 1240.5L2509.0 1240.5M2491.4 1258.1L2509.0 1258.1M2491.4 1275.7L2509.0 1275.7M2491.4 1346.2L2509.0 1346.2M2509.0 1222.8L2526.7 1222.8M2509.0 1222.8L2526.7 1240.5M2509.0 1275.7L2509.0 1293.4M2509.0 1293.4L2526.7 1293.4M2509.0 1293.4L2526.7 1311.0M2509.0 1311.0L2526.7 1311.0M2509.0 1328.6L2526.7 1328.6M2509.0 1328.6L2526.7 1346.2M2526.7 1222.8L2526.7 1240.5M2526.7 1222.8L2544.3 1222.8M2526.7 1240.5L2544.3 1240.5M2526.7 1258.1L2526.7 1275.7M2526.7 1275.7L2544.3 1275.7M2526.7 1275.7L2544.3 1293.4M2526.7 1293.4L2526.7 1311.0M2526.7 1311.0L2544.3 1293.4M2526.7 1328.6L2544.3 1328.6M2526.7 1346.2L2544.3 1328.6M2526.7 1346.2L2544.3 1346.2M2544.3 1222.8L2544.3 1240.5M2544.3 1222.8L2561.9 1222.8M2544.3 1240.5L2544.3 1258.1M2544.3 1275.7L2561.9 1258.1M2544.3 1275.7L2561.9 1275.7M2544.3 1275.7L2561.9 1293.4M2544.3 1293.4L2544.3 1311.0M2544.3 1293.4L2561.9 1311.0M2544.3 1311.0L2544.3 1328.6M2544.3 1328.6L2561.9 1311.0M2544.3 1346.2L2561.9 1363.9M2544.3 1363.9L2544.3 1381.5M2544.3 1363.9L2561.9 1346.2M2544.3 1381.5L2561.9 1363.9M2544.3 1399.1L2561.9 1381.5M2561.9 1222.8L2579.6 1240.5M2561.9 1240.5L2561.9 1258.1M2561.9 1240.5L2579.6 1258.1M2561.9 1275.7L2579.6 1275.7M2561.9 1275.7L2579.6 1293.4M2561.9 1293.4L2579.6 1293.4M2561.9 1311.0L2561.9 1328.6M2561.9 1328.6L2561.9 1346.2M2561.9 1328.6L2579.6 1328.6M2561.9 1346.2L2579.6 1328.6M2579.6 1240.5L2579.6 1258.1M2579.6 1240.5L2597.2 1222.8M2579.6 1240.5L2597.2 1258.1M2579.6 1258.1L2597.2 1240.5M2579.6 1258.1L2597.2 1275.7M2579.6 1275.7L2597.2 1275.7M2579.6 1275.7L2597.2 1293.4M2579.6 1293.4L2597.2 1311.0M2579.6 1311.0L2597.2 1311.0M2579.6 1328.6L2597.2 1311.0M2579.6 1346.2L2579.6 1363.9M2579.6 1346.2L2597.2 1346.2M2579.6 1346.2L2597.2 1363.9M2579.6 1363.9L2597.2 1381.5M2579.6 1381.5L2597.2 1363.9M2597.2 1240.5L2614.8 1258.1M2597.2 1258.1L2614.8 1275.7M2597.2 1275.7L2614.8 1258.1M2597.2 1293.4L2614.8 1275.7M2597.2 1293.4L2614.8 1311.0M2597.2 1311.0L2614.8 1311.0M2597.2 1328.6L2614.8 1346.2M2597.2 1363.9L2597.2 1381.5M2597.2 1363.9L2614.8 1346.2M2597.2 1381.5L2614.8 1363.9M2614.8 1240.5L2614.8 1258.1M2614.8 1293.4L2614.8 1311.0M2614.8 1293.4L2632.4 1275.7M2614.8 1328.6L2632.4 1328.6M2614.8 1346.2L2614.8 1363.9M2614.8 1346.2L2632.4 1328.6M2614.8 1363.9L2632.4 1346.2M2632.4 1258.1L2650.1 1240.5M2632.4 1293.4L2632.4 1311.0M2632.4 1311.0L2632.4 1328.6M2650.1 1240.5L2650.1 1258.1" stroke="#00E0E0" stroke-width="5.5" fill="none"/>
<path d="M2491.4 1240.5L2482.6 1231.7M2491.4 1240.5L2500.2 1231.7M2491.4 1258.1L2482.6 1266.9M2491.4 1258.1L2500.2 1266.9M2491.4 1275.7L2482.6 1266.9M2491.4 1275.7L2500.2 1266.9M2491.4 1311.0L2482.6 1319.8M2491.4 1346.2L2482.6 1337.5M2491.4 1346.2L2482.6 1355.1M2491.4 1346.2L2500.2 1337.5M2509.0 1222.8L2517.9 1214.0M2509.0 1222.8L2517.9 1231.7M2509.0 1240.5L2500.2 1231.7M2509.0 1240.5L2500.2 1249.3M2509.0 1240.5L2517.9 1231.7M2509.0 1258.1L2517.9 1249.3M2509.0 1258.1L2517.9 1266.9M2509.0 1275.7L2500.2 1266.9M2509.0 1293.4L2500.2 1302.2M2509.0 1311.0L2500.2 1302.2M2509.0 1311.0L2500.2 1319.8M2509.0 1311.0L2517.9 1319.8M2509.0 1328.6L2500.2 1319.8M2509.0 1328.6L2500.2 1337.5M2509.0 1328.6L2517.9 1337.5M2509.0 1346.2L2500.2 1337.5M2509.0 1346.2L2500.2 1355.1M2526.7 1222.8L2535.5 1214.0M2526.7 1240.5L2517.9 1231.7M2526.7 1258.1L2517.9 1249.3M2526.7 1275.7L2535.5 1266.9M2526.7 1293.4L2535.5 1302.2M2526.7 1311.0L2517.9 1302.2M2526.7 1311.0L2535.5 1319.8M2526.7 1328.6L2517.9 1319.8M2526.7 1328.6L2535.5 1337.5M2526.7 1346.2L2517.9 1337.5M2526.7 1346.2L2535.5 1355.1M2526.7 1363.9L2517.9 1355.1M2526.7 1363.9L2535.5 1355.1M2526.7 1363.9L2535.5 1372.7M2544.3 1222.8L2535.5 1214.0M2544.3 1222.8L2535.5 1231.7M2544.3 1222.8L2553.1 1214.0M2544.3 1222.8L2553.1 1231.7M2544.3 1240.5L2535.5 1231.7M2544.3 1240.5L2535.5 1249.3M2544.3 1240.5L2553.1 1231.7M2544.3 1240.5L2553.1 1249.3M2544.3 1258.1L2535.5 1249.3M2544.3 1258.1L2535.5 1266.9M2544.3 1258.1L2553.1 1266.9M2544.3 1275.7L2535.5 1266.9M2544.3 1275.7L2553.1 1266.9M2544.3 1293.4L2535.5 1302.2M2544.3 1311.0L2535.5 1302.2M2544.3 1311.0L2535.5 1319.8M2544.3 1328.6L2535.5 1319.8M2544.3 1328.6L2553.1 1337.5M2544.3 1346.2L2535.5 1337.5M2544.3 1346.2L2535.5 1355.1M2544.3 1346.2L2553.1 1355.1M2544.3 1363.9L2553.1 1372.7M2544.3 1381.5L2535.5 1372.7M2544.3 1381.5L2535.5 1390.3M2544.3 1381.5L2553.1 1372.7M2561.9 1222.8L2553.1 1231.7M2561.9 1240.5L2553.1 1249.3M2561.9 1293.4L2553.1 1302.2M2561.9 1311.0L2553.1 1302.2M2561.9 1328.6L2553.1 1319.8M2561.9 1328.6L2553.1 1337.5M2561.9 1346.2L2553.1 1355.1M2561.9 1381.5L2553.1 1372.7M2561.9 1381.5L2553.1 1390.3M2579.6 1222.8L2588.4 1231.7M2579.6 1240.5L2588.4 1231.7M2579.6 1240.5L2588.4 1249.3M2579.6 1258.1L2588.4 1249.3M2579.6 1258.1L2588.4 1266.9M2579.6 1275.7L2588.4 1266.9M2579.6 1293.4L2588.4 1302.2M2579.6 1311.0L2588.4 1319.8M2579.6 1328.6L2588.4 1337.5M2579.6 1363.9L2588.4 1372.7M2579.6 1381.5L2588.4 1372.7M2579.6 1381.5L2588.4 1390.3M2597.2 1222.8L2588.4 1214.0M2597.2 1222.8L2588.4 1231.7M2597.2 1222.8L2606.0 1214.0M2597.2 1240.5L2606.0 1249.3M2597.2 1258.1L2588.4 1249.3M2597.2 1258.1L2606.0 1249.3M2597.2 1275.7L2606.0 1266.9M2597.2 1293.4L2588.4 1302.2M2597.2 1293.4L2606.0 1302.2M2597.2 1311.0L2588.4 1302.2M2597.2 1311.0L2606.0 1302.2M2597.2 1328.6L2588.4 1319.8M2597.2 1328.6L2588.4 1337.5M2597.2 1328.6L2606.0 1319.8M2597.2 1328.6L2606.0 1337.5M2597.2 1346.2L2588.4 1355.1M2597.2 1346.2L2606.0 1337.5M2597.2 1346.2L2606.0 1355.1M2597.2 1363.9L2588.4 1355.1M2597.2 1363.9L2606.0 1355.1M2597.2 1363.9L2606.0 1372.7M2597.2 1381.5L2588.4 1390.3M2597.2 1381.5L2606.0 1372.7M2614.8 1222.8L2606.0 1231.7M2614.8 1222.8L2623.6 1214.0M2614.8 1240.5L2623.6 1231.7M2614.8 1258.1L2606.0 1249.3M2614.8 1258.1L2606.0 1266.9M2614.8 1258.1L2623.6 1266.9M2614.8 1275.7L2606.0 1266.9M2614.8 1275.7L2623.6 1266.9M2614.8 1293.4L2606.0 1302.2M2614.8 1311.0L2606.0 1319.8M2614.8 1311.0L2623.6 1302.2M2614.8 1346.2L2623.6 1337.5M2614.8 1346.2L2623.6 1355.1M2614.8 1363.9L2623.6 1372.7M2632.4 1240.5L2641.3 1231.7M2632.4 1240.5L2641.3 1249.3M2632.4 1258.1L2623.6 1249.3M2632.4 1258.1L2623.6 1266.9M2632.4 1311.0L2623.6 1302.2M2632.4 1311.0L2641.3 1319.8M2632.4 1328.6L2623.6 1319.8M2632.4 1328.6L2623.6 1337.5M2632.4 1328.6L2641.3 1319.8M2632.4 1346.2L2623.6 1337.5M2632.4 1346.2L2623.6 1355.1M2632.4 1346.2L2641.3 1337.5M2632.4 1346.2L2641.3 1355.1M2650.1 1240.5L2641.3 1231.7M2650.1 1240.5L2641.3 1249.3M2650.1 1240.5L2658.9 1231.7M2650.1 1240.5L2658.9 1249.3M2650.1 1258.1L2641.3 1249.3M2650.1 1258.1L2658.9 1249.3" stroke="#00E0E0" stroke-width="7" fill="none"/>
<path d="M2650.1 1152.3L2641.3 1143.5M2667.7 1099.4L2658.9 1108.3M2667.7 1099.4L2676.5 1090.6M2685.3 1081.8L2694.2 1090.6M2685.3 1117.1L2676.5 1125.9M2685.3 1117.1L2694.2 1108.3M2685.3 1117.1L2694.2 1125.9M2685.3 1170.0L2676.5 1161.2M2685.3 1187.6L2694.2 1178.8M2685.3 1187.6L2694.2 1196.4M2703.0 1134.7L2711.8 1125.9M2720.6 1081.8L2729.4 1090.6M2720.6 1099.4L2711.8 1108.3M2720.6 1117.1L2729.4 1125.9M2720.6 1134.7L2711.8 1125.9M2720.6 1152.3L2729.4 1161.2M2720.6 1187.6L2711.8 1178.8M2738.2 1117.1L2747.1 1108.3M2738.2 1134.7L2729.4 1143.5M2738.2 1134.7L2747.1 1125.9M2738.2 1170.0L2747.1 1161.2M2755.9 1099.4L2747.1 1108.3M2755.9 1117.1L2764.7 1108.3M2755.9 1134.7L2747.1 1125.9M2755.9 1205.2L2747.1 1214.0M2755.9 1205.2L2764.7 1196.4M2773.5 1134.7L2764.7 1125.9M2773.5 1170.0L2764.7 1161.2" stroke="#006A6E" stroke-width="8" fill="none"/>
<path d="M2650.1 1152.3L2658.9 1143.5M2650.1 1152.3L2658.9 1161.2M2667.7 1081.8L2676.5 1073.0M2667.7 1117.1L2676.5 1108.3M2667.7 1152.3L2676.5 1143.5M2667.7 1152.3L2676.5 1161.2M2667.7 1170.0L2658.9 1178.8M2667.7 1170.0L2676.5 1178.8M2685.3 1099.4L2676.5 1090.6M2685.3 1134.7L2676.5 1143.5M2685.3 1170.0L2694.2 1161.2M2685.3 1170.0L2694.2 1178.8M2703.0 1081.8L2694.2 1090.6M2703.0 1081.8L2711.8 1073.0M2703.0 1099.4L2711.8 1108.3M2703.0 1117.1L2694.2 1125.9M2703.0 1134.7L2694.2 1143.5M2703.0 1152.3L2694.2 1161.2M2703.0 1170.0L2694.2 1178.8M2703.0 1187.6L2711.8 1178.8M2720.6 1081.8L2711.8 1073.0M2720.6 1081.8L2711.8 1090.6M2720.6 1117.1L2711.8 1108.3M2720.6 1117.1L2729.4 1108.3M2720.6 1134.7L2711.8 1143.5M2720.6 1152.3L2711.8 1143.5M2720.6 1170.0L2711.8 1161.2M2720.6 1187.6L2729.4 1178.8M2720.6 1187.6L2729.4 1196.4M2738.2 1099.4L2747.1 1090.6M2738.2 1117.1L2729.4 1125.9M2738.2 1117.1L2747.1 1125.9M2738.2 1170.0L2729.4 1178.8M2755.9 1099.4L2764.7 1090.6M2755.9 1134.7L2747.1 1143.5M2755.9 1134.7L2764.7 1125.9M2755.9 1134.7L2764.7 1143.5M2755.9 1152.3L2764.7 1161.2M2755.9 1170.0L2747.1 1161.2M2755.9 1170.0L2747.1 1178.8M2755.9 1187.6L2747.1 1196.4M2755.9 1187.6L2764.7 1178.8M2755.9 1205.2L2747.1 1196.4M2773.5 1117.1L2764.7 1125.9M2773.5 1117.1L2782.3 1108.3M2773.5 1134.7L2782.3 1125.9M2773.5 1152.3L2782.3 1143.5M2773.5 1170.0L2764.7 1178.8M2773.5 1187.6L2782.3 1196.4M2773.5 1205.2L2782.3 1196.4M2773.5 1222.8L2782.3 1231.7" stroke="#00A0A4" stroke-width="8" fill="none"/>
<path d="M2658.9 1143.5L2658.9 1161.2M2658.9 1143.5L2676.5 1143.5M2658.9 1143.5L2667.7 1117.1M2658.9 1161.2L2685.3 1152.3M2658.9 1161.2L2685.3 1170.0M2676.5 1108.3L2694.2 1108.3M2676.5 1108.3L2694.2 1125.9M2676.5 1108.3L2667.7 1081.8M2676.5 1108.3L2685.3 1134.7M2676.5 1108.3L2703.0 1099.4M2676.5 1125.9L2694.2 1125.9M2676.5 1125.9L2694.2 1143.5M2676.5 1125.9L2685.3 1152.3M2676.5 1125.9L2703.0 1134.7M2676.5 1143.5L2676.5 1161.2M2676.5 1143.5L2694.2 1143.5M2676.5 1143.5L2694.2 1161.2M2676.5 1143.5L2650.1 1152.3M2676.5 1161.2L2694.2 1143.5M2676.5 1161.2L2694.2 1161.2M2676.5 1161.2L2703.0 1170.0M2676.5 1178.8L2703.0 1170.0M2676.5 1178.8L2703.0 1187.6M2694.2 1073.0L2703.0 1099.4M2694.2 1073.0L2720.6 1081.8M2694.2 1090.6L2694.2 1108.3M2694.2 1090.6L2711.8 1073.0M2694.2 1090.6L2711.8 1090.6M2694.2 1090.6L2711.8 1108.3M2694.2 1090.6L2667.7 1081.8M2694.2 1090.6L2667.7 1099.4M2694.2 1108.3L2694.2 1125.9M2694.2 1108.3L2711.8 1090.6M2694.2 1108.3L2667.7 1117.1M2694.2 1108.3L2685.3 1081.8M2694.2 1108.3L2685.3 1134.7M2694.2 1108.3L2720.6 1117.1M2694.2 1125.9L2694.2 1143.5M2694.2 1125.9L2667.7 1134.7M2694.2 1125.9L2720.6 1134.7M2694.2 1143.5L2711.8 1125.9M2694.2 1143.5L2711.8 1143.5M2694.2 1143.5L2667.7 1152.3M2694.2 1143.5L2685.3 1117.1M2694.2 1143.5L2703.0 1170.0M2694.2 1161.2L2694.2 1178.8M2694.2 1161.2L2685.3 1187.6M2694.2 1161.2L2720.6 1170.0M2694.2 1178.8L2667.7 1170.0M2694.2 1178.8L2720.6 1170.0M2694.2 1178.8L2720.6 1187.6M2711.8 1073.0L2729.4 1090.6M2711.8 1073.0L2703.0 1099.4M2711.8 1108.3L2729.4 1108.3M2711.8 1108.3L2703.0 1081.8M2711.8 1108.3L2738.2 1099.4M2711.8 1108.3L2738.2 1117.1M2711.8 1125.9L2685.3 1134.7M2711.8 1125.9L2703.0 1099.4M2711.8 1125.9L2738.2 1117.1M2711.8 1143.5L2711.8 1161.2M2711.8 1143.5L2729.4 1143.5M2711.8 1143.5L2729.4 1161.2M2711.8 1143.5L2685.3 1152.3M2711.8 1143.5L2720.6 1117.1M2711.8 1143.5L2720.6 1170.0M2711.8 1161.2L2711.8 1178.8M2711.8 1161.2L2703.0 1134.7M2711.8 1161.2L2720.6 1187.6M2711.8 1161.2L2738.2 1170.0M2711.8 1178.8L2729.4 1178.8M2711.8 1178.8L2685.3 1170.0M2729.4 1073.0L2738.2 1099.4M2729.4 1090.6L2747.1 1108.3M2729.4 1090.6L2720.6 1117.1M2729.4 1108.3L2703.0 1099.4M2729.4 1108.3L2720.6 1081.8M2729.4 1108.3L2755.9 1099.4M2729.4 1125.9L2747.1 1125.9M2729.4 1125.9L2703.0 1134.7M2729.4 1125.9L2755.9 1117.1M2729.4 1143.5L2747.1 1143.5M2729.4 1143.5L2703.0 1134.7M2729.4 1143.5L2720.6 1117.1M2729.4 1143.5L2738.2 1170.0M2729.4 1161.2L2703.0 1152.3M2729.4 1161.2L2720.6 1134.7M2729.4 1178.8L2747.1 1161.2M2729.4 1178.8L2703.0 1170.0M2729.4 1178.8L2720.6 1152.3M2729.4 1178.8L2755.9 1187.6M2747.1 1090.6L2720.6 1081.8M2747.1 1090.6L2755.9 1117.1M2747.1 1108.3L2764.7 1108.3M2747.1 1108.3L2764.7 1125.9M2747.1 1108.3L2738.2 1134.7M2747.1 1125.9L2764.7 1108.3M2747.1 1125.9L2764.7 1143.5M2747.1 1125.9L2720.6 1117.1M2747.1 1125.9L2720.6 1134.7M2747.1 1125.9L2738.2 1152.3M2747.1 1125.9L2773.5 1117.1M2747.1 1143.5L2747.1 1161.2M2747.1 1143.5L2764.7 1125.9M2747.1 1143.5L2764.7 1143.5M2747.1 1143.5L2720.6 1134.7M2747.1 1143.5L2738.2 1170.0M2747.1 1143.5L2755.9 1170.0M2747.1 1143.5L2773.5 1134.7M2747.1 1161.2L2747.1 1178.8M2747.1 1161.2L2720.6 1170.0M2747.1 1161.2L2755.9 1187.6M2747.1 1161.2L2773.5 1152.3M2747.1 1161.2L2773.5 1170.0M2747.1 1178.8L2747.1 1196.4M2747.1 1178.8L2720.6 1170.0M2747.1 1196.4L2764.7 1196.4M2747.1 1196.4L2720.6 1187.6M2747.1 1196.4L2738.2 1170.0M2747.1 1196.4L2755.9 1170.0M2764.7 1108.3L2782.3 1108.3M2764.7 1125.9L2782.3 1108.3M2764.7 1125.9L2782.3 1143.5M2764.7 1125.9L2738.2 1134.7M2764.7 1125.9L2773.5 1152.3M2764.7 1143.5L2764.7 1161.2M2764.7 1143.5L2782.3 1143.5M2764.7 1143.5L2738.2 1134.7M2764.7 1143.5L2755.9 1117.1M2764.7 1161.2L2738.2 1170.0M2764.7 1161.2L2755.9 1187.6M2764.7 1161.2L2773.5 1134.7M2764.7 1178.8L2782.3 1161.2M2764.7 1178.8L2738.2 1170.0M2764.7 1178.8L2773.5 1152.3M2764.7 1196.4L2764.7 1214.0M2764.7 1196.4L2773.5 1170.0M2764.7 1196.4L2773.5 1222.8M2764.7 1214.0L2755.9 1187.6M2782.3 1125.9L2755.9 1134.7M2782.3 1125.9L2773.5 1152.3M2782.3 1143.5L2755.9 1134.7M2782.3 1143.5L2755.9 1152.3M2782.3 1161.2L2755.9 1170.0M2782.3 1161.2L2773.5 1187.6M2782.3 1178.8L2782.3 1196.4M2782.3 1178.8L2755.9 1170.0M2782.3 1178.8L2755.9 1187.6M2782.3 1178.8L2773.5 1152.3M2782.3 1178.8L2773.5 1205.2M2782.3 1196.4L2755.9 1187.6M2782.3 1196.4L2773.5 1170.0M2782.3 1196.4L2773.5 1222.8M2782.3 1214.0L2755.9 1205.2M2782.3 1214.0L2773.5 1187.6M2650.1 1152.3L2667.7 1134.7M2650.1 1152.3L2667.7 1170.0M2667.7 1081.8L2667.7 1099.4M2667.7 1081.8L2685.3 1081.8M2667.7 1099.4L2667.7 1117.1M2667.7 1099.4L2685.3 1117.1M2667.7 1117.1L2685.3 1134.7M2667.7 1134.7L2685.3 1152.3M2667.7 1152.3L2667.7 1170.0M2667.7 1152.3L2685.3 1170.0M2667.7 1170.0L2685.3 1152.3M2685.3 1099.4L2685.3 1117.1M2685.3 1099.4L2703.0 1117.1M2685.3 1117.1L2703.0 1134.7M2685.3 1134.7L2703.0 1134.7M2685.3 1152.3L2703.0 1152.3M2685.3 1170.0L2703.0 1187.6M2703.0 1081.8L2703.0 1099.4M2703.0 1099.4L2720.6 1081.8M2703.0 1117.1L2720.6 1134.7M2703.0 1152.3L2703.0 1170.0M2703.0 1152.3L2720.6 1134.7M2703.0 1152.3L2720.6 1152.3M2703.0 1170.0L2703.0 1187.6M2703.0 1170.0L2720.6 1152.3M2703.0 1187.6L2720.6 1187.6M2720.6 1081.8L2738.2 1081.8M2720.6 1099.4L2738.2 1099.4M2720.6 1117.1L2738.2 1099.4M2720.6 1134.7L2738.2 1134.7M2720.6 1152.3L2720.6 1170.0M2720.6 1152.3L2738.2 1134.7M2720.6 1170.0L2738.2 1152.3M2720.6 1170.0L2738.2 1170.0M2738.2 1081.8L2738.2 1099.4M2738.2 1081.8L2755.9 1099.4M2738.2 1099.4L2738.2 1117.1M2738.2 1099.4L2755.9 1099.4M2738.2 1117.1L2738.2 1134.7M2738.2 1170.0L2755.9 1152.3M2738.2 1170.0L2755.9 1187.6M2755.9 1117.1L2755.9 1134.7M2755.9 1152.3L2755.9 1170.0M2755.9 1152.3L2773.5 1134.7M2755.9 1152.3L2773.5 1152.3M2755.9 1152.3L2773.5 1170.0M2755.9 1170.0L2755.9 1187.6M2755.9 1187.6L2773.5 1205.2M2773.5 1170.0L2773.5 1187.6M2773.5 1205.2L2773.5 1222.8" stroke="#00E0E0" stroke-width="5.5" fill="none"/>
<path d="M2650.1 1152.3L2641.3 1161.2M2667.7 1081.8L2658.9 1073.0M2667.7 1081.8L2658.9 1090.6M2667.7 1081.8L2676.5 1090.6M2667.7 1099.4L2658.9 1090.6M2667.7 1099.4L2676.5 1108.3M2667.7 1117.1L2658.9 1108.3M2667.7 1117.1L2658.9 1125.9M2667.7 1117.1L2676.5 1125.9M2667.7 1134.7L2658.9 1125.9M2667.7 1134.7L2658.9 1143.5M2667.7 1134.7L2676.5 1125.9M2667.7 1134.7L2676.5 1143.5M2667.7 1152.3L2658.9 1143.5M2667.7 1152.3L2658.9 1161.2M2667.7 1170.0L2658.9 1161.2M2667.7 1170.0L2676.5 1161.2M2685.3 1081.8L2676.5 1073.0M2685.3 1081.8L2676.5 1090.6M2685.3 1081.8L2694.2 1073.0M2685.3 1099.4L2676.5 1108.3M2685.3 1099.4L2694.2 1090.6M2685.3 1099.4L2694.2 1108.3M2685.3 1117.1L2676.5 1108.3M2685.3 1134.7L2676.5 1125.9M2685.3 1134.7L2694.2 1125.9M2685.3 1134.7L2694.2 1143.5M2685.3 1152.3L2676.5 1143.5M2685.3 1152.3L2676.5 1161.2M2685.3 1152.3L2694.2 1143.5M2685.3 1152.3L2694.2 1161.2M2685.3 1170.0L2676.5 1178.8M2685.3 1187.6L2676.5 1178.8M2685.3 1187.6L2676.5 1196.4M2703.0 1081.8L2694.2 1073.0M2703.0 1081.8L2711.8 1090.6M2703.0 1099.4L2694.2 1090.6M2703.0 1099.4L2694.2 1108.3M2703.0 1099.4L2711.8 1090.6M2703.0 1117.1L2694.2 1108.3M2703.0 1117.1L2711.8 1108.3M2703.0 1117.1L2711.8 1125.9M2703.0 1134.7L2694.2 1125.9M2703.0 1134.7L2711.8 1143.5M2703.0 1152.3L2694.2 1143.5M2703.0 1152.3L2711.8 1143.5M2703.0 1152.3L2711.8 1161.2M2703.0 1170.0L2694.2 1161.2M2703.0 1170.0L2711.8 1161.2M2703.0 1170.0L2711.8 1178.8M2703.0 1187.6L2694.2 1178.8M2703.0 1187.6L2694.2 1196.4M2703.0 1187.6L2711.8 1196.4M2720.6 1081.8L2729.4 1073.0M2720.6 1099.4L2711.8 1090.6M2720.6 1099.4L2729.4 1090.6M2720.6 1099.4L2729.4 1108.3M2720.6 1117.1L2711.8 1125.9M2720.6 1134.7L2729.4 1125.9M2720.6 1134.7L2729.4 1143.5M2720.6 1152.3L2711.8 1161.2M2720.6 1152.3L2729.4 1143.5M2720.6 1170.0L2711.8 1178.8M2720.6 1170.0L2729.4 1161.2M2720.6 1170.0L2729.4 1178.8M2720.6 1187.6L2711.8 1196.4M2738.2 1081.8L2729.4 1073.0M2738.2 1081.8L2729.4 1090.6M2738.2 1081.8L2747.1 1073.0M2738.2 1081.8L2747.1 1090.6M2738.2 1099.4L2729.4 1090.6M2738.2 1099.4L2729.4 1108.3M2738.2 1099.4L2747.1 1108.3M2738.2 1117.1L2729.4 1108.3M2738.2 1134.7L2729.4 1125.9M2738.2 1134.7L2747.1 1143.5M2738.2 1152.3L2729.4 1143.5M2738.2 1152.3L2729.4 1161.2M2738.2 1152.3L2747.1 1143.5M2738.2 1152.3L2747.1 1161.2M2738.2 1170.0L2729.4 1161.2M2738.2 1170.0L2747.1 1178.8M2755.9 1099.4L2747.1 1090.6M2755.9 1099.4L2764.7 1108.3M2755.9 1117.1L2747.1 1108.3M2755.9 1117.1L2747.1 1125.9M2755.9 1117.1L2764.7 1125.9M2755.9 1152.3L2747.1 1143.5M2755.9 1152.3L2747.1 1161.2M2755.9 1152.3L2764.7 1143.5M2755.9 1170.0L2764.7 1161.2M2755.9 1170.0L2764.7 1178.8M2755.9 1187.6L2747.1 1178.8M2755.9 1187.6L2764.7 1196.4M2755.9 1205.2L2764.7 1214.0M2773.5 1117.1L2764.7 1108.3M2773.5 1117.1L2782.3 1125.9M2773.5 1134.7L2764.7 1143.5M2773.5 1134.7L2782.3 1143.5M2773.5 1152.3L2764.7 1143.5M2773.5 1152.3L2764.7 1161.2M2773.5 1152.3L2782.3 1161.2M2773.5 1170.0L2782.3 1161.2M2773.5 1170.0L2782.3 1178.8M2773.5 1187.6L2764.7 1178.8M2773.5 1187.6L2764.7 1196.4M2773.5 1187.6L2782.3 1178.8M2773.5 1205.2L2764.7 1196.4M2773.5 1205.2L2764.7 1214.0M2773.5 1205.2L2782.3 1214.0M2773.5 1222.8L2764.7 1214.0M2773.5 1222.8L2764.7 1231.7M2773.5 1222.8L2782.3 1214.0" stroke="#00E0E0" stroke-width="7" fill="none"/>
<path d="M2650.1 1258.1L2641.3 1249.3M2650.1 1258.1L2641.3 1266.9M2685.3 1258.1L2676.5 1266.9M2685.3 1293.4L2676.5 1302.2M2720.6 1275.7L2711.8 1266.9M2720.6 1293.4L2711.8 1302.2M2720.6 1363.9L2729.4 1355.1M2720.6 1363.9L2729.4 1372.7M2738.2 1328.6L2747.1 1319.8M2738.2 1328.6L2747.1 1337.5M2738.2 1381.5L2747.1 1372.7M2755.9 1399.1L2747.1 1408.0" stroke="#006A6E" stroke-width="8" fill="none"/>
<path d="M2650.1 1258.1L2658.9 1249.3M2667.7 1258.1L2658.9 1266.9M2667.7 1258.1L2676.5 1249.3M2685.3 1258.1L2694.2 1266.9M2685.3 1275.7L2694.2 1266.9M2685.3 1311.0L2694.2 1302.2M2685.3 1311.0L2694.2 1319.8M2703.0 1311.0L2694.2 1302.2M2703.0 1311.0L2694.2 1319.8M2720.6 1311.0L2711.8 1302.2M2720.6 1311.0L2729.4 1302.2M2720.6 1311.0L2729.4 1319.8M2720.6 1363.9L2711.8 1372.7M2720.6 1399.1L2729.4 1390.3M2720.6 1416.8L2729.4 1408.0M2738.2 1275.7L2747.1 1266.9M2738.2 1293.4L2729.4 1302.2M2738.2 1293.4L2747.1 1302.2M2738.2 1311.0L2747.1 1302.2M2738.2 1328.6L2729.4 1319.8M2738.2 1328.6L2729.4 1337.5M2738.2 1346.2L2729.4 1337.5M2738.2 1346.2L2747.1 1355.1M2755.9 1275.7L2764.7 1266.9M2755.9 1293.4L2747.1 1302.2M2755.9 1399.1L2764.7 1390.3M2755.9 1399.1L2764.7 1408.0M2773.5 1293.4L2782.3 1302.2" stroke="#00A0A4" stroke-width="8" fill="none"/>
<path d="M2658.9 1249.3L2676.5 1249.3M2658.9 1249.3L2685.3 1258.1M2676.5 1249.3L2694.2 1266.9M2676.5 1249.3L2650.1 1258.1M2676.5 1249.3L2685.3 1275.7M2676.5 1249.3L2703.0 1258.1M2676.5 1302.2L2694.2 1302.2M2676.5 1302.2L2685.3 1275.7M2676.5 1302.2L2703.0 1311.0M2694.2 1266.9L2711.8 1266.9M2694.2 1266.9L2667.7 1258.1M2694.2 1266.9L2703.0 1293.4M2694.2 1302.2L2711.8 1302.2M2694.2 1302.2L2711.8 1319.8M2694.2 1302.2L2703.0 1275.7M2711.8 1266.9L2738.2 1275.7M2711.8 1302.2L2685.3 1293.4M2711.8 1302.2L2703.0 1275.7M2711.8 1319.8L2729.4 1319.8M2711.8 1319.8L2720.6 1293.4M2711.8 1319.8L2738.2 1311.0M2729.4 1266.9L2747.1 1266.9M2729.4 1266.9L2703.0 1258.1M2729.4 1266.9L2703.0 1275.7M2729.4 1266.9L2738.2 1293.4M2729.4 1302.2L2747.1 1302.2M2729.4 1302.2L2703.0 1311.0M2729.4 1319.8L2747.1 1337.5M2729.4 1319.8L2703.0 1311.0M2729.4 1319.8L2720.6 1293.4M2729.4 1319.8L2738.2 1293.4M2729.4 1372.7L2729.4 1390.3M2729.4 1372.7L2720.6 1399.1M2729.4 1372.7L2738.2 1399.1M2729.4 1390.3L2747.1 1390.3M2729.4 1390.3L2720.6 1363.9M2729.4 1390.3L2720.6 1416.8M2729.4 1390.3L2755.9 1399.1M2729.4 1408.0L2755.9 1399.1M2747.1 1266.9L2720.6 1275.7M2747.1 1266.9L2738.2 1293.4M2747.1 1302.2L2764.7 1302.2M2747.1 1302.2L2720.6 1311.0M2747.1 1302.2L2738.2 1275.7M2747.1 1302.2L2755.9 1275.7M2747.1 1302.2L2773.5 1293.4M2747.1 1390.3L2747.1 1408.0M2747.1 1390.3L2764.7 1408.0M2747.1 1408.0L2720.6 1399.1M2764.7 1302.2L2738.2 1293.4M2685.3 1258.1L2703.0 1258.1M2685.3 1293.4L2703.0 1293.4M2685.3 1311.0L2703.0 1293.4M2703.0 1258.1L2720.6 1275.7M2703.0 1275.7L2703.0 1293.4M2720.6 1275.7L2738.2 1275.7M2720.6 1275.7L2738.2 1293.4M2720.6 1293.4L2720.6 1311.0M2720.6 1293.4L2738.2 1275.7M2720.6 1363.9L2738.2 1346.2M2720.6 1381.5L2738.2 1381.5M2720.6 1399.1L2738.2 1381.5M2720.6 1399.1L2738.2 1399.1M2738.2 1275.7L2738.2 1293.4M2738.2 1293.4L2738.2 1311.0M2738.2 1293.4L2755.9 1293.4M2738.2 1328.6L2738.2 1346.2M2738.2 1399.1L2755.9 1399.1M2755.9 1275.7L2755.9 1293.4M2755.9 1275.7L2773.5 1293.4" stroke="#00E0E0" stroke-width="5.5" fill="none"/>
<path d="M2650.1 1258.1L2658.9 1266.9M2667.7 1258.1L2658.9 1249.3M2667.7 1258.1L2676.5 1266.9M2685.3 1258.1L2676.5 1249.3M2685.3 1258.1L2694.2 1249.3M2685.3 1275.7L2676.5 1266.9M2685.3 1293.4L2694.2 1302.2M2685.3 1311.0L2676.5 1302.2M2685.3 1311.0L2676.5 1319.8M2703.0 1258.1L2694.2 1249.3M2703.0 1258.1L2694.2 1266.9M2703.0 1258.1L2711.8 1249.3M2703.0 1258.1L2711.8 1266.9M2703.0 1275.7L2694.2 1266.9M2703.0 1275.7L2711.8 1266.9M2703.0 1293.4L2694.2 1302.2M2703.0 1293.4L2711.8 1302.2M2703.0 1311.0L2711.8 1302.2M2703.0 1311.0L2711.8 1319.8M2720.6 1275.7L2729.4 1266.9M2720.6 1293.4L2729.4 1302.2M2720.6 1311.0L2711.8 1319.8M2720.6 1363.9L2711.8 1355.1M2720.6 1381.5L2711.8 1372.7M2720.6 1381.5L2711.8 1390.3M2720.6 1381.5L2729.4 1372.7M2720.6 1381.5L2729.4 1390.3M2720.6 1399.1L2711.8 1390.3M2720.6 1399.1L2711.8 1408.0M2720.6 1399.1L2729.4 1408.0M2720.6 1416.8L2711.8 1408.0M2720.6 1416.8L2711.8 1425.6M2720.6 1416.8L2729.4 1425.6M2738.2 1275.7L2729.4 1266.9M2738.2 1311.0L2729.4 1302.2M2738.2 1311.0L2729.4 1319.8M2738.2 1311.0L2747.1 1319.8M2738.2 1346.2L2729.4 1355.1M2738.2 1346.2L2747.1 1337.5M2738.2 1381.5L2729.4 1372.7M2738.2 1381.5L2729.4 1390.3M2738.2 1381.5L2747.1 1390.3M2738.2 1399.1L2729.4 1390.3M2738.2 1399.1L2729.4 1408.0M2738.2 1399.1L2747.1 1390.3M2738.2 1399.1L2747.1 1408.0M2755.9 1275.7L2747.1 1266.9M2755.9 1293.4L2764.7 1302.2M2755.9 1399.1L2747.1 1390.3M2773.5 1293.4L2764.7 1302.2" stroke="#00E0E0" stroke-width="7" fill="none"/>
<path d="M2650.1 1452.0L2641.3 1443.2M2650.1 1452.0L2658.9 1460.9M2685.3 1469.7L2676.5 1478.5M2685.3 1469.7L2694.2 1460.9M2703.0 1469.7L2694.2 1460.9M2703.0 1469.7L2711.8 1460.9" stroke="#006A6E" stroke-width="8" fill="none"/>
<path d="M2650.1 1452.0L2658.9 1443.2M2667.7 1452.0L2658.9 1460.9M2667.7 1469.7L2658.9 1478.5M2667.7 1469.7L2676.5 1478.5M2703.0 1469.7L2694.2 1478.5M2703.0 1469.7L2711.8 1478.5" stroke="#00A0A4" stroke-width="8" fill="none"/>
<path d="M2658.9 1460.9L2685.3 1452.0M2676.5 1460.9L2703.0 1469.7" stroke="#00E0E0" stroke-width="5.5" fill="none"/>
<path d="M2650.1 1452.0L2641.3 1460.9M2667.7 1452.0L2658.9 1443.2M2667.7 1452.0L2676.5 1443.2M2667.7 1452.0L2676.5 1460.9M2667.7 1469.7L2658.9 1460.9M2667.7 1469.7L2676.5 1460.9M2685.3 1452.0L2676.5 1443.2M2685.3 1452.0L2676.5 1460.9M2685.3 1452.0L2694.2 1443.2M2685.3 1452.0L2694.2 1460.9M2685.3 1469.7L2676.5 1460.9M2685.3 1469.7L2694.2 1478.5" stroke="#00E0E0" stroke-width="7" fill="none"/>
<path d="M2579.6 1152.3L2588.4 1161.2M2579.6 1170.0L2588.4 1178.8M2597.2 1170.0L2588.4 1178.8" stroke="#006A6E" stroke-width="8" fill="none"/>
<path d="M2579.6 1152.3L2588.4 1143.5M2597.2 1152.3L2588.4 1143.5M2597.2 1152.3L2606.0 1143.5M2597.2 1152.3L2606.0 1161.2" stroke="#00A0A4" stroke-width="8" fill="none"/>
<path d="M2588.4 1178.8L2606.0 1161.2M2588.4 1178.8L2579.6 1152.3M2588.4 1178.8L2597.2 1152.3M2606.0 1161.2L2579.6 1152.3M2606.0 1161.2L2579.6 1170.0M2606.0 1178.8L2597.2 1152.3M2579.6 1152.3L2597.2 1152.3M2579.6 1170.0L2597.2 1152.3M2579.6 1170.0L2597.2 1170.0" stroke="#00E0E0" stroke-width="5.5" fill="none"/>
<path d="M2579.6 1170.0L2588.4 1161.2M2597.2 1152.3L2588.4 1161.2M2597.2 1170.0L2588.4 1161.2M2597.2 1170.0L2606.0 1161.2M2597.2 1170.0L2606.0 1178.8" stroke="#00E0E0" stroke-width="7" fill="none"/>
<path d="M2534.1 1143.7 L2543.9 1153.4 L2537.4 1215.0" stroke="#00E0E0" stroke-width="6" fill="none" stroke-linecap="butt" stroke-linejoin="round"/>
<path d="M2553.6 1163.1 L2579.5 1169.6 L2615.2 1134.0" stroke="#00E0E0" stroke-width="6" fill="none" stroke-linecap="butt" stroke-linejoin="round"/>
<path d="M2658.9 1390.0 L2668.6 1364.0" stroke="#00E0E0" stroke-width="6" fill="none" stroke-linecap="butt" stroke-linejoin="round"/>
<path d="M2540.6 1390.0 L2553.6 1425.6" stroke="#00E0E0" stroke-width="7" fill="none" stroke-linecap="butt" stroke-linejoin="round"/>
<path d="M2394.8 1279.8 L2391.6 1302.5" stroke="#00E0E0" stroke-width="6" fill="none" stroke-linecap="butt" stroke-linejoin="round"/>
<path d="M2748.0 1338.1 L2761.0 1364.0" stroke="#00E0E0" stroke-width="6" fill="none" stroke-linecap="butt" stroke-linejoin="round"/>
<path d="M2378.6 1467.7 L2414.3 1522.8 L2436.9 1493.7" stroke="#00E0E0" stroke-width="6" fill="none" stroke-linecap="butt" stroke-linejoin="round"/>
<ellipse cx="2414.3" cy="1522.8" rx="4.2" ry="3.7" fill="#FF8000"/><rect x="2412.7" y="1521.3" width="3.2" height="3" fill="#3a4050"/>
<circle cx="2359.2" cy="1073.0" r="3.7" fill="#FF8000"/>
<circle cx="2359.2" cy="1090.6" r="3.7" fill="#FF8000"/>
<circle cx="2359.2" cy="1108.3" r="3.7" fill="#FF8000"/>
<circle cx="2359.2" cy="1125.9" r="3.7" fill="#FF8000"/>
<circle cx="2359.2" cy="1143.5" r="3.7" fill="#FF8000"/>
<circle cx="2359.2" cy="1161.2" r="3.7" fill="#FF8000"/>
<circle cx="2359.2" cy="1178.8" r="3.7" fill="#FF8000"/>
<circle cx="2359.2" cy="1196.4" r="3.7" fill="#FF8000"/>
<circle cx="2359.2" cy="1214.0" r="3.7" fill="#FF8000"/>
<circle cx="2359.2" cy="1231.7" r="3.7" fill="#FF8000"/>
<circle cx="2359.2" cy="1249.3" r="3.7" fill="#FF8000"/>
<circle cx="2359.2" cy="1266.9" r="3.7" fill="#FF8000"/>
<circle cx="2359.2" cy="1302.2" r="3.7" fill="#FF8000"/>
<circle cx="2359.2" cy="1319.8" r="3.7" fill="#FF8000"/>
<circle cx="2359.2" cy="1337.5" r="3.7" fill="#FF8000"/>
<circle cx="2359.2" cy="1355.1" r="3.7" fill="#FF8000"/>
<circle cx="2359.2" cy="1372.7" r="3.7" fill="#FF8000"/>
<circle cx="2359.2" cy="1390.3" r="3.7" fill="#FF8000"/>
<circle cx="2359.2" cy="1408.0" r="3.7" fill="#FF8000"/>
<circle cx="2359.2" cy="1425.6" r="3.7" fill="#FF8000"/>
<circle cx="2359.2" cy="1443.2" r="3.7" fill="#FF8000"/>
<circle cx="2359.2" cy="1460.9" r="3.7" fill="#FF8000"/>
<circle cx="2359.2" cy="1478.5" r="3.7" fill="#FF8000"/>
<circle cx="2359.2" cy="1496.1" r="3.7" fill="#FF8000"/>
<circle cx="2376.8" cy="1073.0" r="3.7" fill="#FF8000"/>
<circle cx="2376.8" cy="1090.6" r="3.7" fill="#FF8000"/>
<circle cx="2376.8" cy="1108.3" r="3.7" fill="#FF8000"/>
<circle cx="2376.8" cy="1125.9" r="3.7" fill="#FF8000"/>
<circle cx="2376.8" cy="1143.5" r="3.7" fill="#FF8000"/>
<circle cx="2376.8" cy="1161.2" r="3.7" fill="#FF8000"/>
<circle cx="2376.8" cy="1178.8" r="3.7" fill="#FF8000"/>
<circle cx="2376.8" cy="1196.4" r="3.7" fill="#FF8000"/>
<circle cx="2376.8" cy="1214.0" r="3.7" fill="#FF8000"/>
<circle cx="2376.8" cy="1231.7" r="3.7" fill="#FF8000"/>
<circle cx="2376.8" cy="1249.3" r="3.7" fill="#FF8000"/>
<circle cx="2376.8" cy="1266.9" r="3.7" fill="#FF8000"/>
<circle cx="2376.8" cy="1302.2" r="3.7" fill="#FF8000"/>
<circle cx="2376.8" cy="1319.8" r="3.7" fill="#FF8000"/>
<circle cx="2376.8" cy="1337.5" r="3.7" fill="#FF8000"/>
<circle cx="2376.8" cy="1355.1" r="3.7" fill="#FF8000"/>
<circle cx="2376.8" cy="1372.7" r="3.7" fill="#FF8000"/>
<circle cx="2376.8" cy="1390.3" r="3.7" fill="#FF8000"/>
<circle cx="2376.8" cy="1408.0" r="3.7" fill="#FF8000"/>
<circle cx="2376.8" cy="1425.6" r="3.7" fill="#FF8000"/>
<circle cx="2376.8" cy="1443.2" r="3.7" fill="#FF8000"/>
<circle cx="2376.8" cy="1460.9" r="3.7" fill="#FF8000"/>
<circle cx="2376.8" cy="1478.5" r="3.7" fill="#FF8000"/>
<circle cx="2376.8" cy="1496.1" r="3.7" fill="#FF8000"/>
<circle cx="2394.5" cy="1073.0" r="3.7" fill="#FF8000"/>
<circle cx="2394.5" cy="1090.6" r="3.7" fill="#FF8000"/>
<circle cx="2394.5" cy="1108.3" r="3.7" fill="#FF8000"/>
<circle cx="2394.5" cy="1125.9" r="3.7" fill="#FF8000"/>
<circle cx="2394.5" cy="1143.5" r="3.7" fill="#FF8000"/>
<circle cx="2394.5" cy="1161.2" r="3.7" fill="#FF8000"/>
<circle cx="2394.5" cy="1178.8" r="3.7" fill="#FF8000"/>
<circle cx="2394.5" cy="1196.4" r="3.7" fill="#FF8000"/>
<circle cx="2394.5" cy="1214.0" r="3.7" fill="#FF8000"/>
<circle cx="2394.5" cy="1231.7" r="3.7" fill="#FF8000"/>
<circle cx="2394.5" cy="1249.3" r="3.7" fill="#FF8000"/>
<circle cx="2394.5" cy="1266.9" r="3.7" fill="#FF8000"/>
<circle cx="2394.5" cy="1302.2" r="3.7" fill="#FF8000"/>
<circle cx="2394.5" cy="1319.8" r="3.7" fill="#FF8000"/>
<circle cx="2394.5" cy="1337.5" r="3.7" fill="#FF8000"/>
<circle cx="2394.5" cy="1355.1" r="3.7" fill="#FF8000"/>
<circle cx="2394.5" cy="1372.7" r="3.7" fill="#FF8000"/>
<circle cx="2394.5" cy="1390.3" r="3.7" fill="#FF8000"/>
<circle cx="2394.5" cy="1408.0" r="3.7" fill="#FF8000"/>
<circle cx="2394.5" cy="1425.6" r="3.7" fill="#FF8000"/>
<circle cx="2394.5" cy="1443.2" r="3.7" fill="#FF8000"/>
<circle cx="2394.5" cy="1460.9" r="3.7" fill="#FF8000"/>
<circle cx="2394.5" cy="1478.5" r="3.7" fill="#FF8000"/>
<circle cx="2394.5" cy="1496.1" r="3.7" fill="#FF8000"/>
<circle cx="2412.1" cy="1073.0" r="3.7" fill="#FF8000"/>
<circle cx="2412.1" cy="1090.6" r="3.7" fill="#FF8000"/>
<circle cx="2412.1" cy="1108.3" r="3.7" fill="#FF8000"/>
<circle cx="2412.1" cy="1125.9" r="3.7" fill="#FF8000"/>
<circle cx="2412.1" cy="1143.5" r="3.7" fill="#FF8000"/>
<circle cx="2412.1" cy="1161.2" r="3.7" fill="#FF8000"/>
<circle cx="2412.1" cy="1178.8" r="3.7" fill="#FF8000"/>
<circle cx="2412.1" cy="1196.4" r="3.7" fill="#FF8000"/>
<circle cx="2412.1" cy="1214.0" r="3.7" fill="#FF8000"/>
<circle cx="2412.1" cy="1231.7" r="3.7" fill="#FF8000"/>
<circle cx="2412.1" cy="1249.3" r="3.7" fill="#FF8000"/>
<circle cx="2412.1" cy="1266.9" r="3.7" fill="#FF8000"/>
<circle cx="2412.1" cy="1302.2" r="3.7" fill="#FF8000"/>
<circle cx="2412.1" cy="1319.8" r="3.7" fill="#FF8000"/>
<circle cx="2412.1" cy="1337.5" r="3.7" fill="#FF8000"/>
<circle cx="2412.1" cy="1355.1" r="3.7" fill="#FF8000"/>
<circle cx="2412.1" cy="1372.7" r="3.7" fill="#FF8000"/>
<circle cx="2412.1" cy="1390.3" r="3.7" fill="#FF8000"/>
<circle cx="2412.1" cy="1408.0" r="3.7" fill="#FF8000"/>
<circle cx="2412.1" cy="1425.6" r="3.7" fill="#FF8000"/>
<circle cx="2412.1" cy="1443.2" r="3.7" fill="#FF8000"/>
<circle cx="2412.1" cy="1460.9" r="3.7" fill="#FF8000"/>
<circle cx="2412.1" cy="1478.5" r="3.7" fill="#FF8000"/>
<circle cx="2412.1" cy="1496.1" r="3.7" fill="#FF8000"/>
<circle cx="2429.7" cy="1073.0" r="3.7" fill="#FF8000"/>
<circle cx="2429.7" cy="1090.6" r="3.7" fill="#FF8000"/>
<circle cx="2429.7" cy="1108.3" r="3.7" fill="#FF8000"/>
<circle cx="2429.7" cy="1125.9" r="3.7" fill="#FF8000"/>
<circle cx="2429.7" cy="1143.5" r="3.7" fill="#FF8000"/>
<circle cx="2429.7" cy="1161.2" r="3.7" fill="#FF8000"/>
<circle cx="2429.7" cy="1178.8" r="3.7" fill="#FF8000"/>
<circle cx="2429.7" cy="1196.4" r="3.7" fill="#FF8000"/>
<circle cx="2429.7" cy="1214.0" r="3.7" fill="#FF8000"/>
<circle cx="2429.7" cy="1231.7" r="3.7" fill="#FF8000"/>
<circle cx="2429.7" cy="1249.3" r="3.7" fill="#FF8000"/>
<circle cx="2429.7" cy="1266.9" r="3.7" fill="#FF8000"/>
<circle cx="2429.7" cy="1302.2" r="3.7" fill="#FF8000"/>
<circle cx="2429.7" cy="1319.8" r="3.7" fill="#FF8000"/>
<circle cx="2429.7" cy="1337.5" r="3.7" fill="#FF8000"/>
<circle cx="2429.7" cy="1355.1" r="3.7" fill="#FF8000"/>
<circle cx="2429.7" cy="1372.7" r="3.7" fill="#FF8000"/>
<circle cx="2429.7" cy="1390.3" r="3.7" fill="#FF8000"/>
<circle cx="2429.7" cy="1408.0" r="3.7" fill="#FF8000"/>
<circle cx="2429.7" cy="1425.6" r="3.7" fill="#FF8000"/>
<circle cx="2429.7" cy="1443.2" r="3.7" fill="#FF8000"/>
<circle cx="2429.7" cy="1460.9" r="3.7" fill="#FF8000"/>
<circle cx="2429.7" cy="1478.5" r="3.7" fill="#FF8000"/>
<circle cx="2429.7" cy="1496.1" r="3.7" fill="#FF8000"/>
<circle cx="2447.3" cy="1073.0" r="3.7" fill="#FF8000"/>
<circle cx="2447.3" cy="1090.6" r="3.7" fill="#FF8000"/>
<circle cx="2447.3" cy="1108.3" r="3.7" fill="#FF8000"/>
<circle cx="2447.3" cy="1125.9" r="3.7" fill="#FF8000"/>
<circle cx="2447.3" cy="1143.5" r="3.7" fill="#FF8000"/>
<circle cx="2447.3" cy="1161.2" r="3.7" fill="#FF8000"/>
<circle cx="2447.3" cy="1178.8" r="3.7" fill="#FF8000"/>
<circle cx="2447.3" cy="1196.4" r="3.7" fill="#FF8000"/>
<circle cx="2447.3" cy="1214.0" r="3.7" fill="#FF8000"/>
<circle cx="2447.3" cy="1231.7" r="3.7" fill="#FF8000"/>
<circle cx="2447.3" cy="1249.3" r="3.7" fill="#FF8000"/>
<circle cx="2447.3" cy="1266.9" r="3.7" fill="#FF8000"/>
<circle cx="2447.3" cy="1302.2" r="3.7" fill="#FF8000"/>
<circle cx="2447.3" cy="1319.8" r="3.7" fill="#FF8000"/>
<circle cx="2447.3" cy="1337.5" r="3.7" fill="#FF8000"/>
<circle cx="2447.3" cy="1355.1" r="3.7" fill="#FF8000"/>
<circle cx="2447.3" cy="1372.7" r="3.7" fill="#FF8000"/>
<circle cx="2447.3" cy="1390.3" r="3.7" fill="#FF8000"/>
<circle cx="2447.3" cy="1408.0" r="3.7" fill="#FF8000"/>
<circle cx="2447.3" cy="1425.6" r="3.7" fill="#FF8000"/>
<circle cx="2447.3" cy="1443.2" r="3.7" fill="#FF8000"/>
<circle cx="2447.3" cy="1460.9" r="3.7" fill="#FF8000"/>
<circle cx="2447.3" cy="1478.5" r="3.7" fill="#FF8000"/>
<circle cx="2447.3" cy="1496.1" r="3.7" fill="#FF8000"/>
<circle cx="2465.0" cy="1073.0" r="3.7" fill="#FF8000"/>
<circle cx="2465.0" cy="1090.6" r="3.7" fill="#FF8000"/>
<circle cx="2465.0" cy="1108.3" r="3.7" fill="#FF8000"/>
<circle cx="2465.0" cy="1125.9" r="3.7" fill="#FF8000"/>
<circle cx="2465.0" cy="1143.5" r="3.7" fill="#FF8000"/>
<circle cx="2465.0" cy="1161.2" r="3.7" fill="#FF8000"/>
<circle cx="2465.0" cy="1178.8" r="3.7" fill="#FF8000"/>
<circle cx="2465.0" cy="1196.4" r="3.7" fill="#FF8000"/>
<circle cx="2465.0" cy="1214.0" r="3.7" fill="#FF8000"/>
<circle cx="2465.0" cy="1231.7" r="3.7" fill="#FF8000"/>
<circle cx="2465.0" cy="1249.3" r="3.7" fill="#FF8000"/>
<circle cx="2465.0" cy="1266.9" r="3.7" fill="#FF8000"/>
<circle cx="2465.0" cy="1302.2" r="3.7" fill="#FF8000"/>
<circle cx="2465.0" cy="1319.8" r="3.7" fill="#FF8000"/>
<circle cx="2465.0" cy="1337.5" r="3.7" fill="#FF8000"/>
<circle cx="2465.0" cy="1355.1" r="3.7" fill="#FF8000"/>
<circle cx="2465.0" cy="1372.7" r="3.7" fill="#FF8000"/>
<circle cx="2465.0" cy="1390.3" r="3.7" fill="#FF8000"/>
<circle cx="2465.0" cy="1408.0" r="3.7" fill="#FF8000"/>
<circle cx="2465.0" cy="1425.6" r="3.7" fill="#FF8000"/>
<circle cx="2465.0" cy="1443.2" r="3.7" fill="#FF8000"/>
<circle cx="2465.0" cy="1460.9" r="3.7" fill="#FF8000"/>
<circle cx="2465.0" cy="1478.5" r="3.7" fill="#FF8000"/>
<circle cx="2465.0" cy="1496.1" r="3.7" fill="#FF8000"/>
<circle cx="2482.6" cy="1073.0" r="3.7" fill="#FF8000"/>
<circle cx="2482.6" cy="1090.6" r="3.7" fill="#FF8000"/>
<circle cx="2482.6" cy="1108.3" r="3.7" fill="#FF8000"/>
<circle cx="2482.6" cy="1125.9" r="3.7" fill="#FF8000"/>
<circle cx="2482.6" cy="1143.5" r="3.7" fill="#FF8000"/>
<circle cx="2482.6" cy="1161.2" r="3.7" fill="#FF8000"/>
<circle cx="2482.6" cy="1178.8" r="3.7" fill="#FF8000"/>
<circle cx="2482.6" cy="1196.4" r="3.7" fill="#FF8000"/>
<circle cx="2482.6" cy="1214.0" r="3.7" fill="#FF8000"/>
<circle cx="2482.6" cy="1231.7" r="3.7" fill="#FF8000"/>
<circle cx="2482.6" cy="1249.3" r="3.7" fill="#FF8000"/>
<circle cx="2482.6" cy="1266.9" r="3.7" fill="#FF8000"/>
<circle cx="2482.6" cy="1302.2" r="3.7" fill="#FF8000"/>
<circle cx="2482.6" cy="1319.8" r="3.7" fill="#FF8000"/>
<circle cx="2482.6" cy="1337.5" r="3.7" fill="#FF8000"/>
<circle cx="2482.6" cy="1355.1" r="3.7" fill="#FF8000"/>
<circle cx="2482.6" cy="1372.7" r="3.7" fill="#FF8000"/>
<circle cx="2482.6" cy="1390.3" r="3.7" fill="#FF8000"/>
<circle cx="2482.6" cy="1408.0" r="3.7" fill="#FF8000"/>
<circle cx="2482.6" cy="1425.6" r="3.7" fill="#FF8000"/>
<circle cx="2482.6" cy="1443.2" r="3.7" fill="#FF8000"/>
<circle cx="2482.6" cy="1460.9" r="3.7" fill="#FF8000"/>
<circle cx="2482.6" cy="1478.5" r="3.7" fill="#FF8000"/>
<circle cx="2482.6" cy="1496.1" r="3.7" fill="#FF8000"/>
<circle cx="2500.2" cy="1073.0" r="3.7" fill="#FF8000"/>
<circle cx="2500.2" cy="1090.6" r="3.7" fill="#FF8000"/>
<circle cx="2500.2" cy="1108.3" r="3.7" fill="#FF8000"/>
<circle cx="2500.2" cy="1125.9" r="3.7" fill="#FF8000"/>
<circle cx="2500.2" cy="1143.5" r="3.7" fill="#FF8000"/>
<circle cx="2500.2" cy="1161.2" r="3.7" fill="#FF8000"/>
<circle cx="2500.2" cy="1178.8" r="3.7" fill="#FF8000"/>
<circle cx="2500.2" cy="1196.4" r="3.7" fill="#FF8000"/>
<circle cx="2500.2" cy="1214.0" r="3.7" fill="#FF8000"/>
<circle cx="2500.2" cy="1231.7" r="3.7" fill="#FF8000"/>
<circle cx="2500.2" cy="1249.3" r="3.7" fill="#FF8000"/>
<circle cx="2500.2" cy="1266.9" r="3.7" fill="#FF8000"/>
<circle cx="2500.2" cy="1302.2" r="3.7" fill="#FF8000"/>
<circle cx="2500.2" cy="1319.8" r="3.7" fill="#FF8000"/>
<circle cx="2500.2" cy="1337.5" r="3.7" fill="#FF8000"/>
<circle cx="2500.2" cy="1355.1" r="3.7" fill="#FF8000"/>
<circle cx="2500.2" cy="1372.7" r="3.7" fill="#FF8000"/>
<circle cx="2500.2" cy="1390.3" r="3.7" fill="#FF8000"/>
<circle cx="2500.2" cy="1408.0" r="3.7" fill="#FF8000"/>
<circle cx="2500.2" cy="1425.6" r="3.7" fill="#FF8000"/>
<circle cx="2500.2" cy="1443.2" r="3.7" fill="#FF8000"/>
<circle cx="2500.2" cy="1460.9" r="3.7" fill="#FF8000"/>
<circle cx="2500.2" cy="1478.5" r="3.7" fill="#FF8000"/>
<circle cx="2500.2" cy="1496.1" r="3.7" fill="#FF8000"/>
<circle cx="2517.9" cy="1073.0" r="3.7" fill="#FF8000"/>
<circle cx="2517.9" cy="1090.6" r="3.7" fill="#FF8000"/>
<circle cx="2517.9" cy="1108.3" r="3.7" fill="#FF8000"/>
<circle cx="2517.9" cy="1125.9" r="3.7" fill="#FF8000"/>
<circle cx="2517.9" cy="1143.5" r="3.7" fill="#FF8000"/>
<circle cx="2517.9" cy="1161.2" r="3.7" fill="#FF8000"/>
<circle cx="2517.9" cy="1178.8" r="3.7" fill="#FF8000"/>
<circle cx="2517.9" cy="1196.4" r="3.7" fill="#FF8000"/>
<circle cx="2517.9" cy="1214.0" r="3.7" fill="#FF8000"/>
<circle cx="2517.9" cy="1231.7" r="3.7" fill="#FF8000"/>
<circle cx="2517.9" cy="1249.3" r="3.7" fill="#FF8000"/>
<circle cx="2517.9" cy="1266.9" r="3.7" fill="#FF8000"/>
<circle cx="2517.9" cy="1302.2" r="3.7" fill="#FF8000"/>
<circle cx="2517.9" cy="1319.8" r="3.7" fill="#FF8000"/>
<circle cx="2517.9" cy="1337.5" r="3.7" fill="#FF8000"/>
<circle cx="2517.9" cy="1355.1" r="3.7" fill="#FF8000"/>
<circle cx="2517.9" cy="1372.7" r="3.7" fill="#FF8000"/>
<circle cx="2517.9" cy="1390.3" r="3.7" fill="#FF8000"/>
<circle cx="2517.9" cy="1408.0" r="3.7" fill="#FF8000"/>
<circle cx="2517.9" cy="1425.6" r="3.7" fill="#FF8000"/>
<circle cx="2517.9" cy="1443.2" r="3.7" fill="#FF8000"/>
<circle cx="2517.9" cy="1460.9" r="3.7" fill="#FF8000"/>
<circle cx="2517.9" cy="1478.5" r="3.7" fill="#FF8000"/>
<circle cx="2517.9" cy="1496.1" r="3.7" fill="#FF8000"/>
<circle cx="2535.5" cy="1073.0" r="3.7" fill="#FF8000"/>
<circle cx="2535.5" cy="1090.6" r="3.7" fill="#FF8000"/>
<circle cx="2535.5" cy="1108.3" r="3.7" fill="#FF8000"/>
<circle cx="2535.5" cy="1125.9" r="3.7" fill="#FF8000"/>
<circle cx="2535.5" cy="1143.5" r="3.7" fill="#FF8000"/>
<circle cx="2535.5" cy="1161.2" r="3.7" fill="#FF8000"/>
<circle cx="2535.5" cy="1178.8" r="3.7" fill="#FF8000"/>
<circle cx="2535.5" cy="1196.4" r="3.7" fill="#FF8000"/>
<circle cx="2535.5" cy="1214.0" r="3.7" fill="#FF8000"/>
<circle cx="2535.5" cy="1231.7" r="3.7" fill="#FF8000"/>
<circle cx="2535.5" cy="1249.3" r="3.7" fill="#FF8000"/>
<circle cx="2535.5" cy="1266.9" r="3.7" fill="#FF8000"/>
<circle cx="2535.5" cy="1302.2" r="3.7" fill="#FF8000"/>
<circle cx="2535.5" cy="1319.8" r="3.7" fill="#FF8000"/>
<circle cx="2535.5" cy="1337.5" r="3.7" fill="#FF8000"/>
<circle cx="2535.5" cy="1355.1" r="3.7" fill="#FF8000"/>
<circle cx="2535.5" cy="1372.7" r="3.7" fill="#FF8000"/>
<circle cx="2535.5" cy="1390.3" r="3.7" fill="#FF8000"/>
<circle cx="2535.5" cy="1408.0" r="3.7" fill="#FF8000"/>
<circle cx="2535.5" cy="1425.6" r="3.7" fill="#FF8000"/>
<circle cx="2535.5" cy="1443.2" r="3.7" fill="#FF8000"/>
<circle cx="2535.5" cy="1460.9" r="3.7" fill="#FF8000"/>
<circle cx="2535.5" cy="1478.5" r="3.7" fill="#FF8000"/>
<circle cx="2535.5" cy="1496.1" r="3.7" fill="#FF8000"/>
<circle cx="2553.1" cy="1073.0" r="3.7" fill="#FF8000"/>
<circle cx="2553.1" cy="1090.6" r="3.7" fill="#FF8000"/>
<circle cx="2553.1" cy="1108.3" r="3.7" fill="#FF8000"/>
<circle cx="2553.1" cy="1125.9" r="3.7" fill="#FF8000"/>
<circle cx="2553.1" cy="1143.5" r="3.7" fill="#FF8000"/>
<circle cx="2553.1" cy="1161.2" r="3.7" fill="#FF8000"/>
<circle cx="2553.1" cy="1178.8" r="3.7" fill="#FF8000"/>
<circle cx="2553.1" cy="1196.4" r="3.7" fill="#FF8000"/>
<circle cx="2553.1" cy="1214.0" r="3.7" fill="#FF8000"/>
<circle cx="2553.1" cy="1231.7" r="3.7" fill="#FF8000"/>
<circle cx="2553.1" cy="1249.3" r="3.7" fill="#FF8000"/>
<circle cx="2553.1" cy="1266.9" r="3.7" fill="#FF8000"/>
<circle cx="2553.1" cy="1302.2" r="3.7" fill="#FF8000"/>
<circle cx="2553.1" cy="1319.8" r="3.7" fill="#FF8000"/>
<circle cx="2553.1" cy="1337.5" r="3.7" fill="#FF8000"/>
<circle cx="2553.1" cy="1355.1" r="3.7" fill="#FF8000"/>
<circle cx="2553.1" cy="1372.7" r="3.7" fill="#FF8000"/>
<circle cx="2553.1" cy="1390.3" r="3.7" fill="#FF8000"/>
<circle cx="2553.1" cy="1408.0" r="3.7" fill="#FF8000"/>
<circle cx="2553.1" cy="1425.6" r="3.7" fill="#FF8000"/>
<circle cx="2553.1" cy="1443.2" r="3.7" fill="#FF8000"/>
<circle cx="2553.1" cy="1460.9" r="3.7" fill="#FF8000"/>
<circle cx="2553.1" cy="1478.5" r="3.7" fill="#FF8000"/>
<circle cx="2553.1" cy="1496.1" r="3.7" fill="#FF8000"/>
<circle cx="2588.4" cy="1073.0" r="3.7" fill="#FF8000"/>
<circle cx="2588.4" cy="1090.6" r="3.7" fill="#FF8000"/>
<circle cx="2588.4" cy="1108.3" r="3.7" fill="#FF8000"/>
<circle cx="2588.4" cy="1125.9" r="3.7" fill="#FF8000"/>
<circle cx="2588.4" cy="1143.5" r="3.7" fill="#FF8000"/>
<circle cx="2588.4" cy="1161.2" r="3.7" fill="#FF8000"/>
<circle cx="2588.4" cy="1178.8" r="3.7" fill="#FF8000"/>
<circle cx="2588.4" cy="1196.4" r="3.7" fill="#FF8000"/>
<circle cx="2588.4" cy="1214.0" r="3.7" fill="#FF8000"/>
<circle cx="2588.4" cy="1231.7" r="3.7" fill="#FF8000"/>
<circle cx="2588.4" cy="1249.3" r="3.7" fill="#FF8000"/>
<circle cx="2588.4" cy="1266.9" r="3.7" fill="#FF8000"/>
<circle cx="2588.4" cy="1302.2" r="3.7" fill="#FF8000"/>
<circle cx="2588.4" cy="1319.8" r="3.7" fill="#FF8000"/>
<circle cx="2588.4" cy="1337.5" r="3.7" fill="#FF8000"/>
<circle cx="2588.4" cy="1355.1" r="3.7" fill="#FF8000"/>
<circle cx="2588.4" cy="1372.7" r="3.7" fill="#FF8000"/>
<circle cx="2588.4" cy="1390.3" r="3.7" fill="#FF8000"/>
<circle cx="2588.4" cy="1408.0" r="3.7" fill="#FF8000"/>
<circle cx="2588.4" cy="1425.6" r="3.7" fill="#FF8000"/>
<circle cx="2588.4" cy="1443.2" r="3.7" fill="#FF8000"/>
<circle cx="2588.4" cy="1460.9" r="3.7" fill="#FF8000"/>
<circle cx="2588.4" cy="1478.5" r="3.7" fill="#FF8000"/>
<circle cx="2588.4" cy="1496.1" r="3.7" fill="#FF8000"/>
<circle cx="2606.0" cy="1073.0" r="3.7" fill="#FF8000"/>
<circle cx="2606.0" cy="1090.6" r="3.7" fill="#FF8000"/>
<circle cx="2606.0" cy="1108.3" r="3.7" fill="#FF8000"/>
<circle cx="2606.0" cy="1125.9" r="3.7" fill="#FF8000"/>
<circle cx="2606.0" cy="1143.5" r="3.7" fill="#FF8000"/>
<circle cx="2606.0" cy="1161.2" r="3.7" fill="#FF8000"/>
<circle cx="2606.0" cy="1178.8" r="3.7" fill="#FF8000"/>
<circle cx="2606.0" cy="1196.4" r="3.7" fill="#FF8000"/>
<circle cx="2606.0" cy="1214.0" r="3.7" fill="#FF8000"/>
<circle cx="2606.0" cy="1231.7" r="3.7" fill="#FF8000"/>
<circle cx="2606.0" cy="1249.3" r="3.7" fill="#FF8000"/>
<circle cx="2606.0" cy="1266.9" r="3.7" fill="#FF8000"/>
<circle cx="2606.0" cy="1302.2" r="3.7" fill="#FF8000"/>
<circle cx="2606.0" cy="1319.8" r="3.7" fill="#FF8000"/>
<circle cx="2606.0" cy="1337.5" r="3.7" fill="#FF8000"/>
<circle cx="2606.0" cy="1355.1" r="3.7" fill="#FF8000"/>
<circle cx="2606.0" cy="1372.7" r="3.7" fill="#FF8000"/>
<circle cx="2606.0" cy="1390.3" r="3.7" fill="#FF8000"/>
<circle cx="2606.0" cy="1408.0" r="3.7" fill="#FF8000"/>
<circle cx="2606.0" cy="1425.6" r="3.7" fill="#FF8000"/>
<circle cx="2606.0" cy="1443.2" r="3.7" fill="#FF8000"/>
<circle cx="2606.0" cy="1460.9" r="3.7" fill="#FF8000"/>
<circle cx="2606.0" cy="1478.5" r="3.7" fill="#FF8000"/>
<circle cx="2606.0" cy="1496.1" r="3.7" fill="#FF8000"/>
<circle cx="2623.6" cy="1073.0" r="3.7" fill="#FF8000"/>
<circle cx="2623.6" cy="1090.6" r="3.7" fill="#FF8000"/>
<circle cx="2623.6" cy="1108.3" r="3.7" fill="#FF8000"/>
<circle cx="2623.6" cy="1125.9" r="3.7" fill="#FF8000"/>
<circle cx="2623.6" cy="1143.5" r="3.7" fill="#FF8000"/>
<circle cx="2623.6" cy="1161.2" r="3.7" fill="#FF8000"/>
<circle cx="2623.6" cy="1178.8" r="3.7" fill="#FF8000"/>
<circle cx="2623.6" cy="1196.4" r="3.7" fill="#FF8000"/>
<circle cx="2623.6" cy="1214.0" r="3.7" fill="#FF8000"/>
<circle cx="2623.6" cy="1231.7" r="3.7" fill="#FF8000"/>
<circle cx="2623.6" cy="1249.3" r="3.7" fill="#FF8000"/>
<circle cx="2623.6" cy="1266.9" r="3.7" fill="#FF8000"/>
<circle cx="2623.6" cy="1302.2" r="3.7" fill="#FF8000"/>
<circle cx="2623.6" cy="1319.8" r="3.7" fill="#FF8000"/>
<circle cx="2623.6" cy="1337.5" r="3.7" fill="#FF8000"/>
<circle cx="2623.6" cy="1355.1" r="3.7" fill="#FF8000"/>
<circle cx="2623.6" cy="1372.7" r="3.7" fill="#FF8000"/>
<circle cx="2623.6" cy="1390.3" r="3.7" fill="#FF8000"/>
<circle cx="2623.6" cy="1408.0" r="3.7" fill="#FF8000"/>
<circle cx="2623.6" cy="1425.6" r="3.7" fill="#FF8000"/>
<circle cx="2623.6" cy="1443.2" r="3.7" fill="#FF8000"/>
<circle cx="2623.6" cy="1460.9" r="3.7" fill="#FF8000"/>
<circle cx="2623.6" cy="1478.5" r="3.7" fill="#FF8000"/>
<circle cx="2623.6" cy="1496.1" r="3.7" fill="#FF8000"/>
<circle cx="2641.3" cy="1073.0" r="3.7" fill="#FF8000"/>
<circle cx="2641.3" cy="1090.6" r="3.7" fill="#FF8000"/>
<circle cx="2641.3" cy="1108.3" r="3.7" fill="#FF8000"/>
<circle cx="2641.3" cy="1125.9" r="3.7" fill="#FF8000"/>
<circle cx="2641.3" cy="1143.5" r="3.7" fill="#FF8000"/>
<circle cx="2641.3" cy="1161.2" r="3.7" fill="#FF8000"/>
<circle cx="2641.3" cy="1178.8" r="3.7" fill="#FF8000"/>
<circle cx="2641.3" cy="1196.4" r="3.7" fill="#FF8000"/>
<circle cx="2641.3" cy="1214.0" r="3.7" fill="#FF8000"/>
<circle cx="2641.3" cy="1231.7" r="3.7" fill="#FF8000"/>
<circle cx="2641.3" cy="1249.3" r="3.7" fill="#FF8000"/>
<circle cx="2641.3" cy="1266.9" r="3.7" fill="#FF8000"/>
<circle cx="2641.3" cy="1302.2" r="3.7" fill="#FF8000"/>
<circle cx="2641.3" cy="1319.8" r="3.7" fill="#FF8000"/>
<circle cx="2641.3" cy="1337.5" r="3.7" fill="#FF8000"/>
<circle cx="2641.3" cy="1355.1" r="3.7" fill="#FF8000"/>
<circle cx="2641.3" cy="1372.7" r="3.7" fill="#FF8000"/>
<circle cx="2641.3" cy="1390.3" r="3.7" fill="#FF8000"/>
<circle cx="2641.3" cy="1408.0" r="3.7" fill="#FF8000"/>
<circle cx="2641.3" cy="1425.6" r="3.7" fill="#FF8000"/>
<circle cx="2641.3" cy="1443.2" r="3.7" fill="#FF8000"/>
<circle cx="2641.3" cy="1460.9" r="3.7" fill="#FF8000"/>
<circle cx="2641.3" cy="1478.5" r="3.7" fill="#FF8000"/>
<circle cx="2641.3" cy="1496.1" r="3.7" fill="#FF8000"/>
<circle cx="2658.9" cy="1073.0" r="3.7" fill="#FF8000"/>
<circle cx="2658.9" cy="1090.6" r="3.7" fill="#FF8000"/>
<circle cx="2658.9" cy="1108.3" r="3.7" fill="#FF8000"/>
<circle cx="2658.9" cy="1125.9" r="3.7" fill="#FF8000"/>
<circle cx="2658.9" cy="1143.5" r="3.7" fill="#FF8000"/>
<circle cx="2658.9" cy="1161.2" r="3.7" fill="#FF8000"/>
<circle cx="2658.9" cy="1178.8" r="3.7" fill="#FF8000"/>
<circle cx="2658.9" cy="1196.4" r="3.7" fill="#FF8000"/>
<circle cx="2658.9" cy="1214.0" r="3.7" fill="#FF8000"/>
<circle cx="2658.9" cy="1231.7" r="3.7" fill="#FF8000"/>
<circle cx="2658.9" cy="1249.3" r="3.7" fill="#FF8000"/>
<circle cx="2658.9" cy="1266.9" r="3.7" fill="#FF8000"/>
<circle cx="2658.9" cy="1302.2" r="3.7" fill="#FF8000"/>
<circle cx="2658.9" cy="1319.8" r="3.7" fill="#FF8000"/>
<circle cx="2658.9" cy="1337.5" r="3.7" fill="#FF8000"/>
<circle cx="2658.9" cy="1355.1" r="3.7" fill="#FF8000"/>
<circle cx="2658.9" cy="1372.7" r="3.7" fill="#FF8000"/>
<circle cx="2658.9" cy="1390.3" r="3.7" fill="#FF8000"/>
<circle cx="2658.9" cy="1408.0" r="3.7" fill="#FF8000"/>
<circle cx="2658.9" cy="1425.6" r="3.7" fill="#FF8000"/>
<circle cx="2658.9" cy="1443.2" r="3.7" fill="#FF8000"/>
<circle cx="2658.9" cy="1460.9" r="3.7" fill="#FF8000"/>
<circle cx="2658.9" cy="1478.5" r="3.7" fill="#FF8000"/>
<circle cx="2658.9" cy="1496.1" r="3.7" fill="#FF8000"/>
<circle cx="2676.5" cy="1073.0" r="3.7" fill="#FF8000"/>
<circle cx="2676.5" cy="1090.6" r="3.7" fill="#FF8000"/>
<circle cx="2676.5" cy="1108.3" r="3.7" fill="#FF8000"/>
<circle cx="2676.5" cy="1125.9" r="3.7" fill="#FF8000"/>
<circle cx="2676.5" cy="1143.5" r="3.7" fill="#FF8000"/>
<circle cx="2676.5" cy="1161.2" r="3.7" fill="#FF8000"/>
<circle cx="2676.5" cy="1178.8" r="3.7" fill="#FF8000"/>
<circle cx="2676.5" cy="1196.4" r="3.7" fill="#FF8000"/>
<circle cx="2676.5" cy="1214.0" r="3.7" fill="#FF8000"/>
<circle cx="2676.5" cy="1231.7" r="3.7" fill="#FF8000"/>
<circle cx="2676.5" cy="1249.3" r="3.7" fill="#FF8000"/>
<circle cx="2676.5" cy="1266.9" r="3.7" fill="#FF8000"/>
<circle cx="2676.5" cy="1302.2" r="3.7" fill="#FF8000"/>
<circle cx="2676.5" cy="1319.8" r="3.7" fill="#FF8000"/>
<circle cx="2676.5" cy="1337.5" r="3.7" fill="#FF8000"/>
<circle cx="2676.5" cy="1355.1" r="3.7" fill="#FF8000"/>
<circle cx="2676.5" cy="1372.7" r="3.7" fill="#FF8000"/>
<circle cx="2676.5" cy="1390.3" r="3.7" fill="#FF8000"/>
<circle cx="2676.5" cy="1408.0" r="3.7" fill="#FF8000"/>
<circle cx="2676.5" cy="1425.6" r="3.7" fill="#FF8000"/>
<circle cx="2676.5" cy="1443.2" r="3.7" fill="#FF8000"/>
<circle cx="2676.5" cy="1460.9" r="3.7" fill="#FF8000"/>
<circle cx="2676.5" cy="1478.5" r="3.7" fill="#FF8000"/>
<circle cx="2676.5" cy="1496.1" r="3.7" fill="#FF8000"/>
<circle cx="2694.2" cy="1073.0" r="3.7" fill="#FF8000"/>
<circle cx="2694.2" cy="1090.6" r="3.7" fill="#FF8000"/>
<circle cx="2694.2" cy="1108.3" r="3.7" fill="#FF8000"/>
<circle cx="2694.2" cy="1125.9" r="3.7" fill="#FF8000"/>
<circle cx="2694.2" cy="1143.5" r="3.7" fill="#FF8000"/>
<circle cx="2694.2" cy="1161.2" r="3.7" fill="#FF8000"/>
<circle cx="2694.2" cy="1178.8" r="3.7" fill="#FF8000"/>
<circle cx="2694.2" cy="1196.4" r="3.7" fill="#FF8000"/>
<circle cx="2694.2" cy="1214.0" r="3.7" fill="#FF8000"/>
<circle cx="2694.2" cy="1231.7" r="3.7" fill="#FF8000"/>
<circle cx="2694.2" cy="1249.3" r="3.7" fill="#FF8000"/>
<circle cx="2694.2" cy="1266.9" r="3.7" fill="#FF8000"/>
<circle cx="2694.2" cy="1302.2" r="3.7" fill="#FF8000"/>
<circle cx="2694.2" cy="1319.8" r="3.7" fill="#FF8000"/>
<circle cx="2694.2" cy="1337.5" r="3.7" fill="#FF8000"/>
<circle cx="2694.2" cy="1355.1" r="3.7" fill="#FF8000"/>
<circle cx="2694.2" cy="1372.7" r="3.7" fill="#FF8000"/>
<circle cx="2694.2" cy="1390.3" r="3.7" fill="#FF8000"/>
<circle cx="2694.2" cy="1408.0" r="3.7" fill="#FF8000"/>
<circle cx="2694.2" cy="1425.6" r="3.7" fill="#FF8000"/>
<circle cx="2694.2" cy="1443.2" r="3.7" fill="#FF8000"/>
<circle cx="2694.2" cy="1460.9" r="3.7" fill="#FF8000"/>
<circle cx="2694.2" cy="1478.5" r="3.7" fill="#FF8000"/>
<circle cx="2694.2" cy="1496.1" r="3.7" fill="#FF8000"/>
<circle cx="2711.8" cy="1073.0" r="3.7" fill="#FF8000"/>
<circle cx="2711.8" cy="1090.6" r="3.7" fill="#FF8000"/>
<circle cx="2711.8" cy="1108.3" r="3.7" fill="#FF8000"/>
<circle cx="2711.8" cy="1125.9" r="3.7" fill="#FF8000"/>
<circle cx="2711.8" cy="1143.5" r="3.7" fill="#FF8000"/>
<circle cx="2711.8" cy="1161.2" r="3.7" fill="#FF8000"/>
<circle cx="2711.8" cy="1178.8" r="3.7" fill="#FF8000"/>
<circle cx="2711.8" cy="1196.4" r="3.7" fill="#FF8000"/>
<circle cx="2711.8" cy="1214.0" r="3.7" fill="#FF8000"/>
<circle cx="2711.8" cy="1231.7" r="3.7" fill="#FF8000"/>
<circle cx="2711.8" cy="1249.3" r="3.7" fill="#FF8000"/>
<circle cx="2711.8" cy="1266.9" r="3.7" fill="#FF8000"/>
<circle cx="2711.8" cy="1302.2" r="3.7" fill="#FF8000"/>
<circle cx="2711.8" cy="1319.8" r="3.7" fill="#FF8000"/>
<circle cx="2711.8" cy="1337.5" r="3.7" fill="#FF8000"/>
<circle cx="2711.8" cy="1355.1" r="3.7" fill="#FF8000"/>
<circle cx="2711.8" cy="1372.7" r="3.7" fill="#FF8000"/>
<circle cx="2711.8" cy="1390.3" r="3.7" fill="#FF8000"/>
<circle cx="2711.8" cy="1408.0" r="3.7" fill="#FF8000"/>
<circle cx="2711.8" cy="1425.6" r="3.7" fill="#FF8000"/>
<circle cx="2711.8" cy="1443.2" r="3.7" fill="#FF8000"/>
<circle cx="2711.8" cy="1460.9" r="3.7" fill="#FF8000"/>
<circle cx="2711.8" cy="1478.5" r="3.7" fill="#FF8000"/>
<circle cx="2711.8" cy="1496.1" r="3.7" fill="#FF8000"/>
<circle cx="2729.4" cy="1073.0" r="3.7" fill="#FF8000"/>
<circle cx="2729.4" cy="1090.6" r="3.7" fill="#FF8000"/>
<circle cx="2729.4" cy="1108.3" r="3.7" fill="#FF8000"/>
<circle cx="2729.4" cy="1125.9" r="3.7" fill="#FF8000"/>
<circle cx="2729.4" cy="1143.5" r="3.7" fill="#FF8000"/>
<circle cx="2729.4" cy="1161.2" r="3.7" fill="#FF8000"/>
<circle cx="2729.4" cy="1178.8" r="3.7" fill="#FF8000"/>
<circle cx="2729.4" cy="1196.4" r="3.7" fill="#FF8000"/>
<circle cx="2729.4" cy="1214.0" r="3.7" fill="#FF8000"/>
<circle cx="2729.4" cy="1231.7" r="3.7" fill="#FF8000"/>
<circle cx="2729.4" cy="1249.3" r="3.7" fill="#FF8000"/>
<circle cx="2729.4" cy="1266.9" r="3.7" fill="#FF8000"/>
<circle cx="2729.4" cy="1302.2" r="3.7" fill="#FF8000"/>
<circle cx="2729.4" cy="1319.8" r="3.7" fill="#FF8000"/>
<circle cx="2729.4" cy="1337.5" r="3.7" fill="#FF8000"/>
<circle cx="2729.4" cy="1355.1" r="3.7" fill="#FF8000"/>
<circle cx="2729.4" cy="1372.7" r="3.7" fill="#FF8000"/>
<circle cx="2729.4" cy="1390.3" r="3.7" fill="#FF8000"/>
<circle cx="2729.4" cy="1408.0" r="3.7" fill="#FF8000"/>
<circle cx="2729.4" cy="1425.6" r="3.7" fill="#FF8000"/>
<circle cx="2729.4" cy="1443.2" r="3.7" fill="#FF8000"/>
<circle cx="2729.4" cy="1460.9" r="3.7" fill="#FF8000"/>
<circle cx="2729.4" cy="1478.5" r="3.7" fill="#FF8000"/>
<circle cx="2729.4" cy="1496.1" r="3.7" fill="#FF8000"/>
<circle cx="2747.1" cy="1073.0" r="3.7" fill="#FF8000"/>
<circle cx="2747.1" cy="1090.6" r="3.7" fill="#FF8000"/>
<circle cx="2747.1" cy="1108.3" r="3.7" fill="#FF8000"/>
<circle cx="2747.1" cy="1125.9" r="3.7" fill="#FF8000"/>
<circle cx="2747.1" cy="1143.5" r="3.7" fill="#FF8000"/>
<circle cx="2747.1" cy="1161.2" r="3.7" fill="#FF8000"/>
<circle cx="2747.1" cy="1178.8" r="3.7" fill="#FF8000"/>
<circle cx="2747.1" cy="1196.4" r="3.7" fill="#FF8000"/>
<circle cx="2747.1" cy="1214.0" r="3.7" fill="#FF8000"/>
<circle cx="2747.1" cy="1231.7" r="3.7" fill="#FF8000"/>
<circle cx="2747.1" cy="1249.3" r="3.7" fill="#FF8000"/>
<circle cx="2747.1" cy="1266.9" r="3.7" fill="#FF8000"/>
<circle cx="2747.1" cy="1302.2" r="3.7" fill="#FF8000"/>
<circle cx="2747.1" cy="1319.8" r="3.7" fill="#FF8000"/>
<circle cx="2747.1" cy="1337.5" r="3.7" fill="#FF8000"/>
<circle cx="2747.1" cy="1355.1" r="3.7" fill="#FF8000"/>
<circle cx="2747.1" cy="1372.7" r="3.7" fill="#FF8000"/>
<circle cx="2747.1" cy="1390.3" r="3.7" fill="#FF8000"/>
<circle cx="2747.1" cy="1408.0" r="3.7" fill="#FF8000"/>
<circle cx="2747.1" cy="1425.6" r="3.7" fill="#FF8000"/>
<circle cx="2747.1" cy="1443.2" r="3.7" fill="#FF8000"/>
<circle cx="2747.1" cy="1460.9" r="3.7" fill="#FF8000"/>
<circle cx="2747.1" cy="1478.5" r="3.7" fill="#FF8000"/>
<circle cx="2747.1" cy="1496.1" r="3.7" fill="#FF8000"/>
<circle cx="2764.7" cy="1073.0" r="3.7" fill="#FF8000"/>
<circle cx="2764.7" cy="1090.6" r="3.7" fill="#FF8000"/>
<circle cx="2764.7" cy="1108.3" r="3.7" fill="#FF8000"/>
<circle cx="2764.7" cy="1125.9" r="3.7" fill="#FF8000"/>
<circle cx="2764.7" cy="1143.5" r="3.7" fill="#FF8000"/>
<circle cx="2764.7" cy="1161.2" r="3.7" fill="#FF8000"/>
<circle cx="2764.7" cy="1178.8" r="3.7" fill="#FF8000"/>
<circle cx="2764.7" cy="1196.4" r="3.7" fill="#FF8000"/>
<circle cx="2764.7" cy="1214.0" r="3.7" fill="#FF8000"/>
<circle cx="2764.7" cy="1231.7" r="3.7" fill="#FF8000"/>
<circle cx="2764.7" cy="1249.3" r="3.7" fill="#FF8000"/>
<circle cx="2764.7" cy="1266.9" r="3.7" fill="#FF8000"/>
<circle cx="2764.7" cy="1302.2" r="3.7" fill="#FF8000"/>
<circle cx="2764.7" cy="1319.8" r="3.7" fill="#FF8000"/>
<circle cx="2764.7" cy="1337.5" r="3.7" fill="#FF8000"/>
<circle cx="2764.7" cy="1355.1" r="3.7" fill="#FF8000"/>
<circle cx="2764.7" cy="1372.7" r="3.7" fill="#FF8000"/>
<circle cx="2764.7" cy="1390.3" r="3.7" fill="#FF8000"/>
<circle cx="2764.7" cy="1408.0" r="3.7" fill="#FF8000"/>
<circle cx="2764.7" cy="1425.6" r="3.7" fill="#FF8000"/>
<circle cx="2764.7" cy="1443.2" r="3.7" fill="#FF8000"/>
<circle cx="2764.7" cy="1460.9" r="3.7" fill="#FF8000"/>
<circle cx="2764.7" cy="1478.5" r="3.7" fill="#FF8000"/>
<circle cx="2764.7" cy="1496.1" r="3.7" fill="#FF8000"/>
<circle cx="2782.3" cy="1073.0" r="3.7" fill="#FF8000"/>
<circle cx="2782.3" cy="1090.6" r="3.7" fill="#FF8000"/>
<circle cx="2782.3" cy="1108.3" r="3.7" fill="#FF8000"/>
<circle cx="2782.3" cy="1125.9" r="3.7" fill="#FF8000"/>
<circle cx="2782.3" cy="1143.5" r="3.7" fill="#FF8000"/>
<circle cx="2782.3" cy="1161.2" r="3.7" fill="#FF8000"/>
<circle cx="2782.3" cy="1178.8" r="3.7" fill="#FF8000"/>
<circle cx="2782.3" cy="1196.4" r="3.7" fill="#FF8000"/>
<circle cx="2782.3" cy="1214.0" r="3.7" fill="#FF8000"/>
<circle cx="2782.3" cy="1231.7" r="3.7" fill="#FF8000"/>
<circle cx="2782.3" cy="1249.3" r="3.7" fill="#FF8000"/>
<circle cx="2782.3" cy="1266.9" r="3.7" fill="#FF8000"/>
<circle cx="2782.3" cy="1302.2" r="3.7" fill="#FF8000"/>
<circle cx="2782.3" cy="1319.8" r="3.7" fill="#FF8000"/>
<circle cx="2782.3" cy="1337.5" r="3.7" fill="#FF8000"/>
<circle cx="2782.3" cy="1355.1" r="3.7" fill="#FF8000"/>
<circle cx="2782.3" cy="1372.7" r="3.7" fill="#FF8000"/>
<circle cx="2782.3" cy="1390.3" r="3.7" fill="#FF8000"/>
<circle cx="2782.3" cy="1408.0" r="3.7" fill="#FF8000"/>
<circle cx="2782.3" cy="1425.6" r="3.7" fill="#FF8000"/>
<circle cx="2782.3" cy="1443.2" r="3.7" fill="#FF8000"/>
<circle cx="2782.3" cy="1460.9" r="3.7" fill="#FF8000"/>
<circle cx="2782.3" cy="1478.5" r="3.7" fill="#FF8000"/>
<circle cx="2782.3" cy="1496.1" r="3.7" fill="#FF8000"/>
<ellipse cx="2368.0" cy="1134.7" rx="4.2" ry="3.7" fill="#FF8000"/><rect x="2366.4" y="1133.2" width="3.2" height="3" fill="#3a4050"/>
<ellipse cx="2368.0" cy="1152.3" rx="4.2" ry="3.7" fill="#FF8000"/><rect x="2366.4" y="1150.8" width="3.2" height="3" fill="#3a4050"/>
<ellipse cx="2368.0" cy="1170.0" rx="4.2" ry="3.7" fill="#FF8000"/><rect x="2366.4" y="1168.5" width="3.2" height="3" fill="#3a4050"/>
<ellipse cx="2368.0" cy="1187.6" rx="4.2" ry="3.7" fill="#FF8000"/><rect x="2366.4" y="1186.1" width="3.2" height="3" fill="#3a4050"/>
<ellipse cx="2368.0" cy="1240.5" rx="4.2" ry="3.7" fill="#FF8000"/><rect x="2366.4" y="1239.0" width="3.2" height="3" fill="#3a4050"/>
<ellipse cx="2368.0" cy="1258.1" rx="4.2" ry="3.7" fill="#FF8000"/><rect x="2366.4" y="1256.6" width="3.2" height="3" fill="#3a4050"/>
<ellipse cx="2368.0" cy="1275.7" rx="4.2" ry="3.7" fill="#FF8000"/><rect x="2366.4" y="1274.2" width="3.2" height="3" fill="#3a4050"/>
<ellipse cx="2385.6" cy="1134.7" rx="4.2" ry="3.7" fill="#FF8000"/><rect x="2384.0" y="1133.2" width="3.2" height="3" fill="#3a4050"/>
<ellipse cx="2385.6" cy="1152.3" rx="4.2" ry="3.7" fill="#FF8000"/><rect x="2384.0" y="1150.8" width="3.2" height="3" fill="#3a4050"/>
<ellipse cx="2385.6" cy="1170.0" rx="4.2" ry="3.7" fill="#FF8000"/><rect x="2384.0" y="1168.5" width="3.2" height="3" fill="#3a4050"/>
<ellipse cx="2385.6" cy="1187.6" rx="4.2" ry="3.7" fill="#FF8000"/><rect x="2384.0" y="1186.1" width="3.2" height="3" fill="#3a4050"/>
<ellipse cx="2385.6" cy="1205.2" rx="4.2" ry="3.7" fill="#FF8000"/><rect x="2384.0" y="1203.7" width="3.2" height="3" fill="#3a4050"/>
<ellipse cx="2385.6" cy="1222.8" rx="4.2" ry="3.7" fill="#FF8000"/><rect x="2384.0" y="1221.3" width="3.2" height="3" fill="#3a4050"/>
<ellipse cx="2385.6" cy="1240.5" rx="4.2" ry="3.7" fill="#FF8000"/><rect x="2384.0" y="1239.0" width="3.2" height="3" fill="#3a4050"/>
<ellipse cx="2385.6" cy="1258.1" rx="4.2" ry="3.7" fill="#FF8000"/><rect x="2384.0" y="1256.6" width="3.2" height="3" fill="#3a4050"/>
<ellipse cx="2385.6" cy="1275.7" rx="4.2" ry="3.7" fill="#FF8000"/><rect x="2384.0" y="1274.2" width="3.2" height="3" fill="#3a4050"/>
<ellipse cx="2385.6" cy="1293.4" rx="4.2" ry="3.7" fill="#FF8000"/><rect x="2384.0" y="1291.9" width="3.2" height="3" fill="#3a4050"/>
<ellipse cx="2403.3" cy="1117.1" rx="4.2" ry="3.7" fill="#FF8000"/><rect x="2401.7" y="1115.6" width="3.2" height="3" fill="#3a4050"/>
<ellipse cx="2403.3" cy="1134.7" rx="4.2" ry="3.7" fill="#FF8000"/><rect x="2401.7" y="1133.2" width="3.2" height="3" fill="#3a4050"/>
<ellipse cx="2403.3" cy="1152.3" rx="4.2" ry="3.7" fill="#FF8000"/><rect x="2401.7" y="1150.8" width="3.2" height="3" fill="#3a4050"/>
<ellipse cx="2403.3" cy="1170.0" rx="4.2" ry="3.7" fill="#FF8000"/><rect x="2401.7" y="1168.5" width="3.2" height="3" fill="#3a4050"/>
<ellipse cx="2403.3" cy="1187.6" rx="4.2" ry="3.7" fill="#FF8000"/><rect x="2401.7" y="1186.1" width="3.2" height="3" fill="#3a4050"/>
<ellipse cx="2403.3" cy="1205.2" rx="4.2" ry="3.7" fill="#FF8000"/><rect x="2401.7" y="1203.7" width="3.2" height="3" fill="#3a4050"/>
<ellipse cx="2403.3" cy="1222.8" rx="4.2" ry="3.7" fill="#FF8000"/><rect x="2401.7" y="1221.3" width="3.2" height="3" fill="#3a4050"/>
<ellipse cx="2403.3" cy="1240.5" rx="4.2" ry="3.7" fill="#FF8000"/><rect x="2401.7" y="1239.0" width="3.2" height="3" fill="#3a4050"/>
<ellipse cx="2403.3" cy="1258.1" rx="4.2" ry="3.7" fill="#FF8000"/><rect x="2401.7" y="1256.6" width="3.2" height="3" fill="#3a4050"/>
<ellipse cx="2403.3" cy="1275.7" rx="4.2" ry="3.7" fill="#FF8000"/><rect x="2401.7" y="1274.2" width="3.2" height="3" fill="#3a4050"/>
<ellipse cx="2420.9" cy="1099.4" rx="4.2" ry="3.7" fill="#FF8000"/><rect x="2419.3" y="1097.9" width="3.2" height="3" fill="#3a4050"/>
<ellipse cx="2420.9" cy="1117.1" rx="4.2" ry="3.7" fill="#FF8000"/><rect x="2419.3" y="1115.6" width="3.2" height="3" fill="#3a4050"/>
<ellipse cx="2420.9" cy="1134.7" rx="4.2" ry="3.7" fill="#FF8000"/><rect x="2419.3" y="1133.2" width="3.2" height="3" fill="#3a4050"/>
<ellipse cx="2420.9" cy="1152.3" rx="4.2" ry="3.7" fill="#FF8000"/><rect x="2419.3" y="1150.8" width="3.2" height="3" fill="#3a4050"/>
<ellipse cx="2420.9" cy="1170.0" rx="4.2" ry="3.7" fill="#FF8000"/><rect x="2419.3" y="1168.5" width="3.2" height="3" fill="#3a4050"/>
<ellipse cx="2420.9" cy="1187.6" rx="4.2" ry="3.7" fill="#FF8000"/><rect x="2419.3" y="1186.1" width="3.2" height="3" fill="#3a4050"/>
<ellipse cx="2420.9" cy="1205.2" rx="4.2" ry="3.7" fill="#FF8000"/><rect x="2419.3" y="1203.7" width="3.2" height="3" fill="#3a4050"/>
<ellipse cx="2420.9" cy="1222.8" rx="4.2" ry="3.7" fill="#FF8000"/><rect x="2419.3" y="1221.3" width="3.2" height="3" fill="#3a4050"/>
<ellipse cx="2420.9" cy="1240.5" rx="4.2" ry="3.7" fill="#FF8000"/><rect x="2419.3" y="1239.0" width="3.2" height="3" fill="#3a4050"/>
<ellipse cx="2420.9" cy="1258.1" rx="4.2" ry="3.7" fill="#FF8000"/><rect x="2419.3" y="1256.6" width="3.2" height="3" fill="#3a4050"/>
<ellipse cx="2438.5" cy="1099.4" rx="4.2" ry="3.7" fill="#FF8000"/><rect x="2436.9" y="1097.9" width="3.2" height="3" fill="#3a4050"/>
<ellipse cx="2438.5" cy="1117.1" rx="4.2" ry="3.7" fill="#FF8000"/><rect x="2436.9" y="1115.6" width="3.2" height="3" fill="#3a4050"/>
<ellipse cx="2438.5" cy="1134.7" rx="4.2" ry="3.7" fill="#FF8000"/><rect x="2436.9" y="1133.2" width="3.2" height="3" fill="#3a4050"/>
<ellipse cx="2438.5" cy="1152.3" rx="4.2" ry="3.7" fill="#FF8000"/><rect x="2436.9" y="1150.8" width="3.2" height="3" fill="#3a4050"/>
<ellipse cx="2438.5" cy="1170.0" rx="4.2" ry="3.7" fill="#FF8000"/><rect x="2436.9" y="1168.5" width="3.2" height="3" fill="#3a4050"/>
<ellipse cx="2438.5" cy="1187.6" rx="4.2" ry="3.7" fill="#FF8000"/><rect x="2436.9" y="1186.1" width="3.2" height="3" fill="#3a4050"/>
<ellipse cx="2438.5" cy="1205.2" rx="4.2" ry="3.7" fill="#FF8000"/><rect x="2436.9" y="1203.7" width="3.2" height="3" fill="#3a4050"/>
<ellipse cx="2438.5" cy="1222.8" rx="4.2" ry="3.7" fill="#FF8000"/><rect x="2436.9" y="1221.3" width="3.2" height="3" fill="#3a4050"/>
<ellipse cx="2438.5" cy="1240.5" rx="4.2" ry="3.7" fill="#FF8000"/><rect x="2436.9" y="1239.0" width="3.2" height="3" fill="#3a4050"/>
<ellipse cx="2438.5" cy="1258.1" rx="4.2" ry="3.7" fill="#FF8000"/><rect x="2436.9" y="1256.6" width="3.2" height="3" fill="#3a4050"/>
<ellipse cx="2456.2" cy="1099.4" rx="4.2" ry="3.7" fill="#FF8000"/><rect x="2454.6" y="1097.9" width="3.2" height="3" fill="#3a4050"/>
<ellipse cx="2456.2" cy="1117.1" rx="4.2" ry="3.7" fill="#FF8000"/><rect x="2454.6" y="1115.6" width="3.2" height="3" fill="#3a4050"/>
<ellipse cx="2456.2" cy="1134.7" rx="4.2" ry="3.7" fill="#FF8000"/><rect x="2454.6" y="1133.2" width="3.2" height="3" fill="#3a4050"/>
<ellipse cx="2473.8" cy="1117.1" rx="4.2" ry="3.7" fill="#FF8000"/><rect x="2472.2" y="1115.6" width="3.2" height="3" fill="#3a4050"/>
<ellipse cx="2473.8" cy="1134.7" rx="4.2" ry="3.7" fill="#FF8000"/><rect x="2472.2" y="1133.2" width="3.2" height="3" fill="#3a4050"/>
<ellipse cx="2368.0" cy="1328.6" rx="4.2" ry="3.7" fill="#FF8000"/><rect x="2366.4" y="1327.1" width="3.2" height="3" fill="#3a4050"/>
<ellipse cx="2368.0" cy="1346.2" rx="4.2" ry="3.7" fill="#FF8000"/><rect x="2366.4" y="1344.8" width="3.2" height="3" fill="#3a4050"/>
<ellipse cx="2368.0" cy="1363.9" rx="4.2" ry="3.7" fill="#FF8000"/><rect x="2366.4" y="1362.4" width="3.2" height="3" fill="#3a4050"/>
<ellipse cx="2368.0" cy="1381.5" rx="4.2" ry="3.7" fill="#FF8000"/><rect x="2366.4" y="1380.0" width="3.2" height="3" fill="#3a4050"/>
<ellipse cx="2368.0" cy="1399.1" rx="4.2" ry="3.7" fill="#FF8000"/><rect x="2366.4" y="1397.6" width="3.2" height="3" fill="#3a4050"/>
<ellipse cx="2368.0" cy="1416.8" rx="4.2" ry="3.7" fill="#FF8000"/><rect x="2366.4" y="1415.3" width="3.2" height="3" fill="#3a4050"/>
<ellipse cx="2368.0" cy="1434.4" rx="4.2" ry="3.7" fill="#FF8000"/><rect x="2366.4" y="1432.9" width="3.2" height="3" fill="#3a4050"/>
<ellipse cx="2368.0" cy="1452.0" rx="4.2" ry="3.7" fill="#FF8000"/><rect x="2366.4" y="1450.5" width="3.2" height="3" fill="#3a4050"/>
<ellipse cx="2385.6" cy="1346.2" rx="4.2" ry="3.7" fill="#FF8000"/><rect x="2384.0" y="1344.8" width="3.2" height="3" fill="#3a4050"/>
<ellipse cx="2385.6" cy="1363.9" rx="4.2" ry="3.7" fill="#FF8000"/><rect x="2384.0" y="1362.4" width="3.2" height="3" fill="#3a4050"/>
<ellipse cx="2385.6" cy="1381.5" rx="4.2" ry="3.7" fill="#FF8000"/><rect x="2384.0" y="1380.0" width="3.2" height="3" fill="#3a4050"/>
<ellipse cx="2385.6" cy="1399.1" rx="4.2" ry="3.7" fill="#FF8000"/><rect x="2384.0" y="1397.6" width="3.2" height="3" fill="#3a4050"/>
<ellipse cx="2385.6" cy="1416.8" rx="4.2" ry="3.7" fill="#FF8000"/><rect x="2384.0" y="1415.3" width="3.2" height="3" fill="#3a4050"/>
<ellipse cx="2385.6" cy="1434.4" rx="4.2" ry="3.7" fill="#FF8000"/><rect x="2384.0" y="1432.9" width="3.2" height="3" fill="#3a4050"/>
<ellipse cx="2385.6" cy="1452.0" rx="4.2" ry="3.7" fill="#FF8000"/><rect x="2384.0" y="1450.5" width="3.2" height="3" fill="#3a4050"/>
<ellipse cx="2385.6" cy="1469.7" rx="4.2" ry="3.7" fill="#FF8000"/><rect x="2384.0" y="1468.2" width="3.2" height="3" fill="#3a4050"/>
<ellipse cx="2403.3" cy="1346.2" rx="4.2" ry="3.7" fill="#FF8000"/><rect x="2401.7" y="1344.8" width="3.2" height="3" fill="#3a4050"/>
<ellipse cx="2403.3" cy="1363.9" rx="4.2" ry="3.7" fill="#FF8000"/><rect x="2401.7" y="1362.4" width="3.2" height="3" fill="#3a4050"/>
<ellipse cx="2403.3" cy="1381.5" rx="4.2" ry="3.7" fill="#FF8000"/><rect x="2401.7" y="1380.0" width="3.2" height="3" fill="#3a4050"/>
<ellipse cx="2403.3" cy="1399.1" rx="4.2" ry="3.7" fill="#FF8000"/><rect x="2401.7" y="1397.6" width="3.2" height="3" fill="#3a4050"/>
<ellipse cx="2403.3" cy="1416.8" rx="4.2" ry="3.7" fill="#FF8000"/><rect x="2401.7" y="1415.3" width="3.2" height="3" fill="#3a4050"/>
<ellipse cx="2403.3" cy="1434.4" rx="4.2" ry="3.7" fill="#FF8000"/><rect x="2401.7" y="1432.9" width="3.2" height="3" fill="#3a4050"/>
<ellipse cx="2403.3" cy="1452.0" rx="4.2" ry="3.7" fill="#FF8000"/><rect x="2401.7" y="1450.5" width="3.2" height="3" fill="#3a4050"/>
<ellipse cx="2403.3" cy="1469.7" rx="4.2" ry="3.7" fill="#FF8000"/><rect x="2401.7" y="1468.2" width="3.2" height="3" fill="#3a4050"/>
<ellipse cx="2403.3" cy="1487.3" rx="4.2" ry="3.7" fill="#FF8000"/><rect x="2401.7" y="1485.8" width="3.2" height="3" fill="#3a4050"/>
<ellipse cx="2420.9" cy="1363.9" rx="4.2" ry="3.7" fill="#FF8000"/><rect x="2419.3" y="1362.4" width="3.2" height="3" fill="#3a4050"/>
<ellipse cx="2420.9" cy="1381.5" rx="4.2" ry="3.7" fill="#FF8000"/><rect x="2419.3" y="1380.0" width="3.2" height="3" fill="#3a4050"/>
<ellipse cx="2420.9" cy="1399.1" rx="4.2" ry="3.7" fill="#FF8000"/><rect x="2419.3" y="1397.6" width="3.2" height="3" fill="#3a4050"/>
<ellipse cx="2420.9" cy="1416.8" rx="4.2" ry="3.7" fill="#FF8000"/><rect x="2419.3" y="1415.3" width="3.2" height="3" fill="#3a4050"/>
<ellipse cx="2420.9" cy="1434.4" rx="4.2" ry="3.7" fill="#FF8000"/><rect x="2419.3" y="1432.9" width="3.2" height="3" fill="#3a4050"/>
<ellipse cx="2420.9" cy="1452.0" rx="4.2" ry="3.7" fill="#FF8000"/><rect x="2419.3" y="1450.5" width="3.2" height="3" fill="#3a4050"/>
<ellipse cx="2420.9" cy="1469.7" rx="4.2" ry="3.7" fill="#FF8000"/><rect x="2419.3" y="1468.2" width="3.2" height="3" fill="#3a4050"/>
<ellipse cx="2420.9" cy="1487.3" rx="4.2" ry="3.7" fill="#FF8000"/><rect x="2419.3" y="1485.8" width="3.2" height="3" fill="#3a4050"/>
<ellipse cx="2438.5" cy="1363.9" rx="4.2" ry="3.7" fill="#FF8000"/><rect x="2436.9" y="1362.4" width="3.2" height="3" fill="#3a4050"/>
<ellipse cx="2438.5" cy="1381.5" rx="4.2" ry="3.7" fill="#FF8000"/><rect x="2436.9" y="1380.0" width="3.2" height="3" fill="#3a4050"/>
<ellipse cx="2438.5" cy="1399.1" rx="4.2" ry="3.7" fill="#FF8000"/><rect x="2436.9" y="1397.6" width="3.2" height="3" fill="#3a4050"/>
<ellipse cx="2438.5" cy="1416.8" rx="4.2" ry="3.7" fill="#FF8000"/><rect x="2436.9" y="1415.3" width="3.2" height="3" fill="#3a4050"/>
<ellipse cx="2438.5" cy="1434.4" rx="4.2" ry="3.7" fill="#FF8000"/><rect x="2436.9" y="1432.9" width="3.2" height="3" fill="#3a4050"/>
<ellipse cx="2438.5" cy="1452.0" rx="4.2" ry="3.7" fill="#FF8000"/><rect x="2436.9" y="1450.5" width="3.2" height="3" fill="#3a4050"/>
<ellipse cx="2438.5" cy="1469.7" rx="4.2" ry="3.7" fill="#FF8000"/><rect x="2436.9" y="1468.2" width="3.2" height="3" fill="#3a4050"/>
<ellipse cx="2438.5" cy="1487.3" rx="4.2" ry="3.7" fill="#FF8000"/><rect x="2436.9" y="1485.8" width="3.2" height="3" fill="#3a4050"/>
<ellipse cx="2456.2" cy="1363.9" rx="4.2" ry="3.7" fill="#FF8000"/><rect x="2454.6" y="1362.4" width="3.2" height="3" fill="#3a4050"/>
<ellipse cx="2456.2" cy="1381.5" rx="4.2" ry="3.7" fill="#FF8000"/><rect x="2454.6" y="1380.0" width="3.2" height="3" fill="#3a4050"/>
<ellipse cx="2456.2" cy="1399.1" rx="4.2" ry="3.7" fill="#FF8000"/><rect x="2454.6" y="1397.6" width="3.2" height="3" fill="#3a4050"/>
<ellipse cx="2456.2" cy="1416.8" rx="4.2" ry="3.7" fill="#FF8000"/><rect x="2454.6" y="1415.3" width="3.2" height="3" fill="#3a4050"/>
<ellipse cx="2456.2" cy="1434.4" rx="4.2" ry="3.7" fill="#FF8000"/><rect x="2454.6" y="1432.9" width="3.2" height="3" fill="#3a4050"/>
<ellipse cx="2456.2" cy="1452.0" rx="4.2" ry="3.7" fill="#FF8000"/><rect x="2454.6" y="1450.5" width="3.2" height="3" fill="#3a4050"/>
<ellipse cx="2456.2" cy="1469.7" rx="4.2" ry="3.7" fill="#FF8000"/><rect x="2454.6" y="1468.2" width="3.2" height="3" fill="#3a4050"/>
<ellipse cx="2456.2" cy="1487.3" rx="4.2" ry="3.7" fill="#FF8000"/><rect x="2454.6" y="1485.8" width="3.2" height="3" fill="#3a4050"/>
<ellipse cx="2473.8" cy="1381.5" rx="4.2" ry="3.7" fill="#FF8000"/><rect x="2472.2" y="1380.0" width="3.2" height="3" fill="#3a4050"/>
<ellipse cx="2473.8" cy="1399.1" rx="4.2" ry="3.7" fill="#FF8000"/><rect x="2472.2" y="1397.6" width="3.2" height="3" fill="#3a4050"/>
<ellipse cx="2473.8" cy="1452.0" rx="4.2" ry="3.7" fill="#FF8000"/><rect x="2472.2" y="1450.5" width="3.2" height="3" fill="#3a4050"/>
<ellipse cx="2473.8" cy="1469.7" rx="4.2" ry="3.7" fill="#FF8000"/><rect x="2472.2" y="1468.2" width="3.2" height="3" fill="#3a4050"/>
<ellipse cx="2473.8" cy="1487.3" rx="4.2" ry="3.7" fill="#FF8000"/><rect x="2472.2" y="1485.8" width="3.2" height="3" fill="#3a4050"/>
<ellipse cx="2491.4" cy="1240.5" rx="4.2" ry="3.7" fill="#FF8000"/><rect x="2489.8" y="1239.0" width="3.2" height="3" fill="#3a4050"/>
<ellipse cx="2491.4" cy="1258.1" rx="4.2" ry="3.7" fill="#FF8000"/><rect x="2489.8" y="1256.6" width="3.2" height="3" fill="#3a4050"/>
<ellipse cx="2491.4" cy="1275.7" rx="4.2" ry="3.7" fill="#FF8000"/><rect x="2489.8" y="1274.2" width="3.2" height="3" fill="#3a4050"/>
<ellipse cx="2491.4" cy="1311.0" rx="4.2" ry="3.7" fill="#FF8000"/><rect x="2489.8" y="1309.5" width="3.2" height="3" fill="#3a4050"/>
<ellipse cx="2491.4" cy="1346.2" rx="4.2" ry="3.7" fill="#FF8000"/><rect x="2489.8" y="1344.8" width="3.2" height="3" fill="#3a4050"/>
<ellipse cx="2509.0" cy="1222.8" rx="4.2" ry="3.7" fill="#FF8000"/><rect x="2507.4" y="1221.3" width="3.2" height="3" fill="#3a4050"/>
<ellipse cx="2509.0" cy="1240.5" rx="4.2" ry="3.7" fill="#FF8000"/><rect x="2507.4" y="1239.0" width="3.2" height="3" fill="#3a4050"/>
<ellipse cx="2509.0" cy="1258.1" rx="4.2" ry="3.7" fill="#FF8000"/><rect x="2507.4" y="1256.6" width="3.2" height="3" fill="#3a4050"/>
<ellipse cx="2509.0" cy="1275.7" rx="4.2" ry="3.7" fill="#FF8000"/><rect x="2507.4" y="1274.2" width="3.2" height="3" fill="#3a4050"/>
<ellipse cx="2509.0" cy="1293.4" rx="4.2" ry="3.7" fill="#FF8000"/><rect x="2507.4" y="1291.9" width="3.2" height="3" fill="#3a4050"/>
<ellipse cx="2509.0" cy="1311.0" rx="4.2" ry="3.7" fill="#FF8000"/><rect x="2507.4" y="1309.5" width="3.2" height="3" fill="#3a4050"/>
<ellipse cx="2509.0" cy="1328.6" rx="4.2" ry="3.7" fill="#FF8000"/><rect x="2507.4" y="1327.1" width="3.2" height="3" fill="#3a4050"/>
<ellipse cx="2509.0" cy="1346.2" rx="4.2" ry="3.7" fill="#FF8000"/><rect x="2507.4" y="1344.8" width="3.2" height="3" fill="#3a4050"/>
<ellipse cx="2526.7" cy="1222.8" rx="4.2" ry="3.7" fill="#FF8000"/><rect x="2525.1" y="1221.3" width="3.2" height="3" fill="#3a4050"/>
<ellipse cx="2526.7" cy="1240.5" rx="4.2" ry="3.7" fill="#FF8000"/><rect x="2525.1" y="1239.0" width="3.2" height="3" fill="#3a4050"/>
<ellipse cx="2526.7" cy="1258.1" rx="4.2" ry="3.7" fill="#FF8000"/><rect x="2525.1" y="1256.6" width="3.2" height="3" fill="#3a4050"/>
<ellipse cx="2526.7" cy="1275.7" rx="4.2" ry="3.7" fill="#FF8000"/><rect x="2525.1" y="1274.2" width="3.2" height="3" fill="#3a4050"/>
<ellipse cx="2526.7" cy="1293.4" rx="4.2" ry="3.7" fill="#FF8000"/><rect x="2525.1" y="1291.9" width="3.2" height="3" fill="#3a4050"/>
<ellipse cx="2526.7" cy="1311.0" rx="4.2" ry="3.7" fill="#FF8000"/><rect x="2525.1" y="1309.5" width="3.2" height="3" fill="#3a4050"/>
<ellipse cx="2526.7" cy="1328.6" rx="4.2" ry="3.7" fill="#FF8000"/><rect x="2525.1" y="1327.1" width="3.2" height="3" fill="#3a4050"/>
<ellipse cx="2526.7" cy="1346.2" rx="4.2" ry="3.7" fill="#FF8000"/><rect x="2525.1" y="1344.8" width="3.2" height="3" fill="#3a4050"/>
<ellipse cx="2526.7" cy="1363.9" rx="4.2" ry="3.7" fill="#FF8000"/><rect x="2525.1" y="1362.4" width="3.2" height="3" fill="#3a4050"/>
<ellipse cx="2544.3" cy="1222.8" rx="4.2" ry="3.7" fill="#FF8000"/><rect x="2542.7" y="1221.3" width="3.2" height="3" fill="#3a4050"/>
<ellipse cx="2544.3" cy="1240.5" rx="4.2" ry="3.7" fill="#FF8000"/><rect x="2542.7" y="1239.0" width="3.2" height="3" fill="#3a4050"/>
<ellipse cx="2544.3" cy="1258.1" rx="4.2" ry="3.7" fill="#FF8000"/><rect x="2542.7" y="1256.6" width="3.2" height="3" fill="#3a4050"/>
<ellipse cx="2544.3" cy="1275.7" rx="4.2" ry="3.7" fill="#FF8000"/><rect x="2542.7" y="1274.2" width="3.2" height="3" fill="#3a4050"/>
<ellipse cx="2544.3" cy="1293.4" rx="4.2" ry="3.7" fill="#FF8000"/><rect x="2542.7" y="1291.9" width="3.2" height="3" fill="#3a4050"/>
<ellipse cx="2544.3" cy="1311.0" rx="4.2" ry="3.7" fill="#FF8000"/><rect x="2542.7" y="1309.5" width="3.2" height="3" fill="#3a4050"/>
<ellipse cx="2544.3" cy="1328.6" rx="4.2" ry="3.7" fill="#FF8000"/><rect x="2542.7" y="1327.1" width="3.2" height="3" fill="#3a4050"/>
<ellipse cx="2544.3" cy="1346.2" rx="4.2" ry="3.7" fill="#FF8000"/><rect x="2542.7" y="1344.8" width="3.2" height="3" fill="#3a4050"/>
<ellipse cx="2544.3" cy="1363.9" rx="4.2" ry="3.7" fill="#FF8000"/><rect x="2542.7" y="1362.4" width="3.2" height="3" fill="#3a4050"/>
<ellipse cx="2544.3" cy="1381.5" rx="4.2" ry="3.7" fill="#FF8000"/><rect x="2542.7" y="1380.0" width="3.2" height="3" fill="#3a4050"/>
<ellipse cx="2544.3" cy="1399.1" rx="4.2" ry="3.7" fill="#FF8000"/><rect x="2542.7" y="1397.6" width="3.2" height="3" fill="#3a4050"/>
<ellipse cx="2561.9" cy="1222.8" rx="4.2" ry="3.7" fill="#FF8000"/><rect x="2560.3" y="1221.3" width="3.2" height="3" fill="#3a4050"/>
<ellipse cx="2561.9" cy="1240.5" rx="4.2" ry="3.7" fill="#FF8000"/><rect x="2560.3" y="1239.0" width="3.2" height="3" fill="#3a4050"/>
<ellipse cx="2561.9" cy="1258.1" rx="4.2" ry="3.7" fill="#FF8000"/><rect x="2560.3" y="1256.6" width="3.2" height="3" fill="#3a4050"/>
<ellipse cx="2561.9" cy="1275.7" rx="4.2" ry="3.7" fill="#FF8000"/><rect x="2560.3" y="1274.2" width="3.2" height="3" fill="#3a4050"/>
<ellipse cx="2561.9" cy="1293.4" rx="4.2" ry="3.7" fill="#FF8000"/><rect x="2560.3" y="1291.9" width="3.2" height="3" fill="#3a4050"/>
<ellipse cx="2561.9" cy="1311.0" rx="4.2" ry="3.7" fill="#FF8000"/><rect x="2560.3" y="1309.5" width="3.2" height="3" fill="#3a4050"/>
<ellipse cx="2561.9" cy="1328.6" rx="4.2" ry="3.7" fill="#FF8000"/><rect x="2560.3" y="1327.1" width="3.2" height="3" fill="#3a4050"/>
<ellipse cx="2561.9" cy="1346.2" rx="4.2" ry="3.7" fill="#FF8000"/><rect x="2560.3" y="1344.8" width="3.2" height="3" fill="#3a4050"/>
<ellipse cx="2561.9" cy="1363.9" rx="4.2" ry="3.7" fill="#FF8000"/><rect x="2560.3" y="1362.4" width="3.2" height="3" fill="#3a4050"/>
<ellipse cx="2561.9" cy="1381.5" rx="4.2" ry="3.7" fill="#FF8000"/><rect x="2560.3" y="1380.0" width="3.2" height="3" fill="#3a4050"/>
<ellipse cx="2579.6" cy="1222.8" rx="4.2" ry="3.7" fill="#FF8000"/><rect x="2578.0" y="1221.3" width="3.2" height="3" fill="#3a4050"/>
<ellipse cx="2579.6" cy="1240.5" rx="4.2" ry="3.7" fill="#FF8000"/><rect x="2578.0" y="1239.0" width="3.2" height="3" fill="#3a4050"/>
<ellipse cx="2579.6" cy="1258.1" rx="4.2" ry="3.7" fill="#FF8000"/><rect x="2578.0" y="1256.6" width="3.2" height="3" fill="#3a4050"/>
<ellipse cx="2579.6" cy="1275.7" rx="4.2" ry="3.7" fill="#FF8000"/><rect x="2578.0" y="1274.2" width="3.2" height="3" fill="#3a4050"/>
<ellipse cx="2579.6" cy="1293.4" rx="4.2" ry="3.7" fill="#FF8000"/><rect x="2578.0" y="1291.9" width="3.2" height="3" fill="#3a4050"/>
<ellipse cx="2579.6" cy="1311.0" rx="4.2" ry="3.7" fill="#FF8000"/><rect x="2578.0" y="1309.5" width="3.2" height="3" fill="#3a4050"/>
<ellipse cx="2579.6" cy="1328.6" rx="4.2" ry="3.7" fill="#FF8000"/><rect x="2578.0" y="1327.1" width="3.2" height="3" fill="#3a4050"/>
<ellipse cx="2579.6" cy="1346.2" rx="4.2" ry="3.7" fill="#FF8000"/><rect x="2578.0" y="1344.8" width="3.2" height="3" fill="#3a4050"/>
<ellipse cx="2579.6" cy="1363.9" rx="4.2" ry="3.7" fill="#FF8000"/><rect x="2578.0" y="1362.4" width="3.2" height="3" fill="#3a4050"/>
<ellipse cx="2579.6" cy="1381.5" rx="4.2" ry="3.7" fill="#FF8000"/><rect x="2578.0" y="1380.0" width="3.2" height="3" fill="#3a4050"/>
<ellipse cx="2597.2" cy="1222.8" rx="4.2" ry="3.7" fill="#FF8000"/><rect x="2595.6" y="1221.3" width="3.2" height="3" fill="#3a4050"/>
<ellipse cx="2597.2" cy="1240.5" rx="4.2" ry="3.7" fill="#FF8000"/><rect x="2595.6" y="1239.0" width="3.2" height="3" fill="#3a4050"/>
<ellipse cx="2597.2" cy="1258.1" rx="4.2" ry="3.7" fill="#FF8000"/><rect x="2595.6" y="1256.6" width="3.2" height="3" fill="#3a4050"/>
<ellipse cx="2597.2" cy="1275.7" rx="4.2" ry="3.7" fill="#FF8000"/><rect x="2595.6" y="1274.2" width="3.2" height="3" fill="#3a4050"/>
<ellipse cx="2597.2" cy="1293.4" rx="4.2" ry="3.7" fill="#FF8000"/><rect x="2595.6" y="1291.9" width="3.2" height="3" fill="#3a4050"/>
<ellipse cx="2597.2" cy="1311.0" rx="4.2" ry="3.7" fill="#FF8000"/><rect x="2595.6" y="1309.5" width="3.2" height="3" fill="#3a4050"/>
<ellipse cx="2597.2" cy="1328.6" rx="4.2" ry="3.7" fill="#FF8000"/><rect x="2595.6" y="1327.1" width="3.2" height="3" fill="#3a4050"/>
<ellipse cx="2597.2" cy="1346.2" rx="4.2" ry="3.7" fill="#FF8000"/><rect x="2595.6" y="1344.8" width="3.2" height="3" fill="#3a4050"/>
<ellipse cx="2597.2" cy="1363.9" rx="4.2" ry="3.7" fill="#FF8000"/><rect x="2595.6" y="1362.4" width="3.2" height="3" fill="#3a4050"/>
<ellipse cx="2597.2" cy="1381.5" rx="4.2" ry="3.7" fill="#FF8000"/><rect x="2595.6" y="1380.0" width="3.2" height="3" fill="#3a4050"/>
<ellipse cx="2614.8" cy="1222.8" rx="4.2" ry="3.7" fill="#FF8000"/><rect x="2613.2" y="1221.3" width="3.2" height="3" fill="#3a4050"/>
<ellipse cx="2614.8" cy="1240.5" rx="4.2" ry="3.7" fill="#FF8000"/><rect x="2613.2" y="1239.0" width="3.2" height="3" fill="#3a4050"/>
<ellipse cx="2614.8" cy="1258.1" rx="4.2" ry="3.7" fill="#FF8000"/><rect x="2613.2" y="1256.6" width="3.2" height="3" fill="#3a4050"/>
<ellipse cx="2614.8" cy="1275.7" rx="4.2" ry="3.7" fill="#FF8000"/><rect x="2613.2" y="1274.2" width="3.2" height="3" fill="#3a4050"/>
<ellipse cx="2614.8" cy="1293.4" rx="4.2" ry="3.7" fill="#FF8000"/><rect x="2613.2" y="1291.9" width="3.2" height="3" fill="#3a4050"/>
<ellipse cx="2614.8" cy="1311.0" rx="4.2" ry="3.7" fill="#FF8000"/><rect x="2613.2" y="1309.5" width="3.2" height="3" fill="#3a4050"/>
<ellipse cx="2614.8" cy="1328.6" rx="4.2" ry="3.7" fill="#FF8000"/><rect x="2613.2" y="1327.1" width="3.2" height="3" fill="#3a4050"/>
<ellipse cx="2614.8" cy="1346.2" rx="4.2" ry="3.7" fill="#FF8000"/><rect x="2613.2" y="1344.8" width="3.2" height="3" fill="#3a4050"/>
<ellipse cx="2614.8" cy="1363.9" rx="4.2" ry="3.7" fill="#FF8000"/><rect x="2613.2" y="1362.4" width="3.2" height="3" fill="#3a4050"/>
<ellipse cx="2632.4" cy="1240.5" rx="4.2" ry="3.7" fill="#FF8000"/><rect x="2630.8" y="1239.0" width="3.2" height="3" fill="#3a4050"/>
<ellipse cx="2632.4" cy="1258.1" rx="4.2" ry="3.7" fill="#FF8000"/><rect x="2630.8" y="1256.6" width="3.2" height="3" fill="#3a4050"/>
<ellipse cx="2632.4" cy="1275.7" rx="4.2" ry="3.7" fill="#FF8000"/><rect x="2630.8" y="1274.2" width="3.2" height="3" fill="#3a4050"/>
<ellipse cx="2632.4" cy="1293.4" rx="4.2" ry="3.7" fill="#FF8000"/><rect x="2630.8" y="1291.9" width="3.2" height="3" fill="#3a4050"/>
<ellipse cx="2632.4" cy="1311.0" rx="4.2" ry="3.7" fill="#FF8000"/><rect x="2630.8" y="1309.5" width="3.2" height="3" fill="#3a4050"/>
<ellipse cx="2632.4" cy="1328.6" rx="4.2" ry="3.7" fill="#FF8000"/><rect x="2630.8" y="1327.1" width="3.2" height="3" fill="#3a4050"/>
<ellipse cx="2632.4" cy="1346.2" rx="4.2" ry="3.7" fill="#FF8000"/><rect x="2630.8" y="1344.8" width="3.2" height="3" fill="#3a4050"/>
<ellipse cx="2650.1" cy="1240.5" rx="4.2" ry="3.7" fill="#FF8000"/><rect x="2648.5" y="1239.0" width="3.2" height="3" fill="#3a4050"/>
<ellipse cx="2650.1" cy="1258.1" rx="4.2" ry="3.7" fill="#FF8000"/><rect x="2648.5" y="1256.6" width="3.2" height="3" fill="#3a4050"/>
<ellipse cx="2650.1" cy="1152.3" rx="4.2" ry="3.7" fill="#FF8000"/><rect x="2648.5" y="1150.8" width="3.2" height="3" fill="#3a4050"/>
<ellipse cx="2667.7" cy="1081.8" rx="4.2" ry="3.7" fill="#FF8000"/><rect x="2666.1" y="1080.3" width="3.2" height="3" fill="#3a4050"/>
<ellipse cx="2667.7" cy="1099.4" rx="4.2" ry="3.7" fill="#FF8000"/><rect x="2666.1" y="1097.9" width="3.2" height="3" fill="#3a4050"/>
<ellipse cx="2667.7" cy="1117.1" rx="4.2" ry="3.7" fill="#FF8000"/><rect x="2666.1" y="1115.6" width="3.2" height="3" fill="#3a4050"/>
<ellipse cx="2667.7" cy="1134.7" rx="4.2" ry="3.7" fill="#FF8000"/><rect x="2666.1" y="1133.2" width="3.2" height="3" fill="#3a4050"/>
<ellipse cx="2667.7" cy="1152.3" rx="4.2" ry="3.7" fill="#FF8000"/><rect x="2666.1" y="1150.8" width="3.2" height="3" fill="#3a4050"/>
<ellipse cx="2667.7" cy="1170.0" rx="4.2" ry="3.7" fill="#FF8000"/><rect x="2666.1" y="1168.5" width="3.2" height="3" fill="#3a4050"/>
<ellipse cx="2685.3" cy="1081.8" rx="4.2" ry="3.7" fill="#FF8000"/><rect x="2683.7" y="1080.3" width="3.2" height="3" fill="#3a4050"/>
<ellipse cx="2685.3" cy="1099.4" rx="4.2" ry="3.7" fill="#FF8000"/><rect x="2683.7" y="1097.9" width="3.2" height="3" fill="#3a4050"/>
<ellipse cx="2685.3" cy="1117.1" rx="4.2" ry="3.7" fill="#FF8000"/><rect x="2683.7" y="1115.6" width="3.2" height="3" fill="#3a4050"/>
<ellipse cx="2685.3" cy="1134.7" rx="4.2" ry="3.7" fill="#FF8000"/><rect x="2683.7" y="1133.2" width="3.2" height="3" fill="#3a4050"/>
<ellipse cx="2685.3" cy="1152.3" rx="4.2" ry="3.7" fill="#FF8000"/><rect x="2683.7" y="1150.8" width="3.2" height="3" fill="#3a4050"/>
<ellipse cx="2685.3" cy="1170.0" rx="4.2" ry="3.7" fill="#FF8000"/><rect x="2683.7" y="1168.5" width="3.2" height="3" fill="#3a4050"/>
<ellipse cx="2685.3" cy="1187.6" rx="4.2" ry="3.7" fill="#FF8000"/><rect x="2683.7" y="1186.1" width="3.2" height="3" fill="#3a4050"/>
<ellipse cx="2703.0" cy="1081.8" rx="4.2" ry="3.7" fill="#FF8000"/><rect x="2701.4" y="1080.3" width="3.2" height="3" fill="#3a4050"/>
<ellipse cx="2703.0" cy="1099.4" rx="4.2" ry="3.7" fill="#FF8000"/><rect x="2701.4" y="1097.9" width="3.2" height="3" fill="#3a4050"/>
<ellipse cx="2703.0" cy="1117.1" rx="4.2" ry="3.7" fill="#FF8000"/><rect x="2701.4" y="1115.6" width="3.2" height="3" fill="#3a4050"/>
<ellipse cx="2703.0" cy="1134.7" rx="4.2" ry="3.7" fill="#FF8000"/><rect x="2701.4" y="1133.2" width="3.2" height="3" fill="#3a4050"/>
<ellipse cx="2703.0" cy="1152.3" rx="4.2" ry="3.7" fill="#FF8000"/><rect x="2701.4" y="1150.8" width="3.2" height="3" fill="#3a4050"/>
<ellipse cx="2703.0" cy="1170.0" rx="4.2" ry="3.7" fill="#FF8000"/><rect x="2701.4" y="1168.5" width="3.2" height="3" fill="#3a4050"/>
<ellipse cx="2703.0" cy="1187.6" rx="4.2" ry="3.7" fill="#FF8000"/><rect x="2701.4" y="1186.1" width="3.2" height="3" fill="#3a4050"/>
<ellipse cx="2720.6" cy="1081.8" rx="4.2" ry="3.7" fill="#FF8000"/><rect x="2719.0" y="1080.3" width="3.2" height="3" fill="#3a4050"/>
<ellipse cx="2720.6" cy="1099.4" rx="4.2" ry="3.7" fill="#FF8000"/><rect x="2719.0" y="1097.9" width="3.2" height="3" fill="#3a4050"/>
<ellipse cx="2720.6" cy="1117.1" rx="4.2" ry="3.7" fill="#FF8000"/><rect x="2719.0" y="1115.6" width="3.2" height="3" fill="#3a4050"/>
<ellipse cx="2720.6" cy="1134.7" rx="4.2" ry="3.7" fill="#FF8000"/><rect x="2719.0" y="1133.2" width="3.2" height="3" fill="#3a4050"/>
<ellipse cx="2720.6" cy="1152.3" rx="4.2" ry="3.7" fill="#FF8000"/><rect x="2719.0" y="1150.8" width="3.2" height="3" fill="#3a4050"/>
<ellipse cx="2720.6" cy="1170.0" rx="4.2" ry="3.7" fill="#FF8000"/><rect x="2719.0" y="1168.5" width="3.2" height="3" fill="#3a4050"/>
<ellipse cx="2720.6" cy="1187.6" rx="4.2" ry="3.7" fill="#FF8000"/><rect x="2719.0" y="1186.1" width="3.2" height="3" fill="#3a4050"/>
<ellipse cx="2738.2" cy="1081.8" rx="4.2" ry="3.7" fill="#FF8000"/><rect x="2736.6" y="1080.3" width="3.2" height="3" fill="#3a4050"/>
<ellipse cx="2738.2" cy="1099.4" rx="4.2" ry="3.7" fill="#FF8000"/><rect x="2736.6" y="1097.9" width="3.2" height="3" fill="#3a4050"/>
<ellipse cx="2738.2" cy="1117.1" rx="4.2" ry="3.7" fill="#FF8000"/><rect x="2736.6" y="1115.6" width="3.2" height="3" fill="#3a4050"/>
<ellipse cx="2738.2" cy="1134.7" rx="4.2" ry="3.7" fill="#FF8000"/><rect x="2736.6" y="1133.2" width="3.2" height="3" fill="#3a4050"/>
<ellipse cx="2738.2" cy="1152.3" rx="4.2" ry="3.7" fill="#FF8000"/><rect x="2736.6" y="1150.8" width="3.2" height="3" fill="#3a4050"/>
<ellipse cx="2738.2" cy="1170.0" rx="4.2" ry="3.7" fill="#FF8000"/><rect x="2736.6" y="1168.5" width="3.2" height="3" fill="#3a4050"/>
<ellipse cx="2755.9" cy="1099.4" rx="4.2" ry="3.7" fill="#FF8000"/><rect x="2754.3" y="1097.9" width="3.2" height="3" fill="#3a4050"/>
<ellipse cx="2755.9" cy="1117.1" rx="4.2" ry="3.7" fill="#FF8000"/><rect x="2754.3" y="1115.6" width="3.2" height="3" fill="#3a4050"/>
<ellipse cx="2755.9" cy="1134.7" rx="4.2" ry="3.7" fill="#FF8000"/><rect x="2754.3" y="1133.2" width="3.2" height="3" fill="#3a4050"/>
<ellipse cx="2755.9" cy="1152.3" rx="4.2" ry="3.7" fill="#FF8000"/><rect x="2754.3" y="1150.8" width="3.2" height="3" fill="#3a4050"/>
<ellipse cx="2755.9" cy="1170.0" rx="4.2" ry="3.7" fill="#FF8000"/><rect x="2754.3" y="1168.5" width="3.2" height="3" fill="#3a4050"/>
<ellipse cx="2755.9" cy="1187.6" rx="4.2" ry="3.7" fill="#FF8000"/><rect x="2754.3" y="1186.1" width="3.2" height="3" fill="#3a4050"/>
<ellipse cx="2755.9" cy="1205.2" rx="4.2" ry="3.7" fill="#FF8000"/><rect x="2754.3" y="1203.7" width="3.2" height="3" fill="#3a4050"/>
<ellipse cx="2773.5" cy="1117.1" rx="4.2" ry="3.7" fill="#FF8000"/><rect x="2771.9" y="1115.6" width="3.2" height="3" fill="#3a4050"/>
<ellipse cx="2773.5" cy="1134.7" rx="4.2" ry="3.7" fill="#FF8000"/><rect x="2771.9" y="1133.2" width="3.2" height="3" fill="#3a4050"/>
<ellipse cx="2773.5" cy="1152.3" rx="4.2" ry="3.7" fill="#FF8000"/><rect x="2771.9" y="1150.8" width="3.2" height="3" fill="#3a4050"/>
<ellipse cx="2773.5" cy="1170.0" rx="4.2" ry="3.7" fill="#FF8000"/><rect x="2771.9" y="1168.5" width="3.2" height="3" fill="#3a4050"/>
<ellipse cx="2773.5" cy="1187.6" rx="4.2" ry="3.7" fill="#FF8000"/><rect x="2771.9" y="1186.1" width="3.2" height="3" fill="#3a4050"/>
<ellipse cx="2773.5" cy="1205.2" rx="4.2" ry="3.7" fill="#FF8000"/><rect x="2771.9" y="1203.7" width="3.2" height="3" fill="#3a4050"/>
<ellipse cx="2773.5" cy="1222.8" rx="4.2" ry="3.7" fill="#FF8000"/><rect x="2771.9" y="1221.3" width="3.2" height="3" fill="#3a4050"/>
<ellipse cx="2650.1" cy="1258.1" rx="4.2" ry="3.7" fill="#FF8000"/><rect x="2648.5" y="1256.6" width="3.2" height="3" fill="#3a4050"/>
<ellipse cx="2667.7" cy="1258.1" rx="4.2" ry="3.7" fill="#FF8000"/><rect x="2666.1" y="1256.6" width="3.2" height="3" fill="#3a4050"/>
<ellipse cx="2685.3" cy="1258.1" rx="4.2" ry="3.7" fill="#FF8000"/><rect x="2683.7" y="1256.6" width="3.2" height="3" fill="#3a4050"/>
<ellipse cx="2685.3" cy="1275.7" rx="4.2" ry="3.7" fill="#FF8000"/><rect x="2683.7" y="1274.2" width="3.2" height="3" fill="#3a4050"/>
<ellipse cx="2685.3" cy="1293.4" rx="4.2" ry="3.7" fill="#FF8000"/><rect x="2683.7" y="1291.9" width="3.2" height="3" fill="#3a4050"/>
<ellipse cx="2685.3" cy="1311.0" rx="4.2" ry="3.7" fill="#FF8000"/><rect x="2683.7" y="1309.5" width="3.2" height="3" fill="#3a4050"/>
<ellipse cx="2703.0" cy="1258.1" rx="4.2" ry="3.7" fill="#FF8000"/><rect x="2701.4" y="1256.6" width="3.2" height="3" fill="#3a4050"/>
<ellipse cx="2703.0" cy="1275.7" rx="4.2" ry="3.7" fill="#FF8000"/><rect x="2701.4" y="1274.2" width="3.2" height="3" fill="#3a4050"/>
<ellipse cx="2703.0" cy="1293.4" rx="4.2" ry="3.7" fill="#FF8000"/><rect x="2701.4" y="1291.9" width="3.2" height="3" fill="#3a4050"/>
<ellipse cx="2703.0" cy="1311.0" rx="4.2" ry="3.7" fill="#FF8000"/><rect x="2701.4" y="1309.5" width="3.2" height="3" fill="#3a4050"/>
<ellipse cx="2720.6" cy="1275.7" rx="4.2" ry="3.7" fill="#FF8000"/><rect x="2719.0" y="1274.2" width="3.2" height="3" fill="#3a4050"/>
<ellipse cx="2720.6" cy="1293.4" rx="4.2" ry="3.7" fill="#FF8000"/><rect x="2719.0" y="1291.9" width="3.2" height="3" fill="#3a4050"/>
<ellipse cx="2720.6" cy="1311.0" rx="4.2" ry="3.7" fill="#FF8000"/><rect x="2719.0" y="1309.5" width="3.2" height="3" fill="#3a4050"/>
<ellipse cx="2720.6" cy="1363.9" rx="4.2" ry="3.7" fill="#FF8000"/><rect x="2719.0" y="1362.4" width="3.2" height="3" fill="#3a4050"/>
<ellipse cx="2720.6" cy="1381.5" rx="4.2" ry="3.7" fill="#FF8000"/><rect x="2719.0" y="1380.0" width="3.2" height="3" fill="#3a4050"/>
<ellipse cx="2720.6" cy="1399.1" rx="4.2" ry="3.7" fill="#FF8000"/><rect x="2719.0" y="1397.6" width="3.2" height="3" fill="#3a4050"/>
<ellipse cx="2720.6" cy="1416.8" rx="4.2" ry="3.7" fill="#FF8000"/><rect x="2719.0" y="1415.3" width="3.2" height="3" fill="#3a4050"/>
<ellipse cx="2738.2" cy="1275.7" rx="4.2" ry="3.7" fill="#FF8000"/><rect x="2736.6" y="1274.2" width="3.2" height="3" fill="#3a4050"/>
<ellipse cx="2738.2" cy="1293.4" rx="4.2" ry="3.7" fill="#FF8000"/><rect x="2736.6" y="1291.9" width="3.2" height="3" fill="#3a4050"/>
<ellipse cx="2738.2" cy="1311.0" rx="4.2" ry="3.7" fill="#FF8000"/><rect x="2736.6" y="1309.5" width="3.2" height="3" fill="#3a4050"/>
<ellipse cx="2738.2" cy="1328.6" rx="4.2" ry="3.7" fill="#FF8000"/><rect x="2736.6" y="1327.1" width="3.2" height="3" fill="#3a4050"/>
<ellipse cx="2738.2" cy="1346.2" rx="4.2" ry="3.7" fill="#FF8000"/><rect x="2736.6" y="1344.8" width="3.2" height="3" fill="#3a4050"/>
<ellipse cx="2738.2" cy="1381.5" rx="4.2" ry="3.7" fill="#FF8000"/><rect x="2736.6" y="1380.0" width="3.2" height="3" fill="#3a4050"/>
<ellipse cx="2738.2" cy="1399.1" rx="4.2" ry="3.7" fill="#FF8000"/><rect x="2736.6" y="1397.6" width="3.2" height="3" fill="#3a4050"/>
<ellipse cx="2755.9" cy="1275.7" rx="4.2" ry="3.7" fill="#FF8000"/><rect x="2754.3" y="1274.2" width="3.2" height="3" fill="#3a4050"/>
<ellipse cx="2755.9" cy="1293.4" rx="4.2" ry="3.7" fill="#FF8000"/><rect x="2754.3" y="1291.9" width="3.2" height="3" fill="#3a4050"/>
<ellipse cx="2755.9" cy="1399.1" rx="4.2" ry="3.7" fill="#FF8000"/><rect x="2754.3" y="1397.6" width="3.2" height="3" fill="#3a4050"/>
<ellipse cx="2773.5" cy="1293.4" rx="4.2" ry="3.7" fill="#FF8000"/><rect x="2771.9" y="1291.9" width="3.2" height="3" fill="#3a4050"/>
<ellipse cx="2650.1" cy="1452.0" rx="4.2" ry="3.7" fill="#FF8000"/><rect x="2648.5" y="1450.5" width="3.2" height="3" fill="#3a4050"/>
<ellipse cx="2667.7" cy="1452.0" rx="4.2" ry="3.7" fill="#FF8000"/><rect x="2666.1" y="1450.5" width="3.2" height="3" fill="#3a4050"/>
<ellipse cx="2667.7" cy="1469.7" rx="4.2" ry="3.7" fill="#FF8000"/><rect x="2666.1" y="1468.2" width="3.2" height="3" fill="#3a4050"/>
<ellipse cx="2685.3" cy="1452.0" rx="4.2" ry="3.7" fill="#FF8000"/><rect x="2683.7" y="1450.5" width="3.2" height="3" fill="#3a4050"/>
<ellipse cx="2685.3" cy="1469.7" rx="4.2" ry="3.7" fill="#FF8000"/><rect x="2683.7" y="1468.2" width="3.2" height="3" fill="#3a4050"/>
<ellipse cx="2703.0" cy="1469.7" rx="4.2" ry="3.7" fill="#FF8000"/><rect x="2701.4" y="1468.2" width="3.2" height="3" fill="#3a4050"/>
<ellipse cx="2579.6" cy="1152.3" rx="4.2" ry="3.7" fill="#FF8000"/><rect x="2578.0" y="1150.8" width="3.2" height="3" fill="#3a4050"/>
<ellipse cx="2579.6" cy="1170.0" rx="4.2" ry="3.7" fill="#FF8000"/><rect x="2578.0" y="1168.5" width="3.2" height="3" fill="#3a4050"/>
<ellipse cx="2597.2" cy="1152.3" rx="4.2" ry="3.7" fill="#FF8000"/><rect x="2595.6" y="1150.8" width="3.2" height="3" fill="#3a4050"/>
<ellipse cx="2597.2" cy="1170.0" rx="4.2" ry="3.7" fill="#FF8000"/><rect x="2595.6" y="1168.5" width="3.2" height="3" fill="#3a4050"/>
<ellipse cx="2720.5" cy="1224.1" rx="4.2" ry="3.7" fill="#FF8000"/><rect x="2718.9" y="1222.6" width="3.2" height="3" fill="#3a4050"/>
<rect x="2882.5" y="1061.0" width="31.8" height="14.2" fill="#00A0A4"/>
<rect x="2882.5" y="1087.8" width="31.8" height="14.2" fill="#00A0A4"/>
<rect x="2914.3" y="1061.0" width="31.8" height="14.2" fill="#00A0A4"/>
<rect x="2914.3" y="1087.8" width="31.8" height="14.2" fill="#00A0A4"/>
<rect x="2946.2" y="1061.0" width="31.8" height="14.2" fill="#00A0A4"/>
<rect x="2946.2" y="1087.8" width="31.8" height="14.2" fill="#00A0A4"/>
<rect x="2978.0" y="1061.0" width="31.8" height="14.2" fill="#00A0A4"/>
<rect x="2978.0" y="1087.8" width="31.8" height="14.2" fill="#00A0A4"/>
<rect x="3009.8" y="1061.0" width="31.8" height="14.2" fill="#00A0A4"/>
<rect x="3009.8" y="1087.8" width="31.8" height="14.2" fill="#00A0A4"/>
<path d="M2882.5 1068.5L2914.3 1094.5M2882.5 1094.5L2914.3 1068.5" stroke="#00E0E0" stroke-width="8" fill="none"/>
<path d="M2914.3 1068.5L2946.2 1094.5M2914.3 1094.5L2946.2 1068.5" stroke="#00E0E0" stroke-width="8" fill="none"/>
<path d="M2946.2 1068.5L2978.0 1094.5M2946.2 1094.5L2978.0 1068.5" stroke="#00E0E0" stroke-width="8" fill="none"/>
<path d="M2978.0 1068.5L3009.8 1094.5M2978.0 1094.5L3009.8 1068.5" stroke="#00E0E0" stroke-width="8" fill="none"/>
<path d="M3009.8 1068.5L3041.7 1094.5M3009.8 1094.5L3041.7 1068.5" stroke="#00E0E0" stroke-width="8" fill="none"/>
<path d="M3041.7 1068.5L3073.5 1094.5M3041.7 1094.5L3073.5 1068.5" stroke="#00E0E0" stroke-width="8" fill="none"/>
<rect x="2876.0" y="1060.0" width="13" height="14.2" rx="3" fill="#FF8000"/>
<rect x="2876.0" y="1088.8" width="13" height="14.2" rx="3" fill="#FF8000"/>
<rect x="2876.5" y="1064.5" width="12.0" height="34.0" fill="none" stroke="#FFFF00" stroke-width="1"/>
<rect x="2907.8" y="1060.0" width="13" height="14.2" rx="3" fill="#FF8000"/>
<rect x="2907.8" y="1088.8" width="13" height="14.2" rx="3" fill="#FF8000"/>
<rect x="2908.3" y="1064.5" width="12.0" height="34.0" fill="none" stroke="#FFFF00" stroke-width="1"/>
<rect x="2939.7" y="1060.0" width="13" height="14.2" rx="3" fill="#FF8000"/>
<rect x="2939.7" y="1088.8" width="13" height="14.2" rx="3" fill="#FF8000"/>
<rect x="2940.2" y="1064.5" width="12.0" height="34.0" fill="none" stroke="#FFFF00" stroke-width="1"/>
<rect x="2971.5" y="1060.0" width="13" height="14.2" rx="3" fill="#FF8000"/>
<rect x="2971.5" y="1088.8" width="13" height="14.2" rx="3" fill="#FF8000"/>
<rect x="2972.0" y="1064.5" width="12.0" height="34.0" fill="none" stroke="#FFFF00" stroke-width="1"/>
<rect x="3003.3" y="1060.0" width="13" height="14.2" rx="3" fill="#FF8000"/>
<rect x="3003.3" y="1088.8" width="13" height="14.2" rx="3" fill="#FF8000"/>
<rect x="3003.8" y="1064.5" width="12.0" height="34.0" fill="none" stroke="#FFFF00" stroke-width="1"/>
<rect x="3035.2" y="1060.0" width="13" height="14.2" rx="3" fill="#FF8000"/>
<rect x="3035.2" y="1088.8" width="13" height="14.2" rx="3" fill="#FF8000"/>
<rect x="3035.7" y="1064.5" width="12.0" height="34.0" fill="none" stroke="#FFFF00" stroke-width="1"/>
<rect x="3067.0" y="1060.0" width="13" height="14.2" rx="3" fill="#FF8000"/>
<rect x="3067.0" y="1088.8" width="13" height="14.2" rx="3" fill="#FF8000"/>
<rect x="3067.5" y="1064.5" width="12.0" height="34.0" fill="none" stroke="#FFFF00" stroke-width="1"/>
<path d="M2992.0 1034.0 L2999.0 1034.0 L3012.0 1062.0 L2993.0 1062.0Z" fill="#00E0E0"/>
<ellipse cx="2995.5" cy="1034.0" rx="4.2" ry="3.7" fill="#FF8000"/><rect x="2993.9" y="1032.5" width="3.2" height="3" fill="#3a4050"/>
<path d="M2947.0 1109.0 L2947.6 1133.0" stroke="#00A0A0" stroke-width="10" fill="none" stroke-linecap="butt" stroke-linejoin="round"/>
<path d="M2947.6 1133.3 L2985.7 1142.9" stroke="#00E0E0" stroke-width="8" fill="none" stroke-linecap="butt" stroke-linejoin="round"/>
<circle cx="2947.6" cy="1133.3" r="10.7" fill="#FF8000"/>
<ellipse cx="2947.0" cy="1109.0" rx="4.2" ry="3.7" fill="#FF8000"/><rect x="2945.4" y="1107.5" width="3.2" height="3" fill="#3a4050"/>
<ellipse cx="2985.7" cy="1142.9" rx="4.2" ry="3.7" fill="#FF8000"/><rect x="2984.1" y="1141.4" width="3.2" height="3" fill="#3a4050"/>
<path d="M3001.5 1143.3L3031.5 1165.7M3001.5 1165.7L3031.5 1143.3" stroke="#00E0E0" stroke-width="8" fill="none"/>
<rect x="2995.0" y="1136.0" width="13" height="12.2" rx="3" fill="#FF8000"/>
<rect x="2995.0" y="1160.8" width="13" height="12.2" rx="3" fill="#FF8000"/>
<rect x="2995.5" y="1140.5" width="12.0" height="28.0" fill="none" stroke="#FFFF00" stroke-width="1"/>
<rect x="3025.0" y="1136.0" width="13" height="12.2" rx="3" fill="#FF8000"/>
<rect x="3025.0" y="1160.8" width="13" height="12.2" rx="3" fill="#FF8000"/>
<rect x="3025.5" y="1140.5" width="12.0" height="28.0" fill="none" stroke="#FFFF00" stroke-width="1"/>
<path d="M2818.0 1144.0 L2840.0 1133.5 L2833.0 1155.0Z" fill="#00A0A0"/>
<path d="M2833.0 1155.0 L2828.0 1180.0" stroke="#00E0E0" stroke-width="6" fill="none" stroke-linecap="butt" stroke-linejoin="round"/>
<path d="M2818.0 1144.0L2840.0 1133.5M2818.0 1144.0L2833.0 1155.0M2840.0 1133.5L2833.0 1155.0" stroke="#00E0E0" stroke-width="5" fill="none"/>
<ellipse cx="2818.0" cy="1144.0" rx="4.2" ry="3.7" fill="#FF8000"/><rect x="2816.4" y="1142.5" width="3.2" height="3" fill="#3a4050"/>
<ellipse cx="2840.0" cy="1133.5" rx="4.2" ry="3.7" fill="#FF8000"/><rect x="2838.4" y="1132.0" width="3.2" height="3" fill="#3a4050"/>
<ellipse cx="2833.0" cy="1155.0" rx="4.2" ry="3.7" fill="#FF8000"/><rect x="2831.4" y="1153.5" width="3.2" height="3" fill="#3a4050"/>
<ellipse cx="2828.0" cy="1180.0" rx="4.2" ry="3.7" fill="#FF8000"/><rect x="2826.4" y="1178.5" width="3.2" height="3" fill="#3a4050"/>
<path d="M2887.6 1173.8 L2871.4 1215.0 L2850.0 1250.0" stroke="#00E0E0" stroke-width="9" fill="none" stroke-linecap="butt" stroke-linejoin="round"/>
<path d="M2871.4 1215.0 L2880.0 1240.0" stroke="#00E0E0" stroke-width="8" fill="none" stroke-linecap="butt" stroke-linejoin="round"/>
<path d="M2947.6 1184.8 L2983.3 1180.0" stroke="#00E0E0" stroke-width="7" fill="none" stroke-linecap="butt" stroke-linejoin="round"/>
<path d="M2947.6 1184.8 L2921.4 1210.0 L2912.0 1237.6" stroke="#00E0E0" stroke-width="8" fill="none" stroke-linecap="butt" stroke-linejoin="round"/>
<rect x="2827.9" y="1237.4" width="28.2" height="12.2" fill="#00A0A4"/>
<rect x="2827.9" y="1260.1" width="28.2" height="12.2" fill="#00A0A4"/>
<rect x="2884.3" y="1237.4" width="28.2" height="12.2" fill="#00A0A4"/>
<rect x="2884.3" y="1260.1" width="28.2" height="12.2" fill="#00A0A4"/>
<path d="M2827.9 1243.7L2856.1 1266.0M2827.9 1266.0L2856.1 1243.7" stroke="#00E0E0" stroke-width="8" fill="none"/>
<path d="M2856.1 1243.7L2884.3 1266.0M2856.1 1266.0L2884.3 1243.7" stroke="#00E0E0" stroke-width="8" fill="none"/>
<path d="M2884.3 1243.7L2912.5 1266.0M2884.3 1266.0L2912.5 1243.7" stroke="#00E0E0" stroke-width="8" fill="none"/>
<rect x="2821.4" y="1236.4" width="13" height="12.2" rx="3" fill="#FF8000"/>
<rect x="2821.4" y="1261.1" width="13" height="12.2" rx="3" fill="#FF8000"/>
<rect x="2821.9" y="1240.9" width="12.0" height="27.9" fill="none" stroke="#FFFF00" stroke-width="1"/>
<rect x="2849.6" y="1236.4" width="13" height="12.2" rx="3" fill="#FF8000"/>
<rect x="2849.6" y="1261.1" width="13" height="12.2" rx="3" fill="#FF8000"/>
<rect x="2850.1" y="1240.9" width="12.0" height="27.9" fill="none" stroke="#FFFF00" stroke-width="1"/>
<rect x="2877.8" y="1236.4" width="13" height="12.2" rx="3" fill="#FF8000"/>
<rect x="2877.8" y="1261.1" width="13" height="12.2" rx="3" fill="#FF8000"/>
<rect x="2878.3" y="1240.9" width="12.0" height="27.9" fill="none" stroke="#FFFF00" stroke-width="1"/>
<rect x="2906.0" y="1236.4" width="13" height="12.2" rx="3" fill="#FF8000"/>
<rect x="2906.0" y="1261.1" width="13" height="12.2" rx="3" fill="#FF8000"/>
<rect x="2906.5" y="1240.9" width="12.0" height="27.9" fill="none" stroke="#FFFF00" stroke-width="1"/>
<circle cx="2887.6" cy="1173.8" r="11" fill="#FF8000"/>
<circle cx="2871.4" cy="1215.0" r="11" fill="#FF8000"/>
<circle cx="2947.6" cy="1184.8" r="10.5" fill="#FF8000"/>
<ellipse cx="2983.3" cy="1180.0" rx="4.2" ry="3.7" fill="#FF8000"/><rect x="2981.7" y="1178.5" width="3.2" height="3" fill="#3a4050"/>
<ellipse cx="2921.4" cy="1210.0" rx="4.2" ry="3.7" fill="#FF8000"/><rect x="2919.8" y="1208.5" width="3.2" height="3" fill="#3a4050"/>
<rect x="3047.9" y="1231.5" width="30.0" height="12.6" fill="#00A0A4"/>
<rect x="3047.9" y="1255.0" width="30.0" height="12.6" fill="#00A0A4"/>
<path d="M3017.9 1238.0L3047.9 1261.1M3017.9 1261.1L3047.9 1238.0" stroke="#00E0E0" stroke-width="8" fill="none"/>
<path d="M3047.9 1238.0L3077.8 1261.1M3047.9 1261.1L3077.8 1238.0" stroke="#00E0E0" stroke-width="8" fill="none"/>
<path d="M3077.8 1238.0L3107.8 1261.1M3077.8 1261.1L3107.8 1238.0" stroke="#00E0E0" stroke-width="8" fill="none"/>
<rect x="3011.4" y="1230.5" width="13" height="12.6" rx="3" fill="#FF8000"/>
<rect x="3011.4" y="1256.0" width="13" height="12.6" rx="3" fill="#FF8000"/>
<rect x="3011.9" y="1235.0" width="12.0" height="29.1" fill="none" stroke="#FFFF00" stroke-width="1"/>
<rect x="3041.4" y="1230.5" width="13" height="12.6" rx="3" fill="#FF8000"/>
<rect x="3041.4" y="1256.0" width="13" height="12.6" rx="3" fill="#FF8000"/>
<rect x="3041.9" y="1235.0" width="12.0" height="29.1" fill="none" stroke="#FFFF00" stroke-width="1"/>
<rect x="3071.3" y="1230.5" width="13" height="12.6" rx="3" fill="#FF8000"/>
<rect x="3071.3" y="1256.0" width="13" height="12.6" rx="3" fill="#FF8000"/>
<rect x="3071.8" y="1235.0" width="12.0" height="29.1" fill="none" stroke="#FFFF00" stroke-width="1"/>
<rect x="3101.3" y="1230.5" width="13" height="12.6" rx="3" fill="#FF8000"/>
<rect x="3101.3" y="1256.0" width="13" height="12.6" rx="3" fill="#FF8000"/>
<rect x="3101.8" y="1235.0" width="12.0" height="29.1" fill="none" stroke="#FFFF00" stroke-width="1"/>
<path d="M3056.0 1268.0 L3056.7 1299.5" stroke="#00E0E0" stroke-width="3" fill="none" stroke-linecap="butt" stroke-linejoin="round"/>
<path d="M3110.0 1265.0 L3134.5 1290.0" stroke="#00E0E0" stroke-width="3" fill="none" stroke-linecap="butt" stroke-linejoin="round"/>
<ellipse cx="3056.7" cy="1299.5" rx="4.2" ry="3.7" fill="#FF8000"/><rect x="3055.1" y="1298.0" width="3.2" height="3" fill="#3a4050"/>
<ellipse cx="3134.5" cy="1290.0" rx="4.2" ry="3.7" fill="#FF8000"/><rect x="3132.9" y="1288.5" width="3.2" height="3" fill="#3a4050"/>
<path d="M3077.9 1311.3L3107.8 1333.7M3077.9 1333.7L3107.8 1311.3" stroke="#00E0E0" stroke-width="8" fill="none"/>
<rect x="3071.4" y="1304.0" width="13" height="12.2" rx="3" fill="#FF8000"/>
<rect x="3071.4" y="1328.8" width="13" height="12.2" rx="3" fill="#FF8000"/>
<rect x="3071.9" y="1308.5" width="12.0" height="28.0" fill="none" stroke="#FFFF00" stroke-width="1"/>
<rect x="3101.3" y="1304.0" width="13" height="12.2" rx="3" fill="#FF8000"/>
<rect x="3101.3" y="1328.8" width="13" height="12.2" rx="3" fill="#FF8000"/>
<rect x="3101.8" y="1308.5" width="12.0" height="28.0" fill="none" stroke="#FFFF00" stroke-width="1"/>
<path d="M3075.0 1320.0 L3056.7 1336.0" stroke="#00E0E0" stroke-width="7" fill="none" stroke-linecap="butt" stroke-linejoin="round"/>
<ellipse cx="3056.7" cy="1336.0" rx="4.2" ry="3.7" fill="#FF8000"/><rect x="3055.1" y="1334.5" width="3.2" height="3" fill="#3a4050"/>
<path d="M2919.0 1275.0 L2934.0 1299.5 L2900.0 1310.0" stroke="#00E0E0" stroke-width="4" fill="none" stroke-linecap="butt" stroke-linejoin="round"/>
<path d="M2934.0 1299.5 L2962.0 1310.0" stroke="#00E0E0" stroke-width="6" fill="none" stroke-linecap="butt" stroke-linejoin="round"/>
<path d="M2825.7 1305.0 L2850.0 1306.0 L2850.0 1347.0 L2830.0 1380.0 L2806.0 1384.0Z" fill="#00C8C8"/>
<path d="M2825.7 1325.7 L2830.5 1377.0 L2825.7 1409.3" stroke="#00E0E0" stroke-width="10" fill="none" stroke-linecap="butt" stroke-linejoin="round"/>
<path d="M2944.0 1337.6 L2944.0 1356.7 L2941.7 1391.0" stroke="#00E0E0" stroke-width="10" fill="none" stroke-linecap="butt" stroke-linejoin="round"/>
<path d="M2887.6 1384.5 L2880.0 1418.0" stroke="#00E0E0" stroke-width="10" fill="none" stroke-linecap="butt" stroke-linejoin="round"/>
<path d="M2941.7 1391.0 L2930.0 1418.0" stroke="#00E0E0" stroke-width="10" fill="none" stroke-linecap="butt" stroke-linejoin="round"/>
<path d="M2941.7 1391.0 L2955.0 1418.0" stroke="#00E0E0" stroke-width="10" fill="none" stroke-linecap="butt" stroke-linejoin="round"/>
<path d="M2825.7 1409.3 L2860.0 1420.0" stroke="#00E0E0" stroke-width="9" fill="none" stroke-linecap="butt" stroke-linejoin="round"/>
<rect x="2856.5" y="1307.7" width="26.9" height="13.3" fill="#00A0A4"/>
<rect x="2856.5" y="1332.7" width="26.9" height="13.3" fill="#00A0A4"/>
<rect x="2883.4" y="1307.7" width="26.9" height="13.3" fill="#00A0A4"/>
<rect x="2883.4" y="1332.7" width="26.9" height="13.3" fill="#00A0A4"/>
<rect x="2910.3" y="1307.7" width="26.9" height="13.3" fill="#00A0A4"/>
<rect x="2910.3" y="1332.7" width="26.9" height="13.3" fill="#00A0A4"/>
<rect x="2937.3" y="1307.7" width="26.9" height="13.3" fill="#00A0A4"/>
<rect x="2937.3" y="1332.7" width="26.9" height="13.3" fill="#00A0A4"/>
<path d="M2856.5 1314.7L2883.4 1339.0M2856.5 1339.0L2883.4 1314.7" stroke="#00E0E0" stroke-width="8" fill="none"/>
<path d="M2883.4 1314.7L2910.3 1339.0M2883.4 1339.0L2910.3 1314.7" stroke="#00E0E0" stroke-width="8" fill="none"/>
<path d="M2910.3 1314.7L2937.3 1339.0M2910.3 1339.0L2937.3 1314.7" stroke="#00E0E0" stroke-width="8" fill="none"/>
<path d="M2937.3 1314.7L2964.2 1339.0M2937.3 1339.0L2964.2 1314.7" stroke="#00E0E0" stroke-width="8" fill="none"/>
<path d="M2964.2 1314.7L2991.1 1339.0M2964.2 1339.0L2991.1 1314.7" stroke="#00E0E0" stroke-width="8" fill="none"/>
<rect x="2850.0" y="1306.7" width="13" height="13.3" rx="3" fill="#FF8000"/>
<rect x="2850.0" y="1333.7" width="13" height="13.3" rx="3" fill="#FF8000"/>
<rect x="2850.5" y="1311.2" width="12.0" height="31.3" fill="none" stroke="#FFFF00" stroke-width="1"/>
<rect x="2876.9" y="1306.7" width="13" height="13.3" rx="3" fill="#FF8000"/>
<rect x="2876.9" y="1333.7" width="13" height="13.3" rx="3" fill="#FF8000"/>
<rect x="2877.4" y="1311.2" width="12.0" height="31.3" fill="none" stroke="#FFFF00" stroke-width="1"/>
<rect x="2903.8" y="1306.7" width="13" height="13.3" rx="3" fill="#FF8000"/>
<rect x="2903.8" y="1333.7" width="13" height="13.3" rx="3" fill="#FF8000"/>
<rect x="2904.3" y="1311.2" width="12.0" height="31.3" fill="none" stroke="#FFFF00" stroke-width="1"/>
<rect x="2930.8" y="1306.7" width="13" height="13.3" rx="3" fill="#FF8000"/>
<rect x="2930.8" y="1333.7" width="13" height="13.3" rx="3" fill="#FF8000"/>
<rect x="2931.3" y="1311.2" width="12.0" height="31.3" fill="none" stroke="#FFFF00" stroke-width="1"/>
<rect x="2957.7" y="1306.7" width="13" height="13.3" rx="3" fill="#FF8000"/>
<rect x="2957.7" y="1333.7" width="13" height="13.3" rx="3" fill="#FF8000"/>
<rect x="2958.2" y="1311.2" width="12.0" height="31.3" fill="none" stroke="#FFFF00" stroke-width="1"/>
<rect x="2984.6" y="1306.7" width="13" height="13.3" rx="3" fill="#FF8000"/>
<rect x="2984.6" y="1333.7" width="13" height="13.3" rx="3" fill="#FF8000"/>
<rect x="2985.1" y="1311.2" width="12.0" height="31.3" fill="none" stroke="#FFFF00" stroke-width="1"/>
<path d="M2982.0 1340.0 L2981.7 1375.0" stroke="#00E0E0" stroke-width="3" fill="none" stroke-linecap="butt" stroke-linejoin="round"/>
<circle cx="2825.7" cy="1325.7" r="10.5" fill="#FF8000"/>
<circle cx="2830.5" cy="1377.0" r="10.5" fill="#FF8000"/>
<circle cx="2825.7" cy="1409.3" r="10.5" fill="#FF8000"/>
<circle cx="2887.6" cy="1384.5" r="10.5" fill="#FF8000"/>
<circle cx="2941.7" cy="1391.0" r="10.5" fill="#FF8000"/>
<ellipse cx="2840.0" cy="1306.7" rx="4.2" ry="3.7" fill="#FF8000"/><rect x="2838.4" y="1305.2" width="3.2" height="3" fill="#3a4050"/>
<ellipse cx="2934.0" cy="1299.5" rx="4.2" ry="3.7" fill="#FF8000"/><rect x="2932.4" y="1298.0" width="3.2" height="3" fill="#3a4050"/>
<ellipse cx="2944.0" cy="1337.6" rx="4.2" ry="3.7" fill="#FF8000"/><rect x="2942.4" y="1336.1" width="3.2" height="3" fill="#3a4050"/>
<ellipse cx="2944.0" cy="1356.7" rx="4.2" ry="3.7" fill="#FF8000"/><rect x="2942.4" y="1355.2" width="3.2" height="3" fill="#3a4050"/>
<ellipse cx="2821.0" cy="1355.5" rx="4.2" ry="3.7" fill="#FF8000"/><rect x="2819.4" y="1354.0" width="3.2" height="3" fill="#3a4050"/>
<ellipse cx="2981.7" cy="1375.0" rx="4.2" ry="3.7" fill="#FF8000"/><rect x="2980.1" y="1373.5" width="3.2" height="3" fill="#3a4050"/>
<ellipse cx="3023.8" cy="1366.0" rx="4.2" ry="3.7" fill="#FF8000"/><rect x="3022.2" y="1364.5" width="3.2" height="3" fill="#3a4050"/>
<ellipse cx="2806.0" cy="1384.5" rx="4.2" ry="3.7" fill="#FF8000"/><rect x="2804.4" y="1383.0" width="3.2" height="3" fill="#3a4050"/>
<rect x="2864.4" y="1418.6" width="28.8" height="12.6" fill="#00A0A4"/>
<rect x="2864.4" y="1442.1" width="28.8" height="12.6" fill="#00A0A4"/>
<rect x="2922.0" y="1418.6" width="28.8" height="12.6" fill="#00A0A4"/>
<rect x="2922.0" y="1442.1" width="28.8" height="12.6" fill="#00A0A4"/>
<rect x="2950.8" y="1418.6" width="28.8" height="12.6" fill="#00A0A4"/>
<rect x="2950.8" y="1442.1" width="28.8" height="12.6" fill="#00A0A4"/>
<rect x="2979.5" y="1418.6" width="28.8" height="12.6" fill="#00A0A4"/>
<rect x="2979.5" y="1442.1" width="28.8" height="12.6" fill="#00A0A4"/>
<rect x="3008.3" y="1418.6" width="28.8" height="12.6" fill="#00A0A4"/>
<rect x="3008.3" y="1442.1" width="28.8" height="12.6" fill="#00A0A4"/>
<path d="M2864.4 1425.1L2893.2 1448.2M2864.4 1448.2L2893.2 1425.1" stroke="#00E0E0" stroke-width="8" fill="none"/>
<path d="M2893.2 1425.1L2922.0 1448.2M2893.2 1448.2L2922.0 1425.1" stroke="#00E0E0" stroke-width="8" fill="none"/>
<path d="M2922.0 1425.1L2950.8 1448.2M2922.0 1448.2L2950.8 1425.1" stroke="#00E0E0" stroke-width="8" fill="none"/>
<path d="M2950.8 1425.1L2979.5 1448.2M2950.8 1448.2L2979.5 1425.1" stroke="#00E0E0" stroke-width="8" fill="none"/>
<path d="M2979.5 1425.1L3008.3 1448.2M2979.5 1448.2L3008.3 1425.1" stroke="#00E0E0" stroke-width="8" fill="none"/>
<path d="M3008.3 1425.1L3037.1 1448.2M3008.3 1448.2L3037.1 1425.1" stroke="#00E0E0" stroke-width="8" fill="none"/>
<rect x="2857.9" y="1417.6" width="13" height="12.6" rx="3" fill="#FF8000"/>
<rect x="2857.9" y="1443.1" width="13" height="12.6" rx="3" fill="#FF8000"/>
<rect x="2858.4" y="1422.1" width="12.0" height="29.1" fill="none" stroke="#FFFF00" stroke-width="1"/>
<rect x="2886.7" y="1417.6" width="13" height="12.6" rx="3" fill="#FF8000"/>
<rect x="2886.7" y="1443.1" width="13" height="12.6" rx="3" fill="#FF8000"/>
<rect x="2887.2" y="1422.1" width="12.0" height="29.1" fill="none" stroke="#FFFF00" stroke-width="1"/>
<rect x="2915.5" y="1417.6" width="13" height="12.6" rx="3" fill="#FF8000"/>
<rect x="2915.5" y="1443.1" width="13" height="12.6" rx="3" fill="#FF8000"/>
<rect x="2916.0" y="1422.1" width="12.0" height="29.1" fill="none" stroke="#FFFF00" stroke-width="1"/>
<rect x="2944.2" y="1417.6" width="13" height="12.6" rx="3" fill="#FF8000"/>
<rect x="2944.2" y="1443.1" width="13" height="12.6" rx="3" fill="#FF8000"/>
<rect x="2944.8" y="1422.1" width="12.0" height="29.1" fill="none" stroke="#FFFF00" stroke-width="1"/>
<rect x="2973.0" y="1417.6" width="13" height="12.6" rx="3" fill="#FF8000"/>
<rect x="2973.0" y="1443.1" width="13" height="12.6" rx="3" fill="#FF8000"/>
<rect x="2973.5" y="1422.1" width="12.0" height="29.1" fill="none" stroke="#FFFF00" stroke-width="1"/>
<rect x="3001.8" y="1417.6" width="13" height="12.6" rx="3" fill="#FF8000"/>
<rect x="3001.8" y="1443.1" width="13" height="12.6" rx="3" fill="#FF8000"/>
<rect x="3002.3" y="1422.1" width="12.0" height="29.1" fill="none" stroke="#FFFF00" stroke-width="1"/>
<rect x="3030.6" y="1417.6" width="13" height="12.6" rx="3" fill="#FF8000"/>
<rect x="3030.6" y="1443.1" width="13" height="12.6" rx="3" fill="#FF8000"/>
<rect x="3031.1" y="1422.1" width="12.0" height="29.1" fill="none" stroke="#FFFF00" stroke-width="1"/>
<path d="M2879.3 1437.0 L2892.9 1465.0" stroke="#00E0E0" stroke-width="6" fill="none" stroke-linecap="butt" stroke-linejoin="round"/>
<path d="M2960.0 1455.0 L2979.8 1467.0 L3000.0 1455.0" stroke="#00E0E0" stroke-width="6" fill="none" stroke-linecap="butt" stroke-linejoin="round"/>
<ellipse cx="2879.3" cy="1437.0" rx="4.2" ry="3.7" fill="#FF8000"/><rect x="2877.7" y="1435.5" width="3.2" height="3" fill="#3a4050"/>
<ellipse cx="2892.9" cy="1465.0" rx="4.2" ry="3.7" fill="#FF8000"/><rect x="2891.3" y="1463.5" width="3.2" height="3" fill="#3a4050"/>
<ellipse cx="2979.8" cy="1467.0" rx="4.2" ry="3.7" fill="#FF8000"/><rect x="2978.2" y="1465.5" width="3.2" height="3" fill="#3a4050"/>
<path d="M3093.6 1375.0 L3131.7 1375.0 L3131.7 1470.0 L3093.6 1470.0Z" fill="#00A0A4"/>
<path d="M3100.0 1380.0 L3125.0 1410.5" stroke="#00E0E0" stroke-width="8" fill="none" stroke-linecap="butt" stroke-linejoin="round"/>
<path d="M3125.0 1380.0 L3100.0 1410.5" stroke="#00E0E0" stroke-width="8" fill="none" stroke-linecap="butt" stroke-linejoin="round"/>
<path d="M3100.0 1410.5 L3125.0 1441.0" stroke="#00E0E0" stroke-width="8" fill="none" stroke-linecap="butt" stroke-linejoin="round"/>
<path d="M3125.0 1410.5 L3100.0 1441.0" stroke="#00E0E0" stroke-width="8" fill="none" stroke-linecap="butt" stroke-linejoin="round"/>
<path d="M3100.0 1441.0 L3125.0 1471.5" stroke="#00E0E0" stroke-width="8" fill="none" stroke-linecap="butt" stroke-linejoin="round"/>
<path d="M3125.0 1441.0 L3100.0 1471.5" stroke="#00E0E0" stroke-width="8" fill="none" stroke-linecap="butt" stroke-linejoin="round"/>
<rect x="3093.5" y="1373.0" width="13" height="14" rx="3" fill="#FF8000"/>
<rect x="3118.5" y="1373.0" width="13" height="14" rx="3" fill="#FF8000"/>
<rect x="3093.5" y="1403.5" width="13" height="14" rx="3" fill="#FF8000"/>
<rect x="3118.5" y="1403.5" width="13" height="14" rx="3" fill="#FF8000"/>
<rect x="3093.5" y="1434.0" width="13" height="14" rx="3" fill="#FF8000"/>
<rect x="3118.5" y="1434.0" width="13" height="14" rx="3" fill="#FF8000"/>
<rect x="3093.5" y="1464.5" width="13" height="14" rx="3" fill="#FF8000"/>
<rect x="3118.5" y="1464.5" width="13" height="14" rx="3" fill="#FF8000"/>
<rect x="3094.1" y="1373.5" width="38.1" height="97.0" fill="none" stroke="#FFFF00" stroke-width="1"/>
<rect x="2857.4" y="1502.0" width="13.0" height="13.3" rx="3" fill="#FF8000"/>
<rect x="2857.4" y="1525.7" width="13.0" height="13.3" rx="3" fill="#FF8000"/>
<rect x="2857.9" y="1506.5" width="12.0" height="28.0" fill="none" stroke="#FFFF00" stroke-width="1"/>
<path d="M2846.4 1509.3 L2862.0 1532.0" stroke="#00E0E0" stroke-width="7" fill="none" stroke-linecap="butt" stroke-linejoin="round"/>
<ellipse cx="2846.4" cy="1509.3" rx="4.2" ry="3.7" fill="#FF8000"/><rect x="2844.8" y="1507.8" width="3.2" height="3" fill="#3a4050"/>
<rect x="2914.1" y="1502.0" width="13.0" height="13.3" rx="3" fill="#FF8000"/>
<rect x="2914.1" y="1525.7" width="13.0" height="13.3" rx="3" fill="#FF8000"/>
<rect x="2914.6" y="1506.5" width="12.0" height="28.0" fill="none" stroke="#FFFF00" stroke-width="1"/>
<path d="M2904.8 1533.0 L2918.0 1510.0" stroke="#00E0E0" stroke-width="7" fill="none" stroke-linecap="butt" stroke-linejoin="round"/>
<ellipse cx="2904.8" cy="1533.0" rx="4.2" ry="3.7" fill="#FF8000"/><rect x="2903.2" y="1531.5" width="3.2" height="3" fill="#3a4050"/>
<path d="M2864.0 1539.0 L2884.8 1572.0 L2870.0 1610.0" stroke="#00E0E0" stroke-width="7" fill="none" stroke-linecap="butt" stroke-linejoin="round"/>
<path d="M2884.8 1572.0 L2888.0 1610.0" stroke="#00E0E0" stroke-width="10" fill="none" stroke-linecap="butt" stroke-linejoin="round"/>
<path d="M2921.0 1539.0 L2933.6 1572.0 L2920.0 1610.0" stroke="#00E0E0" stroke-width="10" fill="none" stroke-linecap="butt" stroke-linejoin="round"/>
<path d="M2933.6 1572.0 L2948.0 1610.0" stroke="#00E0E0" stroke-width="10" fill="none" stroke-linecap="butt" stroke-linejoin="round"/>
<rect x="2891.0" y="1606.0" width="27.1" height="12.4" fill="#00A0A4"/>
<rect x="2891.0" y="1629.2" width="27.1" height="12.4" fill="#00A0A4"/>
<rect x="2945.2" y="1606.0" width="27.1" height="12.4" fill="#00A0A4"/>
<rect x="2945.2" y="1629.2" width="27.1" height="12.4" fill="#00A0A4"/>
<rect x="2999.3" y="1606.0" width="27.1" height="12.4" fill="#00A0A4"/>
<rect x="2999.3" y="1629.2" width="27.1" height="12.4" fill="#00A0A4"/>
<path d="M2863.9 1612.4L2891.0 1635.2M2863.9 1635.2L2891.0 1612.4" stroke="#00E0E0" stroke-width="8" fill="none"/>
<path d="M2891.0 1612.4L2918.1 1635.2M2891.0 1635.2L2918.1 1612.4" stroke="#00E0E0" stroke-width="8" fill="none"/>
<path d="M2918.1 1612.4L2945.2 1635.2M2918.1 1635.2L2945.2 1612.4" stroke="#00E0E0" stroke-width="8" fill="none"/>
<path d="M2945.2 1612.4L2972.2 1635.2M2945.2 1635.2L2972.2 1612.4" stroke="#00E0E0" stroke-width="8" fill="none"/>
<path d="M2972.2 1612.4L2999.3 1635.2M2972.2 1635.2L2999.3 1612.4" stroke="#00E0E0" stroke-width="8" fill="none"/>
<path d="M2999.3 1612.4L3026.4 1635.2M2999.3 1635.2L3026.4 1612.4" stroke="#00E0E0" stroke-width="8" fill="none"/>
<rect x="2857.4" y="1605.0" width="13" height="12.4" rx="3" fill="#FF8000"/>
<rect x="2857.4" y="1630.2" width="13" height="12.4" rx="3" fill="#FF8000"/>
<rect x="2857.9" y="1609.5" width="12.0" height="28.6" fill="none" stroke="#FFFF00" stroke-width="1"/>
<rect x="2884.5" y="1605.0" width="13" height="12.4" rx="3" fill="#FF8000"/>
<rect x="2884.5" y="1630.2" width="13" height="12.4" rx="3" fill="#FF8000"/>
<rect x="2885.0" y="1609.5" width="12.0" height="28.6" fill="none" stroke="#FFFF00" stroke-width="1"/>
<rect x="2911.6" y="1605.0" width="13" height="12.4" rx="3" fill="#FF8000"/>
<rect x="2911.6" y="1630.2" width="13" height="12.4" rx="3" fill="#FF8000"/>
<rect x="2912.1" y="1609.5" width="12.0" height="28.6" fill="none" stroke="#FFFF00" stroke-width="1"/>
<rect x="2938.7" y="1605.0" width="13" height="12.4" rx="3" fill="#FF8000"/>
<rect x="2938.7" y="1630.2" width="13" height="12.4" rx="3" fill="#FF8000"/>
<rect x="2939.2" y="1609.5" width="12.0" height="28.6" fill="none" stroke="#FFFF00" stroke-width="1"/>
<rect x="2965.7" y="1605.0" width="13" height="12.4" rx="3" fill="#FF8000"/>
<rect x="2965.7" y="1630.2" width="13" height="12.4" rx="3" fill="#FF8000"/>
<rect x="2966.2" y="1609.5" width="12.0" height="28.6" fill="none" stroke="#FFFF00" stroke-width="1"/>
<rect x="2992.8" y="1605.0" width="13" height="12.4" rx="3" fill="#FF8000"/>
<rect x="2992.8" y="1630.2" width="13" height="12.4" rx="3" fill="#FF8000"/>
<rect x="2993.3" y="1609.5" width="12.0" height="28.6" fill="none" stroke="#FFFF00" stroke-width="1"/>
<rect x="3019.9" y="1605.0" width="13" height="12.4" rx="3" fill="#FF8000"/>
<rect x="3019.9" y="1630.2" width="13" height="12.4" rx="3" fill="#FF8000"/>
<rect x="3020.4" y="1609.5" width="12.0" height="28.6" fill="none" stroke="#FFFF00" stroke-width="1"/>
<path d="M2842.9 1611.0 L2860.0 1635.0" stroke="#00E0E0" stroke-width="6" fill="none" stroke-linecap="butt" stroke-linejoin="round"/>
<ellipse cx="2842.9" cy="1611.0" rx="4.2" ry="3.7" fill="#FF8000"/><rect x="2841.3" y="1609.5" width="3.2" height="3" fill="#3a4050"/>
<circle cx="2884.8" cy="1572.0" r="11" fill="#FF8000"/>
<circle cx="2933.6" cy="1572.0" r="11" fill="#FF8000"/>
<ellipse cx="3037.6" cy="1510.5" rx="4.2" ry="3.7" fill="#FF8000"/><rect x="3036.0" y="1509.0" width="3.2" height="3" fill="#3a4050"/>
<ellipse cx="3134.8" cy="1534.3" rx="4.2" ry="3.7" fill="#FF8000"/><rect x="3133.2" y="1532.8" width="3.2" height="3" fill="#3a4050"/>
<ellipse cx="3134.8" cy="1616.0" rx="4.2" ry="3.7" fill="#FF8000"/><rect x="3133.2" y="1614.5" width="3.2" height="3" fill="#3a4050"/>
<ellipse cx="2802.0" cy="1543.0" rx="4.2" ry="3.7" fill="#FF8000"/><rect x="2800.4" y="1541.5" width="3.2" height="3" fill="#3a4050"/>
<ellipse cx="2809.0" cy="1697.4" rx="4.2" ry="3.7" fill="#FF8000"/><rect x="2807.4" y="1695.9" width="3.2" height="3" fill="#3a4050"/>
<ellipse cx="2891.2" cy="1697.4" rx="4.2" ry="3.7" fill="#FF8000"/><rect x="2889.6" y="1695.9" width="3.2" height="3" fill="#3a4050"/>
<ellipse cx="2971.7" cy="1697.4" rx="4.2" ry="3.7" fill="#FF8000"/><rect x="2970.1" y="1695.9" width="3.2" height="3" fill="#3a4050"/>
<ellipse cx="2981.7" cy="1374.8" rx="4.2" ry="3.7" fill="#FF8000"/><rect x="2980.1" y="1373.3" width="3.2" height="3" fill="#3a4050"/>
<ellipse cx="3135.0" cy="1372.4" rx="4.2" ry="3.7" fill="#FF8000"/><rect x="3133.4" y="1370.9" width="3.2" height="3" fill="#3a4050"/>
<ellipse cx="2830.5" cy="1056.0" rx="4.2" ry="3.7" fill="#FF8000"/><rect x="2828.9" y="1054.5" width="3.2" height="3" fill="#3a4050"/>
<ellipse cx="3134.5" cy="1128.0" rx="4.2" ry="3.7" fill="#FF8000"/><rect x="3132.9" y="1126.5" width="3.2" height="3" fill="#3a4050"/>
<ellipse cx="3134.5" cy="1209.0" rx="4.2" ry="3.7" fill="#FF8000"/><rect x="3132.9" y="1207.5" width="3.2" height="3" fill="#3a4050"/>
<ellipse cx="2402.9" cy="1777.8" rx="4.2" ry="3.7" fill="#FF8000"/><rect x="2401.3" y="1776.3" width="3.2" height="3" fill="#3a4050"/>
<ellipse cx="2646.0" cy="1777.8" rx="4.2" ry="3.7" fill="#FF8000"/><rect x="2644.4" y="1776.3" width="3.2" height="3" fill="#3a4050"/>
<ellipse cx="2727.3" cy="1777.8" rx="4.2" ry="3.7" fill="#FF8000"/><rect x="2725.7" y="1776.3" width="3.2" height="3" fill="#3a4050"/>
<ellipse cx="2808.6" cy="1777.8" rx="4.2" ry="3.7" fill="#FF8000"/><rect x="2807.0" y="1776.3" width="3.2" height="3" fill="#3a4050"/>
<ellipse cx="2890.5" cy="1777.8" rx="4.2" ry="3.7" fill="#FF8000"/><rect x="2888.9" y="1776.3" width="3.2" height="3" fill="#3a4050"/>
<ellipse cx="2971.7" cy="1777.8" rx="4.2" ry="3.7" fill="#FF8000"/><rect x="2970.1" y="1776.3" width="3.2" height="3" fill="#3a4050"/>
<ellipse cx="2727.3" cy="1697.0" rx="4.2" ry="3.7" fill="#FF8000"/><rect x="2725.7" y="1695.5" width="3.2" height="3" fill="#3a4050"/>
<ellipse cx="2808.6" cy="1697.0" rx="4.2" ry="3.7" fill="#FF8000"/><rect x="2807.0" y="1695.5" width="3.2" height="3" fill="#3a4050"/>
<ellipse cx="2890.5" cy="1697.0" rx="4.2" ry="3.7" fill="#FF8000"/><rect x="2888.9" y="1695.5" width="3.2" height="3" fill="#3a4050"/>
<ellipse cx="2971.7" cy="1697.0" rx="4.2" ry="3.7" fill="#FF8000"/><rect x="2970.1" y="1695.5" width="3.2" height="3" fill="#3a4050"/>
<ellipse cx="3052.4" cy="883.6" rx="4.2" ry="3.7" fill="#FF8000"/><rect x="3050.8" y="882.1" width="3.2" height="3" fill="#3a4050"/>
<rect x="2675.0" y="636.0" width="56.0" height="108.0" fill="#008000"/>
<rect x="2675.0" y="757.5" width="56.0" height="96.1" fill="#008000"/>
<rect x="2941.0" y="636.0" width="54.0" height="108.0" fill="#008000"/>
<rect x="2941.0" y="759.0" width="54.0" height="94.6" fill="#008000"/>
<rect x="2731.5" y="584.0" width="210.0" height="242.5" fill="none" stroke="#FFFF00" stroke-width="1"/>
<rect x="2786.0" y="775.7" width="14.0" height="60.9" fill="#FF8000"/>
<rect x="2807.3" y="775.7" width="14.0" height="60.9" fill="#FF8000"/>
<rect x="2828.6" y="775.7" width="14.0" height="60.9" fill="#FF8000"/>
<rect x="2849.9" y="775.7" width="14.0" height="60.9" fill="#FF8000"/>
<rect x="2871.2" y="775.7" width="14.0" height="60.9" fill="#FF8000"/>
<circle cx="2776.5" cy="744.5" r="12.0" fill="#404040"/>
<circle cx="2896.0" cy="744.5" r="12.0" fill="#404040"/>
<ellipse cx="2600.6" cy="689.8" rx="4.2" ry="3.7" fill="#FF8000"/><rect x="2599.0" y="688.3" width="3.2" height="3" fill="#3a4050"/>
<ellipse cx="2642.9" cy="780.8" rx="4.2" ry="3.7" fill="#FF8000"/><rect x="2641.3" y="779.3" width="3.2" height="3" fill="#3a4050"/>
<ellipse cx="2660.7" cy="839.2" rx="4.2" ry="3.7" fill="#FF8000"/><rect x="2659.1" y="837.7" width="3.2" height="3" fill="#3a4050"/>
<ellipse cx="2422.0" cy="929.6" rx="4.2" ry="3.7" fill="#FF8000"/><rect x="2420.4" y="928.1" width="3.2" height="3" fill="#3a4050"/>
<ellipse cx="2804.8" cy="946.9" rx="4.2" ry="3.7" fill="#FF8000"/><rect x="2803.2" y="945.4" width="3.2" height="3" fill="#3a4050"/>
<ellipse cx="2650.0" cy="1026.0" rx="4.2" ry="3.7" fill="#FF8000"/><rect x="2648.4" y="1024.5" width="3.2" height="3" fill="#3a4050"/>
<ellipse cx="2537.5" cy="1039.8" rx="4.2" ry="3.7" fill="#FF8000"/><rect x="2535.9" y="1038.3" width="3.2" height="3" fill="#3a4050"/>
<ellipse cx="2830.0" cy="1054.6" rx="4.2" ry="3.7" fill="#FF8000"/><rect x="2828.4" y="1053.1" width="3.2" height="3" fill="#3a4050"/>
<path d="M2912.0 945.0 L2935.0 945.0 L2940.0 972.0 L2912.0 972.0Z" fill="#00E0E0"/>
<path d="M2980.0 945.0 L3008.0 945.0 L3006.0 972.0 L2980.0 972.0Z" fill="#00E0E0"/>
<rect x="2917.1" y="910.4" width="28.8" height="12.7" fill="#00A0A4"/>
<rect x="2917.1" y="934.3" width="28.8" height="12.7" fill="#00A0A4"/>
<rect x="2945.9" y="910.4" width="28.8" height="12.7" fill="#00A0A4"/>
<rect x="2945.9" y="934.3" width="28.8" height="12.7" fill="#00A0A4"/>
<path d="M2917.1 917.0L2945.9 940.4M2917.1 940.4L2945.9 917.0" stroke="#00E0E0" stroke-width="8" fill="none"/>
<path d="M2945.9 917.0L2974.7 940.4M2945.9 940.4L2974.7 917.0" stroke="#00E0E0" stroke-width="8" fill="none"/>
<path d="M2974.7 917.0L3003.5 940.4M2974.7 940.4L3003.5 917.0" stroke="#00E0E0" stroke-width="8" fill="none"/>
<rect x="2910.6" y="909.4" width="13" height="12.7" rx="3" fill="#FF8000"/>
<rect x="2910.6" y="935.3" width="13" height="12.7" rx="3" fill="#FF8000"/>
<rect x="2911.1" y="913.9" width="12.0" height="29.6" fill="none" stroke="#FFFF00" stroke-width="1"/>
<rect x="2939.4" y="909.4" width="13" height="12.7" rx="3" fill="#FF8000"/>
<rect x="2939.4" y="935.3" width="13" height="12.7" rx="3" fill="#FF8000"/>
<rect x="2939.9" y="913.9" width="12.0" height="29.6" fill="none" stroke="#FFFF00" stroke-width="1"/>
<rect x="2968.2" y="909.4" width="13" height="12.7" rx="3" fill="#FF8000"/>
<rect x="2968.2" y="935.3" width="13" height="12.7" rx="3" fill="#FF8000"/>
<rect x="2968.7" y="913.9" width="12.0" height="29.6" fill="none" stroke="#FFFF00" stroke-width="1"/>
<rect x="2997.0" y="909.4" width="13" height="12.7" rx="3" fill="#FF8000"/>
<rect x="2997.0" y="935.3" width="13" height="12.7" rx="3" fill="#FF8000"/>
<rect x="2997.5" y="913.9" width="12.0" height="29.6" fill="none" stroke="#FFFF00" stroke-width="1"/>
<path d="M2937.0 985.0 L2955.0 990.0 L2980.0 985.0 L2980.0 975.0 L2937.0 960.0Z" fill="#00C8C8"/>
<rect x="2910.6" y="970.6" width="27.2" height="27.2" fill="#FF8000"/>
<rect x="2980.0" y="970.6" width="26.8" height="27.2" fill="#FF8000"/>
<rect x="2926.5" y="965.5" width="65.0" height="38.0" fill="none" stroke="#FFFF00" stroke-width="1"/>
<path d="M2955.0 991.0 L2955.0 1022.5" stroke="#00E0E0" stroke-width="7" fill="none" stroke-linecap="butt" stroke-linejoin="round"/>
<path d="M2940.0 1000.0 L2955.0 1022.5" stroke="#00E0E0" stroke-width="2" fill="none" stroke-linecap="butt" stroke-linejoin="round"/>
<ellipse cx="2955.0" cy="991.0" rx="4.2" ry="3.7" fill="#FF8000"/><rect x="2953.4" y="989.5" width="3.2" height="3" fill="#3a4050"/>
<ellipse cx="2955.0" cy="1022.5" rx="4.2" ry="3.7" fill="#FF8000"/><rect x="2953.4" y="1021.0" width="3.2" height="3" fill="#3a4050"/>
<path d="M2916.5 929.0 L2898.0 942.0" stroke="#00E0E0" stroke-width="7" fill="none" stroke-linecap="butt" stroke-linejoin="round"/>
<ellipse cx="2898.0" cy="942.0" rx="4.2" ry="3.7" fill="#FF8000"/><rect x="2896.4" y="940.5" width="3.2" height="3" fill="#3a4050"/>
<rect x="2717.0" y="874.5" width="16.7" height="20.0" rx="3" fill="#FF8000"/>
<rect x="2746.7" y="874.5" width="16.7" height="20.0" rx="3" fill="#FF8000"/>
<rect x="2721.5" y="875.0" width="37.4" height="19.0" fill="none" stroke="#FFFF00" stroke-width="1"/>
<path d="M2816.6 908.3 L2826.8 888.0 L2849.5 887.5" stroke="#00E0E0" stroke-width="8" fill="none" stroke-linecap="butt" stroke-linejoin="round"/>
<ellipse cx="2816.6" cy="908.3" rx="4.2" ry="3.7" fill="#FF8000"/><rect x="2815.0" y="906.8" width="3.2" height="3" fill="#3a4050"/>
<ellipse cx="2826.8" cy="888.0" rx="4.2" ry="3.7" fill="#FF8000"/><rect x="2825.2" y="886.5" width="3.2" height="3" fill="#3a4050"/>
<ellipse cx="2849.5" cy="887.5" rx="4.2" ry="3.7" fill="#FF8000"/><rect x="2847.9" y="886.0" width="3.2" height="3" fill="#3a4050"/>
<path d="M2867.6 1003.9 L2885.7 1026.0" stroke="#00E0E0" stroke-width="8" fill="none" stroke-linecap="butt" stroke-linejoin="round"/>
<ellipse cx="2867.6" cy="1003.9" rx="4.2" ry="3.7" fill="#FF8000"/><rect x="2866.0" y="1002.4" width="3.2" height="3" fill="#3a4050"/>
<ellipse cx="2885.7" cy="1026.0" rx="4.2" ry="3.7" fill="#FF8000"/><rect x="2884.1" y="1024.5" width="3.2" height="3" fill="#3a4050"/>
<ellipse cx="2804.6" cy="947.3" rx="4.2" ry="3.7" fill="#FF8000"/><rect x="2803.0" y="945.8" width="3.2" height="3" fill="#3a4050"/>
</svg></div>
</body></html>
